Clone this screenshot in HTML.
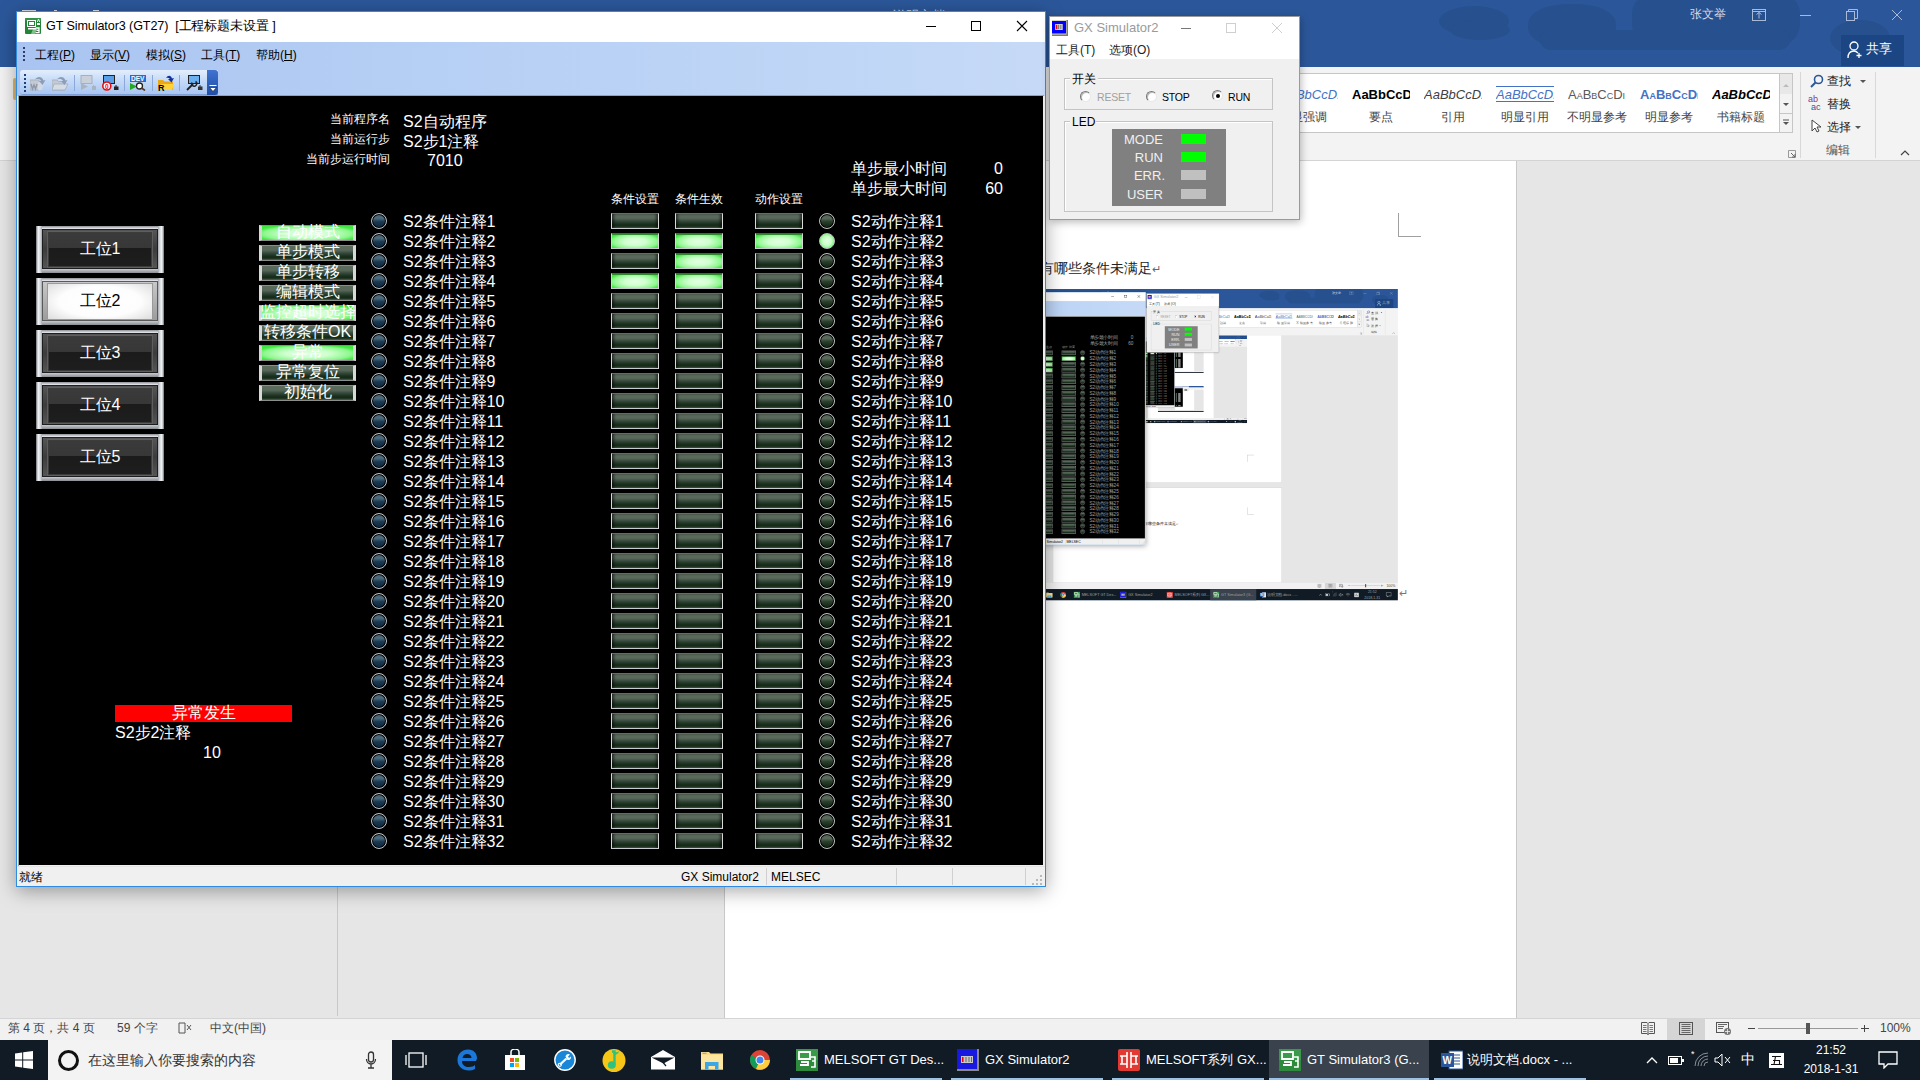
<!DOCTYPE html>
<html><head><meta charset="utf-8"><style>
html,body{margin:0;padding:0;}
body{width:1920px;height:1080px;overflow:hidden;position:relative;font-family:"Liberation Sans", sans-serif;background:#e6e6e6}
.scr{position:absolute;left:0;top:0;width:1920px;height:1080px;overflow:hidden}
</style></head><body><div class="scr"><div style="position:absolute;left:0px;top:0px;width:1920px;height:67px;background:#2b579a"></div><div style="position:absolute;left:1439px;top:6px;width:70px;height:30px;background:#27508e;border-radius:50%"></div><div style="position:absolute;left:1450px;top:20px;width:60px;height:20px;background:#27508e;border-radius:50%"></div><div style="position:absolute;left:1528px;top:4px;width:88px;height:44px;background:#27508e;border-radius:45%"></div><div style="position:absolute;left:1540px;top:25px;width:70px;height:22px;background:#27508e;border-radius:50%"></div><div style="position:absolute;left:1632px;top:-8px;width:168px;height:54px;background:#27508e;border-radius:22px"></div><div style="position:absolute;left:1690px;top:20px;width:100px;height:26px;background:#27508e;border-radius:50%"></div><div style="position:absolute;left:1830px;top:20px;width:60px;height:36px;background:#27508e;border-radius:50%"></div><div style="position:absolute;left:1540px;top:30px;width:250px;height:20px;background:#27508e;border-radius:10px"></div><div style="position:absolute;left:1690px;top:8px;font-size:12px;line-height:12px;color:#d2dbea;white-space:nowrap;">张文举</div><div style="position:absolute;left:893px;top:9px;font-size:13px;line-height:13px;color:#c8d4e6;white-space:nowrap;">说明文档.docx - Word</div><div style="position:absolute;left:22px;top:10px;width:14px;height:1px;background:#d8e0ec"></div><div style="position:absolute;left:54px;top:10px;width:3px;height:1px;background:#d8e0ec"></div><div style="position:absolute;left:93px;top:10px;width:6px;height:1px;background:#d8e0ec"></div><svg width="14" height="12" viewBox="0 0 14 12" style="position:absolute;left:1752px;top:9px"><rect x="0.5" y="0.5" width="13" height="11" fill="none" stroke="#a9bad6"/><path d="M0.5 2.5h13M4.5 5.5l2.5-2 2.5 2M7 3.5v6" fill="none" stroke="#a9bad6"/></svg><div style="position:absolute;left:1800px;top:15px;width:11px;height:1px;background:#a9bad6"></div><svg width="12" height="12" viewBox="0 0 12 12" style="position:absolute;left:1846px;top:9px"><rect x="0.5" y="2.5" width="8" height="9" fill="none" stroke="#a9bad6"/><path d="M2.5 2.5v-2h9v9h-3" fill="none" stroke="#a9bad6"/></svg><svg width="14" height="14" viewBox="0 0 14 14" style="position:absolute;left:1891px;top:9px"><path d="M1 1L11 11M11 1L1 11" stroke="#a9bad6" stroke-width="1"/></svg><div style="position:absolute;left:1841px;top:35px;width:63px;height:31px;background:#1b4683"></div><svg width="16" height="18" viewBox="0 0 16 18" style="position:absolute;left:1847px;top:41px"><circle cx="7" cy="5" r="4" fill="none" stroke="#fff" stroke-width="1.3"/><path d="M1 17c0-5 3-7 6-7 2 0 3 1 4 2" fill="none" stroke="#fff" stroke-width="1.3"/><path d="M12 12v5M9.5 14.5h5" stroke="#fff" stroke-width="1.3"/></svg><div style="position:absolute;left:1866px;top:42px;font-size:13px;line-height:13px;color:#fff;white-space:nowrap;">共享</div><div style="position:absolute;left:0px;top:67px;width:1920px;height:94px;background:#f3f3f3;border-bottom:1px solid #d4d4d4;box-sizing:border-box"></div><div style="position:absolute;left:13px;top:78px;width:4px;height:22px;background:#e1b86b;border-radius:2px"></div><div style="position:absolute;left:1280px;top:73px;width:500px;height:60px;background:#fff;border:1px solid #c6c6c6;box-sizing:border-box"></div><div style="position:absolute;left:1779px;top:73px;width:14px;height:60px;background:#f3f3f3;border:1px solid #c6c6c6;box-sizing:border-box"></div><div style="position:absolute;left:1780px;top:74px;width:12px;height:20px;background:#e8e8e8"></div><svg width="10" height="6" viewBox="0 0 10 6" style="position:absolute;left:1781px;top:82px"><path d="M2 5l3-3 3 3z" fill="#bbb"/></svg><svg width="10" height="6" viewBox="0 0 10 6" style="position:absolute;left:1781px;top:102px"><path d="M2 1l3 3 3-3z" fill="#555"/></svg><div style="position:absolute;left:1780px;top:113px;width:12px;height:1px;background:#c6c6c6"></div><svg width="10" height="8" viewBox="0 0 10 8" style="position:absolute;left:1781px;top:119px"><path d="M2 1h6" stroke="#555"/><path d="M2 3l3 3 3-3z" fill="#555"/></svg><div style="position:absolute;left:1280px;top:86px;width:58px;height:16px;overflow:hidden"><div style="position:absolute;left:0px;top:2px;font-size:13px;line-height:13px;color:#000;white-space:nowrap;"><span style="font-style:italic;color:#4472c4">AaBbCcD.</span></div></div><div style="position:absolute;left:1269px;top:111px;width:80px;font-size:12px;line-height:12px;color:#444;white-space:nowrap;text-align:center;">显强调</div><div style="position:absolute;left:1352px;top:86px;width:58px;height:16px;overflow:hidden"><div style="position:absolute;left:0px;top:2px;font-size:13px;line-height:13px;color:#000;white-space:nowrap;"><span style="font-weight:bold;color:#000">AaBbCcD.</span></div></div><div style="position:absolute;left:1341px;top:111px;width:80px;font-size:12px;line-height:12px;color:#444;white-space:nowrap;text-align:center;">要点</div><div style="position:absolute;left:1424px;top:86px;width:58px;height:16px;overflow:hidden"><div style="position:absolute;left:0px;top:2px;font-size:13px;line-height:13px;color:#000;white-space:nowrap;"><span style="font-style:italic;color:#404040">AaBbCcD.</span></div></div><div style="position:absolute;left:1413px;top:111px;width:80px;font-size:12px;line-height:12px;color:#444;white-space:nowrap;text-align:center;">引用</div><div style="position:absolute;left:1496px;top:86px;width:58px;height:16px;overflow:hidden"><div style="position:absolute;left:0px;top:2px;font-size:13px;line-height:13px;color:#000;white-space:nowrap;"><span style="font-style:italic;color:#4472c4">AaBbCcD.</span></div></div><div style="position:absolute;left:1485px;top:111px;width:80px;font-size:12px;line-height:12px;color:#444;white-space:nowrap;text-align:center;">明显引用</div><div style="position:absolute;left:1568px;top:86px;width:58px;height:16px;overflow:hidden"><div style="position:absolute;left:0px;top:2px;font-size:13px;line-height:13px;color:#000;white-space:nowrap;"><span style="font-variant:small-caps;color:#595959">AaBbCcDı</span></div></div><div style="position:absolute;left:1557px;top:111px;width:80px;font-size:12px;line-height:12px;color:#444;white-space:nowrap;text-align:center;">不明显参考</div><div style="position:absolute;left:1640px;top:86px;width:58px;height:16px;overflow:hidden"><div style="position:absolute;left:0px;top:2px;font-size:13px;line-height:13px;color:#000;white-space:nowrap;"><span style="font-variant:small-caps;color:#4472c4;font-weight:bold">AaBbCcDı</span></div></div><div style="position:absolute;left:1629px;top:111px;width:80px;font-size:12px;line-height:12px;color:#444;white-space:nowrap;text-align:center;">明显参考</div><div style="position:absolute;left:1712px;top:86px;width:58px;height:16px;overflow:hidden"><div style="position:absolute;left:0px;top:2px;font-size:13px;line-height:13px;color:#000;white-space:nowrap;"><span style="font-style:italic;font-weight:bold;color:#000">AaBbCcD</span></div></div><div style="position:absolute;left:1701px;top:111px;width:80px;font-size:12px;line-height:12px;color:#444;white-space:nowrap;text-align:center;">书籍标题</div><div style="position:absolute;left:1496px;top:86px;width:58px;height:1px;background:#4472c4"></div><div style="position:absolute;left:1496px;top:101px;width:58px;height:1px;background:#4472c4"></div><div style="position:absolute;left:1303px;top:74px;width:30px;height:58px;background:transparent"></div><svg width="8" height="8" viewBox="0 0 8 8" style="position:absolute;left:1788px;top:150px"><path d="M0.5 0.5h7v7h-7z" fill="none" stroke="#999"/><path d="M3 3l4 4M7 4v3h-3" stroke="#666" fill="none"/></svg><div style="position:absolute;left:1800px;top:72px;width:1px;height:86px;background:#d8d8d8"></div><div style="position:absolute;left:1875px;top:72px;width:1px;height:86px;background:#d8d8d8"></div><svg width="14" height="14" viewBox="0 0 14 14" style="position:absolute;left:1810px;top:74px"><circle cx="8.5" cy="5.5" r="4" fill="none" stroke="#2b579a" stroke-width="1.6"/><path d="M5.5 8.5L1 13" stroke="#2b579a" stroke-width="2"/></svg><div style="position:absolute;left:1827px;top:75px;font-size:12px;line-height:12px;color:#222;white-space:nowrap;">查找</div><svg width="6" height="4" viewBox="0 0 6 4" style="position:absolute;left:1860px;top:80px"><path d="M0 0h6l-3 3z" fill="#555"/></svg><div style="position:absolute;left:1808px;top:95px;font-size:9px;line-height:9px;color:#7a3b9f;white-space:nowrap;"><span style="font-size:9px;line-height:8px;color:#7a3b9f">ab</span></div><div style="position:absolute;left:1811px;top:103px;font-size:9px;line-height:9px;color:#2b579a;white-space:nowrap;"><span style="font-size:9px;color:#2b579a">ac</span></div><div style="position:absolute;left:1827px;top:98px;font-size:12px;line-height:12px;color:#222;white-space:nowrap;">替换</div><svg width="12" height="14" viewBox="0 0 12 14" style="position:absolute;left:1811px;top:119px"><path d="M1 1v11l3-3 2 4 2-1-2-4h4z" fill="#fff" stroke="#444"/></svg><div style="position:absolute;left:1827px;top:121px;font-size:12px;line-height:12px;color:#222;white-space:nowrap;">选择</div><svg width="6" height="4" viewBox="0 0 6 4" style="position:absolute;left:1855px;top:126px"><path d="M0 0h6l-3 3z" fill="#555"/></svg><div style="position:absolute;left:1810px;top:144px;width:56px;font-size:12px;line-height:12px;color:#555;white-space:nowrap;text-align:center;">编辑</div><svg width="10" height="6" viewBox="0 0 10 6" style="position:absolute;left:1900px;top:150px"><path d="M1 5l4-4 4 4" fill="none" stroke="#444" stroke-width="1.2"/></svg><div style="position:absolute;left:0px;top:161px;width:1920px;height:857px;background:#e6e6e6"></div><div style="position:absolute;left:337px;top:161px;width:1px;height:855px;background:#c8c8c8"></div><div style="position:absolute;left:724px;top:161px;width:793px;height:857px;background:#fff;border-left:1px solid #c8c8c8;border-right:1px solid #c8c8c8;box-sizing:border-box"></div><div style="position:absolute;left:1398px;top:213px;width:1px;height:24px;background:#a0a0a0"></div><div style="position:absolute;left:1398px;top:236px;width:23px;height:1px;background:#a0a0a0"></div><div style="position:absolute;left:1040px;top:261px;font-size:14px;line-height:14px;color:#222;white-space:nowrap;">有哪些条件未满足<span style="font-size:11px;color:#666">&#8629;</span></div><div style="position:absolute;left:1046px;top:289px;width:352px;height:312px;overflow:hidden"><div style="position:absolute;left:-202px;top:0px;width:1920px;height:1080px;transform:scale(0.2885);transform-origin:0 0;overflow:hidden"><div style="position:absolute;left:0px;top:0px;width:1920px;height:67px;background:#2b579a"></div><div style="position:absolute;left:1439px;top:6px;width:70px;height:30px;background:#27508e;border-radius:50%"></div><div style="position:absolute;left:1450px;top:20px;width:60px;height:20px;background:#27508e;border-radius:50%"></div><div style="position:absolute;left:1528px;top:4px;width:88px;height:44px;background:#27508e;border-radius:45%"></div><div style="position:absolute;left:1540px;top:25px;width:70px;height:22px;background:#27508e;border-radius:50%"></div><div style="position:absolute;left:1632px;top:-8px;width:168px;height:54px;background:#27508e;border-radius:22px"></div><div style="position:absolute;left:1690px;top:20px;width:100px;height:26px;background:#27508e;border-radius:50%"></div><div style="position:absolute;left:1830px;top:20px;width:60px;height:36px;background:#27508e;border-radius:50%"></div><div style="position:absolute;left:1540px;top:30px;width:250px;height:20px;background:#27508e;border-radius:10px"></div><div style="position:absolute;left:1690px;top:8px;font-size:12px;line-height:12px;color:#d2dbea;white-space:nowrap;">张文举</div><div style="position:absolute;left:893px;top:9px;font-size:13px;line-height:13px;color:#c8d4e6;white-space:nowrap;">说明文档.docx - Word</div><div style="position:absolute;left:22px;top:10px;width:14px;height:1px;background:#d8e0ec"></div><div style="position:absolute;left:54px;top:10px;width:3px;height:1px;background:#d8e0ec"></div><div style="position:absolute;left:93px;top:10px;width:6px;height:1px;background:#d8e0ec"></div><svg width="14" height="12" viewBox="0 0 14 12" style="position:absolute;left:1752px;top:9px"><rect x="0.5" y="0.5" width="13" height="11" fill="none" stroke="#a9bad6"/><path d="M0.5 2.5h13M4.5 5.5l2.5-2 2.5 2M7 3.5v6" fill="none" stroke="#a9bad6"/></svg><div style="position:absolute;left:1800px;top:15px;width:11px;height:1px;background:#a9bad6"></div><svg width="12" height="12" viewBox="0 0 12 12" style="position:absolute;left:1846px;top:9px"><rect x="0.5" y="2.5" width="8" height="9" fill="none" stroke="#a9bad6"/><path d="M2.5 2.5v-2h9v9h-3" fill="none" stroke="#a9bad6"/></svg><svg width="14" height="14" viewBox="0 0 14 14" style="position:absolute;left:1891px;top:9px"><path d="M1 1L11 11M11 1L1 11" stroke="#a9bad6" stroke-width="1"/></svg><div style="position:absolute;left:1841px;top:35px;width:63px;height:31px;background:#1b4683"></div><svg width="16" height="18" viewBox="0 0 16 18" style="position:absolute;left:1847px;top:41px"><circle cx="7" cy="5" r="4" fill="none" stroke="#fff" stroke-width="1.3"/><path d="M1 17c0-5 3-7 6-7 2 0 3 1 4 2" fill="none" stroke="#fff" stroke-width="1.3"/><path d="M12 12v5M9.5 14.5h5" stroke="#fff" stroke-width="1.3"/></svg><div style="position:absolute;left:1866px;top:42px;font-size:13px;line-height:13px;color:#a0a0a0;white-space:nowrap;">共享</div><div style="position:absolute;left:0px;top:67px;width:1920px;height:94px;background:#f3f3f3;border-bottom:1px solid #d4d4d4;box-sizing:border-box"></div><div style="position:absolute;left:13px;top:78px;width:4px;height:22px;background:#e1b86b;border-radius:2px"></div><div style="position:absolute;left:1280px;top:73px;width:500px;height:60px;background:#fff;border:1px solid #c6c6c6;box-sizing:border-box"></div><div style="position:absolute;left:1779px;top:73px;width:14px;height:60px;background:#f3f3f3;border:1px solid #c6c6c6;box-sizing:border-box"></div><div style="position:absolute;left:1780px;top:74px;width:12px;height:20px;background:#e8e8e8"></div><svg width="10" height="6" viewBox="0 0 10 6" style="position:absolute;left:1781px;top:82px"><path d="M2 5l3-3 3 3z" fill="#bbb"/></svg><svg width="10" height="6" viewBox="0 0 10 6" style="position:absolute;left:1781px;top:102px"><path d="M2 1l3 3 3-3z" fill="#555"/></svg><div style="position:absolute;left:1780px;top:113px;width:12px;height:1px;background:#c6c6c6"></div><svg width="10" height="8" viewBox="0 0 10 8" style="position:absolute;left:1781px;top:119px"><path d="M2 1h6" stroke="#555"/><path d="M2 3l3 3 3-3z" fill="#555"/></svg><div style="position:absolute;left:1280px;top:86px;width:58px;height:16px;overflow:hidden"><div style="position:absolute;left:0px;top:2px;font-size:13px;line-height:13px;color:#000;white-space:nowrap;"><span style="font-style:italic;color:#4472c4">AaBbCcD.</span></div></div><div style="position:absolute;left:1269px;top:111px;width:80px;font-size:12px;line-height:12px;color:#444;white-space:nowrap;text-align:center;">显强调</div><div style="position:absolute;left:1352px;top:86px;width:58px;height:16px;overflow:hidden"><div style="position:absolute;left:0px;top:2px;font-size:13px;line-height:13px;color:#000;white-space:nowrap;"><span style="font-weight:bold;color:#000">AaBbCcD.</span></div></div><div style="position:absolute;left:1341px;top:111px;width:80px;font-size:12px;line-height:12px;color:#444;white-space:nowrap;text-align:center;">要点</div><div style="position:absolute;left:1424px;top:86px;width:58px;height:16px;overflow:hidden"><div style="position:absolute;left:0px;top:2px;font-size:13px;line-height:13px;color:#000;white-space:nowrap;"><span style="font-style:italic;color:#404040">AaBbCcD.</span></div></div><div style="position:absolute;left:1413px;top:111px;width:80px;font-size:12px;line-height:12px;color:#444;white-space:nowrap;text-align:center;">引用</div><div style="position:absolute;left:1496px;top:86px;width:58px;height:16px;overflow:hidden"><div style="position:absolute;left:0px;top:2px;font-size:13px;line-height:13px;color:#000;white-space:nowrap;"><span style="font-style:italic;color:#4472c4">AaBbCcD.</span></div></div><div style="position:absolute;left:1485px;top:111px;width:80px;font-size:12px;line-height:12px;color:#444;white-space:nowrap;text-align:center;">明显引用</div><div style="position:absolute;left:1568px;top:86px;width:58px;height:16px;overflow:hidden"><div style="position:absolute;left:0px;top:2px;font-size:13px;line-height:13px;color:#000;white-space:nowrap;"><span style="font-variant:small-caps;color:#595959">AaBbCcDı</span></div></div><div style="position:absolute;left:1557px;top:111px;width:80px;font-size:12px;line-height:12px;color:#444;white-space:nowrap;text-align:center;">不明显参考</div><div style="position:absolute;left:1640px;top:86px;width:58px;height:16px;overflow:hidden"><div style="position:absolute;left:0px;top:2px;font-size:13px;line-height:13px;color:#000;white-space:nowrap;"><span style="font-variant:small-caps;color:#4472c4;font-weight:bold">AaBbCcDı</span></div></div><div style="position:absolute;left:1629px;top:111px;width:80px;font-size:12px;line-height:12px;color:#444;white-space:nowrap;text-align:center;">明显参考</div><div style="position:absolute;left:1712px;top:86px;width:58px;height:16px;overflow:hidden"><div style="position:absolute;left:0px;top:2px;font-size:13px;line-height:13px;color:#000;white-space:nowrap;"><span style="font-style:italic;font-weight:bold;color:#000">AaBbCcD</span></div></div><div style="position:absolute;left:1701px;top:111px;width:80px;font-size:12px;line-height:12px;color:#444;white-space:nowrap;text-align:center;">书籍标题</div><div style="position:absolute;left:1496px;top:86px;width:58px;height:1px;background:#4472c4"></div><div style="position:absolute;left:1496px;top:101px;width:58px;height:1px;background:#4472c4"></div><div style="position:absolute;left:1303px;top:74px;width:30px;height:58px;background:transparent"></div><svg width="8" height="8" viewBox="0 0 8 8" style="position:absolute;left:1788px;top:150px"><path d="M0.5 0.5h7v7h-7z" fill="none" stroke="#999"/><path d="M3 3l4 4M7 4v3h-3" stroke="#666" fill="none"/></svg><div style="position:absolute;left:1800px;top:72px;width:1px;height:86px;background:#d8d8d8"></div><div style="position:absolute;left:1875px;top:72px;width:1px;height:86px;background:#d8d8d8"></div><svg width="14" height="14" viewBox="0 0 14 14" style="position:absolute;left:1810px;top:74px"><circle cx="8.5" cy="5.5" r="4" fill="none" stroke="#2b579a" stroke-width="1.6"/><path d="M5.5 8.5L1 13" stroke="#2b579a" stroke-width="2"/></svg><div style="position:absolute;left:1827px;top:75px;font-size:12px;line-height:12px;color:#222;white-space:nowrap;">查找</div><svg width="6" height="4" viewBox="0 0 6 4" style="position:absolute;left:1860px;top:80px"><path d="M0 0h6l-3 3z" fill="#555"/></svg><div style="position:absolute;left:1808px;top:95px;font-size:9px;line-height:9px;color:#7a3b9f;white-space:nowrap;"><span style="font-size:9px;line-height:8px;color:#7a3b9f">ab</span></div><div style="position:absolute;left:1811px;top:103px;font-size:9px;line-height:9px;color:#2b579a;white-space:nowrap;"><span style="font-size:9px;color:#2b579a">ac</span></div><div style="position:absolute;left:1827px;top:98px;font-size:12px;line-height:12px;color:#222;white-space:nowrap;">替换</div><svg width="12" height="14" viewBox="0 0 12 14" style="position:absolute;left:1811px;top:119px"><path d="M1 1v11l3-3 2 4 2-1-2-4h4z" fill="#fff" stroke="#444"/></svg><div style="position:absolute;left:1827px;top:121px;font-size:12px;line-height:12px;color:#222;white-space:nowrap;">选择</div><svg width="6" height="4" viewBox="0 0 6 4" style="position:absolute;left:1855px;top:126px"><path d="M0 0h6l-3 3z" fill="#555"/></svg><div style="position:absolute;left:1810px;top:144px;width:56px;font-size:12px;line-height:12px;color:#555;white-space:nowrap;text-align:center;">编辑</div><svg width="10" height="6" viewBox="0 0 10 6" style="position:absolute;left:1900px;top:150px"><path d="M1 5l4-4 4 4" fill="none" stroke="#444" stroke-width="1.2"/></svg><div style="position:absolute;left:0px;top:161px;width:1920px;height:857px;background:#e6e6e6"></div><div style="position:absolute;left:337px;top:161px;width:1px;height:855px;background:#c8c8c8"></div><div style="position:absolute;left:724px;top:161px;width:793px;height:857px;background:#fff;border-left:1px solid #c8c8c8;border-right:1px solid #c8c8c8;box-sizing:border-box"></div><div style="position:absolute;left:844px;top:161px;width:554px;height:305px;overflow:hidden"><div style="position:absolute;left:0px;top:-7px;width:1920px;height:1080px;transform:scale(0.2885);transform-origin:0 0;overflow:hidden"><div style="position:absolute;left:0px;top:0px;width:1920px;height:67px;background:#2b579a"></div><div style="position:absolute;left:1439px;top:6px;width:70px;height:30px;background:#27508e;border-radius:50%"></div><div style="position:absolute;left:1450px;top:20px;width:60px;height:20px;background:#27508e;border-radius:50%"></div><div style="position:absolute;left:1528px;top:4px;width:88px;height:44px;background:#27508e;border-radius:45%"></div><div style="position:absolute;left:1540px;top:25px;width:70px;height:22px;background:#27508e;border-radius:50%"></div><div style="position:absolute;left:1632px;top:-8px;width:168px;height:54px;background:#27508e;border-radius:22px"></div><div style="position:absolute;left:1690px;top:20px;width:100px;height:26px;background:#27508e;border-radius:50%"></div><div style="position:absolute;left:1830px;top:20px;width:60px;height:36px;background:#27508e;border-radius:50%"></div><div style="position:absolute;left:1540px;top:30px;width:250px;height:20px;background:#27508e;border-radius:10px"></div><div style="position:absolute;left:1690px;top:8px;font-size:12px;line-height:12px;color:#d2dbea;white-space:nowrap;">张文举</div><div style="position:absolute;left:893px;top:9px;font-size:13px;line-height:13px;color:#c8d4e6;white-space:nowrap;">说明文档.docx - Word</div><div style="position:absolute;left:22px;top:10px;width:14px;height:1px;background:#d8e0ec"></div><div style="position:absolute;left:54px;top:10px;width:3px;height:1px;background:#d8e0ec"></div><div style="position:absolute;left:93px;top:10px;width:6px;height:1px;background:#d8e0ec"></div><svg width="14" height="12" viewBox="0 0 14 12" style="position:absolute;left:1752px;top:9px"><rect x="0.5" y="0.5" width="13" height="11" fill="none" stroke="#a9bad6"/><path d="M0.5 2.5h13M4.5 5.5l2.5-2 2.5 2M7 3.5v6" fill="none" stroke="#a9bad6"/></svg><div style="position:absolute;left:1800px;top:15px;width:11px;height:1px;background:#a9bad6"></div><svg width="12" height="12" viewBox="0 0 12 12" style="position:absolute;left:1846px;top:9px"><rect x="0.5" y="2.5" width="8" height="9" fill="none" stroke="#a9bad6"/><path d="M2.5 2.5v-2h9v9h-3" fill="none" stroke="#a9bad6"/></svg><svg width="14" height="14" viewBox="0 0 14 14" style="position:absolute;left:1891px;top:9px"><path d="M1 1L11 11M11 1L1 11" stroke="#a9bad6" stroke-width="1"/></svg><div style="position:absolute;left:1841px;top:35px;width:63px;height:31px;background:#1b4683"></div><svg width="16" height="18" viewBox="0 0 16 18" style="position:absolute;left:1847px;top:41px"><circle cx="7" cy="5" r="4" fill="none" stroke="#fff" stroke-width="1.3"/><path d="M1 17c0-5 3-7 6-7 2 0 3 1 4 2" fill="none" stroke="#fff" stroke-width="1.3"/><path d="M12 12v5M9.5 14.5h5" stroke="#fff" stroke-width="1.3"/></svg><div style="position:absolute;left:1866px;top:42px;font-size:13px;line-height:13px;color:#a0a0a0;white-space:nowrap;">共享</div><div style="position:absolute;left:0px;top:67px;width:1920px;height:94px;background:#f3f3f3;border-bottom:1px solid #d4d4d4;box-sizing:border-box"></div><div style="position:absolute;left:13px;top:78px;width:4px;height:22px;background:#e1b86b;border-radius:2px"></div><div style="position:absolute;left:1280px;top:73px;width:500px;height:60px;background:#fff;border:1px solid #c6c6c6;box-sizing:border-box"></div><div style="position:absolute;left:1779px;top:73px;width:14px;height:60px;background:#f3f3f3;border:1px solid #c6c6c6;box-sizing:border-box"></div><div style="position:absolute;left:1780px;top:74px;width:12px;height:20px;background:#e8e8e8"></div><svg width="10" height="6" viewBox="0 0 10 6" style="position:absolute;left:1781px;top:82px"><path d="M2 5l3-3 3 3z" fill="#bbb"/></svg><svg width="10" height="6" viewBox="0 0 10 6" style="position:absolute;left:1781px;top:102px"><path d="M2 1l3 3 3-3z" fill="#555"/></svg><div style="position:absolute;left:1780px;top:113px;width:12px;height:1px;background:#c6c6c6"></div><svg width="10" height="8" viewBox="0 0 10 8" style="position:absolute;left:1781px;top:119px"><path d="M2 1h6" stroke="#555"/><path d="M2 3l3 3 3-3z" fill="#555"/></svg><div style="position:absolute;left:1280px;top:86px;width:58px;height:16px;overflow:hidden"><div style="position:absolute;left:0px;top:2px;font-size:13px;line-height:13px;color:#000;white-space:nowrap;"><span style="font-style:italic;color:#4472c4">AaBbCcD.</span></div></div><div style="position:absolute;left:1269px;top:111px;width:80px;font-size:12px;line-height:12px;color:#444;white-space:nowrap;text-align:center;">显强调</div><div style="position:absolute;left:1352px;top:86px;width:58px;height:16px;overflow:hidden"><div style="position:absolute;left:0px;top:2px;font-size:13px;line-height:13px;color:#000;white-space:nowrap;"><span style="font-weight:bold;color:#000">AaBbCcD.</span></div></div><div style="position:absolute;left:1341px;top:111px;width:80px;font-size:12px;line-height:12px;color:#444;white-space:nowrap;text-align:center;">要点</div><div style="position:absolute;left:1424px;top:86px;width:58px;height:16px;overflow:hidden"><div style="position:absolute;left:0px;top:2px;font-size:13px;line-height:13px;color:#000;white-space:nowrap;"><span style="font-style:italic;color:#404040">AaBbCcD.</span></div></div><div style="position:absolute;left:1413px;top:111px;width:80px;font-size:12px;line-height:12px;color:#444;white-space:nowrap;text-align:center;">引用</div><div style="position:absolute;left:1496px;top:86px;width:58px;height:16px;overflow:hidden"><div style="position:absolute;left:0px;top:2px;font-size:13px;line-height:13px;color:#000;white-space:nowrap;"><span style="font-style:italic;color:#4472c4">AaBbCcD.</span></div></div><div style="position:absolute;left:1485px;top:111px;width:80px;font-size:12px;line-height:12px;color:#444;white-space:nowrap;text-align:center;">明显引用</div><div style="position:absolute;left:1568px;top:86px;width:58px;height:16px;overflow:hidden"><div style="position:absolute;left:0px;top:2px;font-size:13px;line-height:13px;color:#000;white-space:nowrap;"><span style="font-variant:small-caps;color:#595959">AaBbCcDı</span></div></div><div style="position:absolute;left:1557px;top:111px;width:80px;font-size:12px;line-height:12px;color:#444;white-space:nowrap;text-align:center;">不明显参考</div><div style="position:absolute;left:1640px;top:86px;width:58px;height:16px;overflow:hidden"><div style="position:absolute;left:0px;top:2px;font-size:13px;line-height:13px;color:#000;white-space:nowrap;"><span style="font-variant:small-caps;color:#4472c4;font-weight:bold">AaBbCcDı</span></div></div><div style="position:absolute;left:1629px;top:111px;width:80px;font-size:12px;line-height:12px;color:#444;white-space:nowrap;text-align:center;">明显参考</div><div style="position:absolute;left:1712px;top:86px;width:58px;height:16px;overflow:hidden"><div style="position:absolute;left:0px;top:2px;font-size:13px;line-height:13px;color:#000;white-space:nowrap;"><span style="font-style:italic;font-weight:bold;color:#000">AaBbCcD</span></div></div><div style="position:absolute;left:1701px;top:111px;width:80px;font-size:12px;line-height:12px;color:#444;white-space:nowrap;text-align:center;">书籍标题</div><div style="position:absolute;left:1496px;top:86px;width:58px;height:1px;background:#4472c4"></div><div style="position:absolute;left:1496px;top:101px;width:58px;height:1px;background:#4472c4"></div><div style="position:absolute;left:1303px;top:74px;width:30px;height:58px;background:transparent"></div><svg width="8" height="8" viewBox="0 0 8 8" style="position:absolute;left:1788px;top:150px"><path d="M0.5 0.5h7v7h-7z" fill="none" stroke="#999"/><path d="M3 3l4 4M7 4v3h-3" stroke="#666" fill="none"/></svg><div style="position:absolute;left:1800px;top:72px;width:1px;height:86px;background:#d8d8d8"></div><div style="position:absolute;left:1875px;top:72px;width:1px;height:86px;background:#d8d8d8"></div><svg width="14" height="14" viewBox="0 0 14 14" style="position:absolute;left:1810px;top:74px"><circle cx="8.5" cy="5.5" r="4" fill="none" stroke="#2b579a" stroke-width="1.6"/><path d="M5.5 8.5L1 13" stroke="#2b579a" stroke-width="2"/></svg><div style="position:absolute;left:1827px;top:75px;font-size:12px;line-height:12px;color:#222;white-space:nowrap;">查找</div><svg width="6" height="4" viewBox="0 0 6 4" style="position:absolute;left:1860px;top:80px"><path d="M0 0h6l-3 3z" fill="#555"/></svg><div style="position:absolute;left:1808px;top:95px;font-size:9px;line-height:9px;color:#7a3b9f;white-space:nowrap;"><span style="font-size:9px;line-height:8px;color:#7a3b9f">ab</span></div><div style="position:absolute;left:1811px;top:103px;font-size:9px;line-height:9px;color:#2b579a;white-space:nowrap;"><span style="font-size:9px;color:#2b579a">ac</span></div><div style="position:absolute;left:1827px;top:98px;font-size:12px;line-height:12px;color:#222;white-space:nowrap;">替换</div><svg width="12" height="14" viewBox="0 0 12 14" style="position:absolute;left:1811px;top:119px"><path d="M1 1v11l3-3 2 4 2-1-2-4h4z" fill="#fff" stroke="#444"/></svg><div style="position:absolute;left:1827px;top:121px;font-size:12px;line-height:12px;color:#222;white-space:nowrap;">选择</div><svg width="6" height="4" viewBox="0 0 6 4" style="position:absolute;left:1855px;top:126px"><path d="M0 0h6l-3 3z" fill="#555"/></svg><div style="position:absolute;left:1810px;top:144px;width:56px;font-size:12px;line-height:12px;color:#555;white-space:nowrap;text-align:center;">编辑</div><svg width="10" height="6" viewBox="0 0 10 6" style="position:absolute;left:1900px;top:150px"><path d="M1 5l4-4 4 4" fill="none" stroke="#444" stroke-width="1.2"/></svg><div style="position:absolute;left:0px;top:161px;width:1920px;height:857px;background:#e6e6e6"></div><div style="position:absolute;left:337px;top:161px;width:1px;height:855px;background:#c8c8c8"></div><div style="position:absolute;left:724px;top:161px;width:793px;height:857px;background:#fff;border-left:1px solid #c8c8c8;border-right:1px solid #c8c8c8;box-sizing:border-box"></div><div style="position:absolute;left:844px;top:165px;width:554px;height:312px;overflow:hidden"><div style="position:absolute;left:0px;top:0px;width:1920px;height:1080px;transform:scale(0.2885);transform-origin:0 0;overflow:hidden"><div style="position:absolute;left:0px;top:0px;width:1920px;height:67px;background:#2b579a"></div><div style="position:absolute;left:0px;top:67px;width:1920px;height:94px;background:#f3f3f3"></div><div style="position:absolute;left:0px;top:161px;width:1920px;height:857px;background:#e6e6e6"></div><div style="position:absolute;left:724px;top:161px;width:793px;height:857px;background:#fff"></div><div style="position:absolute;left:0px;top:1018px;width:1920px;height:22px;background:#f1f1f1"></div><div style="position:absolute;left:0px;top:1040px;width:1920px;height:40px;background:#111b25"></div><div style="position:absolute;left:16px;top:11px;width:1030px;height:876px;background:#f0f0f0;border:1px solid #2f8be0;box-sizing:border-box"></div><div style="position:absolute;left:17px;top:42px;width:1028px;height:54px;background:#b6cff4"></div><div style="position:absolute;left:18px;top:96px;width:1026px;height:769px;background:#000"></div><div style="position:absolute;left:611px;top:213px;width:48px;height:636px;background:repeating-linear-gradient(180deg,#4a5a4b 0 16px,#000 16px 20px)"></div><div style="position:absolute;left:675px;top:213px;width:48px;height:636px;background:repeating-linear-gradient(180deg,#4a5a4b 0 16px,#000 16px 20px)"></div><div style="position:absolute;left:755px;top:213px;width:48px;height:636px;background:repeating-linear-gradient(180deg,#4a5a4b 0 16px,#000 16px 20px)"></div><div style="position:absolute;left:403px;top:213px;width:100px;height:636px;background:repeating-linear-gradient(180deg,#888 0 16px,#000 16px 20px)"></div><div style="position:absolute;left:851px;top:213px;width:100px;height:636px;background:repeating-linear-gradient(180deg,#888 0 16px,#000 16px 20px)"></div><div style="position:absolute;left:1049px;top:16px;width:251px;height:204px;background:#f0f0f0;border:1px solid #9a9a9a;box-sizing:border-box"></div><div style="position:absolute;left:1112px;top:129px;width:114px;height:77px;background:#808080"></div></div></div><div style="position:absolute;left:844px;top:631px;width:554px;height:312px;overflow:hidden"><div style="position:absolute;left:0px;top:0px;width:1920px;height:1080px;transform:scale(0.2885);transform-origin:0 0;overflow:hidden"><div style="position:absolute;left:0px;top:0px;width:1920px;height:67px;background:#2b579a"></div><div style="position:absolute;left:0px;top:67px;width:1920px;height:94px;background:#f3f3f3"></div><div style="position:absolute;left:0px;top:161px;width:1920px;height:857px;background:#e6e6e6"></div><div style="position:absolute;left:724px;top:161px;width:793px;height:857px;background:#fff"></div><div style="position:absolute;left:0px;top:1018px;width:1920px;height:22px;background:#f1f1f1"></div><div style="position:absolute;left:0px;top:1040px;width:1920px;height:40px;background:#111b25"></div><div style="position:absolute;left:16px;top:11px;width:1030px;height:876px;background:#f0f0f0;border:1px solid #2f8be0;box-sizing:border-box"></div><div style="position:absolute;left:17px;top:42px;width:1028px;height:54px;background:#b6cff4"></div><div style="position:absolute;left:18px;top:96px;width:1026px;height:769px;background:#000"></div><div style="position:absolute;left:611px;top:213px;width:48px;height:636px;background:repeating-linear-gradient(180deg,#4a5a4b 0 16px,#000 16px 20px)"></div><div style="position:absolute;left:675px;top:213px;width:48px;height:636px;background:repeating-linear-gradient(180deg,#4a5a4b 0 16px,#000 16px 20px)"></div><div style="position:absolute;left:755px;top:213px;width:48px;height:636px;background:repeating-linear-gradient(180deg,#4a5a4b 0 16px,#000 16px 20px)"></div><div style="position:absolute;left:403px;top:213px;width:100px;height:636px;background:repeating-linear-gradient(180deg,#888 0 16px,#000 16px 20px)"></div><div style="position:absolute;left:851px;top:213px;width:100px;height:636px;background:repeating-linear-gradient(180deg,#888 0 16px,#000 16px 20px)"></div><div style="position:absolute;left:1049px;top:16px;width:251px;height:204px;background:#f0f0f0;border:1px solid #9a9a9a;box-sizing:border-box"></div><div style="position:absolute;left:1112px;top:129px;width:114px;height:77px;background:#808080"></div></div></div><div style="position:absolute;left:1399px;top:935px;font-size:11px;line-height:11px;color:#777;white-space:nowrap;"><span style="color:#777">&#8629;</span></div><div style="position:absolute;left:0px;top:1018px;width:1920px;height:22px;background:#f1f1f1;border-top:1px solid #d4d4d4;box-sizing:border-box"></div><div style="position:absolute;left:8px;top:1022px;font-size:12px;line-height:12px;color:#444;white-space:nowrap;">第 4 页，共 4 页</div><div style="position:absolute;left:117px;top:1022px;font-size:12px;line-height:12px;color:#444;white-space:nowrap;">59 个字</div><svg width="14" height="12" viewBox="0 0 14 12" style="position:absolute;left:178px;top:1022px"><path d="M1 1h6v10h-6z" fill="none" stroke="#555"/><path d="M9 3l4 5M13 3l-4 5" stroke="#555"/></svg><div style="position:absolute;left:210px;top:1022px;font-size:12px;line-height:12px;color:#444;white-space:nowrap;">中文(中国)</div><div style="position:absolute;left:1667px;top:1019px;width:38px;height:21px;background:#d5d5d5"></div><svg width="14" height="14" viewBox="0 0 14 14" style="position:absolute;left:1641px;top:1022px"><path d="M0.5 0.5h5.5l1 1 1-1h5.5v11h-5.5l-1 1-1-1h-5.5z" fill="none" stroke="#555"/><path d="M7 1.5v11.5" stroke="#555"/><path d="M2 3.5h3.5M2 5.5h3.5M2 7.5h3.5M2 9.5h3.5M8.5 3.5h3.5M8.5 5.5h3.5M8.5 7.5h3.5M8.5 9.5h3.5" stroke="#777"/></svg><svg width="14" height="13" viewBox="0 0 14 13" style="position:absolute;left:1679px;top:1022px"><rect x="0.5" y="0.5" width="13" height="12" fill="none" stroke="#555"/><path d="M2.5 2.5h9M2.5 4.5h9M2.5 6.5h9M2.5 8.5h9M2.5 10.5h9" stroke="#666"/></svg><svg width="16" height="14" viewBox="0 0 16 14" style="position:absolute;left:1716px;top:1022px"><rect x="0.5" y="0.5" width="12" height="10" fill="none" stroke="#555"/><path d="M2 2.5h9M2 4.5h6M2 6.5h5" stroke="#666"/><circle cx="11.5" cy="9.5" r="3.5" fill="#777"/><path d="M9 9.5h5M11.5 7v5" stroke="#f1f1f1" stroke-width="0.8"/></svg><div style="position:absolute;left:1748px;top:1028px;width:7px;height:1px;background:#444"></div><div style="position:absolute;left:1758px;top:1028px;width:100px;height:1px;background:#999"></div><div style="position:absolute;left:1806px;top:1023px;width:4px;height:11px;background:#555"></div><div style="position:absolute;left:1861px;top:1028px;width:8px;height:1px;background:#444"></div><div style="position:absolute;left:1864px;top:1025px;width:1px;height:7px;background:#444"></div><div style="position:absolute;left:1880px;top:1022px;font-size:12px;line-height:12px;color:#444;white-space:nowrap;">100%</div><div style="position:absolute;left:0px;top:1040px;width:1920px;height:40px;background:#111b25"></div><svg width="18" height="18" viewBox="0 0 18 18" style="position:absolute;left:15px;top:1051px"><path d="M0 2.5l7.2-1v7h-7.2zM8.2 1.3l9.8-1.3v8.5h-9.8zM0 9.5h7.2v7l-7.2-1zM8.2 9.5h9.8v8.5l-9.8-1.3z" fill="#fff"/></svg><div style="position:absolute;left:48px;top:1040px;width:344px;height:40px;background:#f3f3f3"></div><div style="position:absolute;left:58px;top:1050px;width:21px;height:21px;box-sizing:border-box;border:3px solid #111;border-radius:50%"></div><div style="position:absolute;left:88px;top:1053px;font-size:14px;line-height:14px;color:#333;white-space:nowrap;">在这里输入你要搜索的内容</div><svg width="12" height="18" viewBox="0 0 12 18" style="position:absolute;left:365px;top:1051px"><rect x="3.5" y="1" width="5" height="10" rx="2.5" fill="none" stroke="#333" stroke-width="1.3"/><path d="M1.5 8c0 3 2 5 4.5 5s4.5-2 4.5-5M6 13v4M3 17h6" fill="none" stroke="#333" stroke-width="1.3"/></svg><svg width="22" height="18" viewBox="0 0 22 18" style="position:absolute;left:405px;top:1051px"><rect x="4" y="2" width="14" height="14" fill="none" stroke="#fff" stroke-width="1.3"/><path d="M1 4v10M21 4v10" stroke="#fff" stroke-width="1.3"/></svg><svg width="22" height="22" viewBox="0 0 22 22" style="position:absolute;left:456px;top:1049px"><path d="M20 12H6c0 4 3 6 7 6 3 0 5-1 6-2v4c-2 1-4 1.5-6 1.5C6 21.5 1.5 17 1.5 11S6 .5 12 .5c6 0 9 4 9 9zM6.5 9h9c0-2.5-2-4-4.5-4S7 6.5 6.5 9z" fill="#1b78d8"/></svg><svg width="22" height="22" viewBox="0 0 22 22" style="position:absolute;left:504px;top:1049px"><path d="M1 6h20v15h-20z" fill="#fff"/><path d="M7 6V3a4 3 0 0 1 8 0v3" fill="none" stroke="#fff" stroke-width="1.5"/><rect x="6" y="9" width="4" height="4" fill="#f25022"/><rect x="11" y="9" width="4" height="4" fill="#7fba00"/><rect x="6" y="14" width="4" height="4" fill="#00a4ef"/><rect x="11" y="14" width="4" height="4" fill="#ffb900"/></svg><svg width="22" height="22" viewBox="0 0 22 22" style="position:absolute;left:554px;top:1049px"><circle cx="11" cy="11" r="10.2" fill="#1a86d8" stroke="#fff" stroke-width="1.4"/><path d="M6 15.5l6.5-6" stroke="#fff" stroke-width="2.2"/><path d="M11.5 7.5a3 3 0 0 1 4.5-2l-2 2 1 1.5 2-1.5a3 3 0 0 1-3.5 3.5z" fill="#fff"/><circle cx="5.8" cy="15.8" r="1.6" fill="none" stroke="#fff" stroke-width="1.1"/></svg><svg width="24" height="24" viewBox="0 0 24 24" style="position:absolute;left:602px;top:1048px"><circle cx="12" cy="12.5" r="11.5" fill="#f5c518"/><path d="M10 3.5h2.5v13" fill="none" stroke="#2ec27e" stroke-width="2.4"/><ellipse cx="9.8" cy="17" rx="4" ry="3.8" fill="#2ec27e"/><path d="M11.5 3.5c2 1 4 1 5.5-0.5-0.5 3-3 4-5.5 3.5z" fill="#2ec27e"/></svg><svg width="24" height="20" viewBox="0 0 24 20" style="position:absolute;left:651px;top:1050px"><path d="M0 7L12 0 24 7v12.5h-24z" fill="#fff"/><path d="M0.5 7.5l23 0-11 6z" fill="#111b25"/><path d="M10 10l5 6" stroke="#111b25" stroke-width="1.2"/></svg><svg width="22" height="19" viewBox="0 0 22 19" style="position:absolute;left:701px;top:1051px"><path d="M0 1h8l1.5 1.5h12.5v16h-22z" fill="#f9dc85"/><path d="M0 4h22v14.5h-22z" fill="#fde7a0"/><path d="M4 18.5v-7.5h13.5v7.5h-3.5v-3.5h-6.5v3.5z" fill="#3ba7e6"/><rect x="1.5" y="1.8" width="4" height="1" fill="#5ab0e0"/></svg><svg width="22" height="22" viewBox="0 0 22 22" style="position:absolute;left:749px;top:1049px"><circle cx="11" cy="11" r="10" fill="#db4437"/><path d="M11 11L2.3 6A10 10 0 0 0 7 20z" fill="#0f9d58"/><path d="M11 11L7 20A10 10 0 0 0 21 11z" fill="#ffcd40"/><circle cx="11" cy="11" r="4.5" fill="#fff"/><circle cx="11" cy="11" r="3.5" fill="#4285f4"/></svg><div style="position:absolute;left:790px;top:1078px;width:152px;height:2px;background:#9cc3e6"></div><svg width="22" height="22" viewBox="0 0 22 22" style="position:absolute;left:796px;top:1049px"><rect x="0" y="0" width="22" height="22" fill="#2e8b3e"/><rect x="0" y="0" width="22" height="11" fill="#3a9a4a"/><path d="M3 3h11v7h-11z" fill="none" stroke="#fff" stroke-width="1.8"/><path d="M5 13h7v3h-8" fill="none" stroke="#fff" stroke-width="1.8"/><path d="M15 8h4v4h-3M19 12v6h-4" fill="none" stroke="#fff" stroke-width="1.6"/></svg><div style="position:absolute;left:824px;top:1053px;font-size:13px;line-height:13px;color:#a0a0a0;white-space:nowrap;">MELSOFT GT Des...</div><div style="position:absolute;left:951px;top:1078px;width:152px;height:2px;background:#9cc3e6"></div><svg width="22" height="22" viewBox="0 0 22 22" style="position:absolute;left:957px;top:1049px"><rect x="0" y="0" width="22" height="22" fill="#8a8a8a"/><rect x="0" y="0" width="20" height="20" fill="#1818e0"/><rect x="4" y="7" width="12" height="7" fill="#c8c8c8"/><rect x="5" y="8" width="1.5" height="5" fill="#e00"/><path d="M9 8v5M12 8v5M14.5 8v5" stroke="#666"/></svg><div style="position:absolute;left:985px;top:1053px;font-size:13px;line-height:13px;color:#a0a0a0;white-space:nowrap;">GX Simulator2</div><div style="position:absolute;left:1112px;top:1078px;width:152px;height:2px;background:#9cc3e6"></div><svg width="22" height="22" viewBox="0 0 22 22" style="position:absolute;left:1118px;top:1049px"><rect x="0" y="0" width="22" height="22" rx="2" fill="#e23a32"/><path d="M2 7h7M9 3v16M13 3v16M13 7h7M4 7v8M18 7v8M2 15h7M13 15h7" stroke="#fff" stroke-width="1.6" fill="none"/></svg><div style="position:absolute;left:1146px;top:1053px;font-size:13px;line-height:13px;color:#a0a0a0;white-space:nowrap;">MELSOFT系列 GX...</div><div style="position:absolute;left:1269px;top:1040px;width:160px;height:40px;background:#39424d"></div><div style="position:absolute;left:1269px;top:1078px;width:160px;height:2px;background:#9cc3e6"></div><svg width="22" height="22" viewBox="0 0 22 22" style="position:absolute;left:1279px;top:1049px"><rect x="0" y="0" width="22" height="22" fill="#2e8b3e"/><rect x="0" y="0" width="22" height="11" fill="#3a9a4a"/><path d="M3 3h11v7h-11z" fill="none" stroke="#fff" stroke-width="1.8"/><path d="M5 13h7v3h-8" fill="none" stroke="#fff" stroke-width="1.8"/><path d="M15 8h4v4h-3M19 12v6h-4" fill="none" stroke="#fff" stroke-width="1.6"/></svg><div style="position:absolute;left:1307px;top:1053px;font-size:13px;line-height:13px;color:#a0a0a0;white-space:nowrap;">GT Simulator3 (G...</div><div style="position:absolute;left:1434px;top:1078px;width:152px;height:2px;background:#9cc3e6"></div><svg width="22" height="22" viewBox="0 0 22 22" style="position:absolute;left:1441px;top:1049px"><rect x="8" y="2" width="14" height="18" fill="#fff" stroke="#2b579a"/><path d="M11 6h8M11 9h8M11 12h8M11 15h8" stroke="#2b579a"/><rect x="0" y="4" width="13" height="14" fill="#2b579a"/><text x="1.5" y="15" font-size="10" font-weight="bold" font-family="Liberation Sans" fill="#fff">W</text></svg><div style="position:absolute;left:1467px;top:1053px;font-size:13px;line-height:13px;color:#a0a0a0;white-space:nowrap;">说明文档.docx - ...</div><svg width="12" height="8" viewBox="0 0 12 8" style="position:absolute;left:1646px;top:1056px"><path d="M1 7l5-5 5 5" fill="none" stroke="#fff" stroke-width="1.3"/></svg><svg width="16" height="10" viewBox="0 0 16 10" style="position:absolute;left:1668px;top:1055px"><rect x="0.5" y="1.5" width="13" height="8" fill="none" stroke="#fff"/><rect x="2" y="3" width="8" height="5" fill="#fff"/><rect x="14" y="4" width="2" height="3" fill="#fff"/></svg><svg width="18" height="18" viewBox="0 0 18 18" style="position:absolute;left:1691px;top:1049px"><text x="0" y="8" font-size="9" fill="#fff" font-family="Liberation Sans">*</text><path d="M4 17a13 13 0 0 1 13-13M7 17a10 10 0 0 1 10-10M10 17a7 7 0 0 1 7-7M13 17a4 4 0 0 1 4-4" fill="none" stroke="#8a8f96" stroke-width="1"/></svg><svg width="18" height="14" viewBox="0 0 18 14" style="position:absolute;left:1714px;top:1053px"><path d="M1 5h3l4-4v12l-4-4h-3z" fill="none" stroke="#fff"/><path d="M11 4l5 6M16 4l-5 6" stroke="#fff"/></svg><div style="position:absolute;left:1741px;top:1052px;font-size:14px;line-height:14px;color:#a0a0a0;white-space:nowrap;">中</div><div style="position:absolute;left:1769px;top:1053px;width:15px;height:15px;background:#fff"></div><svg width="15" height="15" viewBox="0 0 15 15" style="position:absolute;left:1769px;top:1053px"><path d="M3 3.5h9M2 11.5h11M6.5 3.5l-1.5 8M4 7.5h6.5v4" fill="none" stroke="#111" stroke-width="1.1"/></svg><div style="position:absolute;left:1796px;top:1044px;width:70px;font-size:12px;line-height:12px;color:#a0a0a0;white-space:nowrap;text-align:center;">21:52</div><div style="position:absolute;left:1796px;top:1063px;width:70px;font-size:12px;line-height:12px;color:#a0a0a0;white-space:nowrap;text-align:center;">2018-1-31</div><svg width="20" height="18" viewBox="0 0 20 18" style="position:absolute;left:1878px;top:1051px"><path d="M1 1h18v12h-9l-4 4v-4h-5z" fill="none" stroke="#fff" stroke-width="1.3"/></svg><div style="position:absolute;left:16px;top:11px;width:1030px;height:876px;background:#f0f0f0;border:1px solid #2f8be0;box-sizing:border-box;box-shadow:0 4px 18px rgba(0,0,0,0.35)"></div><div style="position:absolute;left:17px;top:12px;width:1028px;height:30px;background:#fff"></div><svg width="16" height="16" viewBox="0 0 16 16" style="position:absolute;left:25px;top:18px"><rect x="0" y="0" width="16" height="16" rx="1" fill="#238636"/><path d="M0 0h16v3h-16z" fill="#3d9a55" opacity="0.6"/><path d="M8 11h4l-2 5h-4z" fill="#7cc08a"/><path d="M2 2h9v7h-9z" fill="#fff"/><path d="M3 3h7v5h-7z" fill="#238636"/><path d="M4 4h5v3h-5z" fill="#fff"/><path d="M3 10h8v1.5h-8z" fill="#fff"/><path d="M10.5 10h3.5v4.7h-3.5M11.5 12.3h2.5" fill="none" stroke="#fff" stroke-width="1.3"/><path d="M12 5h3v2h-3z" fill="#fff"/><path d="M12.3 4l1.2-3 1.2 3" fill="none" stroke="#fff" stroke-width="0.9"/></svg><div style="position:absolute;left:46px;top:20px;font-size:12.6px;line-height:12.6px;color:#000;white-space:nowrap;letter-spacing:-0.1px">GT Simulator3 (GT27)&nbsp;&nbsp;[工程标题未设置 ]</div><div style="position:absolute;left:926px;top:26px;width:10px;height:1px;background:#000"></div><div style="position:absolute;left:971px;top:21px;width:10px;height:10px;border:1px solid #000;box-sizing:border-box"></div><svg width="12" height="12" viewBox="0 0 12 12" style="position:absolute;left:1016px;top:20px"><path d="M1 1L11 11M11 1L1 11" stroke="#000" stroke-width="1.1"/></svg><div style="position:absolute;left:17px;top:42px;width:1028px;height:54px;background:linear-gradient(90deg,#a9c4f1 0%,#b6cff4 40%,#bed5f6 75%,#c6daf7 100%)"></div><div style="position:absolute;left:23px;top:47px;width:2px;height:2px;background:#2a3f66"></div><div style="position:absolute;left:23px;top:51px;width:2px;height:2px;background:#2a3f66"></div><div style="position:absolute;left:23px;top:55px;width:2px;height:2px;background:#2a3f66"></div><div style="position:absolute;left:23px;top:59px;width:2px;height:2px;background:#2a3f66"></div><div style="position:absolute;left:35px;top:49px;font-size:12px;line-height:12px;color:#000;white-space:nowrap;">工程(<u>P</u>)</div><div style="position:absolute;left:90px;top:49px;font-size:12px;line-height:12px;color:#000;white-space:nowrap;">显示(<u>V</u>)</div><div style="position:absolute;left:146px;top:49px;font-size:12px;line-height:12px;color:#000;white-space:nowrap;">模拟(<u>S</u>)</div><div style="position:absolute;left:201px;top:49px;font-size:12px;line-height:12px;color:#000;white-space:nowrap;">工具(<u>T</u>)</div><div style="position:absolute;left:256px;top:49px;font-size:12px;line-height:12px;color:#000;white-space:nowrap;">帮助(<u>H</u>)</div><div style="position:absolute;left:20px;top:70px;width:198px;height:25px;background:linear-gradient(180deg,#e3eefc 0%,#c4daf8 45%,#a9c6f2 100%);border-radius:3px 0 0 3px;border-bottom:1px solid #7d9fd6;box-sizing:border-box"></div><div style="position:absolute;left:207px;top:70px;width:11px;height:25px;background:linear-gradient(180deg,#3f73cf,#1f4fa8);border-radius:0 3px 3px 0"></div><svg width="8" height="9" viewBox="0 0 8 9" style="position:absolute;left:209px;top:84px"><path d="M0.5 1.5h7" stroke="#fff" stroke-width="1"/><path d="M0.5 3.5h7l-3.5 4z" fill="#fff" stroke="#111" stroke-width="0.6"/></svg><div style="position:absolute;left:24px;top:74px;width:2px;height:2px;background:#1e3e78"></div><div style="position:absolute;left:24px;top:78px;width:2px;height:2px;background:#1e3e78"></div><div style="position:absolute;left:24px;top:82px;width:2px;height:2px;background:#1e3e78"></div><div style="position:absolute;left:24px;top:86px;width:2px;height:2px;background:#1e3e78"></div><div style="position:absolute;left:24px;top:90px;width:2px;height:2px;background:#1e3e78"></div><div style="position:absolute;left:74px;top:75px;width:1px;height:16px;background:#8aa8d8"></div><div style="position:absolute;left:124px;top:75px;width:1px;height:16px;background:#8aa8d8"></div><div style="position:absolute;left:152px;top:75px;width:1px;height:16px;background:#8aa8d8"></div><div style="position:absolute;left:179px;top:75px;width:1px;height:16px;background:#8aa8d8"></div><svg width="17" height="16" viewBox="0 0 17 16" style="position:absolute;left:30px;top:75px"><path d="M0 5h9v10h-9z" fill="#c3cad4" stroke="#a3acba" stroke-width="0.8"/><path d="M1 9l1.5 5 1.5-4 1.5 4 1.5-5" fill="none" stroke="#8e98a8" stroke-width="1.4"/><path d="M8 7l6 1-2 7h-4z" fill="#d3d9e2"/><path d="M5 4.5C7 1 12 1 13.5 5.5l2-0.5-3 5-3.5-4 2 0C10 4 8 3.5 5 4.5z" fill="#8e9db6"/></svg><svg width="17" height="16" viewBox="0 0 17 16" style="position:absolute;left:52px;top:75px"><path d="M0 5h5l1.5 1.5h6.5v8.5h-13z" fill="#c3cad4" stroke="#a3acba" stroke-width="0.8"/><path d="M2 9h14l-3 6h-13z" fill="#d6dce5" stroke="#a3acba" stroke-width="0.8"/><path d="M5 4.5C7 1 12 1 13.5 5.5l2-0.5-3 5-3.5-4 2 0C10 4 8 3.5 5 4.5z" fill="#8e9db6"/></svg><svg width="17" height="16" viewBox="0 0 17 16" style="position:absolute;left:80px;top:75px"><rect x="1" y="0.5" width="11" height="8" fill="#c9d0da" stroke="#a7b0bd"/><path d="M1 8l7 3.5-7 3.5z" fill="#aab3c0"/><path d="M12 11h4v4h-4z" fill="#aab3c0"/><path d="M13.5 10v2" stroke="#aab3c0"/></svg><svg width="17" height="16" viewBox="0 0 17 16" style="position:absolute;left:102px;top:75px"><rect x="1.5" y="0.5" width="11" height="8" fill="#5aa0e8" stroke="#222"/><circle cx="4.8" cy="11" r="4" fill="#fff" stroke="#e01010" stroke-width="1.6"/><text x="3" y="13.5" font-size="6.5" font-weight="bold" font-family="Liberation Sans" fill="#e01010">0</text><path d="M12 11.5h4.5v3.5h-4.5z" fill="#222"/><path d="M14 10v2" stroke="#222"/></svg><svg width="17" height="16" viewBox="0 0 17 16" style="position:absolute;left:130px;top:75px"><rect x="0" y="0" width="16" height="7" fill="#1f6fd8"/><text x="1" y="6.3" font-size="6.5" font-weight="bold" font-family="Liberation Sans" fill="#fff">DEV</text><path d="M0 8l7 3.5-7 3.5z" fill="#22aa22"/><circle cx="9.5" cy="11" r="3" fill="#fff" stroke="#222" stroke-width="1.3"/><path d="M11.5 13l3.5 2.5" stroke="#5a3a1a" stroke-width="1.6"/></svg><svg width="17" height="16" viewBox="0 0 17 16" style="position:absolute;left:158px;top:75px"><path d="M0 5h5l1.5 1.5h8.5v8.5h-15z" fill="#e8a81a"/><path d="M3 9h13l-2 6h-14z" fill="#ffd23a"/><text x="0" y="15.5" font-size="9" font-weight="bold" font-family="Liberation Sans" fill="#000">R</text><path d="M8 3C10 0 13 0 14 3.5l2-0.5-2.5 4.5-3.5-3.5 2 0C11 3 9.5 2.5 8 3z" fill="#12329a"/></svg><svg width="17" height="16" viewBox="0 0 17 16" style="position:absolute;left:186px;top:75px"><rect x="2.5" y="0.5" width="11" height="8" fill="#6ab0f0" stroke="#222"/><path d="M1 15l6-6" stroke="#222" stroke-width="1.8"/><path d="M6 7.5a2.5 2.5 0 1 0 3.5 -1" fill="none" stroke="#222" stroke-width="1.5"/><path d="M12 11.5h4.5v3.5h-4.5z" fill="#333"/><path d="M14 10v2" stroke="#333"/></svg><div style="position:absolute;left:18px;top:95px;width:1026px;height:771px;background:#f0f0f0;border-top:1px solid #a0a0a0;border-left:1px solid #a0a0a0;box-sizing:border-box"></div><div style="position:absolute;left:19px;top:96px;width:1024px;height:769px;background:#000"><div style="position:absolute;left:-19px;top:-96px;width:1920px;height:1080px"><div style="position:absolute;right:1530px;top:113px;font-size:12px;line-height:12px;color:#a0a0a0;white-space:nowrap;text-align:right;">当前程序名</div><div style="position:absolute;right:1530px;top:133px;font-size:12px;line-height:12px;color:#a0a0a0;white-space:nowrap;text-align:right;">当前运行步</div><div style="position:absolute;right:1530px;top:153px;font-size:12px;line-height:12px;color:#a0a0a0;white-space:nowrap;text-align:right;">当前步运行时间</div><div style="position:absolute;left:403px;top:114px;font-size:16px;line-height:16px;color:#a0a0a0;white-space:nowrap;">S2自动程序</div><div style="position:absolute;left:403px;top:134px;font-size:16px;line-height:16px;color:#a0a0a0;white-space:nowrap;">S2步1注释</div><div style="position:absolute;left:427px;top:153px;font-size:16px;line-height:16px;color:#a0a0a0;white-space:nowrap;">7010</div><div style="position:absolute;left:851px;top:161px;font-size:16px;line-height:16px;color:#a0a0a0;white-space:nowrap;">单步最小时间</div><div style="position:absolute;left:851px;top:181px;font-size:16px;line-height:16px;color:#a0a0a0;white-space:nowrap;">单步最大时间</div><div style="position:absolute;right:917px;top:161px;font-size:16px;line-height:16px;color:#a0a0a0;white-space:nowrap;text-align:right;">0</div><div style="position:absolute;right:917px;top:181px;font-size:16px;line-height:16px;color:#a0a0a0;white-space:nowrap;text-align:right;">60</div><div style="position:absolute;left:605px;top:193px;width:60px;font-size:12px;line-height:12px;color:#a0a0a0;white-space:nowrap;text-align:center;">条件设置</div><div style="position:absolute;left:669px;top:193px;width:60px;font-size:12px;line-height:12px;color:#a0a0a0;white-space:nowrap;text-align:center;">条件生效</div><div style="position:absolute;left:749px;top:193px;width:60px;font-size:12px;line-height:12px;color:#a0a0a0;white-space:nowrap;text-align:center;">动作设置</div><div style="position:absolute;left:371px;top:213px;width:16px;height:16px;box-sizing:border-box;border-radius:50%;border:1.5px solid #c4c4c4;background:linear-gradient(180deg,#3e5c6e 0%,#4f6d7e 30%,#1b3a52 55%,#0e2b44 85%,#1e3f58 100%);box-shadow:inset 0 0 0 1px #000"></div><div style="position:absolute;left:403px;top:214px;font-size:16px;line-height:16px;color:#a0a0a0;white-space:nowrap;">S2条件注释1</div><div style="position:absolute;left:611px;top:213px;width:48px;height:16px;box-sizing:border-box;border-top:1px solid #6a6a6a;border-left:1px solid #d8d8d8;border-right:1px solid #d8d8d8;border-bottom:1px solid #c8ccd0;background:linear-gradient(180deg,#5b6c5d 0%,#58695a 30%,#33473a 52%,#1a301c 72%,#142a16 86%,#4f614f 100%);box-shadow:inset 3px 0 3px -1px rgba(0,0,0,0.55),inset -3px 0 3px -1px rgba(0,0,0,0.55)"></div><div style="position:absolute;left:675px;top:213px;width:48px;height:16px;box-sizing:border-box;border-top:1px solid #6a6a6a;border-left:1px solid #d8d8d8;border-right:1px solid #d8d8d8;border-bottom:1px solid #c8ccd0;background:linear-gradient(180deg,#5b6c5d 0%,#58695a 30%,#33473a 52%,#1a301c 72%,#142a16 86%,#4f614f 100%);box-shadow:inset 3px 0 3px -1px rgba(0,0,0,0.55),inset -3px 0 3px -1px rgba(0,0,0,0.55)"></div><div style="position:absolute;left:755px;top:213px;width:48px;height:16px;box-sizing:border-box;border-top:1px solid #6a6a6a;border-left:1px solid #d8d8d8;border-right:1px solid #d8d8d8;border-bottom:1px solid #c8ccd0;background:linear-gradient(180deg,#5b6c5d 0%,#58695a 30%,#33473a 52%,#1a301c 72%,#142a16 86%,#4f614f 100%);box-shadow:inset 3px 0 3px -1px rgba(0,0,0,0.55),inset -3px 0 3px -1px rgba(0,0,0,0.55)"></div><div style="position:absolute;left:819px;top:213px;width:16px;height:16px;box-sizing:border-box;border-radius:50%;border:1.5px solid #c4c4c4;background:linear-gradient(180deg,#4a5b4c 0%,#5b6c5d 30%,#2a3e2c 55%,#142a16 85%,#2a3e2c 100%);box-shadow:inset 0 0 0 1px #000"></div><div style="position:absolute;left:851px;top:214px;font-size:16px;line-height:16px;color:#a0a0a0;white-space:nowrap;">S2动作注释1</div><div style="position:absolute;left:371px;top:233px;width:16px;height:16px;box-sizing:border-box;border-radius:50%;border:1.5px solid #c4c4c4;background:linear-gradient(180deg,#3e5c6e 0%,#4f6d7e 30%,#1b3a52 55%,#0e2b44 85%,#1e3f58 100%);box-shadow:inset 0 0 0 1px #000"></div><div style="position:absolute;left:403px;top:234px;font-size:16px;line-height:16px;color:#a0a0a0;white-space:nowrap;">S2条件注释2</div><div style="position:absolute;left:611px;top:233px;width:48px;height:16px;box-sizing:border-box;border-top:1px solid #5a5a5a;border-left:1px solid #d8d8d8;border-right:1px solid #d8d8d8;border-bottom:1px solid #c8ccd0;background:radial-gradient(ellipse 60% 65% at 50% 55%,#e2ffe2 0%,#d0ffd0 40%,#8ef78e 80%,#3ee83e 100%);box-shadow:inset 0 1px 0 #2f8a2f"></div><div style="position:absolute;left:675px;top:233px;width:48px;height:16px;box-sizing:border-box;border-top:1px solid #5a5a5a;border-left:1px solid #d8d8d8;border-right:1px solid #d8d8d8;border-bottom:1px solid #c8ccd0;background:radial-gradient(ellipse 60% 65% at 50% 55%,#e2ffe2 0%,#d0ffd0 40%,#8ef78e 80%,#3ee83e 100%);box-shadow:inset 0 1px 0 #2f8a2f"></div><div style="position:absolute;left:755px;top:233px;width:48px;height:16px;box-sizing:border-box;border-top:1px solid #5a5a5a;border-left:1px solid #d8d8d8;border-right:1px solid #d8d8d8;border-bottom:1px solid #c8ccd0;background:radial-gradient(ellipse 60% 65% at 50% 55%,#e2ffe2 0%,#d0ffd0 40%,#8ef78e 80%,#3ee83e 100%);box-shadow:inset 0 1px 0 #2f8a2f"></div><div style="position:absolute;left:819px;top:233px;width:16px;height:16px;box-sizing:border-box;border-radius:50%;border:1.5px solid #c4c4c4;background:radial-gradient(circle at 50% 50%,#e8ffe8 0%,#c8ffc8 45%,#60f060 85%,#30e030 100%);"></div><div style="position:absolute;left:851px;top:234px;font-size:16px;line-height:16px;color:#a0a0a0;white-space:nowrap;">S2动作注释2</div><div style="position:absolute;left:371px;top:253px;width:16px;height:16px;box-sizing:border-box;border-radius:50%;border:1.5px solid #c4c4c4;background:linear-gradient(180deg,#3e5c6e 0%,#4f6d7e 30%,#1b3a52 55%,#0e2b44 85%,#1e3f58 100%);box-shadow:inset 0 0 0 1px #000"></div><div style="position:absolute;left:403px;top:254px;font-size:16px;line-height:16px;color:#a0a0a0;white-space:nowrap;">S2条件注释3</div><div style="position:absolute;left:611px;top:253px;width:48px;height:16px;box-sizing:border-box;border-top:1px solid #6a6a6a;border-left:1px solid #d8d8d8;border-right:1px solid #d8d8d8;border-bottom:1px solid #c8ccd0;background:linear-gradient(180deg,#5b6c5d 0%,#58695a 30%,#33473a 52%,#1a301c 72%,#142a16 86%,#4f614f 100%);box-shadow:inset 3px 0 3px -1px rgba(0,0,0,0.55),inset -3px 0 3px -1px rgba(0,0,0,0.55)"></div><div style="position:absolute;left:675px;top:253px;width:48px;height:16px;box-sizing:border-box;border-top:1px solid #5a5a5a;border-left:1px solid #d8d8d8;border-right:1px solid #d8d8d8;border-bottom:1px solid #c8ccd0;background:radial-gradient(ellipse 60% 65% at 50% 55%,#e2ffe2 0%,#d0ffd0 40%,#8ef78e 80%,#3ee83e 100%);box-shadow:inset 0 1px 0 #2f8a2f"></div><div style="position:absolute;left:755px;top:253px;width:48px;height:16px;box-sizing:border-box;border-top:1px solid #6a6a6a;border-left:1px solid #d8d8d8;border-right:1px solid #d8d8d8;border-bottom:1px solid #c8ccd0;background:linear-gradient(180deg,#5b6c5d 0%,#58695a 30%,#33473a 52%,#1a301c 72%,#142a16 86%,#4f614f 100%);box-shadow:inset 3px 0 3px -1px rgba(0,0,0,0.55),inset -3px 0 3px -1px rgba(0,0,0,0.55)"></div><div style="position:absolute;left:819px;top:253px;width:16px;height:16px;box-sizing:border-box;border-radius:50%;border:1.5px solid #c4c4c4;background:linear-gradient(180deg,#4a5b4c 0%,#5b6c5d 30%,#2a3e2c 55%,#142a16 85%,#2a3e2c 100%);box-shadow:inset 0 0 0 1px #000"></div><div style="position:absolute;left:851px;top:254px;font-size:16px;line-height:16px;color:#a0a0a0;white-space:nowrap;">S2动作注释3</div><div style="position:absolute;left:371px;top:273px;width:16px;height:16px;box-sizing:border-box;border-radius:50%;border:1.5px solid #c4c4c4;background:linear-gradient(180deg,#3e5c6e 0%,#4f6d7e 30%,#1b3a52 55%,#0e2b44 85%,#1e3f58 100%);box-shadow:inset 0 0 0 1px #000"></div><div style="position:absolute;left:403px;top:274px;font-size:16px;line-height:16px;color:#a0a0a0;white-space:nowrap;">S2条件注释4</div><div style="position:absolute;left:611px;top:273px;width:48px;height:16px;box-sizing:border-box;border-top:1px solid #5a5a5a;border-left:1px solid #d8d8d8;border-right:1px solid #d8d8d8;border-bottom:1px solid #c8ccd0;background:radial-gradient(ellipse 60% 65% at 50% 55%,#e2ffe2 0%,#d0ffd0 40%,#8ef78e 80%,#3ee83e 100%);box-shadow:inset 0 1px 0 #2f8a2f"></div><div style="position:absolute;left:675px;top:273px;width:48px;height:16px;box-sizing:border-box;border-top:1px solid #5a5a5a;border-left:1px solid #d8d8d8;border-right:1px solid #d8d8d8;border-bottom:1px solid #c8ccd0;background:radial-gradient(ellipse 60% 65% at 50% 55%,#e2ffe2 0%,#d0ffd0 40%,#8ef78e 80%,#3ee83e 100%);box-shadow:inset 0 1px 0 #2f8a2f"></div><div style="position:absolute;left:755px;top:273px;width:48px;height:16px;box-sizing:border-box;border-top:1px solid #6a6a6a;border-left:1px solid #d8d8d8;border-right:1px solid #d8d8d8;border-bottom:1px solid #c8ccd0;background:linear-gradient(180deg,#5b6c5d 0%,#58695a 30%,#33473a 52%,#1a301c 72%,#142a16 86%,#4f614f 100%);box-shadow:inset 3px 0 3px -1px rgba(0,0,0,0.55),inset -3px 0 3px -1px rgba(0,0,0,0.55)"></div><div style="position:absolute;left:819px;top:273px;width:16px;height:16px;box-sizing:border-box;border-radius:50%;border:1.5px solid #c4c4c4;background:linear-gradient(180deg,#4a5b4c 0%,#5b6c5d 30%,#2a3e2c 55%,#142a16 85%,#2a3e2c 100%);box-shadow:inset 0 0 0 1px #000"></div><div style="position:absolute;left:851px;top:274px;font-size:16px;line-height:16px;color:#a0a0a0;white-space:nowrap;">S2动作注释4</div><div style="position:absolute;left:371px;top:293px;width:16px;height:16px;box-sizing:border-box;border-radius:50%;border:1.5px solid #c4c4c4;background:linear-gradient(180deg,#3e5c6e 0%,#4f6d7e 30%,#1b3a52 55%,#0e2b44 85%,#1e3f58 100%);box-shadow:inset 0 0 0 1px #000"></div><div style="position:absolute;left:403px;top:294px;font-size:16px;line-height:16px;color:#a0a0a0;white-space:nowrap;">S2条件注释5</div><div style="position:absolute;left:611px;top:293px;width:48px;height:16px;box-sizing:border-box;border-top:1px solid #6a6a6a;border-left:1px solid #d8d8d8;border-right:1px solid #d8d8d8;border-bottom:1px solid #c8ccd0;background:linear-gradient(180deg,#5b6c5d 0%,#58695a 30%,#33473a 52%,#1a301c 72%,#142a16 86%,#4f614f 100%);box-shadow:inset 3px 0 3px -1px rgba(0,0,0,0.55),inset -3px 0 3px -1px rgba(0,0,0,0.55)"></div><div style="position:absolute;left:675px;top:293px;width:48px;height:16px;box-sizing:border-box;border-top:1px solid #6a6a6a;border-left:1px solid #d8d8d8;border-right:1px solid #d8d8d8;border-bottom:1px solid #c8ccd0;background:linear-gradient(180deg,#5b6c5d 0%,#58695a 30%,#33473a 52%,#1a301c 72%,#142a16 86%,#4f614f 100%);box-shadow:inset 3px 0 3px -1px rgba(0,0,0,0.55),inset -3px 0 3px -1px rgba(0,0,0,0.55)"></div><div style="position:absolute;left:755px;top:293px;width:48px;height:16px;box-sizing:border-box;border-top:1px solid #6a6a6a;border-left:1px solid #d8d8d8;border-right:1px solid #d8d8d8;border-bottom:1px solid #c8ccd0;background:linear-gradient(180deg,#5b6c5d 0%,#58695a 30%,#33473a 52%,#1a301c 72%,#142a16 86%,#4f614f 100%);box-shadow:inset 3px 0 3px -1px rgba(0,0,0,0.55),inset -3px 0 3px -1px rgba(0,0,0,0.55)"></div><div style="position:absolute;left:819px;top:293px;width:16px;height:16px;box-sizing:border-box;border-radius:50%;border:1.5px solid #c4c4c4;background:linear-gradient(180deg,#4a5b4c 0%,#5b6c5d 30%,#2a3e2c 55%,#142a16 85%,#2a3e2c 100%);box-shadow:inset 0 0 0 1px #000"></div><div style="position:absolute;left:851px;top:294px;font-size:16px;line-height:16px;color:#a0a0a0;white-space:nowrap;">S2动作注释5</div><div style="position:absolute;left:371px;top:313px;width:16px;height:16px;box-sizing:border-box;border-radius:50%;border:1.5px solid #c4c4c4;background:linear-gradient(180deg,#3e5c6e 0%,#4f6d7e 30%,#1b3a52 55%,#0e2b44 85%,#1e3f58 100%);box-shadow:inset 0 0 0 1px #000"></div><div style="position:absolute;left:403px;top:314px;font-size:16px;line-height:16px;color:#a0a0a0;white-space:nowrap;">S2条件注释6</div><div style="position:absolute;left:611px;top:313px;width:48px;height:16px;box-sizing:border-box;border-top:1px solid #6a6a6a;border-left:1px solid #d8d8d8;border-right:1px solid #d8d8d8;border-bottom:1px solid #c8ccd0;background:linear-gradient(180deg,#5b6c5d 0%,#58695a 30%,#33473a 52%,#1a301c 72%,#142a16 86%,#4f614f 100%);box-shadow:inset 3px 0 3px -1px rgba(0,0,0,0.55),inset -3px 0 3px -1px rgba(0,0,0,0.55)"></div><div style="position:absolute;left:675px;top:313px;width:48px;height:16px;box-sizing:border-box;border-top:1px solid #6a6a6a;border-left:1px solid #d8d8d8;border-right:1px solid #d8d8d8;border-bottom:1px solid #c8ccd0;background:linear-gradient(180deg,#5b6c5d 0%,#58695a 30%,#33473a 52%,#1a301c 72%,#142a16 86%,#4f614f 100%);box-shadow:inset 3px 0 3px -1px rgba(0,0,0,0.55),inset -3px 0 3px -1px rgba(0,0,0,0.55)"></div><div style="position:absolute;left:755px;top:313px;width:48px;height:16px;box-sizing:border-box;border-top:1px solid #6a6a6a;border-left:1px solid #d8d8d8;border-right:1px solid #d8d8d8;border-bottom:1px solid #c8ccd0;background:linear-gradient(180deg,#5b6c5d 0%,#58695a 30%,#33473a 52%,#1a301c 72%,#142a16 86%,#4f614f 100%);box-shadow:inset 3px 0 3px -1px rgba(0,0,0,0.55),inset -3px 0 3px -1px rgba(0,0,0,0.55)"></div><div style="position:absolute;left:819px;top:313px;width:16px;height:16px;box-sizing:border-box;border-radius:50%;border:1.5px solid #c4c4c4;background:linear-gradient(180deg,#4a5b4c 0%,#5b6c5d 30%,#2a3e2c 55%,#142a16 85%,#2a3e2c 100%);box-shadow:inset 0 0 0 1px #000"></div><div style="position:absolute;left:851px;top:314px;font-size:16px;line-height:16px;color:#a0a0a0;white-space:nowrap;">S2动作注释6</div><div style="position:absolute;left:371px;top:333px;width:16px;height:16px;box-sizing:border-box;border-radius:50%;border:1.5px solid #c4c4c4;background:linear-gradient(180deg,#3e5c6e 0%,#4f6d7e 30%,#1b3a52 55%,#0e2b44 85%,#1e3f58 100%);box-shadow:inset 0 0 0 1px #000"></div><div style="position:absolute;left:403px;top:334px;font-size:16px;line-height:16px;color:#a0a0a0;white-space:nowrap;">S2条件注释7</div><div style="position:absolute;left:611px;top:333px;width:48px;height:16px;box-sizing:border-box;border-top:1px solid #6a6a6a;border-left:1px solid #d8d8d8;border-right:1px solid #d8d8d8;border-bottom:1px solid #c8ccd0;background:linear-gradient(180deg,#5b6c5d 0%,#58695a 30%,#33473a 52%,#1a301c 72%,#142a16 86%,#4f614f 100%);box-shadow:inset 3px 0 3px -1px rgba(0,0,0,0.55),inset -3px 0 3px -1px rgba(0,0,0,0.55)"></div><div style="position:absolute;left:675px;top:333px;width:48px;height:16px;box-sizing:border-box;border-top:1px solid #6a6a6a;border-left:1px solid #d8d8d8;border-right:1px solid #d8d8d8;border-bottom:1px solid #c8ccd0;background:linear-gradient(180deg,#5b6c5d 0%,#58695a 30%,#33473a 52%,#1a301c 72%,#142a16 86%,#4f614f 100%);box-shadow:inset 3px 0 3px -1px rgba(0,0,0,0.55),inset -3px 0 3px -1px rgba(0,0,0,0.55)"></div><div style="position:absolute;left:755px;top:333px;width:48px;height:16px;box-sizing:border-box;border-top:1px solid #6a6a6a;border-left:1px solid #d8d8d8;border-right:1px solid #d8d8d8;border-bottom:1px solid #c8ccd0;background:linear-gradient(180deg,#5b6c5d 0%,#58695a 30%,#33473a 52%,#1a301c 72%,#142a16 86%,#4f614f 100%);box-shadow:inset 3px 0 3px -1px rgba(0,0,0,0.55),inset -3px 0 3px -1px rgba(0,0,0,0.55)"></div><div style="position:absolute;left:819px;top:333px;width:16px;height:16px;box-sizing:border-box;border-radius:50%;border:1.5px solid #c4c4c4;background:linear-gradient(180deg,#4a5b4c 0%,#5b6c5d 30%,#2a3e2c 55%,#142a16 85%,#2a3e2c 100%);box-shadow:inset 0 0 0 1px #000"></div><div style="position:absolute;left:851px;top:334px;font-size:16px;line-height:16px;color:#a0a0a0;white-space:nowrap;">S2动作注释7</div><div style="position:absolute;left:371px;top:353px;width:16px;height:16px;box-sizing:border-box;border-radius:50%;border:1.5px solid #c4c4c4;background:linear-gradient(180deg,#3e5c6e 0%,#4f6d7e 30%,#1b3a52 55%,#0e2b44 85%,#1e3f58 100%);box-shadow:inset 0 0 0 1px #000"></div><div style="position:absolute;left:403px;top:354px;font-size:16px;line-height:16px;color:#a0a0a0;white-space:nowrap;">S2条件注释8</div><div style="position:absolute;left:611px;top:353px;width:48px;height:16px;box-sizing:border-box;border-top:1px solid #6a6a6a;border-left:1px solid #d8d8d8;border-right:1px solid #d8d8d8;border-bottom:1px solid #c8ccd0;background:linear-gradient(180deg,#5b6c5d 0%,#58695a 30%,#33473a 52%,#1a301c 72%,#142a16 86%,#4f614f 100%);box-shadow:inset 3px 0 3px -1px rgba(0,0,0,0.55),inset -3px 0 3px -1px rgba(0,0,0,0.55)"></div><div style="position:absolute;left:675px;top:353px;width:48px;height:16px;box-sizing:border-box;border-top:1px solid #6a6a6a;border-left:1px solid #d8d8d8;border-right:1px solid #d8d8d8;border-bottom:1px solid #c8ccd0;background:linear-gradient(180deg,#5b6c5d 0%,#58695a 30%,#33473a 52%,#1a301c 72%,#142a16 86%,#4f614f 100%);box-shadow:inset 3px 0 3px -1px rgba(0,0,0,0.55),inset -3px 0 3px -1px rgba(0,0,0,0.55)"></div><div style="position:absolute;left:755px;top:353px;width:48px;height:16px;box-sizing:border-box;border-top:1px solid #6a6a6a;border-left:1px solid #d8d8d8;border-right:1px solid #d8d8d8;border-bottom:1px solid #c8ccd0;background:linear-gradient(180deg,#5b6c5d 0%,#58695a 30%,#33473a 52%,#1a301c 72%,#142a16 86%,#4f614f 100%);box-shadow:inset 3px 0 3px -1px rgba(0,0,0,0.55),inset -3px 0 3px -1px rgba(0,0,0,0.55)"></div><div style="position:absolute;left:819px;top:353px;width:16px;height:16px;box-sizing:border-box;border-radius:50%;border:1.5px solid #c4c4c4;background:linear-gradient(180deg,#4a5b4c 0%,#5b6c5d 30%,#2a3e2c 55%,#142a16 85%,#2a3e2c 100%);box-shadow:inset 0 0 0 1px #000"></div><div style="position:absolute;left:851px;top:354px;font-size:16px;line-height:16px;color:#a0a0a0;white-space:nowrap;">S2动作注释8</div><div style="position:absolute;left:371px;top:373px;width:16px;height:16px;box-sizing:border-box;border-radius:50%;border:1.5px solid #c4c4c4;background:linear-gradient(180deg,#3e5c6e 0%,#4f6d7e 30%,#1b3a52 55%,#0e2b44 85%,#1e3f58 100%);box-shadow:inset 0 0 0 1px #000"></div><div style="position:absolute;left:403px;top:374px;font-size:16px;line-height:16px;color:#a0a0a0;white-space:nowrap;">S2条件注释9</div><div style="position:absolute;left:611px;top:373px;width:48px;height:16px;box-sizing:border-box;border-top:1px solid #6a6a6a;border-left:1px solid #d8d8d8;border-right:1px solid #d8d8d8;border-bottom:1px solid #c8ccd0;background:linear-gradient(180deg,#5b6c5d 0%,#58695a 30%,#33473a 52%,#1a301c 72%,#142a16 86%,#4f614f 100%);box-shadow:inset 3px 0 3px -1px rgba(0,0,0,0.55),inset -3px 0 3px -1px rgba(0,0,0,0.55)"></div><div style="position:absolute;left:675px;top:373px;width:48px;height:16px;box-sizing:border-box;border-top:1px solid #6a6a6a;border-left:1px solid #d8d8d8;border-right:1px solid #d8d8d8;border-bottom:1px solid #c8ccd0;background:linear-gradient(180deg,#5b6c5d 0%,#58695a 30%,#33473a 52%,#1a301c 72%,#142a16 86%,#4f614f 100%);box-shadow:inset 3px 0 3px -1px rgba(0,0,0,0.55),inset -3px 0 3px -1px rgba(0,0,0,0.55)"></div><div style="position:absolute;left:755px;top:373px;width:48px;height:16px;box-sizing:border-box;border-top:1px solid #6a6a6a;border-left:1px solid #d8d8d8;border-right:1px solid #d8d8d8;border-bottom:1px solid #c8ccd0;background:linear-gradient(180deg,#5b6c5d 0%,#58695a 30%,#33473a 52%,#1a301c 72%,#142a16 86%,#4f614f 100%);box-shadow:inset 3px 0 3px -1px rgba(0,0,0,0.55),inset -3px 0 3px -1px rgba(0,0,0,0.55)"></div><div style="position:absolute;left:819px;top:373px;width:16px;height:16px;box-sizing:border-box;border-radius:50%;border:1.5px solid #c4c4c4;background:linear-gradient(180deg,#4a5b4c 0%,#5b6c5d 30%,#2a3e2c 55%,#142a16 85%,#2a3e2c 100%);box-shadow:inset 0 0 0 1px #000"></div><div style="position:absolute;left:851px;top:374px;font-size:16px;line-height:16px;color:#a0a0a0;white-space:nowrap;">S2动作注释9</div><div style="position:absolute;left:371px;top:393px;width:16px;height:16px;box-sizing:border-box;border-radius:50%;border:1.5px solid #c4c4c4;background:linear-gradient(180deg,#3e5c6e 0%,#4f6d7e 30%,#1b3a52 55%,#0e2b44 85%,#1e3f58 100%);box-shadow:inset 0 0 0 1px #000"></div><div style="position:absolute;left:403px;top:394px;font-size:16px;line-height:16px;color:#a0a0a0;white-space:nowrap;">S2条件注释10</div><div style="position:absolute;left:611px;top:393px;width:48px;height:16px;box-sizing:border-box;border-top:1px solid #6a6a6a;border-left:1px solid #d8d8d8;border-right:1px solid #d8d8d8;border-bottom:1px solid #c8ccd0;background:linear-gradient(180deg,#5b6c5d 0%,#58695a 30%,#33473a 52%,#1a301c 72%,#142a16 86%,#4f614f 100%);box-shadow:inset 3px 0 3px -1px rgba(0,0,0,0.55),inset -3px 0 3px -1px rgba(0,0,0,0.55)"></div><div style="position:absolute;left:675px;top:393px;width:48px;height:16px;box-sizing:border-box;border-top:1px solid #6a6a6a;border-left:1px solid #d8d8d8;border-right:1px solid #d8d8d8;border-bottom:1px solid #c8ccd0;background:linear-gradient(180deg,#5b6c5d 0%,#58695a 30%,#33473a 52%,#1a301c 72%,#142a16 86%,#4f614f 100%);box-shadow:inset 3px 0 3px -1px rgba(0,0,0,0.55),inset -3px 0 3px -1px rgba(0,0,0,0.55)"></div><div style="position:absolute;left:755px;top:393px;width:48px;height:16px;box-sizing:border-box;border-top:1px solid #6a6a6a;border-left:1px solid #d8d8d8;border-right:1px solid #d8d8d8;border-bottom:1px solid #c8ccd0;background:linear-gradient(180deg,#5b6c5d 0%,#58695a 30%,#33473a 52%,#1a301c 72%,#142a16 86%,#4f614f 100%);box-shadow:inset 3px 0 3px -1px rgba(0,0,0,0.55),inset -3px 0 3px -1px rgba(0,0,0,0.55)"></div><div style="position:absolute;left:819px;top:393px;width:16px;height:16px;box-sizing:border-box;border-radius:50%;border:1.5px solid #c4c4c4;background:linear-gradient(180deg,#4a5b4c 0%,#5b6c5d 30%,#2a3e2c 55%,#142a16 85%,#2a3e2c 100%);box-shadow:inset 0 0 0 1px #000"></div><div style="position:absolute;left:851px;top:394px;font-size:16px;line-height:16px;color:#a0a0a0;white-space:nowrap;">S2动作注释10</div><div style="position:absolute;left:371px;top:413px;width:16px;height:16px;box-sizing:border-box;border-radius:50%;border:1.5px solid #c4c4c4;background:linear-gradient(180deg,#3e5c6e 0%,#4f6d7e 30%,#1b3a52 55%,#0e2b44 85%,#1e3f58 100%);box-shadow:inset 0 0 0 1px #000"></div><div style="position:absolute;left:403px;top:414px;font-size:16px;line-height:16px;color:#a0a0a0;white-space:nowrap;">S2条件注释11</div><div style="position:absolute;left:611px;top:413px;width:48px;height:16px;box-sizing:border-box;border-top:1px solid #6a6a6a;border-left:1px solid #d8d8d8;border-right:1px solid #d8d8d8;border-bottom:1px solid #c8ccd0;background:linear-gradient(180deg,#5b6c5d 0%,#58695a 30%,#33473a 52%,#1a301c 72%,#142a16 86%,#4f614f 100%);box-shadow:inset 3px 0 3px -1px rgba(0,0,0,0.55),inset -3px 0 3px -1px rgba(0,0,0,0.55)"></div><div style="position:absolute;left:675px;top:413px;width:48px;height:16px;box-sizing:border-box;border-top:1px solid #6a6a6a;border-left:1px solid #d8d8d8;border-right:1px solid #d8d8d8;border-bottom:1px solid #c8ccd0;background:linear-gradient(180deg,#5b6c5d 0%,#58695a 30%,#33473a 52%,#1a301c 72%,#142a16 86%,#4f614f 100%);box-shadow:inset 3px 0 3px -1px rgba(0,0,0,0.55),inset -3px 0 3px -1px rgba(0,0,0,0.55)"></div><div style="position:absolute;left:755px;top:413px;width:48px;height:16px;box-sizing:border-box;border-top:1px solid #6a6a6a;border-left:1px solid #d8d8d8;border-right:1px solid #d8d8d8;border-bottom:1px solid #c8ccd0;background:linear-gradient(180deg,#5b6c5d 0%,#58695a 30%,#33473a 52%,#1a301c 72%,#142a16 86%,#4f614f 100%);box-shadow:inset 3px 0 3px -1px rgba(0,0,0,0.55),inset -3px 0 3px -1px rgba(0,0,0,0.55)"></div><div style="position:absolute;left:819px;top:413px;width:16px;height:16px;box-sizing:border-box;border-radius:50%;border:1.5px solid #c4c4c4;background:linear-gradient(180deg,#4a5b4c 0%,#5b6c5d 30%,#2a3e2c 55%,#142a16 85%,#2a3e2c 100%);box-shadow:inset 0 0 0 1px #000"></div><div style="position:absolute;left:851px;top:414px;font-size:16px;line-height:16px;color:#a0a0a0;white-space:nowrap;">S2动作注释11</div><div style="position:absolute;left:371px;top:433px;width:16px;height:16px;box-sizing:border-box;border-radius:50%;border:1.5px solid #c4c4c4;background:linear-gradient(180deg,#3e5c6e 0%,#4f6d7e 30%,#1b3a52 55%,#0e2b44 85%,#1e3f58 100%);box-shadow:inset 0 0 0 1px #000"></div><div style="position:absolute;left:403px;top:434px;font-size:16px;line-height:16px;color:#a0a0a0;white-space:nowrap;">S2条件注释12</div><div style="position:absolute;left:611px;top:433px;width:48px;height:16px;box-sizing:border-box;border-top:1px solid #6a6a6a;border-left:1px solid #d8d8d8;border-right:1px solid #d8d8d8;border-bottom:1px solid #c8ccd0;background:linear-gradient(180deg,#5b6c5d 0%,#58695a 30%,#33473a 52%,#1a301c 72%,#142a16 86%,#4f614f 100%);box-shadow:inset 3px 0 3px -1px rgba(0,0,0,0.55),inset -3px 0 3px -1px rgba(0,0,0,0.55)"></div><div style="position:absolute;left:675px;top:433px;width:48px;height:16px;box-sizing:border-box;border-top:1px solid #6a6a6a;border-left:1px solid #d8d8d8;border-right:1px solid #d8d8d8;border-bottom:1px solid #c8ccd0;background:linear-gradient(180deg,#5b6c5d 0%,#58695a 30%,#33473a 52%,#1a301c 72%,#142a16 86%,#4f614f 100%);box-shadow:inset 3px 0 3px -1px rgba(0,0,0,0.55),inset -3px 0 3px -1px rgba(0,0,0,0.55)"></div><div style="position:absolute;left:755px;top:433px;width:48px;height:16px;box-sizing:border-box;border-top:1px solid #6a6a6a;border-left:1px solid #d8d8d8;border-right:1px solid #d8d8d8;border-bottom:1px solid #c8ccd0;background:linear-gradient(180deg,#5b6c5d 0%,#58695a 30%,#33473a 52%,#1a301c 72%,#142a16 86%,#4f614f 100%);box-shadow:inset 3px 0 3px -1px rgba(0,0,0,0.55),inset -3px 0 3px -1px rgba(0,0,0,0.55)"></div><div style="position:absolute;left:819px;top:433px;width:16px;height:16px;box-sizing:border-box;border-radius:50%;border:1.5px solid #c4c4c4;background:linear-gradient(180deg,#4a5b4c 0%,#5b6c5d 30%,#2a3e2c 55%,#142a16 85%,#2a3e2c 100%);box-shadow:inset 0 0 0 1px #000"></div><div style="position:absolute;left:851px;top:434px;font-size:16px;line-height:16px;color:#a0a0a0;white-space:nowrap;">S2动作注释12</div><div style="position:absolute;left:371px;top:453px;width:16px;height:16px;box-sizing:border-box;border-radius:50%;border:1.5px solid #c4c4c4;background:linear-gradient(180deg,#3e5c6e 0%,#4f6d7e 30%,#1b3a52 55%,#0e2b44 85%,#1e3f58 100%);box-shadow:inset 0 0 0 1px #000"></div><div style="position:absolute;left:403px;top:454px;font-size:16px;line-height:16px;color:#a0a0a0;white-space:nowrap;">S2条件注释13</div><div style="position:absolute;left:611px;top:453px;width:48px;height:16px;box-sizing:border-box;border-top:1px solid #6a6a6a;border-left:1px solid #d8d8d8;border-right:1px solid #d8d8d8;border-bottom:1px solid #c8ccd0;background:linear-gradient(180deg,#5b6c5d 0%,#58695a 30%,#33473a 52%,#1a301c 72%,#142a16 86%,#4f614f 100%);box-shadow:inset 3px 0 3px -1px rgba(0,0,0,0.55),inset -3px 0 3px -1px rgba(0,0,0,0.55)"></div><div style="position:absolute;left:675px;top:453px;width:48px;height:16px;box-sizing:border-box;border-top:1px solid #6a6a6a;border-left:1px solid #d8d8d8;border-right:1px solid #d8d8d8;border-bottom:1px solid #c8ccd0;background:linear-gradient(180deg,#5b6c5d 0%,#58695a 30%,#33473a 52%,#1a301c 72%,#142a16 86%,#4f614f 100%);box-shadow:inset 3px 0 3px -1px rgba(0,0,0,0.55),inset -3px 0 3px -1px rgba(0,0,0,0.55)"></div><div style="position:absolute;left:755px;top:453px;width:48px;height:16px;box-sizing:border-box;border-top:1px solid #6a6a6a;border-left:1px solid #d8d8d8;border-right:1px solid #d8d8d8;border-bottom:1px solid #c8ccd0;background:linear-gradient(180deg,#5b6c5d 0%,#58695a 30%,#33473a 52%,#1a301c 72%,#142a16 86%,#4f614f 100%);box-shadow:inset 3px 0 3px -1px rgba(0,0,0,0.55),inset -3px 0 3px -1px rgba(0,0,0,0.55)"></div><div style="position:absolute;left:819px;top:453px;width:16px;height:16px;box-sizing:border-box;border-radius:50%;border:1.5px solid #c4c4c4;background:linear-gradient(180deg,#4a5b4c 0%,#5b6c5d 30%,#2a3e2c 55%,#142a16 85%,#2a3e2c 100%);box-shadow:inset 0 0 0 1px #000"></div><div style="position:absolute;left:851px;top:454px;font-size:16px;line-height:16px;color:#a0a0a0;white-space:nowrap;">S2动作注释13</div><div style="position:absolute;left:371px;top:473px;width:16px;height:16px;box-sizing:border-box;border-radius:50%;border:1.5px solid #c4c4c4;background:linear-gradient(180deg,#3e5c6e 0%,#4f6d7e 30%,#1b3a52 55%,#0e2b44 85%,#1e3f58 100%);box-shadow:inset 0 0 0 1px #000"></div><div style="position:absolute;left:403px;top:474px;font-size:16px;line-height:16px;color:#a0a0a0;white-space:nowrap;">S2条件注释14</div><div style="position:absolute;left:611px;top:473px;width:48px;height:16px;box-sizing:border-box;border-top:1px solid #6a6a6a;border-left:1px solid #d8d8d8;border-right:1px solid #d8d8d8;border-bottom:1px solid #c8ccd0;background:linear-gradient(180deg,#5b6c5d 0%,#58695a 30%,#33473a 52%,#1a301c 72%,#142a16 86%,#4f614f 100%);box-shadow:inset 3px 0 3px -1px rgba(0,0,0,0.55),inset -3px 0 3px -1px rgba(0,0,0,0.55)"></div><div style="position:absolute;left:675px;top:473px;width:48px;height:16px;box-sizing:border-box;border-top:1px solid #6a6a6a;border-left:1px solid #d8d8d8;border-right:1px solid #d8d8d8;border-bottom:1px solid #c8ccd0;background:linear-gradient(180deg,#5b6c5d 0%,#58695a 30%,#33473a 52%,#1a301c 72%,#142a16 86%,#4f614f 100%);box-shadow:inset 3px 0 3px -1px rgba(0,0,0,0.55),inset -3px 0 3px -1px rgba(0,0,0,0.55)"></div><div style="position:absolute;left:755px;top:473px;width:48px;height:16px;box-sizing:border-box;border-top:1px solid #6a6a6a;border-left:1px solid #d8d8d8;border-right:1px solid #d8d8d8;border-bottom:1px solid #c8ccd0;background:linear-gradient(180deg,#5b6c5d 0%,#58695a 30%,#33473a 52%,#1a301c 72%,#142a16 86%,#4f614f 100%);box-shadow:inset 3px 0 3px -1px rgba(0,0,0,0.55),inset -3px 0 3px -1px rgba(0,0,0,0.55)"></div><div style="position:absolute;left:819px;top:473px;width:16px;height:16px;box-sizing:border-box;border-radius:50%;border:1.5px solid #c4c4c4;background:linear-gradient(180deg,#4a5b4c 0%,#5b6c5d 30%,#2a3e2c 55%,#142a16 85%,#2a3e2c 100%);box-shadow:inset 0 0 0 1px #000"></div><div style="position:absolute;left:851px;top:474px;font-size:16px;line-height:16px;color:#a0a0a0;white-space:nowrap;">S2动作注释14</div><div style="position:absolute;left:371px;top:493px;width:16px;height:16px;box-sizing:border-box;border-radius:50%;border:1.5px solid #c4c4c4;background:linear-gradient(180deg,#3e5c6e 0%,#4f6d7e 30%,#1b3a52 55%,#0e2b44 85%,#1e3f58 100%);box-shadow:inset 0 0 0 1px #000"></div><div style="position:absolute;left:403px;top:494px;font-size:16px;line-height:16px;color:#a0a0a0;white-space:nowrap;">S2条件注释15</div><div style="position:absolute;left:611px;top:493px;width:48px;height:16px;box-sizing:border-box;border-top:1px solid #6a6a6a;border-left:1px solid #d8d8d8;border-right:1px solid #d8d8d8;border-bottom:1px solid #c8ccd0;background:linear-gradient(180deg,#5b6c5d 0%,#58695a 30%,#33473a 52%,#1a301c 72%,#142a16 86%,#4f614f 100%);box-shadow:inset 3px 0 3px -1px rgba(0,0,0,0.55),inset -3px 0 3px -1px rgba(0,0,0,0.55)"></div><div style="position:absolute;left:675px;top:493px;width:48px;height:16px;box-sizing:border-box;border-top:1px solid #6a6a6a;border-left:1px solid #d8d8d8;border-right:1px solid #d8d8d8;border-bottom:1px solid #c8ccd0;background:linear-gradient(180deg,#5b6c5d 0%,#58695a 30%,#33473a 52%,#1a301c 72%,#142a16 86%,#4f614f 100%);box-shadow:inset 3px 0 3px -1px rgba(0,0,0,0.55),inset -3px 0 3px -1px rgba(0,0,0,0.55)"></div><div style="position:absolute;left:755px;top:493px;width:48px;height:16px;box-sizing:border-box;border-top:1px solid #6a6a6a;border-left:1px solid #d8d8d8;border-right:1px solid #d8d8d8;border-bottom:1px solid #c8ccd0;background:linear-gradient(180deg,#5b6c5d 0%,#58695a 30%,#33473a 52%,#1a301c 72%,#142a16 86%,#4f614f 100%);box-shadow:inset 3px 0 3px -1px rgba(0,0,0,0.55),inset -3px 0 3px -1px rgba(0,0,0,0.55)"></div><div style="position:absolute;left:819px;top:493px;width:16px;height:16px;box-sizing:border-box;border-radius:50%;border:1.5px solid #c4c4c4;background:linear-gradient(180deg,#4a5b4c 0%,#5b6c5d 30%,#2a3e2c 55%,#142a16 85%,#2a3e2c 100%);box-shadow:inset 0 0 0 1px #000"></div><div style="position:absolute;left:851px;top:494px;font-size:16px;line-height:16px;color:#a0a0a0;white-space:nowrap;">S2动作注释15</div><div style="position:absolute;left:371px;top:513px;width:16px;height:16px;box-sizing:border-box;border-radius:50%;border:1.5px solid #c4c4c4;background:linear-gradient(180deg,#3e5c6e 0%,#4f6d7e 30%,#1b3a52 55%,#0e2b44 85%,#1e3f58 100%);box-shadow:inset 0 0 0 1px #000"></div><div style="position:absolute;left:403px;top:514px;font-size:16px;line-height:16px;color:#a0a0a0;white-space:nowrap;">S2条件注释16</div><div style="position:absolute;left:611px;top:513px;width:48px;height:16px;box-sizing:border-box;border-top:1px solid #6a6a6a;border-left:1px solid #d8d8d8;border-right:1px solid #d8d8d8;border-bottom:1px solid #c8ccd0;background:linear-gradient(180deg,#5b6c5d 0%,#58695a 30%,#33473a 52%,#1a301c 72%,#142a16 86%,#4f614f 100%);box-shadow:inset 3px 0 3px -1px rgba(0,0,0,0.55),inset -3px 0 3px -1px rgba(0,0,0,0.55)"></div><div style="position:absolute;left:675px;top:513px;width:48px;height:16px;box-sizing:border-box;border-top:1px solid #6a6a6a;border-left:1px solid #d8d8d8;border-right:1px solid #d8d8d8;border-bottom:1px solid #c8ccd0;background:linear-gradient(180deg,#5b6c5d 0%,#58695a 30%,#33473a 52%,#1a301c 72%,#142a16 86%,#4f614f 100%);box-shadow:inset 3px 0 3px -1px rgba(0,0,0,0.55),inset -3px 0 3px -1px rgba(0,0,0,0.55)"></div><div style="position:absolute;left:755px;top:513px;width:48px;height:16px;box-sizing:border-box;border-top:1px solid #6a6a6a;border-left:1px solid #d8d8d8;border-right:1px solid #d8d8d8;border-bottom:1px solid #c8ccd0;background:linear-gradient(180deg,#5b6c5d 0%,#58695a 30%,#33473a 52%,#1a301c 72%,#142a16 86%,#4f614f 100%);box-shadow:inset 3px 0 3px -1px rgba(0,0,0,0.55),inset -3px 0 3px -1px rgba(0,0,0,0.55)"></div><div style="position:absolute;left:819px;top:513px;width:16px;height:16px;box-sizing:border-box;border-radius:50%;border:1.5px solid #c4c4c4;background:linear-gradient(180deg,#4a5b4c 0%,#5b6c5d 30%,#2a3e2c 55%,#142a16 85%,#2a3e2c 100%);box-shadow:inset 0 0 0 1px #000"></div><div style="position:absolute;left:851px;top:514px;font-size:16px;line-height:16px;color:#a0a0a0;white-space:nowrap;">S2动作注释16</div><div style="position:absolute;left:371px;top:533px;width:16px;height:16px;box-sizing:border-box;border-radius:50%;border:1.5px solid #c4c4c4;background:linear-gradient(180deg,#3e5c6e 0%,#4f6d7e 30%,#1b3a52 55%,#0e2b44 85%,#1e3f58 100%);box-shadow:inset 0 0 0 1px #000"></div><div style="position:absolute;left:403px;top:534px;font-size:16px;line-height:16px;color:#a0a0a0;white-space:nowrap;">S2条件注释17</div><div style="position:absolute;left:611px;top:533px;width:48px;height:16px;box-sizing:border-box;border-top:1px solid #6a6a6a;border-left:1px solid #d8d8d8;border-right:1px solid #d8d8d8;border-bottom:1px solid #c8ccd0;background:linear-gradient(180deg,#5b6c5d 0%,#58695a 30%,#33473a 52%,#1a301c 72%,#142a16 86%,#4f614f 100%);box-shadow:inset 3px 0 3px -1px rgba(0,0,0,0.55),inset -3px 0 3px -1px rgba(0,0,0,0.55)"></div><div style="position:absolute;left:675px;top:533px;width:48px;height:16px;box-sizing:border-box;border-top:1px solid #6a6a6a;border-left:1px solid #d8d8d8;border-right:1px solid #d8d8d8;border-bottom:1px solid #c8ccd0;background:linear-gradient(180deg,#5b6c5d 0%,#58695a 30%,#33473a 52%,#1a301c 72%,#142a16 86%,#4f614f 100%);box-shadow:inset 3px 0 3px -1px rgba(0,0,0,0.55),inset -3px 0 3px -1px rgba(0,0,0,0.55)"></div><div style="position:absolute;left:755px;top:533px;width:48px;height:16px;box-sizing:border-box;border-top:1px solid #6a6a6a;border-left:1px solid #d8d8d8;border-right:1px solid #d8d8d8;border-bottom:1px solid #c8ccd0;background:linear-gradient(180deg,#5b6c5d 0%,#58695a 30%,#33473a 52%,#1a301c 72%,#142a16 86%,#4f614f 100%);box-shadow:inset 3px 0 3px -1px rgba(0,0,0,0.55),inset -3px 0 3px -1px rgba(0,0,0,0.55)"></div><div style="position:absolute;left:819px;top:533px;width:16px;height:16px;box-sizing:border-box;border-radius:50%;border:1.5px solid #c4c4c4;background:linear-gradient(180deg,#4a5b4c 0%,#5b6c5d 30%,#2a3e2c 55%,#142a16 85%,#2a3e2c 100%);box-shadow:inset 0 0 0 1px #000"></div><div style="position:absolute;left:851px;top:534px;font-size:16px;line-height:16px;color:#a0a0a0;white-space:nowrap;">S2动作注释17</div><div style="position:absolute;left:371px;top:553px;width:16px;height:16px;box-sizing:border-box;border-radius:50%;border:1.5px solid #c4c4c4;background:linear-gradient(180deg,#3e5c6e 0%,#4f6d7e 30%,#1b3a52 55%,#0e2b44 85%,#1e3f58 100%);box-shadow:inset 0 0 0 1px #000"></div><div style="position:absolute;left:403px;top:554px;font-size:16px;line-height:16px;color:#a0a0a0;white-space:nowrap;">S2条件注释18</div><div style="position:absolute;left:611px;top:553px;width:48px;height:16px;box-sizing:border-box;border-top:1px solid #6a6a6a;border-left:1px solid #d8d8d8;border-right:1px solid #d8d8d8;border-bottom:1px solid #c8ccd0;background:linear-gradient(180deg,#5b6c5d 0%,#58695a 30%,#33473a 52%,#1a301c 72%,#142a16 86%,#4f614f 100%);box-shadow:inset 3px 0 3px -1px rgba(0,0,0,0.55),inset -3px 0 3px -1px rgba(0,0,0,0.55)"></div><div style="position:absolute;left:675px;top:553px;width:48px;height:16px;box-sizing:border-box;border-top:1px solid #6a6a6a;border-left:1px solid #d8d8d8;border-right:1px solid #d8d8d8;border-bottom:1px solid #c8ccd0;background:linear-gradient(180deg,#5b6c5d 0%,#58695a 30%,#33473a 52%,#1a301c 72%,#142a16 86%,#4f614f 100%);box-shadow:inset 3px 0 3px -1px rgba(0,0,0,0.55),inset -3px 0 3px -1px rgba(0,0,0,0.55)"></div><div style="position:absolute;left:755px;top:553px;width:48px;height:16px;box-sizing:border-box;border-top:1px solid #6a6a6a;border-left:1px solid #d8d8d8;border-right:1px solid #d8d8d8;border-bottom:1px solid #c8ccd0;background:linear-gradient(180deg,#5b6c5d 0%,#58695a 30%,#33473a 52%,#1a301c 72%,#142a16 86%,#4f614f 100%);box-shadow:inset 3px 0 3px -1px rgba(0,0,0,0.55),inset -3px 0 3px -1px rgba(0,0,0,0.55)"></div><div style="position:absolute;left:819px;top:553px;width:16px;height:16px;box-sizing:border-box;border-radius:50%;border:1.5px solid #c4c4c4;background:linear-gradient(180deg,#4a5b4c 0%,#5b6c5d 30%,#2a3e2c 55%,#142a16 85%,#2a3e2c 100%);box-shadow:inset 0 0 0 1px #000"></div><div style="position:absolute;left:851px;top:554px;font-size:16px;line-height:16px;color:#a0a0a0;white-space:nowrap;">S2动作注释18</div><div style="position:absolute;left:371px;top:573px;width:16px;height:16px;box-sizing:border-box;border-radius:50%;border:1.5px solid #c4c4c4;background:linear-gradient(180deg,#3e5c6e 0%,#4f6d7e 30%,#1b3a52 55%,#0e2b44 85%,#1e3f58 100%);box-shadow:inset 0 0 0 1px #000"></div><div style="position:absolute;left:403px;top:574px;font-size:16px;line-height:16px;color:#a0a0a0;white-space:nowrap;">S2条件注释19</div><div style="position:absolute;left:611px;top:573px;width:48px;height:16px;box-sizing:border-box;border-top:1px solid #6a6a6a;border-left:1px solid #d8d8d8;border-right:1px solid #d8d8d8;border-bottom:1px solid #c8ccd0;background:linear-gradient(180deg,#5b6c5d 0%,#58695a 30%,#33473a 52%,#1a301c 72%,#142a16 86%,#4f614f 100%);box-shadow:inset 3px 0 3px -1px rgba(0,0,0,0.55),inset -3px 0 3px -1px rgba(0,0,0,0.55)"></div><div style="position:absolute;left:675px;top:573px;width:48px;height:16px;box-sizing:border-box;border-top:1px solid #6a6a6a;border-left:1px solid #d8d8d8;border-right:1px solid #d8d8d8;border-bottom:1px solid #c8ccd0;background:linear-gradient(180deg,#5b6c5d 0%,#58695a 30%,#33473a 52%,#1a301c 72%,#142a16 86%,#4f614f 100%);box-shadow:inset 3px 0 3px -1px rgba(0,0,0,0.55),inset -3px 0 3px -1px rgba(0,0,0,0.55)"></div><div style="position:absolute;left:755px;top:573px;width:48px;height:16px;box-sizing:border-box;border-top:1px solid #6a6a6a;border-left:1px solid #d8d8d8;border-right:1px solid #d8d8d8;border-bottom:1px solid #c8ccd0;background:linear-gradient(180deg,#5b6c5d 0%,#58695a 30%,#33473a 52%,#1a301c 72%,#142a16 86%,#4f614f 100%);box-shadow:inset 3px 0 3px -1px rgba(0,0,0,0.55),inset -3px 0 3px -1px rgba(0,0,0,0.55)"></div><div style="position:absolute;left:819px;top:573px;width:16px;height:16px;box-sizing:border-box;border-radius:50%;border:1.5px solid #c4c4c4;background:linear-gradient(180deg,#4a5b4c 0%,#5b6c5d 30%,#2a3e2c 55%,#142a16 85%,#2a3e2c 100%);box-shadow:inset 0 0 0 1px #000"></div><div style="position:absolute;left:851px;top:574px;font-size:16px;line-height:16px;color:#a0a0a0;white-space:nowrap;">S2动作注释19</div><div style="position:absolute;left:371px;top:593px;width:16px;height:16px;box-sizing:border-box;border-radius:50%;border:1.5px solid #c4c4c4;background:linear-gradient(180deg,#3e5c6e 0%,#4f6d7e 30%,#1b3a52 55%,#0e2b44 85%,#1e3f58 100%);box-shadow:inset 0 0 0 1px #000"></div><div style="position:absolute;left:403px;top:594px;font-size:16px;line-height:16px;color:#a0a0a0;white-space:nowrap;">S2条件注释20</div><div style="position:absolute;left:611px;top:593px;width:48px;height:16px;box-sizing:border-box;border-top:1px solid #6a6a6a;border-left:1px solid #d8d8d8;border-right:1px solid #d8d8d8;border-bottom:1px solid #c8ccd0;background:linear-gradient(180deg,#5b6c5d 0%,#58695a 30%,#33473a 52%,#1a301c 72%,#142a16 86%,#4f614f 100%);box-shadow:inset 3px 0 3px -1px rgba(0,0,0,0.55),inset -3px 0 3px -1px rgba(0,0,0,0.55)"></div><div style="position:absolute;left:675px;top:593px;width:48px;height:16px;box-sizing:border-box;border-top:1px solid #6a6a6a;border-left:1px solid #d8d8d8;border-right:1px solid #d8d8d8;border-bottom:1px solid #c8ccd0;background:linear-gradient(180deg,#5b6c5d 0%,#58695a 30%,#33473a 52%,#1a301c 72%,#142a16 86%,#4f614f 100%);box-shadow:inset 3px 0 3px -1px rgba(0,0,0,0.55),inset -3px 0 3px -1px rgba(0,0,0,0.55)"></div><div style="position:absolute;left:755px;top:593px;width:48px;height:16px;box-sizing:border-box;border-top:1px solid #6a6a6a;border-left:1px solid #d8d8d8;border-right:1px solid #d8d8d8;border-bottom:1px solid #c8ccd0;background:linear-gradient(180deg,#5b6c5d 0%,#58695a 30%,#33473a 52%,#1a301c 72%,#142a16 86%,#4f614f 100%);box-shadow:inset 3px 0 3px -1px rgba(0,0,0,0.55),inset -3px 0 3px -1px rgba(0,0,0,0.55)"></div><div style="position:absolute;left:819px;top:593px;width:16px;height:16px;box-sizing:border-box;border-radius:50%;border:1.5px solid #c4c4c4;background:linear-gradient(180deg,#4a5b4c 0%,#5b6c5d 30%,#2a3e2c 55%,#142a16 85%,#2a3e2c 100%);box-shadow:inset 0 0 0 1px #000"></div><div style="position:absolute;left:851px;top:594px;font-size:16px;line-height:16px;color:#a0a0a0;white-space:nowrap;">S2动作注释20</div><div style="position:absolute;left:371px;top:613px;width:16px;height:16px;box-sizing:border-box;border-radius:50%;border:1.5px solid #c4c4c4;background:linear-gradient(180deg,#3e5c6e 0%,#4f6d7e 30%,#1b3a52 55%,#0e2b44 85%,#1e3f58 100%);box-shadow:inset 0 0 0 1px #000"></div><div style="position:absolute;left:403px;top:614px;font-size:16px;line-height:16px;color:#a0a0a0;white-space:nowrap;">S2条件注释21</div><div style="position:absolute;left:611px;top:613px;width:48px;height:16px;box-sizing:border-box;border-top:1px solid #6a6a6a;border-left:1px solid #d8d8d8;border-right:1px solid #d8d8d8;border-bottom:1px solid #c8ccd0;background:linear-gradient(180deg,#5b6c5d 0%,#58695a 30%,#33473a 52%,#1a301c 72%,#142a16 86%,#4f614f 100%);box-shadow:inset 3px 0 3px -1px rgba(0,0,0,0.55),inset -3px 0 3px -1px rgba(0,0,0,0.55)"></div><div style="position:absolute;left:675px;top:613px;width:48px;height:16px;box-sizing:border-box;border-top:1px solid #6a6a6a;border-left:1px solid #d8d8d8;border-right:1px solid #d8d8d8;border-bottom:1px solid #c8ccd0;background:linear-gradient(180deg,#5b6c5d 0%,#58695a 30%,#33473a 52%,#1a301c 72%,#142a16 86%,#4f614f 100%);box-shadow:inset 3px 0 3px -1px rgba(0,0,0,0.55),inset -3px 0 3px -1px rgba(0,0,0,0.55)"></div><div style="position:absolute;left:755px;top:613px;width:48px;height:16px;box-sizing:border-box;border-top:1px solid #6a6a6a;border-left:1px solid #d8d8d8;border-right:1px solid #d8d8d8;border-bottom:1px solid #c8ccd0;background:linear-gradient(180deg,#5b6c5d 0%,#58695a 30%,#33473a 52%,#1a301c 72%,#142a16 86%,#4f614f 100%);box-shadow:inset 3px 0 3px -1px rgba(0,0,0,0.55),inset -3px 0 3px -1px rgba(0,0,0,0.55)"></div><div style="position:absolute;left:819px;top:613px;width:16px;height:16px;box-sizing:border-box;border-radius:50%;border:1.5px solid #c4c4c4;background:linear-gradient(180deg,#4a5b4c 0%,#5b6c5d 30%,#2a3e2c 55%,#142a16 85%,#2a3e2c 100%);box-shadow:inset 0 0 0 1px #000"></div><div style="position:absolute;left:851px;top:614px;font-size:16px;line-height:16px;color:#a0a0a0;white-space:nowrap;">S2动作注释21</div><div style="position:absolute;left:371px;top:633px;width:16px;height:16px;box-sizing:border-box;border-radius:50%;border:1.5px solid #c4c4c4;background:linear-gradient(180deg,#3e5c6e 0%,#4f6d7e 30%,#1b3a52 55%,#0e2b44 85%,#1e3f58 100%);box-shadow:inset 0 0 0 1px #000"></div><div style="position:absolute;left:403px;top:634px;font-size:16px;line-height:16px;color:#a0a0a0;white-space:nowrap;">S2条件注释22</div><div style="position:absolute;left:611px;top:633px;width:48px;height:16px;box-sizing:border-box;border-top:1px solid #6a6a6a;border-left:1px solid #d8d8d8;border-right:1px solid #d8d8d8;border-bottom:1px solid #c8ccd0;background:linear-gradient(180deg,#5b6c5d 0%,#58695a 30%,#33473a 52%,#1a301c 72%,#142a16 86%,#4f614f 100%);box-shadow:inset 3px 0 3px -1px rgba(0,0,0,0.55),inset -3px 0 3px -1px rgba(0,0,0,0.55)"></div><div style="position:absolute;left:675px;top:633px;width:48px;height:16px;box-sizing:border-box;border-top:1px solid #6a6a6a;border-left:1px solid #d8d8d8;border-right:1px solid #d8d8d8;border-bottom:1px solid #c8ccd0;background:linear-gradient(180deg,#5b6c5d 0%,#58695a 30%,#33473a 52%,#1a301c 72%,#142a16 86%,#4f614f 100%);box-shadow:inset 3px 0 3px -1px rgba(0,0,0,0.55),inset -3px 0 3px -1px rgba(0,0,0,0.55)"></div><div style="position:absolute;left:755px;top:633px;width:48px;height:16px;box-sizing:border-box;border-top:1px solid #6a6a6a;border-left:1px solid #d8d8d8;border-right:1px solid #d8d8d8;border-bottom:1px solid #c8ccd0;background:linear-gradient(180deg,#5b6c5d 0%,#58695a 30%,#33473a 52%,#1a301c 72%,#142a16 86%,#4f614f 100%);box-shadow:inset 3px 0 3px -1px rgba(0,0,0,0.55),inset -3px 0 3px -1px rgba(0,0,0,0.55)"></div><div style="position:absolute;left:819px;top:633px;width:16px;height:16px;box-sizing:border-box;border-radius:50%;border:1.5px solid #c4c4c4;background:linear-gradient(180deg,#4a5b4c 0%,#5b6c5d 30%,#2a3e2c 55%,#142a16 85%,#2a3e2c 100%);box-shadow:inset 0 0 0 1px #000"></div><div style="position:absolute;left:851px;top:634px;font-size:16px;line-height:16px;color:#a0a0a0;white-space:nowrap;">S2动作注释22</div><div style="position:absolute;left:371px;top:653px;width:16px;height:16px;box-sizing:border-box;border-radius:50%;border:1.5px solid #c4c4c4;background:linear-gradient(180deg,#3e5c6e 0%,#4f6d7e 30%,#1b3a52 55%,#0e2b44 85%,#1e3f58 100%);box-shadow:inset 0 0 0 1px #000"></div><div style="position:absolute;left:403px;top:654px;font-size:16px;line-height:16px;color:#a0a0a0;white-space:nowrap;">S2条件注释23</div><div style="position:absolute;left:611px;top:653px;width:48px;height:16px;box-sizing:border-box;border-top:1px solid #6a6a6a;border-left:1px solid #d8d8d8;border-right:1px solid #d8d8d8;border-bottom:1px solid #c8ccd0;background:linear-gradient(180deg,#5b6c5d 0%,#58695a 30%,#33473a 52%,#1a301c 72%,#142a16 86%,#4f614f 100%);box-shadow:inset 3px 0 3px -1px rgba(0,0,0,0.55),inset -3px 0 3px -1px rgba(0,0,0,0.55)"></div><div style="position:absolute;left:675px;top:653px;width:48px;height:16px;box-sizing:border-box;border-top:1px solid #6a6a6a;border-left:1px solid #d8d8d8;border-right:1px solid #d8d8d8;border-bottom:1px solid #c8ccd0;background:linear-gradient(180deg,#5b6c5d 0%,#58695a 30%,#33473a 52%,#1a301c 72%,#142a16 86%,#4f614f 100%);box-shadow:inset 3px 0 3px -1px rgba(0,0,0,0.55),inset -3px 0 3px -1px rgba(0,0,0,0.55)"></div><div style="position:absolute;left:755px;top:653px;width:48px;height:16px;box-sizing:border-box;border-top:1px solid #6a6a6a;border-left:1px solid #d8d8d8;border-right:1px solid #d8d8d8;border-bottom:1px solid #c8ccd0;background:linear-gradient(180deg,#5b6c5d 0%,#58695a 30%,#33473a 52%,#1a301c 72%,#142a16 86%,#4f614f 100%);box-shadow:inset 3px 0 3px -1px rgba(0,0,0,0.55),inset -3px 0 3px -1px rgba(0,0,0,0.55)"></div><div style="position:absolute;left:819px;top:653px;width:16px;height:16px;box-sizing:border-box;border-radius:50%;border:1.5px solid #c4c4c4;background:linear-gradient(180deg,#4a5b4c 0%,#5b6c5d 30%,#2a3e2c 55%,#142a16 85%,#2a3e2c 100%);box-shadow:inset 0 0 0 1px #000"></div><div style="position:absolute;left:851px;top:654px;font-size:16px;line-height:16px;color:#a0a0a0;white-space:nowrap;">S2动作注释23</div><div style="position:absolute;left:371px;top:673px;width:16px;height:16px;box-sizing:border-box;border-radius:50%;border:1.5px solid #c4c4c4;background:linear-gradient(180deg,#3e5c6e 0%,#4f6d7e 30%,#1b3a52 55%,#0e2b44 85%,#1e3f58 100%);box-shadow:inset 0 0 0 1px #000"></div><div style="position:absolute;left:403px;top:674px;font-size:16px;line-height:16px;color:#a0a0a0;white-space:nowrap;">S2条件注释24</div><div style="position:absolute;left:611px;top:673px;width:48px;height:16px;box-sizing:border-box;border-top:1px solid #6a6a6a;border-left:1px solid #d8d8d8;border-right:1px solid #d8d8d8;border-bottom:1px solid #c8ccd0;background:linear-gradient(180deg,#5b6c5d 0%,#58695a 30%,#33473a 52%,#1a301c 72%,#142a16 86%,#4f614f 100%);box-shadow:inset 3px 0 3px -1px rgba(0,0,0,0.55),inset -3px 0 3px -1px rgba(0,0,0,0.55)"></div><div style="position:absolute;left:675px;top:673px;width:48px;height:16px;box-sizing:border-box;border-top:1px solid #6a6a6a;border-left:1px solid #d8d8d8;border-right:1px solid #d8d8d8;border-bottom:1px solid #c8ccd0;background:linear-gradient(180deg,#5b6c5d 0%,#58695a 30%,#33473a 52%,#1a301c 72%,#142a16 86%,#4f614f 100%);box-shadow:inset 3px 0 3px -1px rgba(0,0,0,0.55),inset -3px 0 3px -1px rgba(0,0,0,0.55)"></div><div style="position:absolute;left:755px;top:673px;width:48px;height:16px;box-sizing:border-box;border-top:1px solid #6a6a6a;border-left:1px solid #d8d8d8;border-right:1px solid #d8d8d8;border-bottom:1px solid #c8ccd0;background:linear-gradient(180deg,#5b6c5d 0%,#58695a 30%,#33473a 52%,#1a301c 72%,#142a16 86%,#4f614f 100%);box-shadow:inset 3px 0 3px -1px rgba(0,0,0,0.55),inset -3px 0 3px -1px rgba(0,0,0,0.55)"></div><div style="position:absolute;left:819px;top:673px;width:16px;height:16px;box-sizing:border-box;border-radius:50%;border:1.5px solid #c4c4c4;background:linear-gradient(180deg,#4a5b4c 0%,#5b6c5d 30%,#2a3e2c 55%,#142a16 85%,#2a3e2c 100%);box-shadow:inset 0 0 0 1px #000"></div><div style="position:absolute;left:851px;top:674px;font-size:16px;line-height:16px;color:#a0a0a0;white-space:nowrap;">S2动作注释24</div><div style="position:absolute;left:371px;top:693px;width:16px;height:16px;box-sizing:border-box;border-radius:50%;border:1.5px solid #c4c4c4;background:linear-gradient(180deg,#3e5c6e 0%,#4f6d7e 30%,#1b3a52 55%,#0e2b44 85%,#1e3f58 100%);box-shadow:inset 0 0 0 1px #000"></div><div style="position:absolute;left:403px;top:694px;font-size:16px;line-height:16px;color:#a0a0a0;white-space:nowrap;">S2条件注释25</div><div style="position:absolute;left:611px;top:693px;width:48px;height:16px;box-sizing:border-box;border-top:1px solid #6a6a6a;border-left:1px solid #d8d8d8;border-right:1px solid #d8d8d8;border-bottom:1px solid #c8ccd0;background:linear-gradient(180deg,#5b6c5d 0%,#58695a 30%,#33473a 52%,#1a301c 72%,#142a16 86%,#4f614f 100%);box-shadow:inset 3px 0 3px -1px rgba(0,0,0,0.55),inset -3px 0 3px -1px rgba(0,0,0,0.55)"></div><div style="position:absolute;left:675px;top:693px;width:48px;height:16px;box-sizing:border-box;border-top:1px solid #6a6a6a;border-left:1px solid #d8d8d8;border-right:1px solid #d8d8d8;border-bottom:1px solid #c8ccd0;background:linear-gradient(180deg,#5b6c5d 0%,#58695a 30%,#33473a 52%,#1a301c 72%,#142a16 86%,#4f614f 100%);box-shadow:inset 3px 0 3px -1px rgba(0,0,0,0.55),inset -3px 0 3px -1px rgba(0,0,0,0.55)"></div><div style="position:absolute;left:755px;top:693px;width:48px;height:16px;box-sizing:border-box;border-top:1px solid #6a6a6a;border-left:1px solid #d8d8d8;border-right:1px solid #d8d8d8;border-bottom:1px solid #c8ccd0;background:linear-gradient(180deg,#5b6c5d 0%,#58695a 30%,#33473a 52%,#1a301c 72%,#142a16 86%,#4f614f 100%);box-shadow:inset 3px 0 3px -1px rgba(0,0,0,0.55),inset -3px 0 3px -1px rgba(0,0,0,0.55)"></div><div style="position:absolute;left:819px;top:693px;width:16px;height:16px;box-sizing:border-box;border-radius:50%;border:1.5px solid #c4c4c4;background:linear-gradient(180deg,#4a5b4c 0%,#5b6c5d 30%,#2a3e2c 55%,#142a16 85%,#2a3e2c 100%);box-shadow:inset 0 0 0 1px #000"></div><div style="position:absolute;left:851px;top:694px;font-size:16px;line-height:16px;color:#a0a0a0;white-space:nowrap;">S2动作注释25</div><div style="position:absolute;left:371px;top:713px;width:16px;height:16px;box-sizing:border-box;border-radius:50%;border:1.5px solid #c4c4c4;background:linear-gradient(180deg,#3e5c6e 0%,#4f6d7e 30%,#1b3a52 55%,#0e2b44 85%,#1e3f58 100%);box-shadow:inset 0 0 0 1px #000"></div><div style="position:absolute;left:403px;top:714px;font-size:16px;line-height:16px;color:#a0a0a0;white-space:nowrap;">S2条件注释26</div><div style="position:absolute;left:611px;top:713px;width:48px;height:16px;box-sizing:border-box;border-top:1px solid #6a6a6a;border-left:1px solid #d8d8d8;border-right:1px solid #d8d8d8;border-bottom:1px solid #c8ccd0;background:linear-gradient(180deg,#5b6c5d 0%,#58695a 30%,#33473a 52%,#1a301c 72%,#142a16 86%,#4f614f 100%);box-shadow:inset 3px 0 3px -1px rgba(0,0,0,0.55),inset -3px 0 3px -1px rgba(0,0,0,0.55)"></div><div style="position:absolute;left:675px;top:713px;width:48px;height:16px;box-sizing:border-box;border-top:1px solid #6a6a6a;border-left:1px solid #d8d8d8;border-right:1px solid #d8d8d8;border-bottom:1px solid #c8ccd0;background:linear-gradient(180deg,#5b6c5d 0%,#58695a 30%,#33473a 52%,#1a301c 72%,#142a16 86%,#4f614f 100%);box-shadow:inset 3px 0 3px -1px rgba(0,0,0,0.55),inset -3px 0 3px -1px rgba(0,0,0,0.55)"></div><div style="position:absolute;left:755px;top:713px;width:48px;height:16px;box-sizing:border-box;border-top:1px solid #6a6a6a;border-left:1px solid #d8d8d8;border-right:1px solid #d8d8d8;border-bottom:1px solid #c8ccd0;background:linear-gradient(180deg,#5b6c5d 0%,#58695a 30%,#33473a 52%,#1a301c 72%,#142a16 86%,#4f614f 100%);box-shadow:inset 3px 0 3px -1px rgba(0,0,0,0.55),inset -3px 0 3px -1px rgba(0,0,0,0.55)"></div><div style="position:absolute;left:819px;top:713px;width:16px;height:16px;box-sizing:border-box;border-radius:50%;border:1.5px solid #c4c4c4;background:linear-gradient(180deg,#4a5b4c 0%,#5b6c5d 30%,#2a3e2c 55%,#142a16 85%,#2a3e2c 100%);box-shadow:inset 0 0 0 1px #000"></div><div style="position:absolute;left:851px;top:714px;font-size:16px;line-height:16px;color:#a0a0a0;white-space:nowrap;">S2动作注释26</div><div style="position:absolute;left:371px;top:733px;width:16px;height:16px;box-sizing:border-box;border-radius:50%;border:1.5px solid #c4c4c4;background:linear-gradient(180deg,#3e5c6e 0%,#4f6d7e 30%,#1b3a52 55%,#0e2b44 85%,#1e3f58 100%);box-shadow:inset 0 0 0 1px #000"></div><div style="position:absolute;left:403px;top:734px;font-size:16px;line-height:16px;color:#a0a0a0;white-space:nowrap;">S2条件注释27</div><div style="position:absolute;left:611px;top:733px;width:48px;height:16px;box-sizing:border-box;border-top:1px solid #6a6a6a;border-left:1px solid #d8d8d8;border-right:1px solid #d8d8d8;border-bottom:1px solid #c8ccd0;background:linear-gradient(180deg,#5b6c5d 0%,#58695a 30%,#33473a 52%,#1a301c 72%,#142a16 86%,#4f614f 100%);box-shadow:inset 3px 0 3px -1px rgba(0,0,0,0.55),inset -3px 0 3px -1px rgba(0,0,0,0.55)"></div><div style="position:absolute;left:675px;top:733px;width:48px;height:16px;box-sizing:border-box;border-top:1px solid #6a6a6a;border-left:1px solid #d8d8d8;border-right:1px solid #d8d8d8;border-bottom:1px solid #c8ccd0;background:linear-gradient(180deg,#5b6c5d 0%,#58695a 30%,#33473a 52%,#1a301c 72%,#142a16 86%,#4f614f 100%);box-shadow:inset 3px 0 3px -1px rgba(0,0,0,0.55),inset -3px 0 3px -1px rgba(0,0,0,0.55)"></div><div style="position:absolute;left:755px;top:733px;width:48px;height:16px;box-sizing:border-box;border-top:1px solid #6a6a6a;border-left:1px solid #d8d8d8;border-right:1px solid #d8d8d8;border-bottom:1px solid #c8ccd0;background:linear-gradient(180deg,#5b6c5d 0%,#58695a 30%,#33473a 52%,#1a301c 72%,#142a16 86%,#4f614f 100%);box-shadow:inset 3px 0 3px -1px rgba(0,0,0,0.55),inset -3px 0 3px -1px rgba(0,0,0,0.55)"></div><div style="position:absolute;left:819px;top:733px;width:16px;height:16px;box-sizing:border-box;border-radius:50%;border:1.5px solid #c4c4c4;background:linear-gradient(180deg,#4a5b4c 0%,#5b6c5d 30%,#2a3e2c 55%,#142a16 85%,#2a3e2c 100%);box-shadow:inset 0 0 0 1px #000"></div><div style="position:absolute;left:851px;top:734px;font-size:16px;line-height:16px;color:#a0a0a0;white-space:nowrap;">S2动作注释27</div><div style="position:absolute;left:371px;top:753px;width:16px;height:16px;box-sizing:border-box;border-radius:50%;border:1.5px solid #c4c4c4;background:linear-gradient(180deg,#3e5c6e 0%,#4f6d7e 30%,#1b3a52 55%,#0e2b44 85%,#1e3f58 100%);box-shadow:inset 0 0 0 1px #000"></div><div style="position:absolute;left:403px;top:754px;font-size:16px;line-height:16px;color:#a0a0a0;white-space:nowrap;">S2条件注释28</div><div style="position:absolute;left:611px;top:753px;width:48px;height:16px;box-sizing:border-box;border-top:1px solid #6a6a6a;border-left:1px solid #d8d8d8;border-right:1px solid #d8d8d8;border-bottom:1px solid #c8ccd0;background:linear-gradient(180deg,#5b6c5d 0%,#58695a 30%,#33473a 52%,#1a301c 72%,#142a16 86%,#4f614f 100%);box-shadow:inset 3px 0 3px -1px rgba(0,0,0,0.55),inset -3px 0 3px -1px rgba(0,0,0,0.55)"></div><div style="position:absolute;left:675px;top:753px;width:48px;height:16px;box-sizing:border-box;border-top:1px solid #6a6a6a;border-left:1px solid #d8d8d8;border-right:1px solid #d8d8d8;border-bottom:1px solid #c8ccd0;background:linear-gradient(180deg,#5b6c5d 0%,#58695a 30%,#33473a 52%,#1a301c 72%,#142a16 86%,#4f614f 100%);box-shadow:inset 3px 0 3px -1px rgba(0,0,0,0.55),inset -3px 0 3px -1px rgba(0,0,0,0.55)"></div><div style="position:absolute;left:755px;top:753px;width:48px;height:16px;box-sizing:border-box;border-top:1px solid #6a6a6a;border-left:1px solid #d8d8d8;border-right:1px solid #d8d8d8;border-bottom:1px solid #c8ccd0;background:linear-gradient(180deg,#5b6c5d 0%,#58695a 30%,#33473a 52%,#1a301c 72%,#142a16 86%,#4f614f 100%);box-shadow:inset 3px 0 3px -1px rgba(0,0,0,0.55),inset -3px 0 3px -1px rgba(0,0,0,0.55)"></div><div style="position:absolute;left:819px;top:753px;width:16px;height:16px;box-sizing:border-box;border-radius:50%;border:1.5px solid #c4c4c4;background:linear-gradient(180deg,#4a5b4c 0%,#5b6c5d 30%,#2a3e2c 55%,#142a16 85%,#2a3e2c 100%);box-shadow:inset 0 0 0 1px #000"></div><div style="position:absolute;left:851px;top:754px;font-size:16px;line-height:16px;color:#a0a0a0;white-space:nowrap;">S2动作注释28</div><div style="position:absolute;left:371px;top:773px;width:16px;height:16px;box-sizing:border-box;border-radius:50%;border:1.5px solid #c4c4c4;background:linear-gradient(180deg,#3e5c6e 0%,#4f6d7e 30%,#1b3a52 55%,#0e2b44 85%,#1e3f58 100%);box-shadow:inset 0 0 0 1px #000"></div><div style="position:absolute;left:403px;top:774px;font-size:16px;line-height:16px;color:#a0a0a0;white-space:nowrap;">S2条件注释29</div><div style="position:absolute;left:611px;top:773px;width:48px;height:16px;box-sizing:border-box;border-top:1px solid #6a6a6a;border-left:1px solid #d8d8d8;border-right:1px solid #d8d8d8;border-bottom:1px solid #c8ccd0;background:linear-gradient(180deg,#5b6c5d 0%,#58695a 30%,#33473a 52%,#1a301c 72%,#142a16 86%,#4f614f 100%);box-shadow:inset 3px 0 3px -1px rgba(0,0,0,0.55),inset -3px 0 3px -1px rgba(0,0,0,0.55)"></div><div style="position:absolute;left:675px;top:773px;width:48px;height:16px;box-sizing:border-box;border-top:1px solid #6a6a6a;border-left:1px solid #d8d8d8;border-right:1px solid #d8d8d8;border-bottom:1px solid #c8ccd0;background:linear-gradient(180deg,#5b6c5d 0%,#58695a 30%,#33473a 52%,#1a301c 72%,#142a16 86%,#4f614f 100%);box-shadow:inset 3px 0 3px -1px rgba(0,0,0,0.55),inset -3px 0 3px -1px rgba(0,0,0,0.55)"></div><div style="position:absolute;left:755px;top:773px;width:48px;height:16px;box-sizing:border-box;border-top:1px solid #6a6a6a;border-left:1px solid #d8d8d8;border-right:1px solid #d8d8d8;border-bottom:1px solid #c8ccd0;background:linear-gradient(180deg,#5b6c5d 0%,#58695a 30%,#33473a 52%,#1a301c 72%,#142a16 86%,#4f614f 100%);box-shadow:inset 3px 0 3px -1px rgba(0,0,0,0.55),inset -3px 0 3px -1px rgba(0,0,0,0.55)"></div><div style="position:absolute;left:819px;top:773px;width:16px;height:16px;box-sizing:border-box;border-radius:50%;border:1.5px solid #c4c4c4;background:linear-gradient(180deg,#4a5b4c 0%,#5b6c5d 30%,#2a3e2c 55%,#142a16 85%,#2a3e2c 100%);box-shadow:inset 0 0 0 1px #000"></div><div style="position:absolute;left:851px;top:774px;font-size:16px;line-height:16px;color:#a0a0a0;white-space:nowrap;">S2动作注释29</div><div style="position:absolute;left:371px;top:793px;width:16px;height:16px;box-sizing:border-box;border-radius:50%;border:1.5px solid #c4c4c4;background:linear-gradient(180deg,#3e5c6e 0%,#4f6d7e 30%,#1b3a52 55%,#0e2b44 85%,#1e3f58 100%);box-shadow:inset 0 0 0 1px #000"></div><div style="position:absolute;left:403px;top:794px;font-size:16px;line-height:16px;color:#a0a0a0;white-space:nowrap;">S2条件注释30</div><div style="position:absolute;left:611px;top:793px;width:48px;height:16px;box-sizing:border-box;border-top:1px solid #6a6a6a;border-left:1px solid #d8d8d8;border-right:1px solid #d8d8d8;border-bottom:1px solid #c8ccd0;background:linear-gradient(180deg,#5b6c5d 0%,#58695a 30%,#33473a 52%,#1a301c 72%,#142a16 86%,#4f614f 100%);box-shadow:inset 3px 0 3px -1px rgba(0,0,0,0.55),inset -3px 0 3px -1px rgba(0,0,0,0.55)"></div><div style="position:absolute;left:675px;top:793px;width:48px;height:16px;box-sizing:border-box;border-top:1px solid #6a6a6a;border-left:1px solid #d8d8d8;border-right:1px solid #d8d8d8;border-bottom:1px solid #c8ccd0;background:linear-gradient(180deg,#5b6c5d 0%,#58695a 30%,#33473a 52%,#1a301c 72%,#142a16 86%,#4f614f 100%);box-shadow:inset 3px 0 3px -1px rgba(0,0,0,0.55),inset -3px 0 3px -1px rgba(0,0,0,0.55)"></div><div style="position:absolute;left:755px;top:793px;width:48px;height:16px;box-sizing:border-box;border-top:1px solid #6a6a6a;border-left:1px solid #d8d8d8;border-right:1px solid #d8d8d8;border-bottom:1px solid #c8ccd0;background:linear-gradient(180deg,#5b6c5d 0%,#58695a 30%,#33473a 52%,#1a301c 72%,#142a16 86%,#4f614f 100%);box-shadow:inset 3px 0 3px -1px rgba(0,0,0,0.55),inset -3px 0 3px -1px rgba(0,0,0,0.55)"></div><div style="position:absolute;left:819px;top:793px;width:16px;height:16px;box-sizing:border-box;border-radius:50%;border:1.5px solid #c4c4c4;background:linear-gradient(180deg,#4a5b4c 0%,#5b6c5d 30%,#2a3e2c 55%,#142a16 85%,#2a3e2c 100%);box-shadow:inset 0 0 0 1px #000"></div><div style="position:absolute;left:851px;top:794px;font-size:16px;line-height:16px;color:#a0a0a0;white-space:nowrap;">S2动作注释30</div><div style="position:absolute;left:371px;top:813px;width:16px;height:16px;box-sizing:border-box;border-radius:50%;border:1.5px solid #c4c4c4;background:linear-gradient(180deg,#3e5c6e 0%,#4f6d7e 30%,#1b3a52 55%,#0e2b44 85%,#1e3f58 100%);box-shadow:inset 0 0 0 1px #000"></div><div style="position:absolute;left:403px;top:814px;font-size:16px;line-height:16px;color:#a0a0a0;white-space:nowrap;">S2条件注释31</div><div style="position:absolute;left:611px;top:813px;width:48px;height:16px;box-sizing:border-box;border-top:1px solid #6a6a6a;border-left:1px solid #d8d8d8;border-right:1px solid #d8d8d8;border-bottom:1px solid #c8ccd0;background:linear-gradient(180deg,#5b6c5d 0%,#58695a 30%,#33473a 52%,#1a301c 72%,#142a16 86%,#4f614f 100%);box-shadow:inset 3px 0 3px -1px rgba(0,0,0,0.55),inset -3px 0 3px -1px rgba(0,0,0,0.55)"></div><div style="position:absolute;left:675px;top:813px;width:48px;height:16px;box-sizing:border-box;border-top:1px solid #6a6a6a;border-left:1px solid #d8d8d8;border-right:1px solid #d8d8d8;border-bottom:1px solid #c8ccd0;background:linear-gradient(180deg,#5b6c5d 0%,#58695a 30%,#33473a 52%,#1a301c 72%,#142a16 86%,#4f614f 100%);box-shadow:inset 3px 0 3px -1px rgba(0,0,0,0.55),inset -3px 0 3px -1px rgba(0,0,0,0.55)"></div><div style="position:absolute;left:755px;top:813px;width:48px;height:16px;box-sizing:border-box;border-top:1px solid #6a6a6a;border-left:1px solid #d8d8d8;border-right:1px solid #d8d8d8;border-bottom:1px solid #c8ccd0;background:linear-gradient(180deg,#5b6c5d 0%,#58695a 30%,#33473a 52%,#1a301c 72%,#142a16 86%,#4f614f 100%);box-shadow:inset 3px 0 3px -1px rgba(0,0,0,0.55),inset -3px 0 3px -1px rgba(0,0,0,0.55)"></div><div style="position:absolute;left:819px;top:813px;width:16px;height:16px;box-sizing:border-box;border-radius:50%;border:1.5px solid #c4c4c4;background:linear-gradient(180deg,#4a5b4c 0%,#5b6c5d 30%,#2a3e2c 55%,#142a16 85%,#2a3e2c 100%);box-shadow:inset 0 0 0 1px #000"></div><div style="position:absolute;left:851px;top:814px;font-size:16px;line-height:16px;color:#a0a0a0;white-space:nowrap;">S2动作注释31</div><div style="position:absolute;left:371px;top:833px;width:16px;height:16px;box-sizing:border-box;border-radius:50%;border:1.5px solid #c4c4c4;background:linear-gradient(180deg,#3e5c6e 0%,#4f6d7e 30%,#1b3a52 55%,#0e2b44 85%,#1e3f58 100%);box-shadow:inset 0 0 0 1px #000"></div><div style="position:absolute;left:403px;top:834px;font-size:16px;line-height:16px;color:#a0a0a0;white-space:nowrap;">S2条件注释32</div><div style="position:absolute;left:611px;top:833px;width:48px;height:16px;box-sizing:border-box;border-top:1px solid #6a6a6a;border-left:1px solid #d8d8d8;border-right:1px solid #d8d8d8;border-bottom:1px solid #c8ccd0;background:linear-gradient(180deg,#5b6c5d 0%,#58695a 30%,#33473a 52%,#1a301c 72%,#142a16 86%,#4f614f 100%);box-shadow:inset 3px 0 3px -1px rgba(0,0,0,0.55),inset -3px 0 3px -1px rgba(0,0,0,0.55)"></div><div style="position:absolute;left:675px;top:833px;width:48px;height:16px;box-sizing:border-box;border-top:1px solid #6a6a6a;border-left:1px solid #d8d8d8;border-right:1px solid #d8d8d8;border-bottom:1px solid #c8ccd0;background:linear-gradient(180deg,#5b6c5d 0%,#58695a 30%,#33473a 52%,#1a301c 72%,#142a16 86%,#4f614f 100%);box-shadow:inset 3px 0 3px -1px rgba(0,0,0,0.55),inset -3px 0 3px -1px rgba(0,0,0,0.55)"></div><div style="position:absolute;left:755px;top:833px;width:48px;height:16px;box-sizing:border-box;border-top:1px solid #6a6a6a;border-left:1px solid #d8d8d8;border-right:1px solid #d8d8d8;border-bottom:1px solid #c8ccd0;background:linear-gradient(180deg,#5b6c5d 0%,#58695a 30%,#33473a 52%,#1a301c 72%,#142a16 86%,#4f614f 100%);box-shadow:inset 3px 0 3px -1px rgba(0,0,0,0.55),inset -3px 0 3px -1px rgba(0,0,0,0.55)"></div><div style="position:absolute;left:819px;top:833px;width:16px;height:16px;box-sizing:border-box;border-radius:50%;border:1.5px solid #c4c4c4;background:linear-gradient(180deg,#4a5b4c 0%,#5b6c5d 30%,#2a3e2c 55%,#142a16 85%,#2a3e2c 100%);box-shadow:inset 0 0 0 1px #000"></div><div style="position:absolute;left:851px;top:834px;font-size:16px;line-height:16px;color:#a0a0a0;white-space:nowrap;">S2动作注释32</div><div style="position:absolute;left:36px;top:226px;width:128px;height:47px;"><div style="position:absolute;left:0px;top:0px;width:128px;height:47px;background:linear-gradient(180deg,#8d9096 0%,#e8eaee 6%,#f7f8fa 50%,#c4c7cc 92%,#8a8d92 100%)"></div><div style="position:absolute;left:0px;top:0px;width:6px;height:47px;background:linear-gradient(90deg,#6c6f74 0%,#f2f4f6 35%,#d6d9dd 70%,#a3a6ab 100%)"></div><div style="position:absolute;left:122px;top:0px;width:6px;height:47px;background:linear-gradient(90deg,#a3a6ab 0%,#d6d9dd 30%,#f2f4f6 65%,#6c6f74 100%)"></div><div style="position:absolute;left:6px;top:3px;width:116px;height:40px;background:#1e1e1e"></div><div style="position:absolute;left:7px;top:4px;width:114px;height:38px;background:linear-gradient(180deg,#555 0%,#3c3c3c 50%,#555 100%)"></div><div style="position:absolute;left:11px;top:5px;width:106px;height:37px;background:linear-gradient(180deg,#3b3b3b 0%,#373737 46%,#1b1b1b 46%,#1e1e1e 100%);box-shadow:inset 0 0 0 1px #5e5e5e,inset 0 0 0 2px #3c3c3c"></div><div style="position:absolute;left:0px;top:15px;width:128px;font-size:16px;line-height:16px;color:#a0a0a0;white-space:nowrap;text-align:center;">工位1</div></div><div style="position:absolute;left:36px;top:278px;width:128px;height:47px;"><div style="position:absolute;left:0px;top:0px;width:128px;height:47px;background:linear-gradient(180deg,#8d9096 0%,#e8eaee 6%,#f7f8fa 50%,#c4c7cc 92%,#8a8d92 100%)"></div><div style="position:absolute;left:0px;top:0px;width:6px;height:47px;background:linear-gradient(90deg,#6c6f74 0%,#f2f4f6 35%,#d6d9dd 70%,#a3a6ab 100%)"></div><div style="position:absolute;left:122px;top:0px;width:6px;height:47px;background:linear-gradient(90deg,#a3a6ab 0%,#d6d9dd 30%,#f2f4f6 65%,#6c6f74 100%)"></div><div style="position:absolute;left:6px;top:3px;width:116px;height:40px;background:#5a5a5a"></div><div style="position:absolute;left:7px;top:4px;width:114px;height:38px;background:linear-gradient(180deg,#c8c8c8 0%,#9c9c9c 100%)"></div><div style="position:absolute;left:11px;top:5px;width:106px;height:37px;background:radial-gradient(ellipse 70% 75% at 50% 50%,#ffffff 0%,#fdfdfd 55%,#d8d8d8 100%);box-shadow:inset 0 0 0 1px #9a9a9a"></div><div style="position:absolute;left:0px;top:15px;width:128px;font-size:16px;line-height:16px;color:#000;white-space:nowrap;text-align:center;">工位2</div></div><div style="position:absolute;left:36px;top:330px;width:128px;height:47px;"><div style="position:absolute;left:0px;top:0px;width:128px;height:47px;background:linear-gradient(180deg,#8d9096 0%,#e8eaee 6%,#f7f8fa 50%,#c4c7cc 92%,#8a8d92 100%)"></div><div style="position:absolute;left:0px;top:0px;width:6px;height:47px;background:linear-gradient(90deg,#6c6f74 0%,#f2f4f6 35%,#d6d9dd 70%,#a3a6ab 100%)"></div><div style="position:absolute;left:122px;top:0px;width:6px;height:47px;background:linear-gradient(90deg,#a3a6ab 0%,#d6d9dd 30%,#f2f4f6 65%,#6c6f74 100%)"></div><div style="position:absolute;left:6px;top:3px;width:116px;height:40px;background:#1e1e1e"></div><div style="position:absolute;left:7px;top:4px;width:114px;height:38px;background:linear-gradient(180deg,#555 0%,#3c3c3c 50%,#555 100%)"></div><div style="position:absolute;left:11px;top:5px;width:106px;height:37px;background:linear-gradient(180deg,#3b3b3b 0%,#373737 46%,#1b1b1b 46%,#1e1e1e 100%);box-shadow:inset 0 0 0 1px #5e5e5e,inset 0 0 0 2px #3c3c3c"></div><div style="position:absolute;left:0px;top:15px;width:128px;font-size:16px;line-height:16px;color:#a0a0a0;white-space:nowrap;text-align:center;">工位3</div></div><div style="position:absolute;left:36px;top:382px;width:128px;height:47px;"><div style="position:absolute;left:0px;top:0px;width:128px;height:47px;background:linear-gradient(180deg,#8d9096 0%,#e8eaee 6%,#f7f8fa 50%,#c4c7cc 92%,#8a8d92 100%)"></div><div style="position:absolute;left:0px;top:0px;width:6px;height:47px;background:linear-gradient(90deg,#6c6f74 0%,#f2f4f6 35%,#d6d9dd 70%,#a3a6ab 100%)"></div><div style="position:absolute;left:122px;top:0px;width:6px;height:47px;background:linear-gradient(90deg,#a3a6ab 0%,#d6d9dd 30%,#f2f4f6 65%,#6c6f74 100%)"></div><div style="position:absolute;left:6px;top:3px;width:116px;height:40px;background:#1e1e1e"></div><div style="position:absolute;left:7px;top:4px;width:114px;height:38px;background:linear-gradient(180deg,#555 0%,#3c3c3c 50%,#555 100%)"></div><div style="position:absolute;left:11px;top:5px;width:106px;height:37px;background:linear-gradient(180deg,#3b3b3b 0%,#373737 46%,#1b1b1b 46%,#1e1e1e 100%);box-shadow:inset 0 0 0 1px #5e5e5e,inset 0 0 0 2px #3c3c3c"></div><div style="position:absolute;left:0px;top:15px;width:128px;font-size:16px;line-height:16px;color:#a0a0a0;white-space:nowrap;text-align:center;">工位4</div></div><div style="position:absolute;left:36px;top:434px;width:128px;height:47px;"><div style="position:absolute;left:0px;top:0px;width:128px;height:47px;background:linear-gradient(180deg,#8d9096 0%,#e8eaee 6%,#f7f8fa 50%,#c4c7cc 92%,#8a8d92 100%)"></div><div style="position:absolute;left:0px;top:0px;width:6px;height:47px;background:linear-gradient(90deg,#6c6f74 0%,#f2f4f6 35%,#d6d9dd 70%,#a3a6ab 100%)"></div><div style="position:absolute;left:122px;top:0px;width:6px;height:47px;background:linear-gradient(90deg,#a3a6ab 0%,#d6d9dd 30%,#f2f4f6 65%,#6c6f74 100%)"></div><div style="position:absolute;left:6px;top:3px;width:116px;height:40px;background:#1e1e1e"></div><div style="position:absolute;left:7px;top:4px;width:114px;height:38px;background:linear-gradient(180deg,#555 0%,#3c3c3c 50%,#555 100%)"></div><div style="position:absolute;left:11px;top:5px;width:106px;height:37px;background:linear-gradient(180deg,#3b3b3b 0%,#373737 46%,#1b1b1b 46%,#1e1e1e 100%);box-shadow:inset 0 0 0 1px #5e5e5e,inset 0 0 0 2px #3c3c3c"></div><div style="position:absolute;left:0px;top:15px;width:128px;font-size:16px;line-height:16px;color:#a0a0a0;white-space:nowrap;text-align:center;">工位5</div></div><div style="position:absolute;left:259px;top:225px;width:97px;height:16px;"><div style="position:absolute;left:0px;top:0px;width:97px;height:16px;box-sizing:border-box;border-top:1px solid #8d8d8d;border-bottom:1px solid #8d8d8d;border-left:3px solid #d8d8d8;border-right:3px solid #d8d8d8;background:radial-gradient(ellipse 60% 65% at 50% 55%,#e2ffe2 0%,#d0ffd0 40%,#8ef78e 80%,#3ee83e 100%)"></div><div style="position:absolute;left:0px;top:-1px;width:97px;font-size:16px;line-height:16px;color:#a0a0a0;white-space:nowrap;text-align:center;">自动模式</div></div><div style="position:absolute;left:259px;top:245px;width:97px;height:16px;"><div style="position:absolute;left:0px;top:0px;width:97px;height:16px;box-sizing:border-box;border-top:1px solid #8d8d8d;border-bottom:1px solid #8d8d8d;border-left:3px solid #d8d8d8;border-right:3px solid #d8d8d8;background:linear-gradient(180deg,#5b6c5d 0%,#58695a 30%,#33473a 52%,#1a301c 72%,#142a16 86%,#4f614f 100%)"></div><div style="position:absolute;left:0px;top:-1px;width:97px;font-size:16px;line-height:16px;color:#a0a0a0;white-space:nowrap;text-align:center;">单步模式</div></div><div style="position:absolute;left:259px;top:265px;width:97px;height:16px;"><div style="position:absolute;left:0px;top:0px;width:97px;height:16px;box-sizing:border-box;border-top:1px solid #8d8d8d;border-bottom:1px solid #8d8d8d;border-left:3px solid #d8d8d8;border-right:3px solid #d8d8d8;background:linear-gradient(180deg,#5b6c5d 0%,#58695a 30%,#33473a 52%,#1a301c 72%,#142a16 86%,#4f614f 100%)"></div><div style="position:absolute;left:0px;top:-1px;width:97px;font-size:16px;line-height:16px;color:#a0a0a0;white-space:nowrap;text-align:center;">单步转移</div></div><div style="position:absolute;left:259px;top:285px;width:97px;height:16px;"><div style="position:absolute;left:0px;top:0px;width:97px;height:16px;box-sizing:border-box;border-top:1px solid #8d8d8d;border-bottom:1px solid #8d8d8d;border-left:3px solid #d8d8d8;border-right:3px solid #d8d8d8;background:linear-gradient(180deg,#5b6c5d 0%,#58695a 30%,#33473a 52%,#1a301c 72%,#142a16 86%,#4f614f 100%)"></div><div style="position:absolute;left:0px;top:-1px;width:97px;font-size:16px;line-height:16px;color:#a0a0a0;white-space:nowrap;text-align:center;">编辑模式</div></div><div style="position:absolute;left:259px;top:305px;width:97px;height:16px;"><div style="position:absolute;left:0px;top:0px;width:97px;height:16px;box-sizing:border-box;border-top:1px solid #8d8d8d;border-bottom:1px solid #8d8d8d;border-left:3px solid #d8d8d8;border-right:3px solid #d8d8d8;background:radial-gradient(ellipse 60% 65% at 50% 55%,#e2ffe2 0%,#d0ffd0 40%,#8ef78e 80%,#3ee83e 100%)"></div><div style="position:absolute;left:0px;top:-1px;width:97px;font-size:16px;line-height:16px;color:#a0a0a0;white-space:nowrap;text-align:center;">监控超时选择</div></div><div style="position:absolute;left:259px;top:325px;width:97px;height:16px;"><div style="position:absolute;left:0px;top:0px;width:97px;height:16px;box-sizing:border-box;border-top:1px solid #8d8d8d;border-bottom:1px solid #8d8d8d;border-left:3px solid #d8d8d8;border-right:3px solid #d8d8d8;background:linear-gradient(180deg,#5b6c5d 0%,#58695a 30%,#33473a 52%,#1a301c 72%,#142a16 86%,#4f614f 100%)"></div><div style="position:absolute;left:0px;top:-1px;width:97px;font-size:16px;line-height:16px;color:#a0a0a0;white-space:nowrap;text-align:center;">转移条件OK</div></div><div style="position:absolute;left:259px;top:345px;width:97px;height:16px;"><div style="position:absolute;left:0px;top:0px;width:97px;height:16px;box-sizing:border-box;border-top:1px solid #8d8d8d;border-bottom:1px solid #8d8d8d;border-left:3px solid #d8d8d8;border-right:3px solid #d8d8d8;background:radial-gradient(ellipse 60% 65% at 50% 55%,#e2ffe2 0%,#d0ffd0 40%,#8ef78e 80%,#3ee83e 100%)"></div><div style="position:absolute;left:0px;top:-1px;width:97px;font-size:16px;line-height:16px;color:#a0a0a0;white-space:nowrap;text-align:center;">异常</div></div><div style="position:absolute;left:259px;top:365px;width:97px;height:16px;"><div style="position:absolute;left:0px;top:0px;width:97px;height:16px;box-sizing:border-box;border-top:1px solid #8d8d8d;border-bottom:1px solid #8d8d8d;border-left:3px solid #d8d8d8;border-right:3px solid #d8d8d8;background:linear-gradient(180deg,#5b6c5d 0%,#58695a 30%,#33473a 52%,#1a301c 72%,#142a16 86%,#4f614f 100%)"></div><div style="position:absolute;left:0px;top:-1px;width:97px;font-size:16px;line-height:16px;color:#a0a0a0;white-space:nowrap;text-align:center;">异常复位</div></div><div style="position:absolute;left:259px;top:385px;width:97px;height:16px;"><div style="position:absolute;left:0px;top:0px;width:97px;height:16px;box-sizing:border-box;border-top:1px solid #8d8d8d;border-bottom:1px solid #8d8d8d;border-left:3px solid #d8d8d8;border-right:3px solid #d8d8d8;background:linear-gradient(180deg,#5b6c5d 0%,#58695a 30%,#33473a 52%,#1a301c 72%,#142a16 86%,#4f614f 100%)"></div><div style="position:absolute;left:0px;top:-1px;width:97px;font-size:16px;line-height:16px;color:#a0a0a0;white-space:nowrap;text-align:center;">初始化</div></div><div style="position:absolute;left:115px;top:705px;width:177px;height:17px;background:#ff0000"><div style="position:absolute;left:0px;top:0px;width:177px;font-size:16px;line-height:16px;color:#a0a0a0;white-space:nowrap;text-align:center;">异常发生</div></div><div style="position:absolute;left:115px;top:725px;font-size:16px;line-height:16px;color:#a0a0a0;white-space:nowrap;">S2步2注释</div><div style="position:absolute;left:203px;top:745px;font-size:16px;line-height:16px;color:#a0a0a0;white-space:nowrap;">10</div></div></div><div style="position:absolute;left:17px;top:866px;width:1028px;height:20px;background:#f0f0f0;border-top:1px solid #e4e4e4;box-sizing:border-box"></div><div style="position:absolute;left:19px;top:871px;font-size:12px;line-height:12px;color:#000;white-space:nowrap;">就绪</div><div style="position:absolute;right:1161px;top:871px;font-size:12px;line-height:12px;color:#000;white-space:nowrap;text-align:right;">GX Simulator2</div><div style="position:absolute;left:766px;top:868px;width:1px;height:17px;background:#d0d0d0"></div><div style="position:absolute;left:896px;top:868px;width:1px;height:17px;background:#d0d0d0"></div><div style="position:absolute;left:952px;top:868px;width:1px;height:17px;background:#d0d0d0"></div><div style="position:absolute;left:1025px;top:868px;width:1px;height:17px;background:#d0d0d0"></div><div style="position:absolute;left:771px;top:871px;font-size:12px;line-height:12px;color:#000;white-space:nowrap;">MELSEC</div><div style="position:absolute;left:1040px;top:875px;width:2px;height:2px;background:#b8b8b8"></div><div style="position:absolute;left:1040px;top:879px;width:2px;height:2px;background:#b8b8b8"></div><div style="position:absolute;left:1036px;top:879px;width:2px;height:2px;background:#b8b8b8"></div><div style="position:absolute;left:1040px;top:883px;width:2px;height:2px;background:#b8b8b8"></div><div style="position:absolute;left:1036px;top:883px;width:2px;height:2px;background:#b8b8b8"></div><div style="position:absolute;left:1032px;top:883px;width:2px;height:2px;background:#b8b8b8"></div><div style="position:absolute;left:1049px;top:16px;width:251px;height:204px;background:#f0f0f0;border:1px solid #9a9a9a;box-sizing:border-box;box-shadow:1px 2px 8px rgba(0,0,0,0.28)"></div><div style="position:absolute;left:1050px;top:17px;width:249px;height:42px;background:#fff"></div><svg width="16" height="16" viewBox="0 0 16 16" style="position:absolute;left:1052px;top:20px"><rect x="0" y="0" width="16" height="16" fill="#7a7a7a"/><rect x="0" y="0" width="14.5" height="14.5" fill="#d6d6c2"/><rect x="0" y="1" width="14" height="12.5" fill="#0000ff"/><rect x="3.2" y="4" width="7.5" height="6" fill="#d8d8c8"/><rect x="4" y="4.8" width="1.3" height="4.4" fill="#ff0000"/><rect x="6" y="4.8" width="1.2" height="4.4" fill="#808080"/><rect x="8.2" y="4.8" width="1.2" height="4.4" fill="#808080"/></svg><div style="position:absolute;left:1074px;top:21px;font-size:13px;line-height:13px;color:#9a9a9a;white-space:nowrap;">GX Simulator2</div><div style="position:absolute;left:1181px;top:28px;width:10px;height:1px;background:#777"></div><div style="position:absolute;left:1226px;top:23px;width:10px;height:10px;border:1px solid #cfcfcf;box-sizing:border-box"></div><svg width="12" height="12" viewBox="0 0 12 12" style="position:absolute;left:1271px;top:22px"><path d="M1 1L11 11M11 1L1 11" stroke="#cfcfcf" stroke-width="1"/></svg><div style="position:absolute;left:1056px;top:44px;font-size:12px;line-height:12px;color:#222;white-space:nowrap;">工具(T)</div><div style="position:absolute;left:1109px;top:44px;font-size:12px;line-height:12px;color:#222;white-space:nowrap;">选项(O)</div><div style="position:absolute;left:1064px;top:78px;width:209px;height:32px;box-sizing:border-box;border:1px solid #c4c4c4;box-shadow:inset 1px 1px 0 #fff"></div><div style="position:absolute;left:1070px;top:72px;width:28px;height:14px;background:#f0f0f0"><div style="position:absolute;left:2px;top:1px;font-size:12px;line-height:12px;color:#000;white-space:nowrap;">开关</div></div><div style="position:absolute;left:1080px;top:91px;width:11px;height:11px;box-sizing:border-box;border-radius:50%;border:1px solid #777;border-right-color:#e8e8e8;border-bottom-color:#e8e8e8;background:#fff;box-shadow:inset 1px 1px 0 #bbb"></div><div style="position:absolute;left:1097px;top:92px;font-size:10.5px;line-height:10.5px;color:#a0a0a0;white-space:nowrap;letter-spacing:-0.2px">RESET</div><div style="position:absolute;left:1146px;top:91px;width:11px;height:11px;box-sizing:border-box;border-radius:50%;border:1px solid #777;border-right-color:#e8e8e8;border-bottom-color:#e8e8e8;background:#fff;box-shadow:inset 1px 1px 0 #bbb"></div><div style="position:absolute;left:1162px;top:92px;font-size:10.5px;line-height:10.5px;color:#000;white-space:nowrap;letter-spacing:-0.2px">STOP</div><div style="position:absolute;left:1212px;top:90px;width:11px;height:11px;box-sizing:border-box;border-radius:50%;border:1px solid #777;border-right-color:#e8e8e8;border-bottom-color:#e8e8e8;background:#fff;box-shadow:inset 1px 1px 0 #bbb"><div style="position:absolute;left:3px;top:3px;width:4px;height:4px;background:#000;border-radius:50%"></div></div><div style="position:absolute;left:1228px;top:92px;font-size:10.5px;line-height:10.5px;color:#000;white-space:nowrap;letter-spacing:-0.2px">RUN</div><div style="position:absolute;left:1064px;top:121px;width:209px;height:91px;box-sizing:border-box;border:1px solid #c4c4c4;box-shadow:inset 1px 1px 0 #fff"></div><div style="position:absolute;left:1070px;top:115px;width:26px;height:14px;background:#f0f0f0"><div style="position:absolute;left:2px;top:1px;font-size:12px;line-height:12px;color:#000;white-space:nowrap;">LED</div></div><div style="position:absolute;left:1112px;top:129px;width:114px;height:77px;background:#808080"></div><div style="position:absolute;right:757px;top:133px;font-size:13px;line-height:13px;color:#f0f0f0;white-space:nowrap;text-align:right;">MODE</div><div style="position:absolute;left:1181px;top:134px;width:25px;height:10px;background:#00ff00"></div><div style="position:absolute;right:757px;top:151px;font-size:13px;line-height:13px;color:#f0f0f0;white-space:nowrap;text-align:right;">RUN</div><div style="position:absolute;left:1181px;top:152px;width:25px;height:10px;background:#00ff00"></div><div style="position:absolute;right:755px;top:169px;font-size:13px;line-height:13px;color:#f0f0f0;white-space:nowrap;text-align:right;">ERR.</div><div style="position:absolute;left:1181px;top:170px;width:25px;height:10px;background:#c0c0c0"></div><div style="position:absolute;right:757px;top:188px;font-size:13px;line-height:13px;color:#f0f0f0;white-space:nowrap;text-align:right;">USER</div><div style="position:absolute;left:1181px;top:189px;width:25px;height:10px;background:#c0c0c0"></div></div></div><div style="position:absolute;left:1398px;top:575px;width:1px;height:24px;background:#a0a0a0"></div><div style="position:absolute;left:1398px;top:575px;width:23px;height:1px;background:#a0a0a0"></div><div style="position:absolute;left:724px;top:671px;width:793px;height:18px;background:#e6e6e6"></div><div style="position:absolute;left:724px;top:671px;width:793px;height:1px;background:#c8c8c8"></div><div style="position:absolute;left:724px;top:688px;width:793px;height:1px;background:#c8c8c8"></div><div style="position:absolute;left:1398px;top:757px;width:1px;height:24px;background:#a0a0a0"></div><div style="position:absolute;left:1398px;top:780px;width:23px;height:1px;background:#a0a0a0"></div><div style="position:absolute;left:1040px;top:806px;font-size:14px;line-height:14px;color:#222;white-space:nowrap;">有哪些条件未满足<span style="font-size:11px;color:#666">&#8629;</span></div><div style="position:absolute;left:0px;top:1018px;width:1920px;height:22px;background:#f1f1f1;border-top:1px solid #d4d4d4;box-sizing:border-box"></div><div style="position:absolute;left:8px;top:1022px;font-size:12px;line-height:12px;color:#444;white-space:nowrap;">第 4 页，共 4 页</div><div style="position:absolute;left:117px;top:1022px;font-size:12px;line-height:12px;color:#444;white-space:nowrap;">59 个字</div><svg width="14" height="12" viewBox="0 0 14 12" style="position:absolute;left:178px;top:1022px"><path d="M1 1h6v10h-6z" fill="none" stroke="#555"/><path d="M9 3l4 5M13 3l-4 5" stroke="#555"/></svg><div style="position:absolute;left:210px;top:1022px;font-size:12px;line-height:12px;color:#444;white-space:nowrap;">中文(中国)</div><div style="position:absolute;left:1667px;top:1019px;width:38px;height:21px;background:#d5d5d5"></div><svg width="14" height="14" viewBox="0 0 14 14" style="position:absolute;left:1641px;top:1022px"><path d="M0.5 0.5h5.5l1 1 1-1h5.5v11h-5.5l-1 1-1-1h-5.5z" fill="none" stroke="#555"/><path d="M7 1.5v11.5" stroke="#555"/><path d="M2 3.5h3.5M2 5.5h3.5M2 7.5h3.5M2 9.5h3.5M8.5 3.5h3.5M8.5 5.5h3.5M8.5 7.5h3.5M8.5 9.5h3.5" stroke="#777"/></svg><svg width="14" height="13" viewBox="0 0 14 13" style="position:absolute;left:1679px;top:1022px"><rect x="0.5" y="0.5" width="13" height="12" fill="none" stroke="#555"/><path d="M2.5 2.5h9M2.5 4.5h9M2.5 6.5h9M2.5 8.5h9M2.5 10.5h9" stroke="#666"/></svg><svg width="16" height="14" viewBox="0 0 16 14" style="position:absolute;left:1716px;top:1022px"><rect x="0.5" y="0.5" width="12" height="10" fill="none" stroke="#555"/><path d="M2 2.5h9M2 4.5h6M2 6.5h5" stroke="#666"/><circle cx="11.5" cy="9.5" r="3.5" fill="#777"/><path d="M9 9.5h5M11.5 7v5" stroke="#f1f1f1" stroke-width="0.8"/></svg><div style="position:absolute;left:1748px;top:1028px;width:7px;height:1px;background:#444"></div><div style="position:absolute;left:1758px;top:1028px;width:100px;height:1px;background:#999"></div><div style="position:absolute;left:1806px;top:1023px;width:4px;height:11px;background:#555"></div><div style="position:absolute;left:1861px;top:1028px;width:8px;height:1px;background:#444"></div><div style="position:absolute;left:1864px;top:1025px;width:1px;height:7px;background:#444"></div><div style="position:absolute;left:1880px;top:1022px;font-size:12px;line-height:12px;color:#444;white-space:nowrap;">100%</div><div style="position:absolute;left:0px;top:1040px;width:1920px;height:40px;background:#111b25"></div><svg width="18" height="18" viewBox="0 0 18 18" style="position:absolute;left:15px;top:1051px"><path d="M0 2.5l7.2-1v7h-7.2zM8.2 1.3l9.8-1.3v8.5h-9.8zM0 9.5h7.2v7l-7.2-1zM8.2 9.5h9.8v8.5l-9.8-1.3z" fill="#fff"/></svg><div style="position:absolute;left:48px;top:1040px;width:344px;height:40px;background:#f3f3f3"></div><div style="position:absolute;left:58px;top:1050px;width:21px;height:21px;box-sizing:border-box;border:3px solid #111;border-radius:50%"></div><div style="position:absolute;left:88px;top:1053px;font-size:14px;line-height:14px;color:#333;white-space:nowrap;">在这里输入你要搜索的内容</div><svg width="12" height="18" viewBox="0 0 12 18" style="position:absolute;left:365px;top:1051px"><rect x="3.5" y="1" width="5" height="10" rx="2.5" fill="none" stroke="#333" stroke-width="1.3"/><path d="M1.5 8c0 3 2 5 4.5 5s4.5-2 4.5-5M6 13v4M3 17h6" fill="none" stroke="#333" stroke-width="1.3"/></svg><svg width="22" height="18" viewBox="0 0 22 18" style="position:absolute;left:405px;top:1051px"><rect x="4" y="2" width="14" height="14" fill="none" stroke="#fff" stroke-width="1.3"/><path d="M1 4v10M21 4v10" stroke="#fff" stroke-width="1.3"/></svg><svg width="22" height="22" viewBox="0 0 22 22" style="position:absolute;left:456px;top:1049px"><path d="M20 12H6c0 4 3 6 7 6 3 0 5-1 6-2v4c-2 1-4 1.5-6 1.5C6 21.5 1.5 17 1.5 11S6 .5 12 .5c6 0 9 4 9 9zM6.5 9h9c0-2.5-2-4-4.5-4S7 6.5 6.5 9z" fill="#1b78d8"/></svg><svg width="22" height="22" viewBox="0 0 22 22" style="position:absolute;left:504px;top:1049px"><path d="M1 6h20v15h-20z" fill="#fff"/><path d="M7 6V3a4 3 0 0 1 8 0v3" fill="none" stroke="#fff" stroke-width="1.5"/><rect x="6" y="9" width="4" height="4" fill="#f25022"/><rect x="11" y="9" width="4" height="4" fill="#7fba00"/><rect x="6" y="14" width="4" height="4" fill="#00a4ef"/><rect x="11" y="14" width="4" height="4" fill="#ffb900"/></svg><svg width="22" height="22" viewBox="0 0 22 22" style="position:absolute;left:554px;top:1049px"><circle cx="11" cy="11" r="10.2" fill="#1a86d8" stroke="#fff" stroke-width="1.4"/><path d="M6 15.5l6.5-6" stroke="#fff" stroke-width="2.2"/><path d="M11.5 7.5a3 3 0 0 1 4.5-2l-2 2 1 1.5 2-1.5a3 3 0 0 1-3.5 3.5z" fill="#fff"/><circle cx="5.8" cy="15.8" r="1.6" fill="none" stroke="#fff" stroke-width="1.1"/></svg><svg width="24" height="24" viewBox="0 0 24 24" style="position:absolute;left:602px;top:1048px"><circle cx="12" cy="12.5" r="11.5" fill="#f5c518"/><path d="M10 3.5h2.5v13" fill="none" stroke="#2ec27e" stroke-width="2.4"/><ellipse cx="9.8" cy="17" rx="4" ry="3.8" fill="#2ec27e"/><path d="M11.5 3.5c2 1 4 1 5.5-0.5-0.5 3-3 4-5.5 3.5z" fill="#2ec27e"/></svg><svg width="24" height="20" viewBox="0 0 24 20" style="position:absolute;left:651px;top:1050px"><path d="M0 7L12 0 24 7v12.5h-24z" fill="#fff"/><path d="M0.5 7.5l23 0-11 6z" fill="#111b25"/><path d="M10 10l5 6" stroke="#111b25" stroke-width="1.2"/></svg><svg width="22" height="19" viewBox="0 0 22 19" style="position:absolute;left:701px;top:1051px"><path d="M0 1h8l1.5 1.5h12.5v16h-22z" fill="#f9dc85"/><path d="M0 4h22v14.5h-22z" fill="#fde7a0"/><path d="M4 18.5v-7.5h13.5v7.5h-3.5v-3.5h-6.5v3.5z" fill="#3ba7e6"/><rect x="1.5" y="1.8" width="4" height="1" fill="#5ab0e0"/></svg><svg width="22" height="22" viewBox="0 0 22 22" style="position:absolute;left:749px;top:1049px"><circle cx="11" cy="11" r="10" fill="#db4437"/><path d="M11 11L2.3 6A10 10 0 0 0 7 20z" fill="#0f9d58"/><path d="M11 11L7 20A10 10 0 0 0 21 11z" fill="#ffcd40"/><circle cx="11" cy="11" r="4.5" fill="#fff"/><circle cx="11" cy="11" r="3.5" fill="#4285f4"/></svg><div style="position:absolute;left:790px;top:1078px;width:152px;height:2px;background:#9cc3e6"></div><svg width="22" height="22" viewBox="0 0 22 22" style="position:absolute;left:796px;top:1049px"><rect x="0" y="0" width="22" height="22" fill="#2e8b3e"/><rect x="0" y="0" width="22" height="11" fill="#3a9a4a"/><path d="M3 3h11v7h-11z" fill="none" stroke="#fff" stroke-width="1.8"/><path d="M5 13h7v3h-8" fill="none" stroke="#fff" stroke-width="1.8"/><path d="M15 8h4v4h-3M19 12v6h-4" fill="none" stroke="#fff" stroke-width="1.6"/></svg><div style="position:absolute;left:824px;top:1053px;font-size:13px;line-height:13px;color:#a0a0a0;white-space:nowrap;">MELSOFT GT Des...</div><div style="position:absolute;left:951px;top:1078px;width:152px;height:2px;background:#9cc3e6"></div><svg width="22" height="22" viewBox="0 0 22 22" style="position:absolute;left:957px;top:1049px"><rect x="0" y="0" width="22" height="22" fill="#8a8a8a"/><rect x="0" y="0" width="20" height="20" fill="#1818e0"/><rect x="4" y="7" width="12" height="7" fill="#c8c8c8"/><rect x="5" y="8" width="1.5" height="5" fill="#e00"/><path d="M9 8v5M12 8v5M14.5 8v5" stroke="#666"/></svg><div style="position:absolute;left:985px;top:1053px;font-size:13px;line-height:13px;color:#a0a0a0;white-space:nowrap;">GX Simulator2</div><div style="position:absolute;left:1112px;top:1078px;width:152px;height:2px;background:#9cc3e6"></div><svg width="22" height="22" viewBox="0 0 22 22" style="position:absolute;left:1118px;top:1049px"><rect x="0" y="0" width="22" height="22" rx="2" fill="#e23a32"/><path d="M2 7h7M9 3v16M13 3v16M13 7h7M4 7v8M18 7v8M2 15h7M13 15h7" stroke="#fff" stroke-width="1.6" fill="none"/></svg><div style="position:absolute;left:1146px;top:1053px;font-size:13px;line-height:13px;color:#a0a0a0;white-space:nowrap;">MELSOFT系列 GX...</div><div style="position:absolute;left:1269px;top:1040px;width:160px;height:40px;background:#39424d"></div><div style="position:absolute;left:1269px;top:1078px;width:160px;height:2px;background:#9cc3e6"></div><svg width="22" height="22" viewBox="0 0 22 22" style="position:absolute;left:1279px;top:1049px"><rect x="0" y="0" width="22" height="22" fill="#2e8b3e"/><rect x="0" y="0" width="22" height="11" fill="#3a9a4a"/><path d="M3 3h11v7h-11z" fill="none" stroke="#fff" stroke-width="1.8"/><path d="M5 13h7v3h-8" fill="none" stroke="#fff" stroke-width="1.8"/><path d="M15 8h4v4h-3M19 12v6h-4" fill="none" stroke="#fff" stroke-width="1.6"/></svg><div style="position:absolute;left:1307px;top:1053px;font-size:13px;line-height:13px;color:#a0a0a0;white-space:nowrap;">GT Simulator3 (G...</div><div style="position:absolute;left:1434px;top:1078px;width:152px;height:2px;background:#9cc3e6"></div><svg width="22" height="22" viewBox="0 0 22 22" style="position:absolute;left:1441px;top:1049px"><rect x="8" y="2" width="14" height="18" fill="#fff" stroke="#2b579a"/><path d="M11 6h8M11 9h8M11 12h8M11 15h8" stroke="#2b579a"/><rect x="0" y="4" width="13" height="14" fill="#2b579a"/><text x="1.5" y="15" font-size="10" font-weight="bold" font-family="Liberation Sans" fill="#fff">W</text></svg><div style="position:absolute;left:1467px;top:1053px;font-size:13px;line-height:13px;color:#a0a0a0;white-space:nowrap;">说明文档.docx - ...</div><svg width="12" height="8" viewBox="0 0 12 8" style="position:absolute;left:1646px;top:1056px"><path d="M1 7l5-5 5 5" fill="none" stroke="#fff" stroke-width="1.3"/></svg><svg width="16" height="10" viewBox="0 0 16 10" style="position:absolute;left:1668px;top:1055px"><rect x="0.5" y="1.5" width="13" height="8" fill="none" stroke="#fff"/><rect x="2" y="3" width="8" height="5" fill="#fff"/><rect x="14" y="4" width="2" height="3" fill="#fff"/></svg><svg width="18" height="18" viewBox="0 0 18 18" style="position:absolute;left:1691px;top:1049px"><text x="0" y="8" font-size="9" fill="#fff" font-family="Liberation Sans">*</text><path d="M4 17a13 13 0 0 1 13-13M7 17a10 10 0 0 1 10-10M10 17a7 7 0 0 1 7-7M13 17a4 4 0 0 1 4-4" fill="none" stroke="#8a8f96" stroke-width="1"/></svg><svg width="18" height="14" viewBox="0 0 18 14" style="position:absolute;left:1714px;top:1053px"><path d="M1 5h3l4-4v12l-4-4h-3z" fill="none" stroke="#fff"/><path d="M11 4l5 6M16 4l-5 6" stroke="#fff"/></svg><div style="position:absolute;left:1741px;top:1052px;font-size:14px;line-height:14px;color:#a0a0a0;white-space:nowrap;">中</div><div style="position:absolute;left:1769px;top:1053px;width:15px;height:15px;background:#fff"></div><svg width="15" height="15" viewBox="0 0 15 15" style="position:absolute;left:1769px;top:1053px"><path d="M3 3.5h9M2 11.5h11M6.5 3.5l-1.5 8M4 7.5h6.5v4" fill="none" stroke="#111" stroke-width="1.1"/></svg><div style="position:absolute;left:1796px;top:1044px;width:70px;font-size:12px;line-height:12px;color:#a0a0a0;white-space:nowrap;text-align:center;">21:52</div><div style="position:absolute;left:1796px;top:1063px;width:70px;font-size:12px;line-height:12px;color:#a0a0a0;white-space:nowrap;text-align:center;">2018-1-31</div><svg width="20" height="18" viewBox="0 0 20 18" style="position:absolute;left:1878px;top:1051px"><path d="M1 1h18v12h-9l-4 4v-4h-5z" fill="none" stroke="#fff" stroke-width="1.3"/></svg><div style="position:absolute;left:16px;top:11px;width:1030px;height:876px;background:#f0f0f0;border:1px solid #2f8be0;box-sizing:border-box;box-shadow:0 4px 18px rgba(0,0,0,0.35)"></div><div style="position:absolute;left:17px;top:12px;width:1028px;height:30px;background:#fff"></div><svg width="16" height="16" viewBox="0 0 16 16" style="position:absolute;left:25px;top:18px"><rect x="0" y="0" width="16" height="16" rx="1" fill="#238636"/><path d="M0 0h16v3h-16z" fill="#3d9a55" opacity="0.6"/><path d="M8 11h4l-2 5h-4z" fill="#7cc08a"/><path d="M2 2h9v7h-9z" fill="#fff"/><path d="M3 3h7v5h-7z" fill="#238636"/><path d="M4 4h5v3h-5z" fill="#fff"/><path d="M3 10h8v1.5h-8z" fill="#fff"/><path d="M10.5 10h3.5v4.7h-3.5M11.5 12.3h2.5" fill="none" stroke="#fff" stroke-width="1.3"/><path d="M12 5h3v2h-3z" fill="#fff"/><path d="M12.3 4l1.2-3 1.2 3" fill="none" stroke="#fff" stroke-width="0.9"/></svg><div style="position:absolute;left:46px;top:20px;font-size:12.6px;line-height:12.6px;color:#000;white-space:nowrap;letter-spacing:-0.1px">GT Simulator3 (GT27)&nbsp;&nbsp;[工程标题未设置 ]</div><div style="position:absolute;left:926px;top:26px;width:10px;height:1px;background:#000"></div><div style="position:absolute;left:971px;top:21px;width:10px;height:10px;border:1px solid #000;box-sizing:border-box"></div><svg width="12" height="12" viewBox="0 0 12 12" style="position:absolute;left:1016px;top:20px"><path d="M1 1L11 11M11 1L1 11" stroke="#000" stroke-width="1.1"/></svg><div style="position:absolute;left:17px;top:42px;width:1028px;height:54px;background:linear-gradient(90deg,#a9c4f1 0%,#b6cff4 40%,#bed5f6 75%,#c6daf7 100%)"></div><div style="position:absolute;left:23px;top:47px;width:2px;height:2px;background:#2a3f66"></div><div style="position:absolute;left:23px;top:51px;width:2px;height:2px;background:#2a3f66"></div><div style="position:absolute;left:23px;top:55px;width:2px;height:2px;background:#2a3f66"></div><div style="position:absolute;left:23px;top:59px;width:2px;height:2px;background:#2a3f66"></div><div style="position:absolute;left:35px;top:49px;font-size:12px;line-height:12px;color:#000;white-space:nowrap;">工程(<u>P</u>)</div><div style="position:absolute;left:90px;top:49px;font-size:12px;line-height:12px;color:#000;white-space:nowrap;">显示(<u>V</u>)</div><div style="position:absolute;left:146px;top:49px;font-size:12px;line-height:12px;color:#000;white-space:nowrap;">模拟(<u>S</u>)</div><div style="position:absolute;left:201px;top:49px;font-size:12px;line-height:12px;color:#000;white-space:nowrap;">工具(<u>T</u>)</div><div style="position:absolute;left:256px;top:49px;font-size:12px;line-height:12px;color:#000;white-space:nowrap;">帮助(<u>H</u>)</div><div style="position:absolute;left:20px;top:70px;width:198px;height:25px;background:linear-gradient(180deg,#e3eefc 0%,#c4daf8 45%,#a9c6f2 100%);border-radius:3px 0 0 3px;border-bottom:1px solid #7d9fd6;box-sizing:border-box"></div><div style="position:absolute;left:207px;top:70px;width:11px;height:25px;background:linear-gradient(180deg,#3f73cf,#1f4fa8);border-radius:0 3px 3px 0"></div><svg width="8" height="9" viewBox="0 0 8 9" style="position:absolute;left:209px;top:84px"><path d="M0.5 1.5h7" stroke="#fff" stroke-width="1"/><path d="M0.5 3.5h7l-3.5 4z" fill="#fff" stroke="#111" stroke-width="0.6"/></svg><div style="position:absolute;left:24px;top:74px;width:2px;height:2px;background:#1e3e78"></div><div style="position:absolute;left:24px;top:78px;width:2px;height:2px;background:#1e3e78"></div><div style="position:absolute;left:24px;top:82px;width:2px;height:2px;background:#1e3e78"></div><div style="position:absolute;left:24px;top:86px;width:2px;height:2px;background:#1e3e78"></div><div style="position:absolute;left:24px;top:90px;width:2px;height:2px;background:#1e3e78"></div><div style="position:absolute;left:74px;top:75px;width:1px;height:16px;background:#8aa8d8"></div><div style="position:absolute;left:124px;top:75px;width:1px;height:16px;background:#8aa8d8"></div><div style="position:absolute;left:152px;top:75px;width:1px;height:16px;background:#8aa8d8"></div><div style="position:absolute;left:179px;top:75px;width:1px;height:16px;background:#8aa8d8"></div><svg width="17" height="16" viewBox="0 0 17 16" style="position:absolute;left:30px;top:75px"><path d="M0 5h9v10h-9z" fill="#c3cad4" stroke="#a3acba" stroke-width="0.8"/><path d="M1 9l1.5 5 1.5-4 1.5 4 1.5-5" fill="none" stroke="#8e98a8" stroke-width="1.4"/><path d="M8 7l6 1-2 7h-4z" fill="#d3d9e2"/><path d="M5 4.5C7 1 12 1 13.5 5.5l2-0.5-3 5-3.5-4 2 0C10 4 8 3.5 5 4.5z" fill="#8e9db6"/></svg><svg width="17" height="16" viewBox="0 0 17 16" style="position:absolute;left:52px;top:75px"><path d="M0 5h5l1.5 1.5h6.5v8.5h-13z" fill="#c3cad4" stroke="#a3acba" stroke-width="0.8"/><path d="M2 9h14l-3 6h-13z" fill="#d6dce5" stroke="#a3acba" stroke-width="0.8"/><path d="M5 4.5C7 1 12 1 13.5 5.5l2-0.5-3 5-3.5-4 2 0C10 4 8 3.5 5 4.5z" fill="#8e9db6"/></svg><svg width="17" height="16" viewBox="0 0 17 16" style="position:absolute;left:80px;top:75px"><rect x="1" y="0.5" width="11" height="8" fill="#c9d0da" stroke="#a7b0bd"/><path d="M1 8l7 3.5-7 3.5z" fill="#aab3c0"/><path d="M12 11h4v4h-4z" fill="#aab3c0"/><path d="M13.5 10v2" stroke="#aab3c0"/></svg><svg width="17" height="16" viewBox="0 0 17 16" style="position:absolute;left:102px;top:75px"><rect x="1.5" y="0.5" width="11" height="8" fill="#5aa0e8" stroke="#222"/><circle cx="4.8" cy="11" r="4" fill="#fff" stroke="#e01010" stroke-width="1.6"/><text x="3" y="13.5" font-size="6.5" font-weight="bold" font-family="Liberation Sans" fill="#e01010">0</text><path d="M12 11.5h4.5v3.5h-4.5z" fill="#222"/><path d="M14 10v2" stroke="#222"/></svg><svg width="17" height="16" viewBox="0 0 17 16" style="position:absolute;left:130px;top:75px"><rect x="0" y="0" width="16" height="7" fill="#1f6fd8"/><text x="1" y="6.3" font-size="6.5" font-weight="bold" font-family="Liberation Sans" fill="#fff">DEV</text><path d="M0 8l7 3.5-7 3.5z" fill="#22aa22"/><circle cx="9.5" cy="11" r="3" fill="#fff" stroke="#222" stroke-width="1.3"/><path d="M11.5 13l3.5 2.5" stroke="#5a3a1a" stroke-width="1.6"/></svg><svg width="17" height="16" viewBox="0 0 17 16" style="position:absolute;left:158px;top:75px"><path d="M0 5h5l1.5 1.5h8.5v8.5h-15z" fill="#e8a81a"/><path d="M3 9h13l-2 6h-14z" fill="#ffd23a"/><text x="0" y="15.5" font-size="9" font-weight="bold" font-family="Liberation Sans" fill="#000">R</text><path d="M8 3C10 0 13 0 14 3.5l2-0.5-2.5 4.5-3.5-3.5 2 0C11 3 9.5 2.5 8 3z" fill="#12329a"/></svg><svg width="17" height="16" viewBox="0 0 17 16" style="position:absolute;left:186px;top:75px"><rect x="2.5" y="0.5" width="11" height="8" fill="#6ab0f0" stroke="#222"/><path d="M1 15l6-6" stroke="#222" stroke-width="1.8"/><path d="M6 7.5a2.5 2.5 0 1 0 3.5 -1" fill="none" stroke="#222" stroke-width="1.5"/><path d="M12 11.5h4.5v3.5h-4.5z" fill="#333"/><path d="M14 10v2" stroke="#333"/></svg><div style="position:absolute;left:18px;top:95px;width:1026px;height:771px;background:#f0f0f0;border-top:1px solid #a0a0a0;border-left:1px solid #a0a0a0;box-sizing:border-box"></div><div style="position:absolute;left:19px;top:96px;width:1024px;height:769px;background:#000"><div style="position:absolute;left:-19px;top:-96px;width:1920px;height:1080px"><div style="position:absolute;right:1530px;top:113px;font-size:12px;line-height:12px;color:#a0a0a0;white-space:nowrap;text-align:right;">当前程序名</div><div style="position:absolute;right:1530px;top:133px;font-size:12px;line-height:12px;color:#a0a0a0;white-space:nowrap;text-align:right;">当前运行步</div><div style="position:absolute;right:1530px;top:153px;font-size:12px;line-height:12px;color:#a0a0a0;white-space:nowrap;text-align:right;">当前步运行时间</div><div style="position:absolute;left:403px;top:114px;font-size:16px;line-height:16px;color:#a0a0a0;white-space:nowrap;">S2自动程序</div><div style="position:absolute;left:403px;top:134px;font-size:16px;line-height:16px;color:#a0a0a0;white-space:nowrap;">S2步1注释</div><div style="position:absolute;left:427px;top:153px;font-size:16px;line-height:16px;color:#a0a0a0;white-space:nowrap;">7010</div><div style="position:absolute;left:851px;top:161px;font-size:16px;line-height:16px;color:#a0a0a0;white-space:nowrap;">单步最小时间</div><div style="position:absolute;left:851px;top:181px;font-size:16px;line-height:16px;color:#a0a0a0;white-space:nowrap;">单步最大时间</div><div style="position:absolute;right:917px;top:161px;font-size:16px;line-height:16px;color:#a0a0a0;white-space:nowrap;text-align:right;">0</div><div style="position:absolute;right:917px;top:181px;font-size:16px;line-height:16px;color:#a0a0a0;white-space:nowrap;text-align:right;">60</div><div style="position:absolute;left:605px;top:193px;width:60px;font-size:12px;line-height:12px;color:#a0a0a0;white-space:nowrap;text-align:center;">条件设置</div><div style="position:absolute;left:669px;top:193px;width:60px;font-size:12px;line-height:12px;color:#a0a0a0;white-space:nowrap;text-align:center;">条件生效</div><div style="position:absolute;left:749px;top:193px;width:60px;font-size:12px;line-height:12px;color:#a0a0a0;white-space:nowrap;text-align:center;">动作设置</div><div style="position:absolute;left:371px;top:213px;width:16px;height:16px;box-sizing:border-box;border-radius:50%;border:1.5px solid #c4c4c4;background:linear-gradient(180deg,#3e5c6e 0%,#4f6d7e 30%,#1b3a52 55%,#0e2b44 85%,#1e3f58 100%);box-shadow:inset 0 0 0 1px #000"></div><div style="position:absolute;left:403px;top:214px;font-size:16px;line-height:16px;color:#a0a0a0;white-space:nowrap;">S2条件注释1</div><div style="position:absolute;left:611px;top:213px;width:48px;height:16px;box-sizing:border-box;border-top:1px solid #6a6a6a;border-left:1px solid #d8d8d8;border-right:1px solid #d8d8d8;border-bottom:1px solid #c8ccd0;background:linear-gradient(180deg,#5b6c5d 0%,#58695a 30%,#33473a 52%,#1a301c 72%,#142a16 86%,#4f614f 100%);box-shadow:inset 3px 0 3px -1px rgba(0,0,0,0.55),inset -3px 0 3px -1px rgba(0,0,0,0.55)"></div><div style="position:absolute;left:675px;top:213px;width:48px;height:16px;box-sizing:border-box;border-top:1px solid #6a6a6a;border-left:1px solid #d8d8d8;border-right:1px solid #d8d8d8;border-bottom:1px solid #c8ccd0;background:linear-gradient(180deg,#5b6c5d 0%,#58695a 30%,#33473a 52%,#1a301c 72%,#142a16 86%,#4f614f 100%);box-shadow:inset 3px 0 3px -1px rgba(0,0,0,0.55),inset -3px 0 3px -1px rgba(0,0,0,0.55)"></div><div style="position:absolute;left:755px;top:213px;width:48px;height:16px;box-sizing:border-box;border-top:1px solid #6a6a6a;border-left:1px solid #d8d8d8;border-right:1px solid #d8d8d8;border-bottom:1px solid #c8ccd0;background:linear-gradient(180deg,#5b6c5d 0%,#58695a 30%,#33473a 52%,#1a301c 72%,#142a16 86%,#4f614f 100%);box-shadow:inset 3px 0 3px -1px rgba(0,0,0,0.55),inset -3px 0 3px -1px rgba(0,0,0,0.55)"></div><div style="position:absolute;left:819px;top:213px;width:16px;height:16px;box-sizing:border-box;border-radius:50%;border:1.5px solid #c4c4c4;background:linear-gradient(180deg,#4a5b4c 0%,#5b6c5d 30%,#2a3e2c 55%,#142a16 85%,#2a3e2c 100%);box-shadow:inset 0 0 0 1px #000"></div><div style="position:absolute;left:851px;top:214px;font-size:16px;line-height:16px;color:#a0a0a0;white-space:nowrap;">S2动作注释1</div><div style="position:absolute;left:371px;top:233px;width:16px;height:16px;box-sizing:border-box;border-radius:50%;border:1.5px solid #c4c4c4;background:linear-gradient(180deg,#3e5c6e 0%,#4f6d7e 30%,#1b3a52 55%,#0e2b44 85%,#1e3f58 100%);box-shadow:inset 0 0 0 1px #000"></div><div style="position:absolute;left:403px;top:234px;font-size:16px;line-height:16px;color:#a0a0a0;white-space:nowrap;">S2条件注释2</div><div style="position:absolute;left:611px;top:233px;width:48px;height:16px;box-sizing:border-box;border-top:1px solid #5a5a5a;border-left:1px solid #d8d8d8;border-right:1px solid #d8d8d8;border-bottom:1px solid #c8ccd0;background:radial-gradient(ellipse 60% 65% at 50% 55%,#e2ffe2 0%,#d0ffd0 40%,#8ef78e 80%,#3ee83e 100%);box-shadow:inset 0 1px 0 #2f8a2f"></div><div style="position:absolute;left:675px;top:233px;width:48px;height:16px;box-sizing:border-box;border-top:1px solid #5a5a5a;border-left:1px solid #d8d8d8;border-right:1px solid #d8d8d8;border-bottom:1px solid #c8ccd0;background:radial-gradient(ellipse 60% 65% at 50% 55%,#e2ffe2 0%,#d0ffd0 40%,#8ef78e 80%,#3ee83e 100%);box-shadow:inset 0 1px 0 #2f8a2f"></div><div style="position:absolute;left:755px;top:233px;width:48px;height:16px;box-sizing:border-box;border-top:1px solid #5a5a5a;border-left:1px solid #d8d8d8;border-right:1px solid #d8d8d8;border-bottom:1px solid #c8ccd0;background:radial-gradient(ellipse 60% 65% at 50% 55%,#e2ffe2 0%,#d0ffd0 40%,#8ef78e 80%,#3ee83e 100%);box-shadow:inset 0 1px 0 #2f8a2f"></div><div style="position:absolute;left:819px;top:233px;width:16px;height:16px;box-sizing:border-box;border-radius:50%;border:1.5px solid #c4c4c4;background:radial-gradient(circle at 50% 50%,#e8ffe8 0%,#c8ffc8 45%,#60f060 85%,#30e030 100%);"></div><div style="position:absolute;left:851px;top:234px;font-size:16px;line-height:16px;color:#a0a0a0;white-space:nowrap;">S2动作注释2</div><div style="position:absolute;left:371px;top:253px;width:16px;height:16px;box-sizing:border-box;border-radius:50%;border:1.5px solid #c4c4c4;background:linear-gradient(180deg,#3e5c6e 0%,#4f6d7e 30%,#1b3a52 55%,#0e2b44 85%,#1e3f58 100%);box-shadow:inset 0 0 0 1px #000"></div><div style="position:absolute;left:403px;top:254px;font-size:16px;line-height:16px;color:#a0a0a0;white-space:nowrap;">S2条件注释3</div><div style="position:absolute;left:611px;top:253px;width:48px;height:16px;box-sizing:border-box;border-top:1px solid #6a6a6a;border-left:1px solid #d8d8d8;border-right:1px solid #d8d8d8;border-bottom:1px solid #c8ccd0;background:linear-gradient(180deg,#5b6c5d 0%,#58695a 30%,#33473a 52%,#1a301c 72%,#142a16 86%,#4f614f 100%);box-shadow:inset 3px 0 3px -1px rgba(0,0,0,0.55),inset -3px 0 3px -1px rgba(0,0,0,0.55)"></div><div style="position:absolute;left:675px;top:253px;width:48px;height:16px;box-sizing:border-box;border-top:1px solid #5a5a5a;border-left:1px solid #d8d8d8;border-right:1px solid #d8d8d8;border-bottom:1px solid #c8ccd0;background:radial-gradient(ellipse 60% 65% at 50% 55%,#e2ffe2 0%,#d0ffd0 40%,#8ef78e 80%,#3ee83e 100%);box-shadow:inset 0 1px 0 #2f8a2f"></div><div style="position:absolute;left:755px;top:253px;width:48px;height:16px;box-sizing:border-box;border-top:1px solid #6a6a6a;border-left:1px solid #d8d8d8;border-right:1px solid #d8d8d8;border-bottom:1px solid #c8ccd0;background:linear-gradient(180deg,#5b6c5d 0%,#58695a 30%,#33473a 52%,#1a301c 72%,#142a16 86%,#4f614f 100%);box-shadow:inset 3px 0 3px -1px rgba(0,0,0,0.55),inset -3px 0 3px -1px rgba(0,0,0,0.55)"></div><div style="position:absolute;left:819px;top:253px;width:16px;height:16px;box-sizing:border-box;border-radius:50%;border:1.5px solid #c4c4c4;background:linear-gradient(180deg,#4a5b4c 0%,#5b6c5d 30%,#2a3e2c 55%,#142a16 85%,#2a3e2c 100%);box-shadow:inset 0 0 0 1px #000"></div><div style="position:absolute;left:851px;top:254px;font-size:16px;line-height:16px;color:#a0a0a0;white-space:nowrap;">S2动作注释3</div><div style="position:absolute;left:371px;top:273px;width:16px;height:16px;box-sizing:border-box;border-radius:50%;border:1.5px solid #c4c4c4;background:linear-gradient(180deg,#3e5c6e 0%,#4f6d7e 30%,#1b3a52 55%,#0e2b44 85%,#1e3f58 100%);box-shadow:inset 0 0 0 1px #000"></div><div style="position:absolute;left:403px;top:274px;font-size:16px;line-height:16px;color:#a0a0a0;white-space:nowrap;">S2条件注释4</div><div style="position:absolute;left:611px;top:273px;width:48px;height:16px;box-sizing:border-box;border-top:1px solid #5a5a5a;border-left:1px solid #d8d8d8;border-right:1px solid #d8d8d8;border-bottom:1px solid #c8ccd0;background:radial-gradient(ellipse 60% 65% at 50% 55%,#e2ffe2 0%,#d0ffd0 40%,#8ef78e 80%,#3ee83e 100%);box-shadow:inset 0 1px 0 #2f8a2f"></div><div style="position:absolute;left:675px;top:273px;width:48px;height:16px;box-sizing:border-box;border-top:1px solid #5a5a5a;border-left:1px solid #d8d8d8;border-right:1px solid #d8d8d8;border-bottom:1px solid #c8ccd0;background:radial-gradient(ellipse 60% 65% at 50% 55%,#e2ffe2 0%,#d0ffd0 40%,#8ef78e 80%,#3ee83e 100%);box-shadow:inset 0 1px 0 #2f8a2f"></div><div style="position:absolute;left:755px;top:273px;width:48px;height:16px;box-sizing:border-box;border-top:1px solid #6a6a6a;border-left:1px solid #d8d8d8;border-right:1px solid #d8d8d8;border-bottom:1px solid #c8ccd0;background:linear-gradient(180deg,#5b6c5d 0%,#58695a 30%,#33473a 52%,#1a301c 72%,#142a16 86%,#4f614f 100%);box-shadow:inset 3px 0 3px -1px rgba(0,0,0,0.55),inset -3px 0 3px -1px rgba(0,0,0,0.55)"></div><div style="position:absolute;left:819px;top:273px;width:16px;height:16px;box-sizing:border-box;border-radius:50%;border:1.5px solid #c4c4c4;background:linear-gradient(180deg,#4a5b4c 0%,#5b6c5d 30%,#2a3e2c 55%,#142a16 85%,#2a3e2c 100%);box-shadow:inset 0 0 0 1px #000"></div><div style="position:absolute;left:851px;top:274px;font-size:16px;line-height:16px;color:#a0a0a0;white-space:nowrap;">S2动作注释4</div><div style="position:absolute;left:371px;top:293px;width:16px;height:16px;box-sizing:border-box;border-radius:50%;border:1.5px solid #c4c4c4;background:linear-gradient(180deg,#3e5c6e 0%,#4f6d7e 30%,#1b3a52 55%,#0e2b44 85%,#1e3f58 100%);box-shadow:inset 0 0 0 1px #000"></div><div style="position:absolute;left:403px;top:294px;font-size:16px;line-height:16px;color:#a0a0a0;white-space:nowrap;">S2条件注释5</div><div style="position:absolute;left:611px;top:293px;width:48px;height:16px;box-sizing:border-box;border-top:1px solid #6a6a6a;border-left:1px solid #d8d8d8;border-right:1px solid #d8d8d8;border-bottom:1px solid #c8ccd0;background:linear-gradient(180deg,#5b6c5d 0%,#58695a 30%,#33473a 52%,#1a301c 72%,#142a16 86%,#4f614f 100%);box-shadow:inset 3px 0 3px -1px rgba(0,0,0,0.55),inset -3px 0 3px -1px rgba(0,0,0,0.55)"></div><div style="position:absolute;left:675px;top:293px;width:48px;height:16px;box-sizing:border-box;border-top:1px solid #6a6a6a;border-left:1px solid #d8d8d8;border-right:1px solid #d8d8d8;border-bottom:1px solid #c8ccd0;background:linear-gradient(180deg,#5b6c5d 0%,#58695a 30%,#33473a 52%,#1a301c 72%,#142a16 86%,#4f614f 100%);box-shadow:inset 3px 0 3px -1px rgba(0,0,0,0.55),inset -3px 0 3px -1px rgba(0,0,0,0.55)"></div><div style="position:absolute;left:755px;top:293px;width:48px;height:16px;box-sizing:border-box;border-top:1px solid #6a6a6a;border-left:1px solid #d8d8d8;border-right:1px solid #d8d8d8;border-bottom:1px solid #c8ccd0;background:linear-gradient(180deg,#5b6c5d 0%,#58695a 30%,#33473a 52%,#1a301c 72%,#142a16 86%,#4f614f 100%);box-shadow:inset 3px 0 3px -1px rgba(0,0,0,0.55),inset -3px 0 3px -1px rgba(0,0,0,0.55)"></div><div style="position:absolute;left:819px;top:293px;width:16px;height:16px;box-sizing:border-box;border-radius:50%;border:1.5px solid #c4c4c4;background:linear-gradient(180deg,#4a5b4c 0%,#5b6c5d 30%,#2a3e2c 55%,#142a16 85%,#2a3e2c 100%);box-shadow:inset 0 0 0 1px #000"></div><div style="position:absolute;left:851px;top:294px;font-size:16px;line-height:16px;color:#a0a0a0;white-space:nowrap;">S2动作注释5</div><div style="position:absolute;left:371px;top:313px;width:16px;height:16px;box-sizing:border-box;border-radius:50%;border:1.5px solid #c4c4c4;background:linear-gradient(180deg,#3e5c6e 0%,#4f6d7e 30%,#1b3a52 55%,#0e2b44 85%,#1e3f58 100%);box-shadow:inset 0 0 0 1px #000"></div><div style="position:absolute;left:403px;top:314px;font-size:16px;line-height:16px;color:#a0a0a0;white-space:nowrap;">S2条件注释6</div><div style="position:absolute;left:611px;top:313px;width:48px;height:16px;box-sizing:border-box;border-top:1px solid #6a6a6a;border-left:1px solid #d8d8d8;border-right:1px solid #d8d8d8;border-bottom:1px solid #c8ccd0;background:linear-gradient(180deg,#5b6c5d 0%,#58695a 30%,#33473a 52%,#1a301c 72%,#142a16 86%,#4f614f 100%);box-shadow:inset 3px 0 3px -1px rgba(0,0,0,0.55),inset -3px 0 3px -1px rgba(0,0,0,0.55)"></div><div style="position:absolute;left:675px;top:313px;width:48px;height:16px;box-sizing:border-box;border-top:1px solid #6a6a6a;border-left:1px solid #d8d8d8;border-right:1px solid #d8d8d8;border-bottom:1px solid #c8ccd0;background:linear-gradient(180deg,#5b6c5d 0%,#58695a 30%,#33473a 52%,#1a301c 72%,#142a16 86%,#4f614f 100%);box-shadow:inset 3px 0 3px -1px rgba(0,0,0,0.55),inset -3px 0 3px -1px rgba(0,0,0,0.55)"></div><div style="position:absolute;left:755px;top:313px;width:48px;height:16px;box-sizing:border-box;border-top:1px solid #6a6a6a;border-left:1px solid #d8d8d8;border-right:1px solid #d8d8d8;border-bottom:1px solid #c8ccd0;background:linear-gradient(180deg,#5b6c5d 0%,#58695a 30%,#33473a 52%,#1a301c 72%,#142a16 86%,#4f614f 100%);box-shadow:inset 3px 0 3px -1px rgba(0,0,0,0.55),inset -3px 0 3px -1px rgba(0,0,0,0.55)"></div><div style="position:absolute;left:819px;top:313px;width:16px;height:16px;box-sizing:border-box;border-radius:50%;border:1.5px solid #c4c4c4;background:linear-gradient(180deg,#4a5b4c 0%,#5b6c5d 30%,#2a3e2c 55%,#142a16 85%,#2a3e2c 100%);box-shadow:inset 0 0 0 1px #000"></div><div style="position:absolute;left:851px;top:314px;font-size:16px;line-height:16px;color:#a0a0a0;white-space:nowrap;">S2动作注释6</div><div style="position:absolute;left:371px;top:333px;width:16px;height:16px;box-sizing:border-box;border-radius:50%;border:1.5px solid #c4c4c4;background:linear-gradient(180deg,#3e5c6e 0%,#4f6d7e 30%,#1b3a52 55%,#0e2b44 85%,#1e3f58 100%);box-shadow:inset 0 0 0 1px #000"></div><div style="position:absolute;left:403px;top:334px;font-size:16px;line-height:16px;color:#a0a0a0;white-space:nowrap;">S2条件注释7</div><div style="position:absolute;left:611px;top:333px;width:48px;height:16px;box-sizing:border-box;border-top:1px solid #6a6a6a;border-left:1px solid #d8d8d8;border-right:1px solid #d8d8d8;border-bottom:1px solid #c8ccd0;background:linear-gradient(180deg,#5b6c5d 0%,#58695a 30%,#33473a 52%,#1a301c 72%,#142a16 86%,#4f614f 100%);box-shadow:inset 3px 0 3px -1px rgba(0,0,0,0.55),inset -3px 0 3px -1px rgba(0,0,0,0.55)"></div><div style="position:absolute;left:675px;top:333px;width:48px;height:16px;box-sizing:border-box;border-top:1px solid #6a6a6a;border-left:1px solid #d8d8d8;border-right:1px solid #d8d8d8;border-bottom:1px solid #c8ccd0;background:linear-gradient(180deg,#5b6c5d 0%,#58695a 30%,#33473a 52%,#1a301c 72%,#142a16 86%,#4f614f 100%);box-shadow:inset 3px 0 3px -1px rgba(0,0,0,0.55),inset -3px 0 3px -1px rgba(0,0,0,0.55)"></div><div style="position:absolute;left:755px;top:333px;width:48px;height:16px;box-sizing:border-box;border-top:1px solid #6a6a6a;border-left:1px solid #d8d8d8;border-right:1px solid #d8d8d8;border-bottom:1px solid #c8ccd0;background:linear-gradient(180deg,#5b6c5d 0%,#58695a 30%,#33473a 52%,#1a301c 72%,#142a16 86%,#4f614f 100%);box-shadow:inset 3px 0 3px -1px rgba(0,0,0,0.55),inset -3px 0 3px -1px rgba(0,0,0,0.55)"></div><div style="position:absolute;left:819px;top:333px;width:16px;height:16px;box-sizing:border-box;border-radius:50%;border:1.5px solid #c4c4c4;background:linear-gradient(180deg,#4a5b4c 0%,#5b6c5d 30%,#2a3e2c 55%,#142a16 85%,#2a3e2c 100%);box-shadow:inset 0 0 0 1px #000"></div><div style="position:absolute;left:851px;top:334px;font-size:16px;line-height:16px;color:#a0a0a0;white-space:nowrap;">S2动作注释7</div><div style="position:absolute;left:371px;top:353px;width:16px;height:16px;box-sizing:border-box;border-radius:50%;border:1.5px solid #c4c4c4;background:linear-gradient(180deg,#3e5c6e 0%,#4f6d7e 30%,#1b3a52 55%,#0e2b44 85%,#1e3f58 100%);box-shadow:inset 0 0 0 1px #000"></div><div style="position:absolute;left:403px;top:354px;font-size:16px;line-height:16px;color:#a0a0a0;white-space:nowrap;">S2条件注释8</div><div style="position:absolute;left:611px;top:353px;width:48px;height:16px;box-sizing:border-box;border-top:1px solid #6a6a6a;border-left:1px solid #d8d8d8;border-right:1px solid #d8d8d8;border-bottom:1px solid #c8ccd0;background:linear-gradient(180deg,#5b6c5d 0%,#58695a 30%,#33473a 52%,#1a301c 72%,#142a16 86%,#4f614f 100%);box-shadow:inset 3px 0 3px -1px rgba(0,0,0,0.55),inset -3px 0 3px -1px rgba(0,0,0,0.55)"></div><div style="position:absolute;left:675px;top:353px;width:48px;height:16px;box-sizing:border-box;border-top:1px solid #6a6a6a;border-left:1px solid #d8d8d8;border-right:1px solid #d8d8d8;border-bottom:1px solid #c8ccd0;background:linear-gradient(180deg,#5b6c5d 0%,#58695a 30%,#33473a 52%,#1a301c 72%,#142a16 86%,#4f614f 100%);box-shadow:inset 3px 0 3px -1px rgba(0,0,0,0.55),inset -3px 0 3px -1px rgba(0,0,0,0.55)"></div><div style="position:absolute;left:755px;top:353px;width:48px;height:16px;box-sizing:border-box;border-top:1px solid #6a6a6a;border-left:1px solid #d8d8d8;border-right:1px solid #d8d8d8;border-bottom:1px solid #c8ccd0;background:linear-gradient(180deg,#5b6c5d 0%,#58695a 30%,#33473a 52%,#1a301c 72%,#142a16 86%,#4f614f 100%);box-shadow:inset 3px 0 3px -1px rgba(0,0,0,0.55),inset -3px 0 3px -1px rgba(0,0,0,0.55)"></div><div style="position:absolute;left:819px;top:353px;width:16px;height:16px;box-sizing:border-box;border-radius:50%;border:1.5px solid #c4c4c4;background:linear-gradient(180deg,#4a5b4c 0%,#5b6c5d 30%,#2a3e2c 55%,#142a16 85%,#2a3e2c 100%);box-shadow:inset 0 0 0 1px #000"></div><div style="position:absolute;left:851px;top:354px;font-size:16px;line-height:16px;color:#a0a0a0;white-space:nowrap;">S2动作注释8</div><div style="position:absolute;left:371px;top:373px;width:16px;height:16px;box-sizing:border-box;border-radius:50%;border:1.5px solid #c4c4c4;background:linear-gradient(180deg,#3e5c6e 0%,#4f6d7e 30%,#1b3a52 55%,#0e2b44 85%,#1e3f58 100%);box-shadow:inset 0 0 0 1px #000"></div><div style="position:absolute;left:403px;top:374px;font-size:16px;line-height:16px;color:#a0a0a0;white-space:nowrap;">S2条件注释9</div><div style="position:absolute;left:611px;top:373px;width:48px;height:16px;box-sizing:border-box;border-top:1px solid #6a6a6a;border-left:1px solid #d8d8d8;border-right:1px solid #d8d8d8;border-bottom:1px solid #c8ccd0;background:linear-gradient(180deg,#5b6c5d 0%,#58695a 30%,#33473a 52%,#1a301c 72%,#142a16 86%,#4f614f 100%);box-shadow:inset 3px 0 3px -1px rgba(0,0,0,0.55),inset -3px 0 3px -1px rgba(0,0,0,0.55)"></div><div style="position:absolute;left:675px;top:373px;width:48px;height:16px;box-sizing:border-box;border-top:1px solid #6a6a6a;border-left:1px solid #d8d8d8;border-right:1px solid #d8d8d8;border-bottom:1px solid #c8ccd0;background:linear-gradient(180deg,#5b6c5d 0%,#58695a 30%,#33473a 52%,#1a301c 72%,#142a16 86%,#4f614f 100%);box-shadow:inset 3px 0 3px -1px rgba(0,0,0,0.55),inset -3px 0 3px -1px rgba(0,0,0,0.55)"></div><div style="position:absolute;left:755px;top:373px;width:48px;height:16px;box-sizing:border-box;border-top:1px solid #6a6a6a;border-left:1px solid #d8d8d8;border-right:1px solid #d8d8d8;border-bottom:1px solid #c8ccd0;background:linear-gradient(180deg,#5b6c5d 0%,#58695a 30%,#33473a 52%,#1a301c 72%,#142a16 86%,#4f614f 100%);box-shadow:inset 3px 0 3px -1px rgba(0,0,0,0.55),inset -3px 0 3px -1px rgba(0,0,0,0.55)"></div><div style="position:absolute;left:819px;top:373px;width:16px;height:16px;box-sizing:border-box;border-radius:50%;border:1.5px solid #c4c4c4;background:linear-gradient(180deg,#4a5b4c 0%,#5b6c5d 30%,#2a3e2c 55%,#142a16 85%,#2a3e2c 100%);box-shadow:inset 0 0 0 1px #000"></div><div style="position:absolute;left:851px;top:374px;font-size:16px;line-height:16px;color:#a0a0a0;white-space:nowrap;">S2动作注释9</div><div style="position:absolute;left:371px;top:393px;width:16px;height:16px;box-sizing:border-box;border-radius:50%;border:1.5px solid #c4c4c4;background:linear-gradient(180deg,#3e5c6e 0%,#4f6d7e 30%,#1b3a52 55%,#0e2b44 85%,#1e3f58 100%);box-shadow:inset 0 0 0 1px #000"></div><div style="position:absolute;left:403px;top:394px;font-size:16px;line-height:16px;color:#a0a0a0;white-space:nowrap;">S2条件注释10</div><div style="position:absolute;left:611px;top:393px;width:48px;height:16px;box-sizing:border-box;border-top:1px solid #6a6a6a;border-left:1px solid #d8d8d8;border-right:1px solid #d8d8d8;border-bottom:1px solid #c8ccd0;background:linear-gradient(180deg,#5b6c5d 0%,#58695a 30%,#33473a 52%,#1a301c 72%,#142a16 86%,#4f614f 100%);box-shadow:inset 3px 0 3px -1px rgba(0,0,0,0.55),inset -3px 0 3px -1px rgba(0,0,0,0.55)"></div><div style="position:absolute;left:675px;top:393px;width:48px;height:16px;box-sizing:border-box;border-top:1px solid #6a6a6a;border-left:1px solid #d8d8d8;border-right:1px solid #d8d8d8;border-bottom:1px solid #c8ccd0;background:linear-gradient(180deg,#5b6c5d 0%,#58695a 30%,#33473a 52%,#1a301c 72%,#142a16 86%,#4f614f 100%);box-shadow:inset 3px 0 3px -1px rgba(0,0,0,0.55),inset -3px 0 3px -1px rgba(0,0,0,0.55)"></div><div style="position:absolute;left:755px;top:393px;width:48px;height:16px;box-sizing:border-box;border-top:1px solid #6a6a6a;border-left:1px solid #d8d8d8;border-right:1px solid #d8d8d8;border-bottom:1px solid #c8ccd0;background:linear-gradient(180deg,#5b6c5d 0%,#58695a 30%,#33473a 52%,#1a301c 72%,#142a16 86%,#4f614f 100%);box-shadow:inset 3px 0 3px -1px rgba(0,0,0,0.55),inset -3px 0 3px -1px rgba(0,0,0,0.55)"></div><div style="position:absolute;left:819px;top:393px;width:16px;height:16px;box-sizing:border-box;border-radius:50%;border:1.5px solid #c4c4c4;background:linear-gradient(180deg,#4a5b4c 0%,#5b6c5d 30%,#2a3e2c 55%,#142a16 85%,#2a3e2c 100%);box-shadow:inset 0 0 0 1px #000"></div><div style="position:absolute;left:851px;top:394px;font-size:16px;line-height:16px;color:#a0a0a0;white-space:nowrap;">S2动作注释10</div><div style="position:absolute;left:371px;top:413px;width:16px;height:16px;box-sizing:border-box;border-radius:50%;border:1.5px solid #c4c4c4;background:linear-gradient(180deg,#3e5c6e 0%,#4f6d7e 30%,#1b3a52 55%,#0e2b44 85%,#1e3f58 100%);box-shadow:inset 0 0 0 1px #000"></div><div style="position:absolute;left:403px;top:414px;font-size:16px;line-height:16px;color:#a0a0a0;white-space:nowrap;">S2条件注释11</div><div style="position:absolute;left:611px;top:413px;width:48px;height:16px;box-sizing:border-box;border-top:1px solid #6a6a6a;border-left:1px solid #d8d8d8;border-right:1px solid #d8d8d8;border-bottom:1px solid #c8ccd0;background:linear-gradient(180deg,#5b6c5d 0%,#58695a 30%,#33473a 52%,#1a301c 72%,#142a16 86%,#4f614f 100%);box-shadow:inset 3px 0 3px -1px rgba(0,0,0,0.55),inset -3px 0 3px -1px rgba(0,0,0,0.55)"></div><div style="position:absolute;left:675px;top:413px;width:48px;height:16px;box-sizing:border-box;border-top:1px solid #6a6a6a;border-left:1px solid #d8d8d8;border-right:1px solid #d8d8d8;border-bottom:1px solid #c8ccd0;background:linear-gradient(180deg,#5b6c5d 0%,#58695a 30%,#33473a 52%,#1a301c 72%,#142a16 86%,#4f614f 100%);box-shadow:inset 3px 0 3px -1px rgba(0,0,0,0.55),inset -3px 0 3px -1px rgba(0,0,0,0.55)"></div><div style="position:absolute;left:755px;top:413px;width:48px;height:16px;box-sizing:border-box;border-top:1px solid #6a6a6a;border-left:1px solid #d8d8d8;border-right:1px solid #d8d8d8;border-bottom:1px solid #c8ccd0;background:linear-gradient(180deg,#5b6c5d 0%,#58695a 30%,#33473a 52%,#1a301c 72%,#142a16 86%,#4f614f 100%);box-shadow:inset 3px 0 3px -1px rgba(0,0,0,0.55),inset -3px 0 3px -1px rgba(0,0,0,0.55)"></div><div style="position:absolute;left:819px;top:413px;width:16px;height:16px;box-sizing:border-box;border-radius:50%;border:1.5px solid #c4c4c4;background:linear-gradient(180deg,#4a5b4c 0%,#5b6c5d 30%,#2a3e2c 55%,#142a16 85%,#2a3e2c 100%);box-shadow:inset 0 0 0 1px #000"></div><div style="position:absolute;left:851px;top:414px;font-size:16px;line-height:16px;color:#a0a0a0;white-space:nowrap;">S2动作注释11</div><div style="position:absolute;left:371px;top:433px;width:16px;height:16px;box-sizing:border-box;border-radius:50%;border:1.5px solid #c4c4c4;background:linear-gradient(180deg,#3e5c6e 0%,#4f6d7e 30%,#1b3a52 55%,#0e2b44 85%,#1e3f58 100%);box-shadow:inset 0 0 0 1px #000"></div><div style="position:absolute;left:403px;top:434px;font-size:16px;line-height:16px;color:#a0a0a0;white-space:nowrap;">S2条件注释12</div><div style="position:absolute;left:611px;top:433px;width:48px;height:16px;box-sizing:border-box;border-top:1px solid #6a6a6a;border-left:1px solid #d8d8d8;border-right:1px solid #d8d8d8;border-bottom:1px solid #c8ccd0;background:linear-gradient(180deg,#5b6c5d 0%,#58695a 30%,#33473a 52%,#1a301c 72%,#142a16 86%,#4f614f 100%);box-shadow:inset 3px 0 3px -1px rgba(0,0,0,0.55),inset -3px 0 3px -1px rgba(0,0,0,0.55)"></div><div style="position:absolute;left:675px;top:433px;width:48px;height:16px;box-sizing:border-box;border-top:1px solid #6a6a6a;border-left:1px solid #d8d8d8;border-right:1px solid #d8d8d8;border-bottom:1px solid #c8ccd0;background:linear-gradient(180deg,#5b6c5d 0%,#58695a 30%,#33473a 52%,#1a301c 72%,#142a16 86%,#4f614f 100%);box-shadow:inset 3px 0 3px -1px rgba(0,0,0,0.55),inset -3px 0 3px -1px rgba(0,0,0,0.55)"></div><div style="position:absolute;left:755px;top:433px;width:48px;height:16px;box-sizing:border-box;border-top:1px solid #6a6a6a;border-left:1px solid #d8d8d8;border-right:1px solid #d8d8d8;border-bottom:1px solid #c8ccd0;background:linear-gradient(180deg,#5b6c5d 0%,#58695a 30%,#33473a 52%,#1a301c 72%,#142a16 86%,#4f614f 100%);box-shadow:inset 3px 0 3px -1px rgba(0,0,0,0.55),inset -3px 0 3px -1px rgba(0,0,0,0.55)"></div><div style="position:absolute;left:819px;top:433px;width:16px;height:16px;box-sizing:border-box;border-radius:50%;border:1.5px solid #c4c4c4;background:linear-gradient(180deg,#4a5b4c 0%,#5b6c5d 30%,#2a3e2c 55%,#142a16 85%,#2a3e2c 100%);box-shadow:inset 0 0 0 1px #000"></div><div style="position:absolute;left:851px;top:434px;font-size:16px;line-height:16px;color:#a0a0a0;white-space:nowrap;">S2动作注释12</div><div style="position:absolute;left:371px;top:453px;width:16px;height:16px;box-sizing:border-box;border-radius:50%;border:1.5px solid #c4c4c4;background:linear-gradient(180deg,#3e5c6e 0%,#4f6d7e 30%,#1b3a52 55%,#0e2b44 85%,#1e3f58 100%);box-shadow:inset 0 0 0 1px #000"></div><div style="position:absolute;left:403px;top:454px;font-size:16px;line-height:16px;color:#a0a0a0;white-space:nowrap;">S2条件注释13</div><div style="position:absolute;left:611px;top:453px;width:48px;height:16px;box-sizing:border-box;border-top:1px solid #6a6a6a;border-left:1px solid #d8d8d8;border-right:1px solid #d8d8d8;border-bottom:1px solid #c8ccd0;background:linear-gradient(180deg,#5b6c5d 0%,#58695a 30%,#33473a 52%,#1a301c 72%,#142a16 86%,#4f614f 100%);box-shadow:inset 3px 0 3px -1px rgba(0,0,0,0.55),inset -3px 0 3px -1px rgba(0,0,0,0.55)"></div><div style="position:absolute;left:675px;top:453px;width:48px;height:16px;box-sizing:border-box;border-top:1px solid #6a6a6a;border-left:1px solid #d8d8d8;border-right:1px solid #d8d8d8;border-bottom:1px solid #c8ccd0;background:linear-gradient(180deg,#5b6c5d 0%,#58695a 30%,#33473a 52%,#1a301c 72%,#142a16 86%,#4f614f 100%);box-shadow:inset 3px 0 3px -1px rgba(0,0,0,0.55),inset -3px 0 3px -1px rgba(0,0,0,0.55)"></div><div style="position:absolute;left:755px;top:453px;width:48px;height:16px;box-sizing:border-box;border-top:1px solid #6a6a6a;border-left:1px solid #d8d8d8;border-right:1px solid #d8d8d8;border-bottom:1px solid #c8ccd0;background:linear-gradient(180deg,#5b6c5d 0%,#58695a 30%,#33473a 52%,#1a301c 72%,#142a16 86%,#4f614f 100%);box-shadow:inset 3px 0 3px -1px rgba(0,0,0,0.55),inset -3px 0 3px -1px rgba(0,0,0,0.55)"></div><div style="position:absolute;left:819px;top:453px;width:16px;height:16px;box-sizing:border-box;border-radius:50%;border:1.5px solid #c4c4c4;background:linear-gradient(180deg,#4a5b4c 0%,#5b6c5d 30%,#2a3e2c 55%,#142a16 85%,#2a3e2c 100%);box-shadow:inset 0 0 0 1px #000"></div><div style="position:absolute;left:851px;top:454px;font-size:16px;line-height:16px;color:#a0a0a0;white-space:nowrap;">S2动作注释13</div><div style="position:absolute;left:371px;top:473px;width:16px;height:16px;box-sizing:border-box;border-radius:50%;border:1.5px solid #c4c4c4;background:linear-gradient(180deg,#3e5c6e 0%,#4f6d7e 30%,#1b3a52 55%,#0e2b44 85%,#1e3f58 100%);box-shadow:inset 0 0 0 1px #000"></div><div style="position:absolute;left:403px;top:474px;font-size:16px;line-height:16px;color:#a0a0a0;white-space:nowrap;">S2条件注释14</div><div style="position:absolute;left:611px;top:473px;width:48px;height:16px;box-sizing:border-box;border-top:1px solid #6a6a6a;border-left:1px solid #d8d8d8;border-right:1px solid #d8d8d8;border-bottom:1px solid #c8ccd0;background:linear-gradient(180deg,#5b6c5d 0%,#58695a 30%,#33473a 52%,#1a301c 72%,#142a16 86%,#4f614f 100%);box-shadow:inset 3px 0 3px -1px rgba(0,0,0,0.55),inset -3px 0 3px -1px rgba(0,0,0,0.55)"></div><div style="position:absolute;left:675px;top:473px;width:48px;height:16px;box-sizing:border-box;border-top:1px solid #6a6a6a;border-left:1px solid #d8d8d8;border-right:1px solid #d8d8d8;border-bottom:1px solid #c8ccd0;background:linear-gradient(180deg,#5b6c5d 0%,#58695a 30%,#33473a 52%,#1a301c 72%,#142a16 86%,#4f614f 100%);box-shadow:inset 3px 0 3px -1px rgba(0,0,0,0.55),inset -3px 0 3px -1px rgba(0,0,0,0.55)"></div><div style="position:absolute;left:755px;top:473px;width:48px;height:16px;box-sizing:border-box;border-top:1px solid #6a6a6a;border-left:1px solid #d8d8d8;border-right:1px solid #d8d8d8;border-bottom:1px solid #c8ccd0;background:linear-gradient(180deg,#5b6c5d 0%,#58695a 30%,#33473a 52%,#1a301c 72%,#142a16 86%,#4f614f 100%);box-shadow:inset 3px 0 3px -1px rgba(0,0,0,0.55),inset -3px 0 3px -1px rgba(0,0,0,0.55)"></div><div style="position:absolute;left:819px;top:473px;width:16px;height:16px;box-sizing:border-box;border-radius:50%;border:1.5px solid #c4c4c4;background:linear-gradient(180deg,#4a5b4c 0%,#5b6c5d 30%,#2a3e2c 55%,#142a16 85%,#2a3e2c 100%);box-shadow:inset 0 0 0 1px #000"></div><div style="position:absolute;left:851px;top:474px;font-size:16px;line-height:16px;color:#a0a0a0;white-space:nowrap;">S2动作注释14</div><div style="position:absolute;left:371px;top:493px;width:16px;height:16px;box-sizing:border-box;border-radius:50%;border:1.5px solid #c4c4c4;background:linear-gradient(180deg,#3e5c6e 0%,#4f6d7e 30%,#1b3a52 55%,#0e2b44 85%,#1e3f58 100%);box-shadow:inset 0 0 0 1px #000"></div><div style="position:absolute;left:403px;top:494px;font-size:16px;line-height:16px;color:#a0a0a0;white-space:nowrap;">S2条件注释15</div><div style="position:absolute;left:611px;top:493px;width:48px;height:16px;box-sizing:border-box;border-top:1px solid #6a6a6a;border-left:1px solid #d8d8d8;border-right:1px solid #d8d8d8;border-bottom:1px solid #c8ccd0;background:linear-gradient(180deg,#5b6c5d 0%,#58695a 30%,#33473a 52%,#1a301c 72%,#142a16 86%,#4f614f 100%);box-shadow:inset 3px 0 3px -1px rgba(0,0,0,0.55),inset -3px 0 3px -1px rgba(0,0,0,0.55)"></div><div style="position:absolute;left:675px;top:493px;width:48px;height:16px;box-sizing:border-box;border-top:1px solid #6a6a6a;border-left:1px solid #d8d8d8;border-right:1px solid #d8d8d8;border-bottom:1px solid #c8ccd0;background:linear-gradient(180deg,#5b6c5d 0%,#58695a 30%,#33473a 52%,#1a301c 72%,#142a16 86%,#4f614f 100%);box-shadow:inset 3px 0 3px -1px rgba(0,0,0,0.55),inset -3px 0 3px -1px rgba(0,0,0,0.55)"></div><div style="position:absolute;left:755px;top:493px;width:48px;height:16px;box-sizing:border-box;border-top:1px solid #6a6a6a;border-left:1px solid #d8d8d8;border-right:1px solid #d8d8d8;border-bottom:1px solid #c8ccd0;background:linear-gradient(180deg,#5b6c5d 0%,#58695a 30%,#33473a 52%,#1a301c 72%,#142a16 86%,#4f614f 100%);box-shadow:inset 3px 0 3px -1px rgba(0,0,0,0.55),inset -3px 0 3px -1px rgba(0,0,0,0.55)"></div><div style="position:absolute;left:819px;top:493px;width:16px;height:16px;box-sizing:border-box;border-radius:50%;border:1.5px solid #c4c4c4;background:linear-gradient(180deg,#4a5b4c 0%,#5b6c5d 30%,#2a3e2c 55%,#142a16 85%,#2a3e2c 100%);box-shadow:inset 0 0 0 1px #000"></div><div style="position:absolute;left:851px;top:494px;font-size:16px;line-height:16px;color:#a0a0a0;white-space:nowrap;">S2动作注释15</div><div style="position:absolute;left:371px;top:513px;width:16px;height:16px;box-sizing:border-box;border-radius:50%;border:1.5px solid #c4c4c4;background:linear-gradient(180deg,#3e5c6e 0%,#4f6d7e 30%,#1b3a52 55%,#0e2b44 85%,#1e3f58 100%);box-shadow:inset 0 0 0 1px #000"></div><div style="position:absolute;left:403px;top:514px;font-size:16px;line-height:16px;color:#a0a0a0;white-space:nowrap;">S2条件注释16</div><div style="position:absolute;left:611px;top:513px;width:48px;height:16px;box-sizing:border-box;border-top:1px solid #6a6a6a;border-left:1px solid #d8d8d8;border-right:1px solid #d8d8d8;border-bottom:1px solid #c8ccd0;background:linear-gradient(180deg,#5b6c5d 0%,#58695a 30%,#33473a 52%,#1a301c 72%,#142a16 86%,#4f614f 100%);box-shadow:inset 3px 0 3px -1px rgba(0,0,0,0.55),inset -3px 0 3px -1px rgba(0,0,0,0.55)"></div><div style="position:absolute;left:675px;top:513px;width:48px;height:16px;box-sizing:border-box;border-top:1px solid #6a6a6a;border-left:1px solid #d8d8d8;border-right:1px solid #d8d8d8;border-bottom:1px solid #c8ccd0;background:linear-gradient(180deg,#5b6c5d 0%,#58695a 30%,#33473a 52%,#1a301c 72%,#142a16 86%,#4f614f 100%);box-shadow:inset 3px 0 3px -1px rgba(0,0,0,0.55),inset -3px 0 3px -1px rgba(0,0,0,0.55)"></div><div style="position:absolute;left:755px;top:513px;width:48px;height:16px;box-sizing:border-box;border-top:1px solid #6a6a6a;border-left:1px solid #d8d8d8;border-right:1px solid #d8d8d8;border-bottom:1px solid #c8ccd0;background:linear-gradient(180deg,#5b6c5d 0%,#58695a 30%,#33473a 52%,#1a301c 72%,#142a16 86%,#4f614f 100%);box-shadow:inset 3px 0 3px -1px rgba(0,0,0,0.55),inset -3px 0 3px -1px rgba(0,0,0,0.55)"></div><div style="position:absolute;left:819px;top:513px;width:16px;height:16px;box-sizing:border-box;border-radius:50%;border:1.5px solid #c4c4c4;background:linear-gradient(180deg,#4a5b4c 0%,#5b6c5d 30%,#2a3e2c 55%,#142a16 85%,#2a3e2c 100%);box-shadow:inset 0 0 0 1px #000"></div><div style="position:absolute;left:851px;top:514px;font-size:16px;line-height:16px;color:#a0a0a0;white-space:nowrap;">S2动作注释16</div><div style="position:absolute;left:371px;top:533px;width:16px;height:16px;box-sizing:border-box;border-radius:50%;border:1.5px solid #c4c4c4;background:linear-gradient(180deg,#3e5c6e 0%,#4f6d7e 30%,#1b3a52 55%,#0e2b44 85%,#1e3f58 100%);box-shadow:inset 0 0 0 1px #000"></div><div style="position:absolute;left:403px;top:534px;font-size:16px;line-height:16px;color:#a0a0a0;white-space:nowrap;">S2条件注释17</div><div style="position:absolute;left:611px;top:533px;width:48px;height:16px;box-sizing:border-box;border-top:1px solid #6a6a6a;border-left:1px solid #d8d8d8;border-right:1px solid #d8d8d8;border-bottom:1px solid #c8ccd0;background:linear-gradient(180deg,#5b6c5d 0%,#58695a 30%,#33473a 52%,#1a301c 72%,#142a16 86%,#4f614f 100%);box-shadow:inset 3px 0 3px -1px rgba(0,0,0,0.55),inset -3px 0 3px -1px rgba(0,0,0,0.55)"></div><div style="position:absolute;left:675px;top:533px;width:48px;height:16px;box-sizing:border-box;border-top:1px solid #6a6a6a;border-left:1px solid #d8d8d8;border-right:1px solid #d8d8d8;border-bottom:1px solid #c8ccd0;background:linear-gradient(180deg,#5b6c5d 0%,#58695a 30%,#33473a 52%,#1a301c 72%,#142a16 86%,#4f614f 100%);box-shadow:inset 3px 0 3px -1px rgba(0,0,0,0.55),inset -3px 0 3px -1px rgba(0,0,0,0.55)"></div><div style="position:absolute;left:755px;top:533px;width:48px;height:16px;box-sizing:border-box;border-top:1px solid #6a6a6a;border-left:1px solid #d8d8d8;border-right:1px solid #d8d8d8;border-bottom:1px solid #c8ccd0;background:linear-gradient(180deg,#5b6c5d 0%,#58695a 30%,#33473a 52%,#1a301c 72%,#142a16 86%,#4f614f 100%);box-shadow:inset 3px 0 3px -1px rgba(0,0,0,0.55),inset -3px 0 3px -1px rgba(0,0,0,0.55)"></div><div style="position:absolute;left:819px;top:533px;width:16px;height:16px;box-sizing:border-box;border-radius:50%;border:1.5px solid #c4c4c4;background:linear-gradient(180deg,#4a5b4c 0%,#5b6c5d 30%,#2a3e2c 55%,#142a16 85%,#2a3e2c 100%);box-shadow:inset 0 0 0 1px #000"></div><div style="position:absolute;left:851px;top:534px;font-size:16px;line-height:16px;color:#a0a0a0;white-space:nowrap;">S2动作注释17</div><div style="position:absolute;left:371px;top:553px;width:16px;height:16px;box-sizing:border-box;border-radius:50%;border:1.5px solid #c4c4c4;background:linear-gradient(180deg,#3e5c6e 0%,#4f6d7e 30%,#1b3a52 55%,#0e2b44 85%,#1e3f58 100%);box-shadow:inset 0 0 0 1px #000"></div><div style="position:absolute;left:403px;top:554px;font-size:16px;line-height:16px;color:#a0a0a0;white-space:nowrap;">S2条件注释18</div><div style="position:absolute;left:611px;top:553px;width:48px;height:16px;box-sizing:border-box;border-top:1px solid #6a6a6a;border-left:1px solid #d8d8d8;border-right:1px solid #d8d8d8;border-bottom:1px solid #c8ccd0;background:linear-gradient(180deg,#5b6c5d 0%,#58695a 30%,#33473a 52%,#1a301c 72%,#142a16 86%,#4f614f 100%);box-shadow:inset 3px 0 3px -1px rgba(0,0,0,0.55),inset -3px 0 3px -1px rgba(0,0,0,0.55)"></div><div style="position:absolute;left:675px;top:553px;width:48px;height:16px;box-sizing:border-box;border-top:1px solid #6a6a6a;border-left:1px solid #d8d8d8;border-right:1px solid #d8d8d8;border-bottom:1px solid #c8ccd0;background:linear-gradient(180deg,#5b6c5d 0%,#58695a 30%,#33473a 52%,#1a301c 72%,#142a16 86%,#4f614f 100%);box-shadow:inset 3px 0 3px -1px rgba(0,0,0,0.55),inset -3px 0 3px -1px rgba(0,0,0,0.55)"></div><div style="position:absolute;left:755px;top:553px;width:48px;height:16px;box-sizing:border-box;border-top:1px solid #6a6a6a;border-left:1px solid #d8d8d8;border-right:1px solid #d8d8d8;border-bottom:1px solid #c8ccd0;background:linear-gradient(180deg,#5b6c5d 0%,#58695a 30%,#33473a 52%,#1a301c 72%,#142a16 86%,#4f614f 100%);box-shadow:inset 3px 0 3px -1px rgba(0,0,0,0.55),inset -3px 0 3px -1px rgba(0,0,0,0.55)"></div><div style="position:absolute;left:819px;top:553px;width:16px;height:16px;box-sizing:border-box;border-radius:50%;border:1.5px solid #c4c4c4;background:linear-gradient(180deg,#4a5b4c 0%,#5b6c5d 30%,#2a3e2c 55%,#142a16 85%,#2a3e2c 100%);box-shadow:inset 0 0 0 1px #000"></div><div style="position:absolute;left:851px;top:554px;font-size:16px;line-height:16px;color:#a0a0a0;white-space:nowrap;">S2动作注释18</div><div style="position:absolute;left:371px;top:573px;width:16px;height:16px;box-sizing:border-box;border-radius:50%;border:1.5px solid #c4c4c4;background:linear-gradient(180deg,#3e5c6e 0%,#4f6d7e 30%,#1b3a52 55%,#0e2b44 85%,#1e3f58 100%);box-shadow:inset 0 0 0 1px #000"></div><div style="position:absolute;left:403px;top:574px;font-size:16px;line-height:16px;color:#a0a0a0;white-space:nowrap;">S2条件注释19</div><div style="position:absolute;left:611px;top:573px;width:48px;height:16px;box-sizing:border-box;border-top:1px solid #6a6a6a;border-left:1px solid #d8d8d8;border-right:1px solid #d8d8d8;border-bottom:1px solid #c8ccd0;background:linear-gradient(180deg,#5b6c5d 0%,#58695a 30%,#33473a 52%,#1a301c 72%,#142a16 86%,#4f614f 100%);box-shadow:inset 3px 0 3px -1px rgba(0,0,0,0.55),inset -3px 0 3px -1px rgba(0,0,0,0.55)"></div><div style="position:absolute;left:675px;top:573px;width:48px;height:16px;box-sizing:border-box;border-top:1px solid #6a6a6a;border-left:1px solid #d8d8d8;border-right:1px solid #d8d8d8;border-bottom:1px solid #c8ccd0;background:linear-gradient(180deg,#5b6c5d 0%,#58695a 30%,#33473a 52%,#1a301c 72%,#142a16 86%,#4f614f 100%);box-shadow:inset 3px 0 3px -1px rgba(0,0,0,0.55),inset -3px 0 3px -1px rgba(0,0,0,0.55)"></div><div style="position:absolute;left:755px;top:573px;width:48px;height:16px;box-sizing:border-box;border-top:1px solid #6a6a6a;border-left:1px solid #d8d8d8;border-right:1px solid #d8d8d8;border-bottom:1px solid #c8ccd0;background:linear-gradient(180deg,#5b6c5d 0%,#58695a 30%,#33473a 52%,#1a301c 72%,#142a16 86%,#4f614f 100%);box-shadow:inset 3px 0 3px -1px rgba(0,0,0,0.55),inset -3px 0 3px -1px rgba(0,0,0,0.55)"></div><div style="position:absolute;left:819px;top:573px;width:16px;height:16px;box-sizing:border-box;border-radius:50%;border:1.5px solid #c4c4c4;background:linear-gradient(180deg,#4a5b4c 0%,#5b6c5d 30%,#2a3e2c 55%,#142a16 85%,#2a3e2c 100%);box-shadow:inset 0 0 0 1px #000"></div><div style="position:absolute;left:851px;top:574px;font-size:16px;line-height:16px;color:#a0a0a0;white-space:nowrap;">S2动作注释19</div><div style="position:absolute;left:371px;top:593px;width:16px;height:16px;box-sizing:border-box;border-radius:50%;border:1.5px solid #c4c4c4;background:linear-gradient(180deg,#3e5c6e 0%,#4f6d7e 30%,#1b3a52 55%,#0e2b44 85%,#1e3f58 100%);box-shadow:inset 0 0 0 1px #000"></div><div style="position:absolute;left:403px;top:594px;font-size:16px;line-height:16px;color:#a0a0a0;white-space:nowrap;">S2条件注释20</div><div style="position:absolute;left:611px;top:593px;width:48px;height:16px;box-sizing:border-box;border-top:1px solid #6a6a6a;border-left:1px solid #d8d8d8;border-right:1px solid #d8d8d8;border-bottom:1px solid #c8ccd0;background:linear-gradient(180deg,#5b6c5d 0%,#58695a 30%,#33473a 52%,#1a301c 72%,#142a16 86%,#4f614f 100%);box-shadow:inset 3px 0 3px -1px rgba(0,0,0,0.55),inset -3px 0 3px -1px rgba(0,0,0,0.55)"></div><div style="position:absolute;left:675px;top:593px;width:48px;height:16px;box-sizing:border-box;border-top:1px solid #6a6a6a;border-left:1px solid #d8d8d8;border-right:1px solid #d8d8d8;border-bottom:1px solid #c8ccd0;background:linear-gradient(180deg,#5b6c5d 0%,#58695a 30%,#33473a 52%,#1a301c 72%,#142a16 86%,#4f614f 100%);box-shadow:inset 3px 0 3px -1px rgba(0,0,0,0.55),inset -3px 0 3px -1px rgba(0,0,0,0.55)"></div><div style="position:absolute;left:755px;top:593px;width:48px;height:16px;box-sizing:border-box;border-top:1px solid #6a6a6a;border-left:1px solid #d8d8d8;border-right:1px solid #d8d8d8;border-bottom:1px solid #c8ccd0;background:linear-gradient(180deg,#5b6c5d 0%,#58695a 30%,#33473a 52%,#1a301c 72%,#142a16 86%,#4f614f 100%);box-shadow:inset 3px 0 3px -1px rgba(0,0,0,0.55),inset -3px 0 3px -1px rgba(0,0,0,0.55)"></div><div style="position:absolute;left:819px;top:593px;width:16px;height:16px;box-sizing:border-box;border-radius:50%;border:1.5px solid #c4c4c4;background:linear-gradient(180deg,#4a5b4c 0%,#5b6c5d 30%,#2a3e2c 55%,#142a16 85%,#2a3e2c 100%);box-shadow:inset 0 0 0 1px #000"></div><div style="position:absolute;left:851px;top:594px;font-size:16px;line-height:16px;color:#a0a0a0;white-space:nowrap;">S2动作注释20</div><div style="position:absolute;left:371px;top:613px;width:16px;height:16px;box-sizing:border-box;border-radius:50%;border:1.5px solid #c4c4c4;background:linear-gradient(180deg,#3e5c6e 0%,#4f6d7e 30%,#1b3a52 55%,#0e2b44 85%,#1e3f58 100%);box-shadow:inset 0 0 0 1px #000"></div><div style="position:absolute;left:403px;top:614px;font-size:16px;line-height:16px;color:#a0a0a0;white-space:nowrap;">S2条件注释21</div><div style="position:absolute;left:611px;top:613px;width:48px;height:16px;box-sizing:border-box;border-top:1px solid #6a6a6a;border-left:1px solid #d8d8d8;border-right:1px solid #d8d8d8;border-bottom:1px solid #c8ccd0;background:linear-gradient(180deg,#5b6c5d 0%,#58695a 30%,#33473a 52%,#1a301c 72%,#142a16 86%,#4f614f 100%);box-shadow:inset 3px 0 3px -1px rgba(0,0,0,0.55),inset -3px 0 3px -1px rgba(0,0,0,0.55)"></div><div style="position:absolute;left:675px;top:613px;width:48px;height:16px;box-sizing:border-box;border-top:1px solid #6a6a6a;border-left:1px solid #d8d8d8;border-right:1px solid #d8d8d8;border-bottom:1px solid #c8ccd0;background:linear-gradient(180deg,#5b6c5d 0%,#58695a 30%,#33473a 52%,#1a301c 72%,#142a16 86%,#4f614f 100%);box-shadow:inset 3px 0 3px -1px rgba(0,0,0,0.55),inset -3px 0 3px -1px rgba(0,0,0,0.55)"></div><div style="position:absolute;left:755px;top:613px;width:48px;height:16px;box-sizing:border-box;border-top:1px solid #6a6a6a;border-left:1px solid #d8d8d8;border-right:1px solid #d8d8d8;border-bottom:1px solid #c8ccd0;background:linear-gradient(180deg,#5b6c5d 0%,#58695a 30%,#33473a 52%,#1a301c 72%,#142a16 86%,#4f614f 100%);box-shadow:inset 3px 0 3px -1px rgba(0,0,0,0.55),inset -3px 0 3px -1px rgba(0,0,0,0.55)"></div><div style="position:absolute;left:819px;top:613px;width:16px;height:16px;box-sizing:border-box;border-radius:50%;border:1.5px solid #c4c4c4;background:linear-gradient(180deg,#4a5b4c 0%,#5b6c5d 30%,#2a3e2c 55%,#142a16 85%,#2a3e2c 100%);box-shadow:inset 0 0 0 1px #000"></div><div style="position:absolute;left:851px;top:614px;font-size:16px;line-height:16px;color:#a0a0a0;white-space:nowrap;">S2动作注释21</div><div style="position:absolute;left:371px;top:633px;width:16px;height:16px;box-sizing:border-box;border-radius:50%;border:1.5px solid #c4c4c4;background:linear-gradient(180deg,#3e5c6e 0%,#4f6d7e 30%,#1b3a52 55%,#0e2b44 85%,#1e3f58 100%);box-shadow:inset 0 0 0 1px #000"></div><div style="position:absolute;left:403px;top:634px;font-size:16px;line-height:16px;color:#a0a0a0;white-space:nowrap;">S2条件注释22</div><div style="position:absolute;left:611px;top:633px;width:48px;height:16px;box-sizing:border-box;border-top:1px solid #6a6a6a;border-left:1px solid #d8d8d8;border-right:1px solid #d8d8d8;border-bottom:1px solid #c8ccd0;background:linear-gradient(180deg,#5b6c5d 0%,#58695a 30%,#33473a 52%,#1a301c 72%,#142a16 86%,#4f614f 100%);box-shadow:inset 3px 0 3px -1px rgba(0,0,0,0.55),inset -3px 0 3px -1px rgba(0,0,0,0.55)"></div><div style="position:absolute;left:675px;top:633px;width:48px;height:16px;box-sizing:border-box;border-top:1px solid #6a6a6a;border-left:1px solid #d8d8d8;border-right:1px solid #d8d8d8;border-bottom:1px solid #c8ccd0;background:linear-gradient(180deg,#5b6c5d 0%,#58695a 30%,#33473a 52%,#1a301c 72%,#142a16 86%,#4f614f 100%);box-shadow:inset 3px 0 3px -1px rgba(0,0,0,0.55),inset -3px 0 3px -1px rgba(0,0,0,0.55)"></div><div style="position:absolute;left:755px;top:633px;width:48px;height:16px;box-sizing:border-box;border-top:1px solid #6a6a6a;border-left:1px solid #d8d8d8;border-right:1px solid #d8d8d8;border-bottom:1px solid #c8ccd0;background:linear-gradient(180deg,#5b6c5d 0%,#58695a 30%,#33473a 52%,#1a301c 72%,#142a16 86%,#4f614f 100%);box-shadow:inset 3px 0 3px -1px rgba(0,0,0,0.55),inset -3px 0 3px -1px rgba(0,0,0,0.55)"></div><div style="position:absolute;left:819px;top:633px;width:16px;height:16px;box-sizing:border-box;border-radius:50%;border:1.5px solid #c4c4c4;background:linear-gradient(180deg,#4a5b4c 0%,#5b6c5d 30%,#2a3e2c 55%,#142a16 85%,#2a3e2c 100%);box-shadow:inset 0 0 0 1px #000"></div><div style="position:absolute;left:851px;top:634px;font-size:16px;line-height:16px;color:#a0a0a0;white-space:nowrap;">S2动作注释22</div><div style="position:absolute;left:371px;top:653px;width:16px;height:16px;box-sizing:border-box;border-radius:50%;border:1.5px solid #c4c4c4;background:linear-gradient(180deg,#3e5c6e 0%,#4f6d7e 30%,#1b3a52 55%,#0e2b44 85%,#1e3f58 100%);box-shadow:inset 0 0 0 1px #000"></div><div style="position:absolute;left:403px;top:654px;font-size:16px;line-height:16px;color:#a0a0a0;white-space:nowrap;">S2条件注释23</div><div style="position:absolute;left:611px;top:653px;width:48px;height:16px;box-sizing:border-box;border-top:1px solid #6a6a6a;border-left:1px solid #d8d8d8;border-right:1px solid #d8d8d8;border-bottom:1px solid #c8ccd0;background:linear-gradient(180deg,#5b6c5d 0%,#58695a 30%,#33473a 52%,#1a301c 72%,#142a16 86%,#4f614f 100%);box-shadow:inset 3px 0 3px -1px rgba(0,0,0,0.55),inset -3px 0 3px -1px rgba(0,0,0,0.55)"></div><div style="position:absolute;left:675px;top:653px;width:48px;height:16px;box-sizing:border-box;border-top:1px solid #6a6a6a;border-left:1px solid #d8d8d8;border-right:1px solid #d8d8d8;border-bottom:1px solid #c8ccd0;background:linear-gradient(180deg,#5b6c5d 0%,#58695a 30%,#33473a 52%,#1a301c 72%,#142a16 86%,#4f614f 100%);box-shadow:inset 3px 0 3px -1px rgba(0,0,0,0.55),inset -3px 0 3px -1px rgba(0,0,0,0.55)"></div><div style="position:absolute;left:755px;top:653px;width:48px;height:16px;box-sizing:border-box;border-top:1px solid #6a6a6a;border-left:1px solid #d8d8d8;border-right:1px solid #d8d8d8;border-bottom:1px solid #c8ccd0;background:linear-gradient(180deg,#5b6c5d 0%,#58695a 30%,#33473a 52%,#1a301c 72%,#142a16 86%,#4f614f 100%);box-shadow:inset 3px 0 3px -1px rgba(0,0,0,0.55),inset -3px 0 3px -1px rgba(0,0,0,0.55)"></div><div style="position:absolute;left:819px;top:653px;width:16px;height:16px;box-sizing:border-box;border-radius:50%;border:1.5px solid #c4c4c4;background:linear-gradient(180deg,#4a5b4c 0%,#5b6c5d 30%,#2a3e2c 55%,#142a16 85%,#2a3e2c 100%);box-shadow:inset 0 0 0 1px #000"></div><div style="position:absolute;left:851px;top:654px;font-size:16px;line-height:16px;color:#a0a0a0;white-space:nowrap;">S2动作注释23</div><div style="position:absolute;left:371px;top:673px;width:16px;height:16px;box-sizing:border-box;border-radius:50%;border:1.5px solid #c4c4c4;background:linear-gradient(180deg,#3e5c6e 0%,#4f6d7e 30%,#1b3a52 55%,#0e2b44 85%,#1e3f58 100%);box-shadow:inset 0 0 0 1px #000"></div><div style="position:absolute;left:403px;top:674px;font-size:16px;line-height:16px;color:#a0a0a0;white-space:nowrap;">S2条件注释24</div><div style="position:absolute;left:611px;top:673px;width:48px;height:16px;box-sizing:border-box;border-top:1px solid #6a6a6a;border-left:1px solid #d8d8d8;border-right:1px solid #d8d8d8;border-bottom:1px solid #c8ccd0;background:linear-gradient(180deg,#5b6c5d 0%,#58695a 30%,#33473a 52%,#1a301c 72%,#142a16 86%,#4f614f 100%);box-shadow:inset 3px 0 3px -1px rgba(0,0,0,0.55),inset -3px 0 3px -1px rgba(0,0,0,0.55)"></div><div style="position:absolute;left:675px;top:673px;width:48px;height:16px;box-sizing:border-box;border-top:1px solid #6a6a6a;border-left:1px solid #d8d8d8;border-right:1px solid #d8d8d8;border-bottom:1px solid #c8ccd0;background:linear-gradient(180deg,#5b6c5d 0%,#58695a 30%,#33473a 52%,#1a301c 72%,#142a16 86%,#4f614f 100%);box-shadow:inset 3px 0 3px -1px rgba(0,0,0,0.55),inset -3px 0 3px -1px rgba(0,0,0,0.55)"></div><div style="position:absolute;left:755px;top:673px;width:48px;height:16px;box-sizing:border-box;border-top:1px solid #6a6a6a;border-left:1px solid #d8d8d8;border-right:1px solid #d8d8d8;border-bottom:1px solid #c8ccd0;background:linear-gradient(180deg,#5b6c5d 0%,#58695a 30%,#33473a 52%,#1a301c 72%,#142a16 86%,#4f614f 100%);box-shadow:inset 3px 0 3px -1px rgba(0,0,0,0.55),inset -3px 0 3px -1px rgba(0,0,0,0.55)"></div><div style="position:absolute;left:819px;top:673px;width:16px;height:16px;box-sizing:border-box;border-radius:50%;border:1.5px solid #c4c4c4;background:linear-gradient(180deg,#4a5b4c 0%,#5b6c5d 30%,#2a3e2c 55%,#142a16 85%,#2a3e2c 100%);box-shadow:inset 0 0 0 1px #000"></div><div style="position:absolute;left:851px;top:674px;font-size:16px;line-height:16px;color:#a0a0a0;white-space:nowrap;">S2动作注释24</div><div style="position:absolute;left:371px;top:693px;width:16px;height:16px;box-sizing:border-box;border-radius:50%;border:1.5px solid #c4c4c4;background:linear-gradient(180deg,#3e5c6e 0%,#4f6d7e 30%,#1b3a52 55%,#0e2b44 85%,#1e3f58 100%);box-shadow:inset 0 0 0 1px #000"></div><div style="position:absolute;left:403px;top:694px;font-size:16px;line-height:16px;color:#a0a0a0;white-space:nowrap;">S2条件注释25</div><div style="position:absolute;left:611px;top:693px;width:48px;height:16px;box-sizing:border-box;border-top:1px solid #6a6a6a;border-left:1px solid #d8d8d8;border-right:1px solid #d8d8d8;border-bottom:1px solid #c8ccd0;background:linear-gradient(180deg,#5b6c5d 0%,#58695a 30%,#33473a 52%,#1a301c 72%,#142a16 86%,#4f614f 100%);box-shadow:inset 3px 0 3px -1px rgba(0,0,0,0.55),inset -3px 0 3px -1px rgba(0,0,0,0.55)"></div><div style="position:absolute;left:675px;top:693px;width:48px;height:16px;box-sizing:border-box;border-top:1px solid #6a6a6a;border-left:1px solid #d8d8d8;border-right:1px solid #d8d8d8;border-bottom:1px solid #c8ccd0;background:linear-gradient(180deg,#5b6c5d 0%,#58695a 30%,#33473a 52%,#1a301c 72%,#142a16 86%,#4f614f 100%);box-shadow:inset 3px 0 3px -1px rgba(0,0,0,0.55),inset -3px 0 3px -1px rgba(0,0,0,0.55)"></div><div style="position:absolute;left:755px;top:693px;width:48px;height:16px;box-sizing:border-box;border-top:1px solid #6a6a6a;border-left:1px solid #d8d8d8;border-right:1px solid #d8d8d8;border-bottom:1px solid #c8ccd0;background:linear-gradient(180deg,#5b6c5d 0%,#58695a 30%,#33473a 52%,#1a301c 72%,#142a16 86%,#4f614f 100%);box-shadow:inset 3px 0 3px -1px rgba(0,0,0,0.55),inset -3px 0 3px -1px rgba(0,0,0,0.55)"></div><div style="position:absolute;left:819px;top:693px;width:16px;height:16px;box-sizing:border-box;border-radius:50%;border:1.5px solid #c4c4c4;background:linear-gradient(180deg,#4a5b4c 0%,#5b6c5d 30%,#2a3e2c 55%,#142a16 85%,#2a3e2c 100%);box-shadow:inset 0 0 0 1px #000"></div><div style="position:absolute;left:851px;top:694px;font-size:16px;line-height:16px;color:#a0a0a0;white-space:nowrap;">S2动作注释25</div><div style="position:absolute;left:371px;top:713px;width:16px;height:16px;box-sizing:border-box;border-radius:50%;border:1.5px solid #c4c4c4;background:linear-gradient(180deg,#3e5c6e 0%,#4f6d7e 30%,#1b3a52 55%,#0e2b44 85%,#1e3f58 100%);box-shadow:inset 0 0 0 1px #000"></div><div style="position:absolute;left:403px;top:714px;font-size:16px;line-height:16px;color:#a0a0a0;white-space:nowrap;">S2条件注释26</div><div style="position:absolute;left:611px;top:713px;width:48px;height:16px;box-sizing:border-box;border-top:1px solid #6a6a6a;border-left:1px solid #d8d8d8;border-right:1px solid #d8d8d8;border-bottom:1px solid #c8ccd0;background:linear-gradient(180deg,#5b6c5d 0%,#58695a 30%,#33473a 52%,#1a301c 72%,#142a16 86%,#4f614f 100%);box-shadow:inset 3px 0 3px -1px rgba(0,0,0,0.55),inset -3px 0 3px -1px rgba(0,0,0,0.55)"></div><div style="position:absolute;left:675px;top:713px;width:48px;height:16px;box-sizing:border-box;border-top:1px solid #6a6a6a;border-left:1px solid #d8d8d8;border-right:1px solid #d8d8d8;border-bottom:1px solid #c8ccd0;background:linear-gradient(180deg,#5b6c5d 0%,#58695a 30%,#33473a 52%,#1a301c 72%,#142a16 86%,#4f614f 100%);box-shadow:inset 3px 0 3px -1px rgba(0,0,0,0.55),inset -3px 0 3px -1px rgba(0,0,0,0.55)"></div><div style="position:absolute;left:755px;top:713px;width:48px;height:16px;box-sizing:border-box;border-top:1px solid #6a6a6a;border-left:1px solid #d8d8d8;border-right:1px solid #d8d8d8;border-bottom:1px solid #c8ccd0;background:linear-gradient(180deg,#5b6c5d 0%,#58695a 30%,#33473a 52%,#1a301c 72%,#142a16 86%,#4f614f 100%);box-shadow:inset 3px 0 3px -1px rgba(0,0,0,0.55),inset -3px 0 3px -1px rgba(0,0,0,0.55)"></div><div style="position:absolute;left:819px;top:713px;width:16px;height:16px;box-sizing:border-box;border-radius:50%;border:1.5px solid #c4c4c4;background:linear-gradient(180deg,#4a5b4c 0%,#5b6c5d 30%,#2a3e2c 55%,#142a16 85%,#2a3e2c 100%);box-shadow:inset 0 0 0 1px #000"></div><div style="position:absolute;left:851px;top:714px;font-size:16px;line-height:16px;color:#a0a0a0;white-space:nowrap;">S2动作注释26</div><div style="position:absolute;left:371px;top:733px;width:16px;height:16px;box-sizing:border-box;border-radius:50%;border:1.5px solid #c4c4c4;background:linear-gradient(180deg,#3e5c6e 0%,#4f6d7e 30%,#1b3a52 55%,#0e2b44 85%,#1e3f58 100%);box-shadow:inset 0 0 0 1px #000"></div><div style="position:absolute;left:403px;top:734px;font-size:16px;line-height:16px;color:#a0a0a0;white-space:nowrap;">S2条件注释27</div><div style="position:absolute;left:611px;top:733px;width:48px;height:16px;box-sizing:border-box;border-top:1px solid #6a6a6a;border-left:1px solid #d8d8d8;border-right:1px solid #d8d8d8;border-bottom:1px solid #c8ccd0;background:linear-gradient(180deg,#5b6c5d 0%,#58695a 30%,#33473a 52%,#1a301c 72%,#142a16 86%,#4f614f 100%);box-shadow:inset 3px 0 3px -1px rgba(0,0,0,0.55),inset -3px 0 3px -1px rgba(0,0,0,0.55)"></div><div style="position:absolute;left:675px;top:733px;width:48px;height:16px;box-sizing:border-box;border-top:1px solid #6a6a6a;border-left:1px solid #d8d8d8;border-right:1px solid #d8d8d8;border-bottom:1px solid #c8ccd0;background:linear-gradient(180deg,#5b6c5d 0%,#58695a 30%,#33473a 52%,#1a301c 72%,#142a16 86%,#4f614f 100%);box-shadow:inset 3px 0 3px -1px rgba(0,0,0,0.55),inset -3px 0 3px -1px rgba(0,0,0,0.55)"></div><div style="position:absolute;left:755px;top:733px;width:48px;height:16px;box-sizing:border-box;border-top:1px solid #6a6a6a;border-left:1px solid #d8d8d8;border-right:1px solid #d8d8d8;border-bottom:1px solid #c8ccd0;background:linear-gradient(180deg,#5b6c5d 0%,#58695a 30%,#33473a 52%,#1a301c 72%,#142a16 86%,#4f614f 100%);box-shadow:inset 3px 0 3px -1px rgba(0,0,0,0.55),inset -3px 0 3px -1px rgba(0,0,0,0.55)"></div><div style="position:absolute;left:819px;top:733px;width:16px;height:16px;box-sizing:border-box;border-radius:50%;border:1.5px solid #c4c4c4;background:linear-gradient(180deg,#4a5b4c 0%,#5b6c5d 30%,#2a3e2c 55%,#142a16 85%,#2a3e2c 100%);box-shadow:inset 0 0 0 1px #000"></div><div style="position:absolute;left:851px;top:734px;font-size:16px;line-height:16px;color:#a0a0a0;white-space:nowrap;">S2动作注释27</div><div style="position:absolute;left:371px;top:753px;width:16px;height:16px;box-sizing:border-box;border-radius:50%;border:1.5px solid #c4c4c4;background:linear-gradient(180deg,#3e5c6e 0%,#4f6d7e 30%,#1b3a52 55%,#0e2b44 85%,#1e3f58 100%);box-shadow:inset 0 0 0 1px #000"></div><div style="position:absolute;left:403px;top:754px;font-size:16px;line-height:16px;color:#a0a0a0;white-space:nowrap;">S2条件注释28</div><div style="position:absolute;left:611px;top:753px;width:48px;height:16px;box-sizing:border-box;border-top:1px solid #6a6a6a;border-left:1px solid #d8d8d8;border-right:1px solid #d8d8d8;border-bottom:1px solid #c8ccd0;background:linear-gradient(180deg,#5b6c5d 0%,#58695a 30%,#33473a 52%,#1a301c 72%,#142a16 86%,#4f614f 100%);box-shadow:inset 3px 0 3px -1px rgba(0,0,0,0.55),inset -3px 0 3px -1px rgba(0,0,0,0.55)"></div><div style="position:absolute;left:675px;top:753px;width:48px;height:16px;box-sizing:border-box;border-top:1px solid #6a6a6a;border-left:1px solid #d8d8d8;border-right:1px solid #d8d8d8;border-bottom:1px solid #c8ccd0;background:linear-gradient(180deg,#5b6c5d 0%,#58695a 30%,#33473a 52%,#1a301c 72%,#142a16 86%,#4f614f 100%);box-shadow:inset 3px 0 3px -1px rgba(0,0,0,0.55),inset -3px 0 3px -1px rgba(0,0,0,0.55)"></div><div style="position:absolute;left:755px;top:753px;width:48px;height:16px;box-sizing:border-box;border-top:1px solid #6a6a6a;border-left:1px solid #d8d8d8;border-right:1px solid #d8d8d8;border-bottom:1px solid #c8ccd0;background:linear-gradient(180deg,#5b6c5d 0%,#58695a 30%,#33473a 52%,#1a301c 72%,#142a16 86%,#4f614f 100%);box-shadow:inset 3px 0 3px -1px rgba(0,0,0,0.55),inset -3px 0 3px -1px rgba(0,0,0,0.55)"></div><div style="position:absolute;left:819px;top:753px;width:16px;height:16px;box-sizing:border-box;border-radius:50%;border:1.5px solid #c4c4c4;background:linear-gradient(180deg,#4a5b4c 0%,#5b6c5d 30%,#2a3e2c 55%,#142a16 85%,#2a3e2c 100%);box-shadow:inset 0 0 0 1px #000"></div><div style="position:absolute;left:851px;top:754px;font-size:16px;line-height:16px;color:#a0a0a0;white-space:nowrap;">S2动作注释28</div><div style="position:absolute;left:371px;top:773px;width:16px;height:16px;box-sizing:border-box;border-radius:50%;border:1.5px solid #c4c4c4;background:linear-gradient(180deg,#3e5c6e 0%,#4f6d7e 30%,#1b3a52 55%,#0e2b44 85%,#1e3f58 100%);box-shadow:inset 0 0 0 1px #000"></div><div style="position:absolute;left:403px;top:774px;font-size:16px;line-height:16px;color:#a0a0a0;white-space:nowrap;">S2条件注释29</div><div style="position:absolute;left:611px;top:773px;width:48px;height:16px;box-sizing:border-box;border-top:1px solid #6a6a6a;border-left:1px solid #d8d8d8;border-right:1px solid #d8d8d8;border-bottom:1px solid #c8ccd0;background:linear-gradient(180deg,#5b6c5d 0%,#58695a 30%,#33473a 52%,#1a301c 72%,#142a16 86%,#4f614f 100%);box-shadow:inset 3px 0 3px -1px rgba(0,0,0,0.55),inset -3px 0 3px -1px rgba(0,0,0,0.55)"></div><div style="position:absolute;left:675px;top:773px;width:48px;height:16px;box-sizing:border-box;border-top:1px solid #6a6a6a;border-left:1px solid #d8d8d8;border-right:1px solid #d8d8d8;border-bottom:1px solid #c8ccd0;background:linear-gradient(180deg,#5b6c5d 0%,#58695a 30%,#33473a 52%,#1a301c 72%,#142a16 86%,#4f614f 100%);box-shadow:inset 3px 0 3px -1px rgba(0,0,0,0.55),inset -3px 0 3px -1px rgba(0,0,0,0.55)"></div><div style="position:absolute;left:755px;top:773px;width:48px;height:16px;box-sizing:border-box;border-top:1px solid #6a6a6a;border-left:1px solid #d8d8d8;border-right:1px solid #d8d8d8;border-bottom:1px solid #c8ccd0;background:linear-gradient(180deg,#5b6c5d 0%,#58695a 30%,#33473a 52%,#1a301c 72%,#142a16 86%,#4f614f 100%);box-shadow:inset 3px 0 3px -1px rgba(0,0,0,0.55),inset -3px 0 3px -1px rgba(0,0,0,0.55)"></div><div style="position:absolute;left:819px;top:773px;width:16px;height:16px;box-sizing:border-box;border-radius:50%;border:1.5px solid #c4c4c4;background:linear-gradient(180deg,#4a5b4c 0%,#5b6c5d 30%,#2a3e2c 55%,#142a16 85%,#2a3e2c 100%);box-shadow:inset 0 0 0 1px #000"></div><div style="position:absolute;left:851px;top:774px;font-size:16px;line-height:16px;color:#a0a0a0;white-space:nowrap;">S2动作注释29</div><div style="position:absolute;left:371px;top:793px;width:16px;height:16px;box-sizing:border-box;border-radius:50%;border:1.5px solid #c4c4c4;background:linear-gradient(180deg,#3e5c6e 0%,#4f6d7e 30%,#1b3a52 55%,#0e2b44 85%,#1e3f58 100%);box-shadow:inset 0 0 0 1px #000"></div><div style="position:absolute;left:403px;top:794px;font-size:16px;line-height:16px;color:#a0a0a0;white-space:nowrap;">S2条件注释30</div><div style="position:absolute;left:611px;top:793px;width:48px;height:16px;box-sizing:border-box;border-top:1px solid #6a6a6a;border-left:1px solid #d8d8d8;border-right:1px solid #d8d8d8;border-bottom:1px solid #c8ccd0;background:linear-gradient(180deg,#5b6c5d 0%,#58695a 30%,#33473a 52%,#1a301c 72%,#142a16 86%,#4f614f 100%);box-shadow:inset 3px 0 3px -1px rgba(0,0,0,0.55),inset -3px 0 3px -1px rgba(0,0,0,0.55)"></div><div style="position:absolute;left:675px;top:793px;width:48px;height:16px;box-sizing:border-box;border-top:1px solid #6a6a6a;border-left:1px solid #d8d8d8;border-right:1px solid #d8d8d8;border-bottom:1px solid #c8ccd0;background:linear-gradient(180deg,#5b6c5d 0%,#58695a 30%,#33473a 52%,#1a301c 72%,#142a16 86%,#4f614f 100%);box-shadow:inset 3px 0 3px -1px rgba(0,0,0,0.55),inset -3px 0 3px -1px rgba(0,0,0,0.55)"></div><div style="position:absolute;left:755px;top:793px;width:48px;height:16px;box-sizing:border-box;border-top:1px solid #6a6a6a;border-left:1px solid #d8d8d8;border-right:1px solid #d8d8d8;border-bottom:1px solid #c8ccd0;background:linear-gradient(180deg,#5b6c5d 0%,#58695a 30%,#33473a 52%,#1a301c 72%,#142a16 86%,#4f614f 100%);box-shadow:inset 3px 0 3px -1px rgba(0,0,0,0.55),inset -3px 0 3px -1px rgba(0,0,0,0.55)"></div><div style="position:absolute;left:819px;top:793px;width:16px;height:16px;box-sizing:border-box;border-radius:50%;border:1.5px solid #c4c4c4;background:linear-gradient(180deg,#4a5b4c 0%,#5b6c5d 30%,#2a3e2c 55%,#142a16 85%,#2a3e2c 100%);box-shadow:inset 0 0 0 1px #000"></div><div style="position:absolute;left:851px;top:794px;font-size:16px;line-height:16px;color:#a0a0a0;white-space:nowrap;">S2动作注释30</div><div style="position:absolute;left:371px;top:813px;width:16px;height:16px;box-sizing:border-box;border-radius:50%;border:1.5px solid #c4c4c4;background:linear-gradient(180deg,#3e5c6e 0%,#4f6d7e 30%,#1b3a52 55%,#0e2b44 85%,#1e3f58 100%);box-shadow:inset 0 0 0 1px #000"></div><div style="position:absolute;left:403px;top:814px;font-size:16px;line-height:16px;color:#a0a0a0;white-space:nowrap;">S2条件注释31</div><div style="position:absolute;left:611px;top:813px;width:48px;height:16px;box-sizing:border-box;border-top:1px solid #6a6a6a;border-left:1px solid #d8d8d8;border-right:1px solid #d8d8d8;border-bottom:1px solid #c8ccd0;background:linear-gradient(180deg,#5b6c5d 0%,#58695a 30%,#33473a 52%,#1a301c 72%,#142a16 86%,#4f614f 100%);box-shadow:inset 3px 0 3px -1px rgba(0,0,0,0.55),inset -3px 0 3px -1px rgba(0,0,0,0.55)"></div><div style="position:absolute;left:675px;top:813px;width:48px;height:16px;box-sizing:border-box;border-top:1px solid #6a6a6a;border-left:1px solid #d8d8d8;border-right:1px solid #d8d8d8;border-bottom:1px solid #c8ccd0;background:linear-gradient(180deg,#5b6c5d 0%,#58695a 30%,#33473a 52%,#1a301c 72%,#142a16 86%,#4f614f 100%);box-shadow:inset 3px 0 3px -1px rgba(0,0,0,0.55),inset -3px 0 3px -1px rgba(0,0,0,0.55)"></div><div style="position:absolute;left:755px;top:813px;width:48px;height:16px;box-sizing:border-box;border-top:1px solid #6a6a6a;border-left:1px solid #d8d8d8;border-right:1px solid #d8d8d8;border-bottom:1px solid #c8ccd0;background:linear-gradient(180deg,#5b6c5d 0%,#58695a 30%,#33473a 52%,#1a301c 72%,#142a16 86%,#4f614f 100%);box-shadow:inset 3px 0 3px -1px rgba(0,0,0,0.55),inset -3px 0 3px -1px rgba(0,0,0,0.55)"></div><div style="position:absolute;left:819px;top:813px;width:16px;height:16px;box-sizing:border-box;border-radius:50%;border:1.5px solid #c4c4c4;background:linear-gradient(180deg,#4a5b4c 0%,#5b6c5d 30%,#2a3e2c 55%,#142a16 85%,#2a3e2c 100%);box-shadow:inset 0 0 0 1px #000"></div><div style="position:absolute;left:851px;top:814px;font-size:16px;line-height:16px;color:#a0a0a0;white-space:nowrap;">S2动作注释31</div><div style="position:absolute;left:371px;top:833px;width:16px;height:16px;box-sizing:border-box;border-radius:50%;border:1.5px solid #c4c4c4;background:linear-gradient(180deg,#3e5c6e 0%,#4f6d7e 30%,#1b3a52 55%,#0e2b44 85%,#1e3f58 100%);box-shadow:inset 0 0 0 1px #000"></div><div style="position:absolute;left:403px;top:834px;font-size:16px;line-height:16px;color:#a0a0a0;white-space:nowrap;">S2条件注释32</div><div style="position:absolute;left:611px;top:833px;width:48px;height:16px;box-sizing:border-box;border-top:1px solid #6a6a6a;border-left:1px solid #d8d8d8;border-right:1px solid #d8d8d8;border-bottom:1px solid #c8ccd0;background:linear-gradient(180deg,#5b6c5d 0%,#58695a 30%,#33473a 52%,#1a301c 72%,#142a16 86%,#4f614f 100%);box-shadow:inset 3px 0 3px -1px rgba(0,0,0,0.55),inset -3px 0 3px -1px rgba(0,0,0,0.55)"></div><div style="position:absolute;left:675px;top:833px;width:48px;height:16px;box-sizing:border-box;border-top:1px solid #6a6a6a;border-left:1px solid #d8d8d8;border-right:1px solid #d8d8d8;border-bottom:1px solid #c8ccd0;background:linear-gradient(180deg,#5b6c5d 0%,#58695a 30%,#33473a 52%,#1a301c 72%,#142a16 86%,#4f614f 100%);box-shadow:inset 3px 0 3px -1px rgba(0,0,0,0.55),inset -3px 0 3px -1px rgba(0,0,0,0.55)"></div><div style="position:absolute;left:755px;top:833px;width:48px;height:16px;box-sizing:border-box;border-top:1px solid #6a6a6a;border-left:1px solid #d8d8d8;border-right:1px solid #d8d8d8;border-bottom:1px solid #c8ccd0;background:linear-gradient(180deg,#5b6c5d 0%,#58695a 30%,#33473a 52%,#1a301c 72%,#142a16 86%,#4f614f 100%);box-shadow:inset 3px 0 3px -1px rgba(0,0,0,0.55),inset -3px 0 3px -1px rgba(0,0,0,0.55)"></div><div style="position:absolute;left:819px;top:833px;width:16px;height:16px;box-sizing:border-box;border-radius:50%;border:1.5px solid #c4c4c4;background:linear-gradient(180deg,#4a5b4c 0%,#5b6c5d 30%,#2a3e2c 55%,#142a16 85%,#2a3e2c 100%);box-shadow:inset 0 0 0 1px #000"></div><div style="position:absolute;left:851px;top:834px;font-size:16px;line-height:16px;color:#a0a0a0;white-space:nowrap;">S2动作注释32</div><div style="position:absolute;left:36px;top:226px;width:128px;height:47px;"><div style="position:absolute;left:0px;top:0px;width:128px;height:47px;background:linear-gradient(180deg,#8d9096 0%,#e8eaee 6%,#f7f8fa 50%,#c4c7cc 92%,#8a8d92 100%)"></div><div style="position:absolute;left:0px;top:0px;width:6px;height:47px;background:linear-gradient(90deg,#6c6f74 0%,#f2f4f6 35%,#d6d9dd 70%,#a3a6ab 100%)"></div><div style="position:absolute;left:122px;top:0px;width:6px;height:47px;background:linear-gradient(90deg,#a3a6ab 0%,#d6d9dd 30%,#f2f4f6 65%,#6c6f74 100%)"></div><div style="position:absolute;left:6px;top:3px;width:116px;height:40px;background:#1e1e1e"></div><div style="position:absolute;left:7px;top:4px;width:114px;height:38px;background:linear-gradient(180deg,#555 0%,#3c3c3c 50%,#555 100%)"></div><div style="position:absolute;left:11px;top:5px;width:106px;height:37px;background:linear-gradient(180deg,#3b3b3b 0%,#373737 46%,#1b1b1b 46%,#1e1e1e 100%);box-shadow:inset 0 0 0 1px #5e5e5e,inset 0 0 0 2px #3c3c3c"></div><div style="position:absolute;left:0px;top:15px;width:128px;font-size:16px;line-height:16px;color:#a0a0a0;white-space:nowrap;text-align:center;">工位1</div></div><div style="position:absolute;left:36px;top:278px;width:128px;height:47px;"><div style="position:absolute;left:0px;top:0px;width:128px;height:47px;background:linear-gradient(180deg,#8d9096 0%,#e8eaee 6%,#f7f8fa 50%,#c4c7cc 92%,#8a8d92 100%)"></div><div style="position:absolute;left:0px;top:0px;width:6px;height:47px;background:linear-gradient(90deg,#6c6f74 0%,#f2f4f6 35%,#d6d9dd 70%,#a3a6ab 100%)"></div><div style="position:absolute;left:122px;top:0px;width:6px;height:47px;background:linear-gradient(90deg,#a3a6ab 0%,#d6d9dd 30%,#f2f4f6 65%,#6c6f74 100%)"></div><div style="position:absolute;left:6px;top:3px;width:116px;height:40px;background:#5a5a5a"></div><div style="position:absolute;left:7px;top:4px;width:114px;height:38px;background:linear-gradient(180deg,#c8c8c8 0%,#9c9c9c 100%)"></div><div style="position:absolute;left:11px;top:5px;width:106px;height:37px;background:radial-gradient(ellipse 70% 75% at 50% 50%,#ffffff 0%,#fdfdfd 55%,#d8d8d8 100%);box-shadow:inset 0 0 0 1px #9a9a9a"></div><div style="position:absolute;left:0px;top:15px;width:128px;font-size:16px;line-height:16px;color:#000;white-space:nowrap;text-align:center;">工位2</div></div><div style="position:absolute;left:36px;top:330px;width:128px;height:47px;"><div style="position:absolute;left:0px;top:0px;width:128px;height:47px;background:linear-gradient(180deg,#8d9096 0%,#e8eaee 6%,#f7f8fa 50%,#c4c7cc 92%,#8a8d92 100%)"></div><div style="position:absolute;left:0px;top:0px;width:6px;height:47px;background:linear-gradient(90deg,#6c6f74 0%,#f2f4f6 35%,#d6d9dd 70%,#a3a6ab 100%)"></div><div style="position:absolute;left:122px;top:0px;width:6px;height:47px;background:linear-gradient(90deg,#a3a6ab 0%,#d6d9dd 30%,#f2f4f6 65%,#6c6f74 100%)"></div><div style="position:absolute;left:6px;top:3px;width:116px;height:40px;background:#1e1e1e"></div><div style="position:absolute;left:7px;top:4px;width:114px;height:38px;background:linear-gradient(180deg,#555 0%,#3c3c3c 50%,#555 100%)"></div><div style="position:absolute;left:11px;top:5px;width:106px;height:37px;background:linear-gradient(180deg,#3b3b3b 0%,#373737 46%,#1b1b1b 46%,#1e1e1e 100%);box-shadow:inset 0 0 0 1px #5e5e5e,inset 0 0 0 2px #3c3c3c"></div><div style="position:absolute;left:0px;top:15px;width:128px;font-size:16px;line-height:16px;color:#a0a0a0;white-space:nowrap;text-align:center;">工位3</div></div><div style="position:absolute;left:36px;top:382px;width:128px;height:47px;"><div style="position:absolute;left:0px;top:0px;width:128px;height:47px;background:linear-gradient(180deg,#8d9096 0%,#e8eaee 6%,#f7f8fa 50%,#c4c7cc 92%,#8a8d92 100%)"></div><div style="position:absolute;left:0px;top:0px;width:6px;height:47px;background:linear-gradient(90deg,#6c6f74 0%,#f2f4f6 35%,#d6d9dd 70%,#a3a6ab 100%)"></div><div style="position:absolute;left:122px;top:0px;width:6px;height:47px;background:linear-gradient(90deg,#a3a6ab 0%,#d6d9dd 30%,#f2f4f6 65%,#6c6f74 100%)"></div><div style="position:absolute;left:6px;top:3px;width:116px;height:40px;background:#1e1e1e"></div><div style="position:absolute;left:7px;top:4px;width:114px;height:38px;background:linear-gradient(180deg,#555 0%,#3c3c3c 50%,#555 100%)"></div><div style="position:absolute;left:11px;top:5px;width:106px;height:37px;background:linear-gradient(180deg,#3b3b3b 0%,#373737 46%,#1b1b1b 46%,#1e1e1e 100%);box-shadow:inset 0 0 0 1px #5e5e5e,inset 0 0 0 2px #3c3c3c"></div><div style="position:absolute;left:0px;top:15px;width:128px;font-size:16px;line-height:16px;color:#a0a0a0;white-space:nowrap;text-align:center;">工位4</div></div><div style="position:absolute;left:36px;top:434px;width:128px;height:47px;"><div style="position:absolute;left:0px;top:0px;width:128px;height:47px;background:linear-gradient(180deg,#8d9096 0%,#e8eaee 6%,#f7f8fa 50%,#c4c7cc 92%,#8a8d92 100%)"></div><div style="position:absolute;left:0px;top:0px;width:6px;height:47px;background:linear-gradient(90deg,#6c6f74 0%,#f2f4f6 35%,#d6d9dd 70%,#a3a6ab 100%)"></div><div style="position:absolute;left:122px;top:0px;width:6px;height:47px;background:linear-gradient(90deg,#a3a6ab 0%,#d6d9dd 30%,#f2f4f6 65%,#6c6f74 100%)"></div><div style="position:absolute;left:6px;top:3px;width:116px;height:40px;background:#1e1e1e"></div><div style="position:absolute;left:7px;top:4px;width:114px;height:38px;background:linear-gradient(180deg,#555 0%,#3c3c3c 50%,#555 100%)"></div><div style="position:absolute;left:11px;top:5px;width:106px;height:37px;background:linear-gradient(180deg,#3b3b3b 0%,#373737 46%,#1b1b1b 46%,#1e1e1e 100%);box-shadow:inset 0 0 0 1px #5e5e5e,inset 0 0 0 2px #3c3c3c"></div><div style="position:absolute;left:0px;top:15px;width:128px;font-size:16px;line-height:16px;color:#a0a0a0;white-space:nowrap;text-align:center;">工位5</div></div><div style="position:absolute;left:259px;top:225px;width:97px;height:16px;"><div style="position:absolute;left:0px;top:0px;width:97px;height:16px;box-sizing:border-box;border-top:1px solid #8d8d8d;border-bottom:1px solid #8d8d8d;border-left:3px solid #d8d8d8;border-right:3px solid #d8d8d8;background:radial-gradient(ellipse 60% 65% at 50% 55%,#e2ffe2 0%,#d0ffd0 40%,#8ef78e 80%,#3ee83e 100%)"></div><div style="position:absolute;left:0px;top:-1px;width:97px;font-size:16px;line-height:16px;color:#a0a0a0;white-space:nowrap;text-align:center;">自动模式</div></div><div style="position:absolute;left:259px;top:245px;width:97px;height:16px;"><div style="position:absolute;left:0px;top:0px;width:97px;height:16px;box-sizing:border-box;border-top:1px solid #8d8d8d;border-bottom:1px solid #8d8d8d;border-left:3px solid #d8d8d8;border-right:3px solid #d8d8d8;background:linear-gradient(180deg,#5b6c5d 0%,#58695a 30%,#33473a 52%,#1a301c 72%,#142a16 86%,#4f614f 100%)"></div><div style="position:absolute;left:0px;top:-1px;width:97px;font-size:16px;line-height:16px;color:#a0a0a0;white-space:nowrap;text-align:center;">单步模式</div></div><div style="position:absolute;left:259px;top:265px;width:97px;height:16px;"><div style="position:absolute;left:0px;top:0px;width:97px;height:16px;box-sizing:border-box;border-top:1px solid #8d8d8d;border-bottom:1px solid #8d8d8d;border-left:3px solid #d8d8d8;border-right:3px solid #d8d8d8;background:linear-gradient(180deg,#5b6c5d 0%,#58695a 30%,#33473a 52%,#1a301c 72%,#142a16 86%,#4f614f 100%)"></div><div style="position:absolute;left:0px;top:-1px;width:97px;font-size:16px;line-height:16px;color:#a0a0a0;white-space:nowrap;text-align:center;">单步转移</div></div><div style="position:absolute;left:259px;top:285px;width:97px;height:16px;"><div style="position:absolute;left:0px;top:0px;width:97px;height:16px;box-sizing:border-box;border-top:1px solid #8d8d8d;border-bottom:1px solid #8d8d8d;border-left:3px solid #d8d8d8;border-right:3px solid #d8d8d8;background:linear-gradient(180deg,#5b6c5d 0%,#58695a 30%,#33473a 52%,#1a301c 72%,#142a16 86%,#4f614f 100%)"></div><div style="position:absolute;left:0px;top:-1px;width:97px;font-size:16px;line-height:16px;color:#a0a0a0;white-space:nowrap;text-align:center;">编辑模式</div></div><div style="position:absolute;left:259px;top:305px;width:97px;height:16px;"><div style="position:absolute;left:0px;top:0px;width:97px;height:16px;box-sizing:border-box;border-top:1px solid #8d8d8d;border-bottom:1px solid #8d8d8d;border-left:3px solid #d8d8d8;border-right:3px solid #d8d8d8;background:radial-gradient(ellipse 60% 65% at 50% 55%,#e2ffe2 0%,#d0ffd0 40%,#8ef78e 80%,#3ee83e 100%)"></div><div style="position:absolute;left:0px;top:-1px;width:97px;font-size:16px;line-height:16px;color:#a0a0a0;white-space:nowrap;text-align:center;">监控超时选择</div></div><div style="position:absolute;left:259px;top:325px;width:97px;height:16px;"><div style="position:absolute;left:0px;top:0px;width:97px;height:16px;box-sizing:border-box;border-top:1px solid #8d8d8d;border-bottom:1px solid #8d8d8d;border-left:3px solid #d8d8d8;border-right:3px solid #d8d8d8;background:linear-gradient(180deg,#5b6c5d 0%,#58695a 30%,#33473a 52%,#1a301c 72%,#142a16 86%,#4f614f 100%)"></div><div style="position:absolute;left:0px;top:-1px;width:97px;font-size:16px;line-height:16px;color:#a0a0a0;white-space:nowrap;text-align:center;">转移条件OK</div></div><div style="position:absolute;left:259px;top:345px;width:97px;height:16px;"><div style="position:absolute;left:0px;top:0px;width:97px;height:16px;box-sizing:border-box;border-top:1px solid #8d8d8d;border-bottom:1px solid #8d8d8d;border-left:3px solid #d8d8d8;border-right:3px solid #d8d8d8;background:radial-gradient(ellipse 60% 65% at 50% 55%,#e2ffe2 0%,#d0ffd0 40%,#8ef78e 80%,#3ee83e 100%)"></div><div style="position:absolute;left:0px;top:-1px;width:97px;font-size:16px;line-height:16px;color:#a0a0a0;white-space:nowrap;text-align:center;">异常</div></div><div style="position:absolute;left:259px;top:365px;width:97px;height:16px;"><div style="position:absolute;left:0px;top:0px;width:97px;height:16px;box-sizing:border-box;border-top:1px solid #8d8d8d;border-bottom:1px solid #8d8d8d;border-left:3px solid #d8d8d8;border-right:3px solid #d8d8d8;background:linear-gradient(180deg,#5b6c5d 0%,#58695a 30%,#33473a 52%,#1a301c 72%,#142a16 86%,#4f614f 100%)"></div><div style="position:absolute;left:0px;top:-1px;width:97px;font-size:16px;line-height:16px;color:#a0a0a0;white-space:nowrap;text-align:center;">异常复位</div></div><div style="position:absolute;left:259px;top:385px;width:97px;height:16px;"><div style="position:absolute;left:0px;top:0px;width:97px;height:16px;box-sizing:border-box;border-top:1px solid #8d8d8d;border-bottom:1px solid #8d8d8d;border-left:3px solid #d8d8d8;border-right:3px solid #d8d8d8;background:linear-gradient(180deg,#5b6c5d 0%,#58695a 30%,#33473a 52%,#1a301c 72%,#142a16 86%,#4f614f 100%)"></div><div style="position:absolute;left:0px;top:-1px;width:97px;font-size:16px;line-height:16px;color:#a0a0a0;white-space:nowrap;text-align:center;">初始化</div></div><div style="position:absolute;left:115px;top:705px;width:177px;height:17px;background:#ff0000"><div style="position:absolute;left:0px;top:0px;width:177px;font-size:16px;line-height:16px;color:#a0a0a0;white-space:nowrap;text-align:center;">异常发生</div></div><div style="position:absolute;left:115px;top:725px;font-size:16px;line-height:16px;color:#a0a0a0;white-space:nowrap;">S2步2注释</div><div style="position:absolute;left:203px;top:745px;font-size:16px;line-height:16px;color:#a0a0a0;white-space:nowrap;">10</div></div></div><div style="position:absolute;left:17px;top:866px;width:1028px;height:20px;background:#f0f0f0;border-top:1px solid #e4e4e4;box-sizing:border-box"></div><div style="position:absolute;left:19px;top:871px;font-size:12px;line-height:12px;color:#000;white-space:nowrap;">就绪</div><div style="position:absolute;right:1161px;top:871px;font-size:12px;line-height:12px;color:#000;white-space:nowrap;text-align:right;">GX Simulator2</div><div style="position:absolute;left:766px;top:868px;width:1px;height:17px;background:#d0d0d0"></div><div style="position:absolute;left:896px;top:868px;width:1px;height:17px;background:#d0d0d0"></div><div style="position:absolute;left:952px;top:868px;width:1px;height:17px;background:#d0d0d0"></div><div style="position:absolute;left:1025px;top:868px;width:1px;height:17px;background:#d0d0d0"></div><div style="position:absolute;left:771px;top:871px;font-size:12px;line-height:12px;color:#000;white-space:nowrap;">MELSEC</div><div style="position:absolute;left:1040px;top:875px;width:2px;height:2px;background:#b8b8b8"></div><div style="position:absolute;left:1040px;top:879px;width:2px;height:2px;background:#b8b8b8"></div><div style="position:absolute;left:1036px;top:879px;width:2px;height:2px;background:#b8b8b8"></div><div style="position:absolute;left:1040px;top:883px;width:2px;height:2px;background:#b8b8b8"></div><div style="position:absolute;left:1036px;top:883px;width:2px;height:2px;background:#b8b8b8"></div><div style="position:absolute;left:1032px;top:883px;width:2px;height:2px;background:#b8b8b8"></div><div style="position:absolute;left:1049px;top:16px;width:251px;height:204px;background:#f0f0f0;border:1px solid #9a9a9a;box-sizing:border-box;box-shadow:1px 2px 8px rgba(0,0,0,0.28)"></div><div style="position:absolute;left:1050px;top:17px;width:249px;height:42px;background:#fff"></div><svg width="16" height="16" viewBox="0 0 16 16" style="position:absolute;left:1052px;top:20px"><rect x="0" y="0" width="16" height="16" fill="#7a7a7a"/><rect x="0" y="0" width="14.5" height="14.5" fill="#d6d6c2"/><rect x="0" y="1" width="14" height="12.5" fill="#0000ff"/><rect x="3.2" y="4" width="7.5" height="6" fill="#d8d8c8"/><rect x="4" y="4.8" width="1.3" height="4.4" fill="#ff0000"/><rect x="6" y="4.8" width="1.2" height="4.4" fill="#808080"/><rect x="8.2" y="4.8" width="1.2" height="4.4" fill="#808080"/></svg><div style="position:absolute;left:1074px;top:21px;font-size:13px;line-height:13px;color:#9a9a9a;white-space:nowrap;">GX Simulator2</div><div style="position:absolute;left:1181px;top:28px;width:10px;height:1px;background:#777"></div><div style="position:absolute;left:1226px;top:23px;width:10px;height:10px;border:1px solid #cfcfcf;box-sizing:border-box"></div><svg width="12" height="12" viewBox="0 0 12 12" style="position:absolute;left:1271px;top:22px"><path d="M1 1L11 11M11 1L1 11" stroke="#cfcfcf" stroke-width="1"/></svg><div style="position:absolute;left:1056px;top:44px;font-size:12px;line-height:12px;color:#222;white-space:nowrap;">工具(T)</div><div style="position:absolute;left:1109px;top:44px;font-size:12px;line-height:12px;color:#222;white-space:nowrap;">选项(O)</div><div style="position:absolute;left:1064px;top:78px;width:209px;height:32px;box-sizing:border-box;border:1px solid #c4c4c4;box-shadow:inset 1px 1px 0 #fff"></div><div style="position:absolute;left:1070px;top:72px;width:28px;height:14px;background:#f0f0f0"><div style="position:absolute;left:2px;top:1px;font-size:12px;line-height:12px;color:#000;white-space:nowrap;">开关</div></div><div style="position:absolute;left:1080px;top:91px;width:11px;height:11px;box-sizing:border-box;border-radius:50%;border:1px solid #777;border-right-color:#e8e8e8;border-bottom-color:#e8e8e8;background:#fff;box-shadow:inset 1px 1px 0 #bbb"></div><div style="position:absolute;left:1097px;top:92px;font-size:10.5px;line-height:10.5px;color:#a0a0a0;white-space:nowrap;letter-spacing:-0.2px">RESET</div><div style="position:absolute;left:1146px;top:91px;width:11px;height:11px;box-sizing:border-box;border-radius:50%;border:1px solid #777;border-right-color:#e8e8e8;border-bottom-color:#e8e8e8;background:#fff;box-shadow:inset 1px 1px 0 #bbb"></div><div style="position:absolute;left:1162px;top:92px;font-size:10.5px;line-height:10.5px;color:#000;white-space:nowrap;letter-spacing:-0.2px">STOP</div><div style="position:absolute;left:1212px;top:90px;width:11px;height:11px;box-sizing:border-box;border-radius:50%;border:1px solid #777;border-right-color:#e8e8e8;border-bottom-color:#e8e8e8;background:#fff;box-shadow:inset 1px 1px 0 #bbb"><div style="position:absolute;left:3px;top:3px;width:4px;height:4px;background:#000;border-radius:50%"></div></div><div style="position:absolute;left:1228px;top:92px;font-size:10.5px;line-height:10.5px;color:#000;white-space:nowrap;letter-spacing:-0.2px">RUN</div><div style="position:absolute;left:1064px;top:121px;width:209px;height:91px;box-sizing:border-box;border:1px solid #c4c4c4;box-shadow:inset 1px 1px 0 #fff"></div><div style="position:absolute;left:1070px;top:115px;width:26px;height:14px;background:#f0f0f0"><div style="position:absolute;left:2px;top:1px;font-size:12px;line-height:12px;color:#000;white-space:nowrap;">LED</div></div><div style="position:absolute;left:1112px;top:129px;width:114px;height:77px;background:#808080"></div><div style="position:absolute;right:757px;top:133px;font-size:13px;line-height:13px;color:#f0f0f0;white-space:nowrap;text-align:right;">MODE</div><div style="position:absolute;left:1181px;top:134px;width:25px;height:10px;background:#00ff00"></div><div style="position:absolute;right:757px;top:151px;font-size:13px;line-height:13px;color:#f0f0f0;white-space:nowrap;text-align:right;">RUN</div><div style="position:absolute;left:1181px;top:152px;width:25px;height:10px;background:#00ff00"></div><div style="position:absolute;right:755px;top:169px;font-size:13px;line-height:13px;color:#f0f0f0;white-space:nowrap;text-align:right;">ERR.</div><div style="position:absolute;left:1181px;top:170px;width:25px;height:10px;background:#c0c0c0"></div><div style="position:absolute;right:757px;top:188px;font-size:13px;line-height:13px;color:#f0f0f0;white-space:nowrap;text-align:right;">USER</div><div style="position:absolute;left:1181px;top:189px;width:25px;height:10px;background:#c0c0c0"></div></div></div><div style="position:absolute;left:1399px;top:588px;font-size:11px;line-height:11px;color:#777;white-space:nowrap;"><span style="color:#777">&#8629;</span></div><div style="position:absolute;left:0px;top:1018px;width:1920px;height:22px;background:#f1f1f1;border-top:1px solid #d4d4d4;box-sizing:border-box"></div><div style="position:absolute;left:8px;top:1022px;font-size:12px;line-height:12px;color:#444;white-space:nowrap;">第 4 页，共 4 页</div><div style="position:absolute;left:117px;top:1022px;font-size:12px;line-height:12px;color:#444;white-space:nowrap;">59 个字</div><svg width="14" height="12" viewBox="0 0 14 12" style="position:absolute;left:178px;top:1022px"><path d="M1 1h6v10h-6z" fill="none" stroke="#555"/><path d="M9 3l4 5M13 3l-4 5" stroke="#555"/></svg><div style="position:absolute;left:210px;top:1022px;font-size:12px;line-height:12px;color:#444;white-space:nowrap;">中文(中国)</div><div style="position:absolute;left:1667px;top:1019px;width:38px;height:21px;background:#d5d5d5"></div><svg width="14" height="14" viewBox="0 0 14 14" style="position:absolute;left:1641px;top:1022px"><path d="M0.5 0.5h5.5l1 1 1-1h5.5v11h-5.5l-1 1-1-1h-5.5z" fill="none" stroke="#555"/><path d="M7 1.5v11.5" stroke="#555"/><path d="M2 3.5h3.5M2 5.5h3.5M2 7.5h3.5M2 9.5h3.5M8.5 3.5h3.5M8.5 5.5h3.5M8.5 7.5h3.5M8.5 9.5h3.5" stroke="#777"/></svg><svg width="14" height="13" viewBox="0 0 14 13" style="position:absolute;left:1679px;top:1022px"><rect x="0.5" y="0.5" width="13" height="12" fill="none" stroke="#555"/><path d="M2.5 2.5h9M2.5 4.5h9M2.5 6.5h9M2.5 8.5h9M2.5 10.5h9" stroke="#666"/></svg><svg width="16" height="14" viewBox="0 0 16 14" style="position:absolute;left:1716px;top:1022px"><rect x="0.5" y="0.5" width="12" height="10" fill="none" stroke="#555"/><path d="M2 2.5h9M2 4.5h6M2 6.5h5" stroke="#666"/><circle cx="11.5" cy="9.5" r="3.5" fill="#777"/><path d="M9 9.5h5M11.5 7v5" stroke="#f1f1f1" stroke-width="0.8"/></svg><div style="position:absolute;left:1748px;top:1028px;width:7px;height:1px;background:#444"></div><div style="position:absolute;left:1758px;top:1028px;width:100px;height:1px;background:#999"></div><div style="position:absolute;left:1806px;top:1023px;width:4px;height:11px;background:#555"></div><div style="position:absolute;left:1861px;top:1028px;width:8px;height:1px;background:#444"></div><div style="position:absolute;left:1864px;top:1025px;width:1px;height:7px;background:#444"></div><div style="position:absolute;left:1880px;top:1022px;font-size:12px;line-height:12px;color:#444;white-space:nowrap;">100%</div><div style="position:absolute;left:0px;top:1040px;width:1920px;height:40px;background:#111b25"></div><svg width="18" height="18" viewBox="0 0 18 18" style="position:absolute;left:15px;top:1051px"><path d="M0 2.5l7.2-1v7h-7.2zM8.2 1.3l9.8-1.3v8.5h-9.8zM0 9.5h7.2v7l-7.2-1zM8.2 9.5h9.8v8.5l-9.8-1.3z" fill="#fff"/></svg><div style="position:absolute;left:48px;top:1040px;width:344px;height:40px;background:#f3f3f3"></div><div style="position:absolute;left:58px;top:1050px;width:21px;height:21px;box-sizing:border-box;border:3px solid #111;border-radius:50%"></div><div style="position:absolute;left:88px;top:1053px;font-size:14px;line-height:14px;color:#333;white-space:nowrap;">在这里输入你要搜索的内容</div><svg width="12" height="18" viewBox="0 0 12 18" style="position:absolute;left:365px;top:1051px"><rect x="3.5" y="1" width="5" height="10" rx="2.5" fill="none" stroke="#333" stroke-width="1.3"/><path d="M1.5 8c0 3 2 5 4.5 5s4.5-2 4.5-5M6 13v4M3 17h6" fill="none" stroke="#333" stroke-width="1.3"/></svg><svg width="22" height="18" viewBox="0 0 22 18" style="position:absolute;left:405px;top:1051px"><rect x="4" y="2" width="14" height="14" fill="none" stroke="#fff" stroke-width="1.3"/><path d="M1 4v10M21 4v10" stroke="#fff" stroke-width="1.3"/></svg><svg width="22" height="22" viewBox="0 0 22 22" style="position:absolute;left:456px;top:1049px"><path d="M20 12H6c0 4 3 6 7 6 3 0 5-1 6-2v4c-2 1-4 1.5-6 1.5C6 21.5 1.5 17 1.5 11S6 .5 12 .5c6 0 9 4 9 9zM6.5 9h9c0-2.5-2-4-4.5-4S7 6.5 6.5 9z" fill="#1b78d8"/></svg><svg width="22" height="22" viewBox="0 0 22 22" style="position:absolute;left:504px;top:1049px"><path d="M1 6h20v15h-20z" fill="#fff"/><path d="M7 6V3a4 3 0 0 1 8 0v3" fill="none" stroke="#fff" stroke-width="1.5"/><rect x="6" y="9" width="4" height="4" fill="#f25022"/><rect x="11" y="9" width="4" height="4" fill="#7fba00"/><rect x="6" y="14" width="4" height="4" fill="#00a4ef"/><rect x="11" y="14" width="4" height="4" fill="#ffb900"/></svg><svg width="22" height="22" viewBox="0 0 22 22" style="position:absolute;left:554px;top:1049px"><circle cx="11" cy="11" r="10.2" fill="#1a86d8" stroke="#fff" stroke-width="1.4"/><path d="M6 15.5l6.5-6" stroke="#fff" stroke-width="2.2"/><path d="M11.5 7.5a3 3 0 0 1 4.5-2l-2 2 1 1.5 2-1.5a3 3 0 0 1-3.5 3.5z" fill="#fff"/><circle cx="5.8" cy="15.8" r="1.6" fill="none" stroke="#fff" stroke-width="1.1"/></svg><svg width="24" height="24" viewBox="0 0 24 24" style="position:absolute;left:602px;top:1048px"><circle cx="12" cy="12.5" r="11.5" fill="#f5c518"/><path d="M10 3.5h2.5v13" fill="none" stroke="#2ec27e" stroke-width="2.4"/><ellipse cx="9.8" cy="17" rx="4" ry="3.8" fill="#2ec27e"/><path d="M11.5 3.5c2 1 4 1 5.5-0.5-0.5 3-3 4-5.5 3.5z" fill="#2ec27e"/></svg><svg width="24" height="20" viewBox="0 0 24 20" style="position:absolute;left:651px;top:1050px"><path d="M0 7L12 0 24 7v12.5h-24z" fill="#fff"/><path d="M0.5 7.5l23 0-11 6z" fill="#111b25"/><path d="M10 10l5 6" stroke="#111b25" stroke-width="1.2"/></svg><svg width="22" height="19" viewBox="0 0 22 19" style="position:absolute;left:701px;top:1051px"><path d="M0 1h8l1.5 1.5h12.5v16h-22z" fill="#f9dc85"/><path d="M0 4h22v14.5h-22z" fill="#fde7a0"/><path d="M4 18.5v-7.5h13.5v7.5h-3.5v-3.5h-6.5v3.5z" fill="#3ba7e6"/><rect x="1.5" y="1.8" width="4" height="1" fill="#5ab0e0"/></svg><svg width="22" height="22" viewBox="0 0 22 22" style="position:absolute;left:749px;top:1049px"><circle cx="11" cy="11" r="10" fill="#db4437"/><path d="M11 11L2.3 6A10 10 0 0 0 7 20z" fill="#0f9d58"/><path d="M11 11L7 20A10 10 0 0 0 21 11z" fill="#ffcd40"/><circle cx="11" cy="11" r="4.5" fill="#fff"/><circle cx="11" cy="11" r="3.5" fill="#4285f4"/></svg><div style="position:absolute;left:790px;top:1078px;width:152px;height:2px;background:#9cc3e6"></div><svg width="22" height="22" viewBox="0 0 22 22" style="position:absolute;left:796px;top:1049px"><rect x="0" y="0" width="22" height="22" fill="#2e8b3e"/><rect x="0" y="0" width="22" height="11" fill="#3a9a4a"/><path d="M3 3h11v7h-11z" fill="none" stroke="#fff" stroke-width="1.8"/><path d="M5 13h7v3h-8" fill="none" stroke="#fff" stroke-width="1.8"/><path d="M15 8h4v4h-3M19 12v6h-4" fill="none" stroke="#fff" stroke-width="1.6"/></svg><div style="position:absolute;left:824px;top:1053px;font-size:13px;line-height:13px;color:#fff;white-space:nowrap;">MELSOFT GT Des...</div><div style="position:absolute;left:951px;top:1078px;width:152px;height:2px;background:#9cc3e6"></div><svg width="22" height="22" viewBox="0 0 22 22" style="position:absolute;left:957px;top:1049px"><rect x="0" y="0" width="22" height="22" fill="#8a8a8a"/><rect x="0" y="0" width="20" height="20" fill="#1818e0"/><rect x="4" y="7" width="12" height="7" fill="#c8c8c8"/><rect x="5" y="8" width="1.5" height="5" fill="#e00"/><path d="M9 8v5M12 8v5M14.5 8v5" stroke="#666"/></svg><div style="position:absolute;left:985px;top:1053px;font-size:13px;line-height:13px;color:#fff;white-space:nowrap;">GX Simulator2</div><div style="position:absolute;left:1112px;top:1078px;width:152px;height:2px;background:#9cc3e6"></div><svg width="22" height="22" viewBox="0 0 22 22" style="position:absolute;left:1118px;top:1049px"><rect x="0" y="0" width="22" height="22" rx="2" fill="#e23a32"/><path d="M2 7h7M9 3v16M13 3v16M13 7h7M4 7v8M18 7v8M2 15h7M13 15h7" stroke="#fff" stroke-width="1.6" fill="none"/></svg><div style="position:absolute;left:1146px;top:1053px;font-size:13px;line-height:13px;color:#fff;white-space:nowrap;">MELSOFT系列 GX...</div><div style="position:absolute;left:1269px;top:1040px;width:160px;height:40px;background:#39424d"></div><div style="position:absolute;left:1269px;top:1078px;width:160px;height:2px;background:#9cc3e6"></div><svg width="22" height="22" viewBox="0 0 22 22" style="position:absolute;left:1279px;top:1049px"><rect x="0" y="0" width="22" height="22" fill="#2e8b3e"/><rect x="0" y="0" width="22" height="11" fill="#3a9a4a"/><path d="M3 3h11v7h-11z" fill="none" stroke="#fff" stroke-width="1.8"/><path d="M5 13h7v3h-8" fill="none" stroke="#fff" stroke-width="1.8"/><path d="M15 8h4v4h-3M19 12v6h-4" fill="none" stroke="#fff" stroke-width="1.6"/></svg><div style="position:absolute;left:1307px;top:1053px;font-size:13px;line-height:13px;color:#fff;white-space:nowrap;">GT Simulator3 (G...</div><div style="position:absolute;left:1434px;top:1078px;width:152px;height:2px;background:#9cc3e6"></div><svg width="22" height="22" viewBox="0 0 22 22" style="position:absolute;left:1441px;top:1049px"><rect x="8" y="2" width="14" height="18" fill="#fff" stroke="#2b579a"/><path d="M11 6h8M11 9h8M11 12h8M11 15h8" stroke="#2b579a"/><rect x="0" y="4" width="13" height="14" fill="#2b579a"/><text x="1.5" y="15" font-size="10" font-weight="bold" font-family="Liberation Sans" fill="#fff">W</text></svg><div style="position:absolute;left:1467px;top:1053px;font-size:13px;line-height:13px;color:#fff;white-space:nowrap;">说明文档.docx - ...</div><svg width="12" height="8" viewBox="0 0 12 8" style="position:absolute;left:1646px;top:1056px"><path d="M1 7l5-5 5 5" fill="none" stroke="#fff" stroke-width="1.3"/></svg><svg width="16" height="10" viewBox="0 0 16 10" style="position:absolute;left:1668px;top:1055px"><rect x="0.5" y="1.5" width="13" height="8" fill="none" stroke="#fff"/><rect x="2" y="3" width="8" height="5" fill="#fff"/><rect x="14" y="4" width="2" height="3" fill="#fff"/></svg><svg width="18" height="18" viewBox="0 0 18 18" style="position:absolute;left:1691px;top:1049px"><text x="0" y="8" font-size="9" fill="#fff" font-family="Liberation Sans">*</text><path d="M4 17a13 13 0 0 1 13-13M7 17a10 10 0 0 1 10-10M10 17a7 7 0 0 1 7-7M13 17a4 4 0 0 1 4-4" fill="none" stroke="#8a8f96" stroke-width="1"/></svg><svg width="18" height="14" viewBox="0 0 18 14" style="position:absolute;left:1714px;top:1053px"><path d="M1 5h3l4-4v12l-4-4h-3z" fill="none" stroke="#fff"/><path d="M11 4l5 6M16 4l-5 6" stroke="#fff"/></svg><div style="position:absolute;left:1741px;top:1052px;font-size:14px;line-height:14px;color:#fff;white-space:nowrap;">中</div><div style="position:absolute;left:1769px;top:1053px;width:15px;height:15px;background:#fff"></div><svg width="15" height="15" viewBox="0 0 15 15" style="position:absolute;left:1769px;top:1053px"><path d="M3 3.5h9M2 11.5h11M6.5 3.5l-1.5 8M4 7.5h6.5v4" fill="none" stroke="#111" stroke-width="1.1"/></svg><div style="position:absolute;left:1796px;top:1044px;width:70px;font-size:12px;line-height:12px;color:#fff;white-space:nowrap;text-align:center;">21:52</div><div style="position:absolute;left:1796px;top:1063px;width:70px;font-size:12px;line-height:12px;color:#fff;white-space:nowrap;text-align:center;">2018-1-31</div><svg width="20" height="18" viewBox="0 0 20 18" style="position:absolute;left:1878px;top:1051px"><path d="M1 1h18v12h-9l-4 4v-4h-5z" fill="none" stroke="#fff" stroke-width="1.3"/></svg><div style="position:absolute;left:16px;top:11px;width:1030px;height:876px;background:#f0f0f0;border:1px solid #2f8be0;box-sizing:border-box;box-shadow:0 4px 18px rgba(0,0,0,0.35)"></div><div style="position:absolute;left:17px;top:12px;width:1028px;height:30px;background:#fff"></div><svg width="16" height="16" viewBox="0 0 16 16" style="position:absolute;left:25px;top:18px"><rect x="0" y="0" width="16" height="16" rx="1" fill="#238636"/><path d="M0 0h16v3h-16z" fill="#3d9a55" opacity="0.6"/><path d="M8 11h4l-2 5h-4z" fill="#7cc08a"/><path d="M2 2h9v7h-9z" fill="#fff"/><path d="M3 3h7v5h-7z" fill="#238636"/><path d="M4 4h5v3h-5z" fill="#fff"/><path d="M3 10h8v1.5h-8z" fill="#fff"/><path d="M10.5 10h3.5v4.7h-3.5M11.5 12.3h2.5" fill="none" stroke="#fff" stroke-width="1.3"/><path d="M12 5h3v2h-3z" fill="#fff"/><path d="M12.3 4l1.2-3 1.2 3" fill="none" stroke="#fff" stroke-width="0.9"/></svg><div style="position:absolute;left:46px;top:20px;font-size:12.6px;line-height:12.6px;color:#000;white-space:nowrap;letter-spacing:-0.1px">GT Simulator3 (GT27)&nbsp;&nbsp;[工程标题未设置 ]</div><div style="position:absolute;left:926px;top:26px;width:10px;height:1px;background:#000"></div><div style="position:absolute;left:971px;top:21px;width:10px;height:10px;border:1px solid #000;box-sizing:border-box"></div><svg width="12" height="12" viewBox="0 0 12 12" style="position:absolute;left:1016px;top:20px"><path d="M1 1L11 11M11 1L1 11" stroke="#000" stroke-width="1.1"/></svg><div style="position:absolute;left:17px;top:42px;width:1028px;height:54px;background:linear-gradient(90deg,#a9c4f1 0%,#b6cff4 40%,#bed5f6 75%,#c6daf7 100%)"></div><div style="position:absolute;left:23px;top:47px;width:2px;height:2px;background:#2a3f66"></div><div style="position:absolute;left:23px;top:51px;width:2px;height:2px;background:#2a3f66"></div><div style="position:absolute;left:23px;top:55px;width:2px;height:2px;background:#2a3f66"></div><div style="position:absolute;left:23px;top:59px;width:2px;height:2px;background:#2a3f66"></div><div style="position:absolute;left:35px;top:49px;font-size:12px;line-height:12px;color:#000;white-space:nowrap;">工程(<u>P</u>)</div><div style="position:absolute;left:90px;top:49px;font-size:12px;line-height:12px;color:#000;white-space:nowrap;">显示(<u>V</u>)</div><div style="position:absolute;left:146px;top:49px;font-size:12px;line-height:12px;color:#000;white-space:nowrap;">模拟(<u>S</u>)</div><div style="position:absolute;left:201px;top:49px;font-size:12px;line-height:12px;color:#000;white-space:nowrap;">工具(<u>T</u>)</div><div style="position:absolute;left:256px;top:49px;font-size:12px;line-height:12px;color:#000;white-space:nowrap;">帮助(<u>H</u>)</div><div style="position:absolute;left:20px;top:70px;width:198px;height:25px;background:linear-gradient(180deg,#e3eefc 0%,#c4daf8 45%,#a9c6f2 100%);border-radius:3px 0 0 3px;border-bottom:1px solid #7d9fd6;box-sizing:border-box"></div><div style="position:absolute;left:207px;top:70px;width:11px;height:25px;background:linear-gradient(180deg,#3f73cf,#1f4fa8);border-radius:0 3px 3px 0"></div><svg width="8" height="9" viewBox="0 0 8 9" style="position:absolute;left:209px;top:84px"><path d="M0.5 1.5h7" stroke="#fff" stroke-width="1"/><path d="M0.5 3.5h7l-3.5 4z" fill="#fff" stroke="#111" stroke-width="0.6"/></svg><div style="position:absolute;left:24px;top:74px;width:2px;height:2px;background:#1e3e78"></div><div style="position:absolute;left:24px;top:78px;width:2px;height:2px;background:#1e3e78"></div><div style="position:absolute;left:24px;top:82px;width:2px;height:2px;background:#1e3e78"></div><div style="position:absolute;left:24px;top:86px;width:2px;height:2px;background:#1e3e78"></div><div style="position:absolute;left:24px;top:90px;width:2px;height:2px;background:#1e3e78"></div><div style="position:absolute;left:74px;top:75px;width:1px;height:16px;background:#8aa8d8"></div><div style="position:absolute;left:124px;top:75px;width:1px;height:16px;background:#8aa8d8"></div><div style="position:absolute;left:152px;top:75px;width:1px;height:16px;background:#8aa8d8"></div><div style="position:absolute;left:179px;top:75px;width:1px;height:16px;background:#8aa8d8"></div><svg width="17" height="16" viewBox="0 0 17 16" style="position:absolute;left:30px;top:75px"><path d="M0 5h9v10h-9z" fill="#c3cad4" stroke="#a3acba" stroke-width="0.8"/><path d="M1 9l1.5 5 1.5-4 1.5 4 1.5-5" fill="none" stroke="#8e98a8" stroke-width="1.4"/><path d="M8 7l6 1-2 7h-4z" fill="#d3d9e2"/><path d="M5 4.5C7 1 12 1 13.5 5.5l2-0.5-3 5-3.5-4 2 0C10 4 8 3.5 5 4.5z" fill="#8e9db6"/></svg><svg width="17" height="16" viewBox="0 0 17 16" style="position:absolute;left:52px;top:75px"><path d="M0 5h5l1.5 1.5h6.5v8.5h-13z" fill="#c3cad4" stroke="#a3acba" stroke-width="0.8"/><path d="M2 9h14l-3 6h-13z" fill="#d6dce5" stroke="#a3acba" stroke-width="0.8"/><path d="M5 4.5C7 1 12 1 13.5 5.5l2-0.5-3 5-3.5-4 2 0C10 4 8 3.5 5 4.5z" fill="#8e9db6"/></svg><svg width="17" height="16" viewBox="0 0 17 16" style="position:absolute;left:80px;top:75px"><rect x="1" y="0.5" width="11" height="8" fill="#c9d0da" stroke="#a7b0bd"/><path d="M1 8l7 3.5-7 3.5z" fill="#aab3c0"/><path d="M12 11h4v4h-4z" fill="#aab3c0"/><path d="M13.5 10v2" stroke="#aab3c0"/></svg><svg width="17" height="16" viewBox="0 0 17 16" style="position:absolute;left:102px;top:75px"><rect x="1.5" y="0.5" width="11" height="8" fill="#5aa0e8" stroke="#222"/><circle cx="4.8" cy="11" r="4" fill="#fff" stroke="#e01010" stroke-width="1.6"/><text x="3" y="13.5" font-size="6.5" font-weight="bold" font-family="Liberation Sans" fill="#e01010">0</text><path d="M12 11.5h4.5v3.5h-4.5z" fill="#222"/><path d="M14 10v2" stroke="#222"/></svg><svg width="17" height="16" viewBox="0 0 17 16" style="position:absolute;left:130px;top:75px"><rect x="0" y="0" width="16" height="7" fill="#1f6fd8"/><text x="1" y="6.3" font-size="6.5" font-weight="bold" font-family="Liberation Sans" fill="#fff">DEV</text><path d="M0 8l7 3.5-7 3.5z" fill="#22aa22"/><circle cx="9.5" cy="11" r="3" fill="#fff" stroke="#222" stroke-width="1.3"/><path d="M11.5 13l3.5 2.5" stroke="#5a3a1a" stroke-width="1.6"/></svg><svg width="17" height="16" viewBox="0 0 17 16" style="position:absolute;left:158px;top:75px"><path d="M0 5h5l1.5 1.5h8.5v8.5h-15z" fill="#e8a81a"/><path d="M3 9h13l-2 6h-14z" fill="#ffd23a"/><text x="0" y="15.5" font-size="9" font-weight="bold" font-family="Liberation Sans" fill="#000">R</text><path d="M8 3C10 0 13 0 14 3.5l2-0.5-2.5 4.5-3.5-3.5 2 0C11 3 9.5 2.5 8 3z" fill="#12329a"/></svg><svg width="17" height="16" viewBox="0 0 17 16" style="position:absolute;left:186px;top:75px"><rect x="2.5" y="0.5" width="11" height="8" fill="#6ab0f0" stroke="#222"/><path d="M1 15l6-6" stroke="#222" stroke-width="1.8"/><path d="M6 7.5a2.5 2.5 0 1 0 3.5 -1" fill="none" stroke="#222" stroke-width="1.5"/><path d="M12 11.5h4.5v3.5h-4.5z" fill="#333"/><path d="M14 10v2" stroke="#333"/></svg><div style="position:absolute;left:18px;top:95px;width:1026px;height:771px;background:#f0f0f0;border-top:1px solid #a0a0a0;border-left:1px solid #a0a0a0;box-sizing:border-box"></div><div style="position:absolute;left:19px;top:96px;width:1024px;height:769px;background:#000"><div style="position:absolute;left:-19px;top:-96px;width:1920px;height:1080px"><div style="position:absolute;right:1530px;top:113px;font-size:12px;line-height:12px;color:#fff;white-space:nowrap;text-align:right;">当前程序名</div><div style="position:absolute;right:1530px;top:133px;font-size:12px;line-height:12px;color:#fff;white-space:nowrap;text-align:right;">当前运行步</div><div style="position:absolute;right:1530px;top:153px;font-size:12px;line-height:12px;color:#fff;white-space:nowrap;text-align:right;">当前步运行时间</div><div style="position:absolute;left:403px;top:114px;font-size:16px;line-height:16px;color:#fff;white-space:nowrap;">S2自动程序</div><div style="position:absolute;left:403px;top:134px;font-size:16px;line-height:16px;color:#fff;white-space:nowrap;">S2步1注释</div><div style="position:absolute;left:427px;top:153px;font-size:16px;line-height:16px;color:#fff;white-space:nowrap;">7010</div><div style="position:absolute;left:851px;top:161px;font-size:16px;line-height:16px;color:#fff;white-space:nowrap;">单步最小时间</div><div style="position:absolute;left:851px;top:181px;font-size:16px;line-height:16px;color:#fff;white-space:nowrap;">单步最大时间</div><div style="position:absolute;right:917px;top:161px;font-size:16px;line-height:16px;color:#fff;white-space:nowrap;text-align:right;">0</div><div style="position:absolute;right:917px;top:181px;font-size:16px;line-height:16px;color:#fff;white-space:nowrap;text-align:right;">60</div><div style="position:absolute;left:605px;top:193px;width:60px;font-size:12px;line-height:12px;color:#fff;white-space:nowrap;text-align:center;">条件设置</div><div style="position:absolute;left:669px;top:193px;width:60px;font-size:12px;line-height:12px;color:#fff;white-space:nowrap;text-align:center;">条件生效</div><div style="position:absolute;left:749px;top:193px;width:60px;font-size:12px;line-height:12px;color:#fff;white-space:nowrap;text-align:center;">动作设置</div><div style="position:absolute;left:371px;top:213px;width:16px;height:16px;box-sizing:border-box;border-radius:50%;border:1.5px solid #c4c4c4;background:linear-gradient(180deg,#3e5c6e 0%,#4f6d7e 30%,#1b3a52 55%,#0e2b44 85%,#1e3f58 100%);box-shadow:inset 0 0 0 1px #000"></div><div style="position:absolute;left:403px;top:214px;font-size:16px;line-height:16px;color:#fff;white-space:nowrap;">S2条件注释1</div><div style="position:absolute;left:611px;top:213px;width:48px;height:16px;box-sizing:border-box;border-top:1px solid #6a6a6a;border-left:1px solid #d8d8d8;border-right:1px solid #d8d8d8;border-bottom:1px solid #c8ccd0;background:linear-gradient(180deg,#5b6c5d 0%,#58695a 30%,#33473a 52%,#1a301c 72%,#142a16 86%,#4f614f 100%);box-shadow:inset 3px 0 3px -1px rgba(0,0,0,0.55),inset -3px 0 3px -1px rgba(0,0,0,0.55)"></div><div style="position:absolute;left:675px;top:213px;width:48px;height:16px;box-sizing:border-box;border-top:1px solid #6a6a6a;border-left:1px solid #d8d8d8;border-right:1px solid #d8d8d8;border-bottom:1px solid #c8ccd0;background:linear-gradient(180deg,#5b6c5d 0%,#58695a 30%,#33473a 52%,#1a301c 72%,#142a16 86%,#4f614f 100%);box-shadow:inset 3px 0 3px -1px rgba(0,0,0,0.55),inset -3px 0 3px -1px rgba(0,0,0,0.55)"></div><div style="position:absolute;left:755px;top:213px;width:48px;height:16px;box-sizing:border-box;border-top:1px solid #6a6a6a;border-left:1px solid #d8d8d8;border-right:1px solid #d8d8d8;border-bottom:1px solid #c8ccd0;background:linear-gradient(180deg,#5b6c5d 0%,#58695a 30%,#33473a 52%,#1a301c 72%,#142a16 86%,#4f614f 100%);box-shadow:inset 3px 0 3px -1px rgba(0,0,0,0.55),inset -3px 0 3px -1px rgba(0,0,0,0.55)"></div><div style="position:absolute;left:819px;top:213px;width:16px;height:16px;box-sizing:border-box;border-radius:50%;border:1.5px solid #c4c4c4;background:linear-gradient(180deg,#4a5b4c 0%,#5b6c5d 30%,#2a3e2c 55%,#142a16 85%,#2a3e2c 100%);box-shadow:inset 0 0 0 1px #000"></div><div style="position:absolute;left:851px;top:214px;font-size:16px;line-height:16px;color:#fff;white-space:nowrap;">S2动作注释1</div><div style="position:absolute;left:371px;top:233px;width:16px;height:16px;box-sizing:border-box;border-radius:50%;border:1.5px solid #c4c4c4;background:linear-gradient(180deg,#3e5c6e 0%,#4f6d7e 30%,#1b3a52 55%,#0e2b44 85%,#1e3f58 100%);box-shadow:inset 0 0 0 1px #000"></div><div style="position:absolute;left:403px;top:234px;font-size:16px;line-height:16px;color:#fff;white-space:nowrap;">S2条件注释2</div><div style="position:absolute;left:611px;top:233px;width:48px;height:16px;box-sizing:border-box;border-top:1px solid #5a5a5a;border-left:1px solid #d8d8d8;border-right:1px solid #d8d8d8;border-bottom:1px solid #c8ccd0;background:radial-gradient(ellipse 60% 65% at 50% 55%,#e2ffe2 0%,#d0ffd0 40%,#8ef78e 80%,#3ee83e 100%);box-shadow:inset 0 1px 0 #2f8a2f"></div><div style="position:absolute;left:675px;top:233px;width:48px;height:16px;box-sizing:border-box;border-top:1px solid #5a5a5a;border-left:1px solid #d8d8d8;border-right:1px solid #d8d8d8;border-bottom:1px solid #c8ccd0;background:radial-gradient(ellipse 60% 65% at 50% 55%,#e2ffe2 0%,#d0ffd0 40%,#8ef78e 80%,#3ee83e 100%);box-shadow:inset 0 1px 0 #2f8a2f"></div><div style="position:absolute;left:755px;top:233px;width:48px;height:16px;box-sizing:border-box;border-top:1px solid #5a5a5a;border-left:1px solid #d8d8d8;border-right:1px solid #d8d8d8;border-bottom:1px solid #c8ccd0;background:radial-gradient(ellipse 60% 65% at 50% 55%,#e2ffe2 0%,#d0ffd0 40%,#8ef78e 80%,#3ee83e 100%);box-shadow:inset 0 1px 0 #2f8a2f"></div><div style="position:absolute;left:819px;top:233px;width:16px;height:16px;box-sizing:border-box;border-radius:50%;border:1.5px solid #c4c4c4;background:radial-gradient(circle at 50% 50%,#e8ffe8 0%,#c8ffc8 45%,#60f060 85%,#30e030 100%);"></div><div style="position:absolute;left:851px;top:234px;font-size:16px;line-height:16px;color:#fff;white-space:nowrap;">S2动作注释2</div><div style="position:absolute;left:371px;top:253px;width:16px;height:16px;box-sizing:border-box;border-radius:50%;border:1.5px solid #c4c4c4;background:linear-gradient(180deg,#3e5c6e 0%,#4f6d7e 30%,#1b3a52 55%,#0e2b44 85%,#1e3f58 100%);box-shadow:inset 0 0 0 1px #000"></div><div style="position:absolute;left:403px;top:254px;font-size:16px;line-height:16px;color:#fff;white-space:nowrap;">S2条件注释3</div><div style="position:absolute;left:611px;top:253px;width:48px;height:16px;box-sizing:border-box;border-top:1px solid #6a6a6a;border-left:1px solid #d8d8d8;border-right:1px solid #d8d8d8;border-bottom:1px solid #c8ccd0;background:linear-gradient(180deg,#5b6c5d 0%,#58695a 30%,#33473a 52%,#1a301c 72%,#142a16 86%,#4f614f 100%);box-shadow:inset 3px 0 3px -1px rgba(0,0,0,0.55),inset -3px 0 3px -1px rgba(0,0,0,0.55)"></div><div style="position:absolute;left:675px;top:253px;width:48px;height:16px;box-sizing:border-box;border-top:1px solid #5a5a5a;border-left:1px solid #d8d8d8;border-right:1px solid #d8d8d8;border-bottom:1px solid #c8ccd0;background:radial-gradient(ellipse 60% 65% at 50% 55%,#e2ffe2 0%,#d0ffd0 40%,#8ef78e 80%,#3ee83e 100%);box-shadow:inset 0 1px 0 #2f8a2f"></div><div style="position:absolute;left:755px;top:253px;width:48px;height:16px;box-sizing:border-box;border-top:1px solid #6a6a6a;border-left:1px solid #d8d8d8;border-right:1px solid #d8d8d8;border-bottom:1px solid #c8ccd0;background:linear-gradient(180deg,#5b6c5d 0%,#58695a 30%,#33473a 52%,#1a301c 72%,#142a16 86%,#4f614f 100%);box-shadow:inset 3px 0 3px -1px rgba(0,0,0,0.55),inset -3px 0 3px -1px rgba(0,0,0,0.55)"></div><div style="position:absolute;left:819px;top:253px;width:16px;height:16px;box-sizing:border-box;border-radius:50%;border:1.5px solid #c4c4c4;background:linear-gradient(180deg,#4a5b4c 0%,#5b6c5d 30%,#2a3e2c 55%,#142a16 85%,#2a3e2c 100%);box-shadow:inset 0 0 0 1px #000"></div><div style="position:absolute;left:851px;top:254px;font-size:16px;line-height:16px;color:#fff;white-space:nowrap;">S2动作注释3</div><div style="position:absolute;left:371px;top:273px;width:16px;height:16px;box-sizing:border-box;border-radius:50%;border:1.5px solid #c4c4c4;background:linear-gradient(180deg,#3e5c6e 0%,#4f6d7e 30%,#1b3a52 55%,#0e2b44 85%,#1e3f58 100%);box-shadow:inset 0 0 0 1px #000"></div><div style="position:absolute;left:403px;top:274px;font-size:16px;line-height:16px;color:#fff;white-space:nowrap;">S2条件注释4</div><div style="position:absolute;left:611px;top:273px;width:48px;height:16px;box-sizing:border-box;border-top:1px solid #5a5a5a;border-left:1px solid #d8d8d8;border-right:1px solid #d8d8d8;border-bottom:1px solid #c8ccd0;background:radial-gradient(ellipse 60% 65% at 50% 55%,#e2ffe2 0%,#d0ffd0 40%,#8ef78e 80%,#3ee83e 100%);box-shadow:inset 0 1px 0 #2f8a2f"></div><div style="position:absolute;left:675px;top:273px;width:48px;height:16px;box-sizing:border-box;border-top:1px solid #5a5a5a;border-left:1px solid #d8d8d8;border-right:1px solid #d8d8d8;border-bottom:1px solid #c8ccd0;background:radial-gradient(ellipse 60% 65% at 50% 55%,#e2ffe2 0%,#d0ffd0 40%,#8ef78e 80%,#3ee83e 100%);box-shadow:inset 0 1px 0 #2f8a2f"></div><div style="position:absolute;left:755px;top:273px;width:48px;height:16px;box-sizing:border-box;border-top:1px solid #6a6a6a;border-left:1px solid #d8d8d8;border-right:1px solid #d8d8d8;border-bottom:1px solid #c8ccd0;background:linear-gradient(180deg,#5b6c5d 0%,#58695a 30%,#33473a 52%,#1a301c 72%,#142a16 86%,#4f614f 100%);box-shadow:inset 3px 0 3px -1px rgba(0,0,0,0.55),inset -3px 0 3px -1px rgba(0,0,0,0.55)"></div><div style="position:absolute;left:819px;top:273px;width:16px;height:16px;box-sizing:border-box;border-radius:50%;border:1.5px solid #c4c4c4;background:linear-gradient(180deg,#4a5b4c 0%,#5b6c5d 30%,#2a3e2c 55%,#142a16 85%,#2a3e2c 100%);box-shadow:inset 0 0 0 1px #000"></div><div style="position:absolute;left:851px;top:274px;font-size:16px;line-height:16px;color:#fff;white-space:nowrap;">S2动作注释4</div><div style="position:absolute;left:371px;top:293px;width:16px;height:16px;box-sizing:border-box;border-radius:50%;border:1.5px solid #c4c4c4;background:linear-gradient(180deg,#3e5c6e 0%,#4f6d7e 30%,#1b3a52 55%,#0e2b44 85%,#1e3f58 100%);box-shadow:inset 0 0 0 1px #000"></div><div style="position:absolute;left:403px;top:294px;font-size:16px;line-height:16px;color:#fff;white-space:nowrap;">S2条件注释5</div><div style="position:absolute;left:611px;top:293px;width:48px;height:16px;box-sizing:border-box;border-top:1px solid #6a6a6a;border-left:1px solid #d8d8d8;border-right:1px solid #d8d8d8;border-bottom:1px solid #c8ccd0;background:linear-gradient(180deg,#5b6c5d 0%,#58695a 30%,#33473a 52%,#1a301c 72%,#142a16 86%,#4f614f 100%);box-shadow:inset 3px 0 3px -1px rgba(0,0,0,0.55),inset -3px 0 3px -1px rgba(0,0,0,0.55)"></div><div style="position:absolute;left:675px;top:293px;width:48px;height:16px;box-sizing:border-box;border-top:1px solid #6a6a6a;border-left:1px solid #d8d8d8;border-right:1px solid #d8d8d8;border-bottom:1px solid #c8ccd0;background:linear-gradient(180deg,#5b6c5d 0%,#58695a 30%,#33473a 52%,#1a301c 72%,#142a16 86%,#4f614f 100%);box-shadow:inset 3px 0 3px -1px rgba(0,0,0,0.55),inset -3px 0 3px -1px rgba(0,0,0,0.55)"></div><div style="position:absolute;left:755px;top:293px;width:48px;height:16px;box-sizing:border-box;border-top:1px solid #6a6a6a;border-left:1px solid #d8d8d8;border-right:1px solid #d8d8d8;border-bottom:1px solid #c8ccd0;background:linear-gradient(180deg,#5b6c5d 0%,#58695a 30%,#33473a 52%,#1a301c 72%,#142a16 86%,#4f614f 100%);box-shadow:inset 3px 0 3px -1px rgba(0,0,0,0.55),inset -3px 0 3px -1px rgba(0,0,0,0.55)"></div><div style="position:absolute;left:819px;top:293px;width:16px;height:16px;box-sizing:border-box;border-radius:50%;border:1.5px solid #c4c4c4;background:linear-gradient(180deg,#4a5b4c 0%,#5b6c5d 30%,#2a3e2c 55%,#142a16 85%,#2a3e2c 100%);box-shadow:inset 0 0 0 1px #000"></div><div style="position:absolute;left:851px;top:294px;font-size:16px;line-height:16px;color:#fff;white-space:nowrap;">S2动作注释5</div><div style="position:absolute;left:371px;top:313px;width:16px;height:16px;box-sizing:border-box;border-radius:50%;border:1.5px solid #c4c4c4;background:linear-gradient(180deg,#3e5c6e 0%,#4f6d7e 30%,#1b3a52 55%,#0e2b44 85%,#1e3f58 100%);box-shadow:inset 0 0 0 1px #000"></div><div style="position:absolute;left:403px;top:314px;font-size:16px;line-height:16px;color:#fff;white-space:nowrap;">S2条件注释6</div><div style="position:absolute;left:611px;top:313px;width:48px;height:16px;box-sizing:border-box;border-top:1px solid #6a6a6a;border-left:1px solid #d8d8d8;border-right:1px solid #d8d8d8;border-bottom:1px solid #c8ccd0;background:linear-gradient(180deg,#5b6c5d 0%,#58695a 30%,#33473a 52%,#1a301c 72%,#142a16 86%,#4f614f 100%);box-shadow:inset 3px 0 3px -1px rgba(0,0,0,0.55),inset -3px 0 3px -1px rgba(0,0,0,0.55)"></div><div style="position:absolute;left:675px;top:313px;width:48px;height:16px;box-sizing:border-box;border-top:1px solid #6a6a6a;border-left:1px solid #d8d8d8;border-right:1px solid #d8d8d8;border-bottom:1px solid #c8ccd0;background:linear-gradient(180deg,#5b6c5d 0%,#58695a 30%,#33473a 52%,#1a301c 72%,#142a16 86%,#4f614f 100%);box-shadow:inset 3px 0 3px -1px rgba(0,0,0,0.55),inset -3px 0 3px -1px rgba(0,0,0,0.55)"></div><div style="position:absolute;left:755px;top:313px;width:48px;height:16px;box-sizing:border-box;border-top:1px solid #6a6a6a;border-left:1px solid #d8d8d8;border-right:1px solid #d8d8d8;border-bottom:1px solid #c8ccd0;background:linear-gradient(180deg,#5b6c5d 0%,#58695a 30%,#33473a 52%,#1a301c 72%,#142a16 86%,#4f614f 100%);box-shadow:inset 3px 0 3px -1px rgba(0,0,0,0.55),inset -3px 0 3px -1px rgba(0,0,0,0.55)"></div><div style="position:absolute;left:819px;top:313px;width:16px;height:16px;box-sizing:border-box;border-radius:50%;border:1.5px solid #c4c4c4;background:linear-gradient(180deg,#4a5b4c 0%,#5b6c5d 30%,#2a3e2c 55%,#142a16 85%,#2a3e2c 100%);box-shadow:inset 0 0 0 1px #000"></div><div style="position:absolute;left:851px;top:314px;font-size:16px;line-height:16px;color:#fff;white-space:nowrap;">S2动作注释6</div><div style="position:absolute;left:371px;top:333px;width:16px;height:16px;box-sizing:border-box;border-radius:50%;border:1.5px solid #c4c4c4;background:linear-gradient(180deg,#3e5c6e 0%,#4f6d7e 30%,#1b3a52 55%,#0e2b44 85%,#1e3f58 100%);box-shadow:inset 0 0 0 1px #000"></div><div style="position:absolute;left:403px;top:334px;font-size:16px;line-height:16px;color:#fff;white-space:nowrap;">S2条件注释7</div><div style="position:absolute;left:611px;top:333px;width:48px;height:16px;box-sizing:border-box;border-top:1px solid #6a6a6a;border-left:1px solid #d8d8d8;border-right:1px solid #d8d8d8;border-bottom:1px solid #c8ccd0;background:linear-gradient(180deg,#5b6c5d 0%,#58695a 30%,#33473a 52%,#1a301c 72%,#142a16 86%,#4f614f 100%);box-shadow:inset 3px 0 3px -1px rgba(0,0,0,0.55),inset -3px 0 3px -1px rgba(0,0,0,0.55)"></div><div style="position:absolute;left:675px;top:333px;width:48px;height:16px;box-sizing:border-box;border-top:1px solid #6a6a6a;border-left:1px solid #d8d8d8;border-right:1px solid #d8d8d8;border-bottom:1px solid #c8ccd0;background:linear-gradient(180deg,#5b6c5d 0%,#58695a 30%,#33473a 52%,#1a301c 72%,#142a16 86%,#4f614f 100%);box-shadow:inset 3px 0 3px -1px rgba(0,0,0,0.55),inset -3px 0 3px -1px rgba(0,0,0,0.55)"></div><div style="position:absolute;left:755px;top:333px;width:48px;height:16px;box-sizing:border-box;border-top:1px solid #6a6a6a;border-left:1px solid #d8d8d8;border-right:1px solid #d8d8d8;border-bottom:1px solid #c8ccd0;background:linear-gradient(180deg,#5b6c5d 0%,#58695a 30%,#33473a 52%,#1a301c 72%,#142a16 86%,#4f614f 100%);box-shadow:inset 3px 0 3px -1px rgba(0,0,0,0.55),inset -3px 0 3px -1px rgba(0,0,0,0.55)"></div><div style="position:absolute;left:819px;top:333px;width:16px;height:16px;box-sizing:border-box;border-radius:50%;border:1.5px solid #c4c4c4;background:linear-gradient(180deg,#4a5b4c 0%,#5b6c5d 30%,#2a3e2c 55%,#142a16 85%,#2a3e2c 100%);box-shadow:inset 0 0 0 1px #000"></div><div style="position:absolute;left:851px;top:334px;font-size:16px;line-height:16px;color:#fff;white-space:nowrap;">S2动作注释7</div><div style="position:absolute;left:371px;top:353px;width:16px;height:16px;box-sizing:border-box;border-radius:50%;border:1.5px solid #c4c4c4;background:linear-gradient(180deg,#3e5c6e 0%,#4f6d7e 30%,#1b3a52 55%,#0e2b44 85%,#1e3f58 100%);box-shadow:inset 0 0 0 1px #000"></div><div style="position:absolute;left:403px;top:354px;font-size:16px;line-height:16px;color:#fff;white-space:nowrap;">S2条件注释8</div><div style="position:absolute;left:611px;top:353px;width:48px;height:16px;box-sizing:border-box;border-top:1px solid #6a6a6a;border-left:1px solid #d8d8d8;border-right:1px solid #d8d8d8;border-bottom:1px solid #c8ccd0;background:linear-gradient(180deg,#5b6c5d 0%,#58695a 30%,#33473a 52%,#1a301c 72%,#142a16 86%,#4f614f 100%);box-shadow:inset 3px 0 3px -1px rgba(0,0,0,0.55),inset -3px 0 3px -1px rgba(0,0,0,0.55)"></div><div style="position:absolute;left:675px;top:353px;width:48px;height:16px;box-sizing:border-box;border-top:1px solid #6a6a6a;border-left:1px solid #d8d8d8;border-right:1px solid #d8d8d8;border-bottom:1px solid #c8ccd0;background:linear-gradient(180deg,#5b6c5d 0%,#58695a 30%,#33473a 52%,#1a301c 72%,#142a16 86%,#4f614f 100%);box-shadow:inset 3px 0 3px -1px rgba(0,0,0,0.55),inset -3px 0 3px -1px rgba(0,0,0,0.55)"></div><div style="position:absolute;left:755px;top:353px;width:48px;height:16px;box-sizing:border-box;border-top:1px solid #6a6a6a;border-left:1px solid #d8d8d8;border-right:1px solid #d8d8d8;border-bottom:1px solid #c8ccd0;background:linear-gradient(180deg,#5b6c5d 0%,#58695a 30%,#33473a 52%,#1a301c 72%,#142a16 86%,#4f614f 100%);box-shadow:inset 3px 0 3px -1px rgba(0,0,0,0.55),inset -3px 0 3px -1px rgba(0,0,0,0.55)"></div><div style="position:absolute;left:819px;top:353px;width:16px;height:16px;box-sizing:border-box;border-radius:50%;border:1.5px solid #c4c4c4;background:linear-gradient(180deg,#4a5b4c 0%,#5b6c5d 30%,#2a3e2c 55%,#142a16 85%,#2a3e2c 100%);box-shadow:inset 0 0 0 1px #000"></div><div style="position:absolute;left:851px;top:354px;font-size:16px;line-height:16px;color:#fff;white-space:nowrap;">S2动作注释8</div><div style="position:absolute;left:371px;top:373px;width:16px;height:16px;box-sizing:border-box;border-radius:50%;border:1.5px solid #c4c4c4;background:linear-gradient(180deg,#3e5c6e 0%,#4f6d7e 30%,#1b3a52 55%,#0e2b44 85%,#1e3f58 100%);box-shadow:inset 0 0 0 1px #000"></div><div style="position:absolute;left:403px;top:374px;font-size:16px;line-height:16px;color:#fff;white-space:nowrap;">S2条件注释9</div><div style="position:absolute;left:611px;top:373px;width:48px;height:16px;box-sizing:border-box;border-top:1px solid #6a6a6a;border-left:1px solid #d8d8d8;border-right:1px solid #d8d8d8;border-bottom:1px solid #c8ccd0;background:linear-gradient(180deg,#5b6c5d 0%,#58695a 30%,#33473a 52%,#1a301c 72%,#142a16 86%,#4f614f 100%);box-shadow:inset 3px 0 3px -1px rgba(0,0,0,0.55),inset -3px 0 3px -1px rgba(0,0,0,0.55)"></div><div style="position:absolute;left:675px;top:373px;width:48px;height:16px;box-sizing:border-box;border-top:1px solid #6a6a6a;border-left:1px solid #d8d8d8;border-right:1px solid #d8d8d8;border-bottom:1px solid #c8ccd0;background:linear-gradient(180deg,#5b6c5d 0%,#58695a 30%,#33473a 52%,#1a301c 72%,#142a16 86%,#4f614f 100%);box-shadow:inset 3px 0 3px -1px rgba(0,0,0,0.55),inset -3px 0 3px -1px rgba(0,0,0,0.55)"></div><div style="position:absolute;left:755px;top:373px;width:48px;height:16px;box-sizing:border-box;border-top:1px solid #6a6a6a;border-left:1px solid #d8d8d8;border-right:1px solid #d8d8d8;border-bottom:1px solid #c8ccd0;background:linear-gradient(180deg,#5b6c5d 0%,#58695a 30%,#33473a 52%,#1a301c 72%,#142a16 86%,#4f614f 100%);box-shadow:inset 3px 0 3px -1px rgba(0,0,0,0.55),inset -3px 0 3px -1px rgba(0,0,0,0.55)"></div><div style="position:absolute;left:819px;top:373px;width:16px;height:16px;box-sizing:border-box;border-radius:50%;border:1.5px solid #c4c4c4;background:linear-gradient(180deg,#4a5b4c 0%,#5b6c5d 30%,#2a3e2c 55%,#142a16 85%,#2a3e2c 100%);box-shadow:inset 0 0 0 1px #000"></div><div style="position:absolute;left:851px;top:374px;font-size:16px;line-height:16px;color:#fff;white-space:nowrap;">S2动作注释9</div><div style="position:absolute;left:371px;top:393px;width:16px;height:16px;box-sizing:border-box;border-radius:50%;border:1.5px solid #c4c4c4;background:linear-gradient(180deg,#3e5c6e 0%,#4f6d7e 30%,#1b3a52 55%,#0e2b44 85%,#1e3f58 100%);box-shadow:inset 0 0 0 1px #000"></div><div style="position:absolute;left:403px;top:394px;font-size:16px;line-height:16px;color:#fff;white-space:nowrap;">S2条件注释10</div><div style="position:absolute;left:611px;top:393px;width:48px;height:16px;box-sizing:border-box;border-top:1px solid #6a6a6a;border-left:1px solid #d8d8d8;border-right:1px solid #d8d8d8;border-bottom:1px solid #c8ccd0;background:linear-gradient(180deg,#5b6c5d 0%,#58695a 30%,#33473a 52%,#1a301c 72%,#142a16 86%,#4f614f 100%);box-shadow:inset 3px 0 3px -1px rgba(0,0,0,0.55),inset -3px 0 3px -1px rgba(0,0,0,0.55)"></div><div style="position:absolute;left:675px;top:393px;width:48px;height:16px;box-sizing:border-box;border-top:1px solid #6a6a6a;border-left:1px solid #d8d8d8;border-right:1px solid #d8d8d8;border-bottom:1px solid #c8ccd0;background:linear-gradient(180deg,#5b6c5d 0%,#58695a 30%,#33473a 52%,#1a301c 72%,#142a16 86%,#4f614f 100%);box-shadow:inset 3px 0 3px -1px rgba(0,0,0,0.55),inset -3px 0 3px -1px rgba(0,0,0,0.55)"></div><div style="position:absolute;left:755px;top:393px;width:48px;height:16px;box-sizing:border-box;border-top:1px solid #6a6a6a;border-left:1px solid #d8d8d8;border-right:1px solid #d8d8d8;border-bottom:1px solid #c8ccd0;background:linear-gradient(180deg,#5b6c5d 0%,#58695a 30%,#33473a 52%,#1a301c 72%,#142a16 86%,#4f614f 100%);box-shadow:inset 3px 0 3px -1px rgba(0,0,0,0.55),inset -3px 0 3px -1px rgba(0,0,0,0.55)"></div><div style="position:absolute;left:819px;top:393px;width:16px;height:16px;box-sizing:border-box;border-radius:50%;border:1.5px solid #c4c4c4;background:linear-gradient(180deg,#4a5b4c 0%,#5b6c5d 30%,#2a3e2c 55%,#142a16 85%,#2a3e2c 100%);box-shadow:inset 0 0 0 1px #000"></div><div style="position:absolute;left:851px;top:394px;font-size:16px;line-height:16px;color:#fff;white-space:nowrap;">S2动作注释10</div><div style="position:absolute;left:371px;top:413px;width:16px;height:16px;box-sizing:border-box;border-radius:50%;border:1.5px solid #c4c4c4;background:linear-gradient(180deg,#3e5c6e 0%,#4f6d7e 30%,#1b3a52 55%,#0e2b44 85%,#1e3f58 100%);box-shadow:inset 0 0 0 1px #000"></div><div style="position:absolute;left:403px;top:414px;font-size:16px;line-height:16px;color:#fff;white-space:nowrap;">S2条件注释11</div><div style="position:absolute;left:611px;top:413px;width:48px;height:16px;box-sizing:border-box;border-top:1px solid #6a6a6a;border-left:1px solid #d8d8d8;border-right:1px solid #d8d8d8;border-bottom:1px solid #c8ccd0;background:linear-gradient(180deg,#5b6c5d 0%,#58695a 30%,#33473a 52%,#1a301c 72%,#142a16 86%,#4f614f 100%);box-shadow:inset 3px 0 3px -1px rgba(0,0,0,0.55),inset -3px 0 3px -1px rgba(0,0,0,0.55)"></div><div style="position:absolute;left:675px;top:413px;width:48px;height:16px;box-sizing:border-box;border-top:1px solid #6a6a6a;border-left:1px solid #d8d8d8;border-right:1px solid #d8d8d8;border-bottom:1px solid #c8ccd0;background:linear-gradient(180deg,#5b6c5d 0%,#58695a 30%,#33473a 52%,#1a301c 72%,#142a16 86%,#4f614f 100%);box-shadow:inset 3px 0 3px -1px rgba(0,0,0,0.55),inset -3px 0 3px -1px rgba(0,0,0,0.55)"></div><div style="position:absolute;left:755px;top:413px;width:48px;height:16px;box-sizing:border-box;border-top:1px solid #6a6a6a;border-left:1px solid #d8d8d8;border-right:1px solid #d8d8d8;border-bottom:1px solid #c8ccd0;background:linear-gradient(180deg,#5b6c5d 0%,#58695a 30%,#33473a 52%,#1a301c 72%,#142a16 86%,#4f614f 100%);box-shadow:inset 3px 0 3px -1px rgba(0,0,0,0.55),inset -3px 0 3px -1px rgba(0,0,0,0.55)"></div><div style="position:absolute;left:819px;top:413px;width:16px;height:16px;box-sizing:border-box;border-radius:50%;border:1.5px solid #c4c4c4;background:linear-gradient(180deg,#4a5b4c 0%,#5b6c5d 30%,#2a3e2c 55%,#142a16 85%,#2a3e2c 100%);box-shadow:inset 0 0 0 1px #000"></div><div style="position:absolute;left:851px;top:414px;font-size:16px;line-height:16px;color:#fff;white-space:nowrap;">S2动作注释11</div><div style="position:absolute;left:371px;top:433px;width:16px;height:16px;box-sizing:border-box;border-radius:50%;border:1.5px solid #c4c4c4;background:linear-gradient(180deg,#3e5c6e 0%,#4f6d7e 30%,#1b3a52 55%,#0e2b44 85%,#1e3f58 100%);box-shadow:inset 0 0 0 1px #000"></div><div style="position:absolute;left:403px;top:434px;font-size:16px;line-height:16px;color:#fff;white-space:nowrap;">S2条件注释12</div><div style="position:absolute;left:611px;top:433px;width:48px;height:16px;box-sizing:border-box;border-top:1px solid #6a6a6a;border-left:1px solid #d8d8d8;border-right:1px solid #d8d8d8;border-bottom:1px solid #c8ccd0;background:linear-gradient(180deg,#5b6c5d 0%,#58695a 30%,#33473a 52%,#1a301c 72%,#142a16 86%,#4f614f 100%);box-shadow:inset 3px 0 3px -1px rgba(0,0,0,0.55),inset -3px 0 3px -1px rgba(0,0,0,0.55)"></div><div style="position:absolute;left:675px;top:433px;width:48px;height:16px;box-sizing:border-box;border-top:1px solid #6a6a6a;border-left:1px solid #d8d8d8;border-right:1px solid #d8d8d8;border-bottom:1px solid #c8ccd0;background:linear-gradient(180deg,#5b6c5d 0%,#58695a 30%,#33473a 52%,#1a301c 72%,#142a16 86%,#4f614f 100%);box-shadow:inset 3px 0 3px -1px rgba(0,0,0,0.55),inset -3px 0 3px -1px rgba(0,0,0,0.55)"></div><div style="position:absolute;left:755px;top:433px;width:48px;height:16px;box-sizing:border-box;border-top:1px solid #6a6a6a;border-left:1px solid #d8d8d8;border-right:1px solid #d8d8d8;border-bottom:1px solid #c8ccd0;background:linear-gradient(180deg,#5b6c5d 0%,#58695a 30%,#33473a 52%,#1a301c 72%,#142a16 86%,#4f614f 100%);box-shadow:inset 3px 0 3px -1px rgba(0,0,0,0.55),inset -3px 0 3px -1px rgba(0,0,0,0.55)"></div><div style="position:absolute;left:819px;top:433px;width:16px;height:16px;box-sizing:border-box;border-radius:50%;border:1.5px solid #c4c4c4;background:linear-gradient(180deg,#4a5b4c 0%,#5b6c5d 30%,#2a3e2c 55%,#142a16 85%,#2a3e2c 100%);box-shadow:inset 0 0 0 1px #000"></div><div style="position:absolute;left:851px;top:434px;font-size:16px;line-height:16px;color:#fff;white-space:nowrap;">S2动作注释12</div><div style="position:absolute;left:371px;top:453px;width:16px;height:16px;box-sizing:border-box;border-radius:50%;border:1.5px solid #c4c4c4;background:linear-gradient(180deg,#3e5c6e 0%,#4f6d7e 30%,#1b3a52 55%,#0e2b44 85%,#1e3f58 100%);box-shadow:inset 0 0 0 1px #000"></div><div style="position:absolute;left:403px;top:454px;font-size:16px;line-height:16px;color:#fff;white-space:nowrap;">S2条件注释13</div><div style="position:absolute;left:611px;top:453px;width:48px;height:16px;box-sizing:border-box;border-top:1px solid #6a6a6a;border-left:1px solid #d8d8d8;border-right:1px solid #d8d8d8;border-bottom:1px solid #c8ccd0;background:linear-gradient(180deg,#5b6c5d 0%,#58695a 30%,#33473a 52%,#1a301c 72%,#142a16 86%,#4f614f 100%);box-shadow:inset 3px 0 3px -1px rgba(0,0,0,0.55),inset -3px 0 3px -1px rgba(0,0,0,0.55)"></div><div style="position:absolute;left:675px;top:453px;width:48px;height:16px;box-sizing:border-box;border-top:1px solid #6a6a6a;border-left:1px solid #d8d8d8;border-right:1px solid #d8d8d8;border-bottom:1px solid #c8ccd0;background:linear-gradient(180deg,#5b6c5d 0%,#58695a 30%,#33473a 52%,#1a301c 72%,#142a16 86%,#4f614f 100%);box-shadow:inset 3px 0 3px -1px rgba(0,0,0,0.55),inset -3px 0 3px -1px rgba(0,0,0,0.55)"></div><div style="position:absolute;left:755px;top:453px;width:48px;height:16px;box-sizing:border-box;border-top:1px solid #6a6a6a;border-left:1px solid #d8d8d8;border-right:1px solid #d8d8d8;border-bottom:1px solid #c8ccd0;background:linear-gradient(180deg,#5b6c5d 0%,#58695a 30%,#33473a 52%,#1a301c 72%,#142a16 86%,#4f614f 100%);box-shadow:inset 3px 0 3px -1px rgba(0,0,0,0.55),inset -3px 0 3px -1px rgba(0,0,0,0.55)"></div><div style="position:absolute;left:819px;top:453px;width:16px;height:16px;box-sizing:border-box;border-radius:50%;border:1.5px solid #c4c4c4;background:linear-gradient(180deg,#4a5b4c 0%,#5b6c5d 30%,#2a3e2c 55%,#142a16 85%,#2a3e2c 100%);box-shadow:inset 0 0 0 1px #000"></div><div style="position:absolute;left:851px;top:454px;font-size:16px;line-height:16px;color:#fff;white-space:nowrap;">S2动作注释13</div><div style="position:absolute;left:371px;top:473px;width:16px;height:16px;box-sizing:border-box;border-radius:50%;border:1.5px solid #c4c4c4;background:linear-gradient(180deg,#3e5c6e 0%,#4f6d7e 30%,#1b3a52 55%,#0e2b44 85%,#1e3f58 100%);box-shadow:inset 0 0 0 1px #000"></div><div style="position:absolute;left:403px;top:474px;font-size:16px;line-height:16px;color:#fff;white-space:nowrap;">S2条件注释14</div><div style="position:absolute;left:611px;top:473px;width:48px;height:16px;box-sizing:border-box;border-top:1px solid #6a6a6a;border-left:1px solid #d8d8d8;border-right:1px solid #d8d8d8;border-bottom:1px solid #c8ccd0;background:linear-gradient(180deg,#5b6c5d 0%,#58695a 30%,#33473a 52%,#1a301c 72%,#142a16 86%,#4f614f 100%);box-shadow:inset 3px 0 3px -1px rgba(0,0,0,0.55),inset -3px 0 3px -1px rgba(0,0,0,0.55)"></div><div style="position:absolute;left:675px;top:473px;width:48px;height:16px;box-sizing:border-box;border-top:1px solid #6a6a6a;border-left:1px solid #d8d8d8;border-right:1px solid #d8d8d8;border-bottom:1px solid #c8ccd0;background:linear-gradient(180deg,#5b6c5d 0%,#58695a 30%,#33473a 52%,#1a301c 72%,#142a16 86%,#4f614f 100%);box-shadow:inset 3px 0 3px -1px rgba(0,0,0,0.55),inset -3px 0 3px -1px rgba(0,0,0,0.55)"></div><div style="position:absolute;left:755px;top:473px;width:48px;height:16px;box-sizing:border-box;border-top:1px solid #6a6a6a;border-left:1px solid #d8d8d8;border-right:1px solid #d8d8d8;border-bottom:1px solid #c8ccd0;background:linear-gradient(180deg,#5b6c5d 0%,#58695a 30%,#33473a 52%,#1a301c 72%,#142a16 86%,#4f614f 100%);box-shadow:inset 3px 0 3px -1px rgba(0,0,0,0.55),inset -3px 0 3px -1px rgba(0,0,0,0.55)"></div><div style="position:absolute;left:819px;top:473px;width:16px;height:16px;box-sizing:border-box;border-radius:50%;border:1.5px solid #c4c4c4;background:linear-gradient(180deg,#4a5b4c 0%,#5b6c5d 30%,#2a3e2c 55%,#142a16 85%,#2a3e2c 100%);box-shadow:inset 0 0 0 1px #000"></div><div style="position:absolute;left:851px;top:474px;font-size:16px;line-height:16px;color:#fff;white-space:nowrap;">S2动作注释14</div><div style="position:absolute;left:371px;top:493px;width:16px;height:16px;box-sizing:border-box;border-radius:50%;border:1.5px solid #c4c4c4;background:linear-gradient(180deg,#3e5c6e 0%,#4f6d7e 30%,#1b3a52 55%,#0e2b44 85%,#1e3f58 100%);box-shadow:inset 0 0 0 1px #000"></div><div style="position:absolute;left:403px;top:494px;font-size:16px;line-height:16px;color:#fff;white-space:nowrap;">S2条件注释15</div><div style="position:absolute;left:611px;top:493px;width:48px;height:16px;box-sizing:border-box;border-top:1px solid #6a6a6a;border-left:1px solid #d8d8d8;border-right:1px solid #d8d8d8;border-bottom:1px solid #c8ccd0;background:linear-gradient(180deg,#5b6c5d 0%,#58695a 30%,#33473a 52%,#1a301c 72%,#142a16 86%,#4f614f 100%);box-shadow:inset 3px 0 3px -1px rgba(0,0,0,0.55),inset -3px 0 3px -1px rgba(0,0,0,0.55)"></div><div style="position:absolute;left:675px;top:493px;width:48px;height:16px;box-sizing:border-box;border-top:1px solid #6a6a6a;border-left:1px solid #d8d8d8;border-right:1px solid #d8d8d8;border-bottom:1px solid #c8ccd0;background:linear-gradient(180deg,#5b6c5d 0%,#58695a 30%,#33473a 52%,#1a301c 72%,#142a16 86%,#4f614f 100%);box-shadow:inset 3px 0 3px -1px rgba(0,0,0,0.55),inset -3px 0 3px -1px rgba(0,0,0,0.55)"></div><div style="position:absolute;left:755px;top:493px;width:48px;height:16px;box-sizing:border-box;border-top:1px solid #6a6a6a;border-left:1px solid #d8d8d8;border-right:1px solid #d8d8d8;border-bottom:1px solid #c8ccd0;background:linear-gradient(180deg,#5b6c5d 0%,#58695a 30%,#33473a 52%,#1a301c 72%,#142a16 86%,#4f614f 100%);box-shadow:inset 3px 0 3px -1px rgba(0,0,0,0.55),inset -3px 0 3px -1px rgba(0,0,0,0.55)"></div><div style="position:absolute;left:819px;top:493px;width:16px;height:16px;box-sizing:border-box;border-radius:50%;border:1.5px solid #c4c4c4;background:linear-gradient(180deg,#4a5b4c 0%,#5b6c5d 30%,#2a3e2c 55%,#142a16 85%,#2a3e2c 100%);box-shadow:inset 0 0 0 1px #000"></div><div style="position:absolute;left:851px;top:494px;font-size:16px;line-height:16px;color:#fff;white-space:nowrap;">S2动作注释15</div><div style="position:absolute;left:371px;top:513px;width:16px;height:16px;box-sizing:border-box;border-radius:50%;border:1.5px solid #c4c4c4;background:linear-gradient(180deg,#3e5c6e 0%,#4f6d7e 30%,#1b3a52 55%,#0e2b44 85%,#1e3f58 100%);box-shadow:inset 0 0 0 1px #000"></div><div style="position:absolute;left:403px;top:514px;font-size:16px;line-height:16px;color:#fff;white-space:nowrap;">S2条件注释16</div><div style="position:absolute;left:611px;top:513px;width:48px;height:16px;box-sizing:border-box;border-top:1px solid #6a6a6a;border-left:1px solid #d8d8d8;border-right:1px solid #d8d8d8;border-bottom:1px solid #c8ccd0;background:linear-gradient(180deg,#5b6c5d 0%,#58695a 30%,#33473a 52%,#1a301c 72%,#142a16 86%,#4f614f 100%);box-shadow:inset 3px 0 3px -1px rgba(0,0,0,0.55),inset -3px 0 3px -1px rgba(0,0,0,0.55)"></div><div style="position:absolute;left:675px;top:513px;width:48px;height:16px;box-sizing:border-box;border-top:1px solid #6a6a6a;border-left:1px solid #d8d8d8;border-right:1px solid #d8d8d8;border-bottom:1px solid #c8ccd0;background:linear-gradient(180deg,#5b6c5d 0%,#58695a 30%,#33473a 52%,#1a301c 72%,#142a16 86%,#4f614f 100%);box-shadow:inset 3px 0 3px -1px rgba(0,0,0,0.55),inset -3px 0 3px -1px rgba(0,0,0,0.55)"></div><div style="position:absolute;left:755px;top:513px;width:48px;height:16px;box-sizing:border-box;border-top:1px solid #6a6a6a;border-left:1px solid #d8d8d8;border-right:1px solid #d8d8d8;border-bottom:1px solid #c8ccd0;background:linear-gradient(180deg,#5b6c5d 0%,#58695a 30%,#33473a 52%,#1a301c 72%,#142a16 86%,#4f614f 100%);box-shadow:inset 3px 0 3px -1px rgba(0,0,0,0.55),inset -3px 0 3px -1px rgba(0,0,0,0.55)"></div><div style="position:absolute;left:819px;top:513px;width:16px;height:16px;box-sizing:border-box;border-radius:50%;border:1.5px solid #c4c4c4;background:linear-gradient(180deg,#4a5b4c 0%,#5b6c5d 30%,#2a3e2c 55%,#142a16 85%,#2a3e2c 100%);box-shadow:inset 0 0 0 1px #000"></div><div style="position:absolute;left:851px;top:514px;font-size:16px;line-height:16px;color:#fff;white-space:nowrap;">S2动作注释16</div><div style="position:absolute;left:371px;top:533px;width:16px;height:16px;box-sizing:border-box;border-radius:50%;border:1.5px solid #c4c4c4;background:linear-gradient(180deg,#3e5c6e 0%,#4f6d7e 30%,#1b3a52 55%,#0e2b44 85%,#1e3f58 100%);box-shadow:inset 0 0 0 1px #000"></div><div style="position:absolute;left:403px;top:534px;font-size:16px;line-height:16px;color:#fff;white-space:nowrap;">S2条件注释17</div><div style="position:absolute;left:611px;top:533px;width:48px;height:16px;box-sizing:border-box;border-top:1px solid #6a6a6a;border-left:1px solid #d8d8d8;border-right:1px solid #d8d8d8;border-bottom:1px solid #c8ccd0;background:linear-gradient(180deg,#5b6c5d 0%,#58695a 30%,#33473a 52%,#1a301c 72%,#142a16 86%,#4f614f 100%);box-shadow:inset 3px 0 3px -1px rgba(0,0,0,0.55),inset -3px 0 3px -1px rgba(0,0,0,0.55)"></div><div style="position:absolute;left:675px;top:533px;width:48px;height:16px;box-sizing:border-box;border-top:1px solid #6a6a6a;border-left:1px solid #d8d8d8;border-right:1px solid #d8d8d8;border-bottom:1px solid #c8ccd0;background:linear-gradient(180deg,#5b6c5d 0%,#58695a 30%,#33473a 52%,#1a301c 72%,#142a16 86%,#4f614f 100%);box-shadow:inset 3px 0 3px -1px rgba(0,0,0,0.55),inset -3px 0 3px -1px rgba(0,0,0,0.55)"></div><div style="position:absolute;left:755px;top:533px;width:48px;height:16px;box-sizing:border-box;border-top:1px solid #6a6a6a;border-left:1px solid #d8d8d8;border-right:1px solid #d8d8d8;border-bottom:1px solid #c8ccd0;background:linear-gradient(180deg,#5b6c5d 0%,#58695a 30%,#33473a 52%,#1a301c 72%,#142a16 86%,#4f614f 100%);box-shadow:inset 3px 0 3px -1px rgba(0,0,0,0.55),inset -3px 0 3px -1px rgba(0,0,0,0.55)"></div><div style="position:absolute;left:819px;top:533px;width:16px;height:16px;box-sizing:border-box;border-radius:50%;border:1.5px solid #c4c4c4;background:linear-gradient(180deg,#4a5b4c 0%,#5b6c5d 30%,#2a3e2c 55%,#142a16 85%,#2a3e2c 100%);box-shadow:inset 0 0 0 1px #000"></div><div style="position:absolute;left:851px;top:534px;font-size:16px;line-height:16px;color:#fff;white-space:nowrap;">S2动作注释17</div><div style="position:absolute;left:371px;top:553px;width:16px;height:16px;box-sizing:border-box;border-radius:50%;border:1.5px solid #c4c4c4;background:linear-gradient(180deg,#3e5c6e 0%,#4f6d7e 30%,#1b3a52 55%,#0e2b44 85%,#1e3f58 100%);box-shadow:inset 0 0 0 1px #000"></div><div style="position:absolute;left:403px;top:554px;font-size:16px;line-height:16px;color:#fff;white-space:nowrap;">S2条件注释18</div><div style="position:absolute;left:611px;top:553px;width:48px;height:16px;box-sizing:border-box;border-top:1px solid #6a6a6a;border-left:1px solid #d8d8d8;border-right:1px solid #d8d8d8;border-bottom:1px solid #c8ccd0;background:linear-gradient(180deg,#5b6c5d 0%,#58695a 30%,#33473a 52%,#1a301c 72%,#142a16 86%,#4f614f 100%);box-shadow:inset 3px 0 3px -1px rgba(0,0,0,0.55),inset -3px 0 3px -1px rgba(0,0,0,0.55)"></div><div style="position:absolute;left:675px;top:553px;width:48px;height:16px;box-sizing:border-box;border-top:1px solid #6a6a6a;border-left:1px solid #d8d8d8;border-right:1px solid #d8d8d8;border-bottom:1px solid #c8ccd0;background:linear-gradient(180deg,#5b6c5d 0%,#58695a 30%,#33473a 52%,#1a301c 72%,#142a16 86%,#4f614f 100%);box-shadow:inset 3px 0 3px -1px rgba(0,0,0,0.55),inset -3px 0 3px -1px rgba(0,0,0,0.55)"></div><div style="position:absolute;left:755px;top:553px;width:48px;height:16px;box-sizing:border-box;border-top:1px solid #6a6a6a;border-left:1px solid #d8d8d8;border-right:1px solid #d8d8d8;border-bottom:1px solid #c8ccd0;background:linear-gradient(180deg,#5b6c5d 0%,#58695a 30%,#33473a 52%,#1a301c 72%,#142a16 86%,#4f614f 100%);box-shadow:inset 3px 0 3px -1px rgba(0,0,0,0.55),inset -3px 0 3px -1px rgba(0,0,0,0.55)"></div><div style="position:absolute;left:819px;top:553px;width:16px;height:16px;box-sizing:border-box;border-radius:50%;border:1.5px solid #c4c4c4;background:linear-gradient(180deg,#4a5b4c 0%,#5b6c5d 30%,#2a3e2c 55%,#142a16 85%,#2a3e2c 100%);box-shadow:inset 0 0 0 1px #000"></div><div style="position:absolute;left:851px;top:554px;font-size:16px;line-height:16px;color:#fff;white-space:nowrap;">S2动作注释18</div><div style="position:absolute;left:371px;top:573px;width:16px;height:16px;box-sizing:border-box;border-radius:50%;border:1.5px solid #c4c4c4;background:linear-gradient(180deg,#3e5c6e 0%,#4f6d7e 30%,#1b3a52 55%,#0e2b44 85%,#1e3f58 100%);box-shadow:inset 0 0 0 1px #000"></div><div style="position:absolute;left:403px;top:574px;font-size:16px;line-height:16px;color:#fff;white-space:nowrap;">S2条件注释19</div><div style="position:absolute;left:611px;top:573px;width:48px;height:16px;box-sizing:border-box;border-top:1px solid #6a6a6a;border-left:1px solid #d8d8d8;border-right:1px solid #d8d8d8;border-bottom:1px solid #c8ccd0;background:linear-gradient(180deg,#5b6c5d 0%,#58695a 30%,#33473a 52%,#1a301c 72%,#142a16 86%,#4f614f 100%);box-shadow:inset 3px 0 3px -1px rgba(0,0,0,0.55),inset -3px 0 3px -1px rgba(0,0,0,0.55)"></div><div style="position:absolute;left:675px;top:573px;width:48px;height:16px;box-sizing:border-box;border-top:1px solid #6a6a6a;border-left:1px solid #d8d8d8;border-right:1px solid #d8d8d8;border-bottom:1px solid #c8ccd0;background:linear-gradient(180deg,#5b6c5d 0%,#58695a 30%,#33473a 52%,#1a301c 72%,#142a16 86%,#4f614f 100%);box-shadow:inset 3px 0 3px -1px rgba(0,0,0,0.55),inset -3px 0 3px -1px rgba(0,0,0,0.55)"></div><div style="position:absolute;left:755px;top:573px;width:48px;height:16px;box-sizing:border-box;border-top:1px solid #6a6a6a;border-left:1px solid #d8d8d8;border-right:1px solid #d8d8d8;border-bottom:1px solid #c8ccd0;background:linear-gradient(180deg,#5b6c5d 0%,#58695a 30%,#33473a 52%,#1a301c 72%,#142a16 86%,#4f614f 100%);box-shadow:inset 3px 0 3px -1px rgba(0,0,0,0.55),inset -3px 0 3px -1px rgba(0,0,0,0.55)"></div><div style="position:absolute;left:819px;top:573px;width:16px;height:16px;box-sizing:border-box;border-radius:50%;border:1.5px solid #c4c4c4;background:linear-gradient(180deg,#4a5b4c 0%,#5b6c5d 30%,#2a3e2c 55%,#142a16 85%,#2a3e2c 100%);box-shadow:inset 0 0 0 1px #000"></div><div style="position:absolute;left:851px;top:574px;font-size:16px;line-height:16px;color:#fff;white-space:nowrap;">S2动作注释19</div><div style="position:absolute;left:371px;top:593px;width:16px;height:16px;box-sizing:border-box;border-radius:50%;border:1.5px solid #c4c4c4;background:linear-gradient(180deg,#3e5c6e 0%,#4f6d7e 30%,#1b3a52 55%,#0e2b44 85%,#1e3f58 100%);box-shadow:inset 0 0 0 1px #000"></div><div style="position:absolute;left:403px;top:594px;font-size:16px;line-height:16px;color:#fff;white-space:nowrap;">S2条件注释20</div><div style="position:absolute;left:611px;top:593px;width:48px;height:16px;box-sizing:border-box;border-top:1px solid #6a6a6a;border-left:1px solid #d8d8d8;border-right:1px solid #d8d8d8;border-bottom:1px solid #c8ccd0;background:linear-gradient(180deg,#5b6c5d 0%,#58695a 30%,#33473a 52%,#1a301c 72%,#142a16 86%,#4f614f 100%);box-shadow:inset 3px 0 3px -1px rgba(0,0,0,0.55),inset -3px 0 3px -1px rgba(0,0,0,0.55)"></div><div style="position:absolute;left:675px;top:593px;width:48px;height:16px;box-sizing:border-box;border-top:1px solid #6a6a6a;border-left:1px solid #d8d8d8;border-right:1px solid #d8d8d8;border-bottom:1px solid #c8ccd0;background:linear-gradient(180deg,#5b6c5d 0%,#58695a 30%,#33473a 52%,#1a301c 72%,#142a16 86%,#4f614f 100%);box-shadow:inset 3px 0 3px -1px rgba(0,0,0,0.55),inset -3px 0 3px -1px rgba(0,0,0,0.55)"></div><div style="position:absolute;left:755px;top:593px;width:48px;height:16px;box-sizing:border-box;border-top:1px solid #6a6a6a;border-left:1px solid #d8d8d8;border-right:1px solid #d8d8d8;border-bottom:1px solid #c8ccd0;background:linear-gradient(180deg,#5b6c5d 0%,#58695a 30%,#33473a 52%,#1a301c 72%,#142a16 86%,#4f614f 100%);box-shadow:inset 3px 0 3px -1px rgba(0,0,0,0.55),inset -3px 0 3px -1px rgba(0,0,0,0.55)"></div><div style="position:absolute;left:819px;top:593px;width:16px;height:16px;box-sizing:border-box;border-radius:50%;border:1.5px solid #c4c4c4;background:linear-gradient(180deg,#4a5b4c 0%,#5b6c5d 30%,#2a3e2c 55%,#142a16 85%,#2a3e2c 100%);box-shadow:inset 0 0 0 1px #000"></div><div style="position:absolute;left:851px;top:594px;font-size:16px;line-height:16px;color:#fff;white-space:nowrap;">S2动作注释20</div><div style="position:absolute;left:371px;top:613px;width:16px;height:16px;box-sizing:border-box;border-radius:50%;border:1.5px solid #c4c4c4;background:linear-gradient(180deg,#3e5c6e 0%,#4f6d7e 30%,#1b3a52 55%,#0e2b44 85%,#1e3f58 100%);box-shadow:inset 0 0 0 1px #000"></div><div style="position:absolute;left:403px;top:614px;font-size:16px;line-height:16px;color:#fff;white-space:nowrap;">S2条件注释21</div><div style="position:absolute;left:611px;top:613px;width:48px;height:16px;box-sizing:border-box;border-top:1px solid #6a6a6a;border-left:1px solid #d8d8d8;border-right:1px solid #d8d8d8;border-bottom:1px solid #c8ccd0;background:linear-gradient(180deg,#5b6c5d 0%,#58695a 30%,#33473a 52%,#1a301c 72%,#142a16 86%,#4f614f 100%);box-shadow:inset 3px 0 3px -1px rgba(0,0,0,0.55),inset -3px 0 3px -1px rgba(0,0,0,0.55)"></div><div style="position:absolute;left:675px;top:613px;width:48px;height:16px;box-sizing:border-box;border-top:1px solid #6a6a6a;border-left:1px solid #d8d8d8;border-right:1px solid #d8d8d8;border-bottom:1px solid #c8ccd0;background:linear-gradient(180deg,#5b6c5d 0%,#58695a 30%,#33473a 52%,#1a301c 72%,#142a16 86%,#4f614f 100%);box-shadow:inset 3px 0 3px -1px rgba(0,0,0,0.55),inset -3px 0 3px -1px rgba(0,0,0,0.55)"></div><div style="position:absolute;left:755px;top:613px;width:48px;height:16px;box-sizing:border-box;border-top:1px solid #6a6a6a;border-left:1px solid #d8d8d8;border-right:1px solid #d8d8d8;border-bottom:1px solid #c8ccd0;background:linear-gradient(180deg,#5b6c5d 0%,#58695a 30%,#33473a 52%,#1a301c 72%,#142a16 86%,#4f614f 100%);box-shadow:inset 3px 0 3px -1px rgba(0,0,0,0.55),inset -3px 0 3px -1px rgba(0,0,0,0.55)"></div><div style="position:absolute;left:819px;top:613px;width:16px;height:16px;box-sizing:border-box;border-radius:50%;border:1.5px solid #c4c4c4;background:linear-gradient(180deg,#4a5b4c 0%,#5b6c5d 30%,#2a3e2c 55%,#142a16 85%,#2a3e2c 100%);box-shadow:inset 0 0 0 1px #000"></div><div style="position:absolute;left:851px;top:614px;font-size:16px;line-height:16px;color:#fff;white-space:nowrap;">S2动作注释21</div><div style="position:absolute;left:371px;top:633px;width:16px;height:16px;box-sizing:border-box;border-radius:50%;border:1.5px solid #c4c4c4;background:linear-gradient(180deg,#3e5c6e 0%,#4f6d7e 30%,#1b3a52 55%,#0e2b44 85%,#1e3f58 100%);box-shadow:inset 0 0 0 1px #000"></div><div style="position:absolute;left:403px;top:634px;font-size:16px;line-height:16px;color:#fff;white-space:nowrap;">S2条件注释22</div><div style="position:absolute;left:611px;top:633px;width:48px;height:16px;box-sizing:border-box;border-top:1px solid #6a6a6a;border-left:1px solid #d8d8d8;border-right:1px solid #d8d8d8;border-bottom:1px solid #c8ccd0;background:linear-gradient(180deg,#5b6c5d 0%,#58695a 30%,#33473a 52%,#1a301c 72%,#142a16 86%,#4f614f 100%);box-shadow:inset 3px 0 3px -1px rgba(0,0,0,0.55),inset -3px 0 3px -1px rgba(0,0,0,0.55)"></div><div style="position:absolute;left:675px;top:633px;width:48px;height:16px;box-sizing:border-box;border-top:1px solid #6a6a6a;border-left:1px solid #d8d8d8;border-right:1px solid #d8d8d8;border-bottom:1px solid #c8ccd0;background:linear-gradient(180deg,#5b6c5d 0%,#58695a 30%,#33473a 52%,#1a301c 72%,#142a16 86%,#4f614f 100%);box-shadow:inset 3px 0 3px -1px rgba(0,0,0,0.55),inset -3px 0 3px -1px rgba(0,0,0,0.55)"></div><div style="position:absolute;left:755px;top:633px;width:48px;height:16px;box-sizing:border-box;border-top:1px solid #6a6a6a;border-left:1px solid #d8d8d8;border-right:1px solid #d8d8d8;border-bottom:1px solid #c8ccd0;background:linear-gradient(180deg,#5b6c5d 0%,#58695a 30%,#33473a 52%,#1a301c 72%,#142a16 86%,#4f614f 100%);box-shadow:inset 3px 0 3px -1px rgba(0,0,0,0.55),inset -3px 0 3px -1px rgba(0,0,0,0.55)"></div><div style="position:absolute;left:819px;top:633px;width:16px;height:16px;box-sizing:border-box;border-radius:50%;border:1.5px solid #c4c4c4;background:linear-gradient(180deg,#4a5b4c 0%,#5b6c5d 30%,#2a3e2c 55%,#142a16 85%,#2a3e2c 100%);box-shadow:inset 0 0 0 1px #000"></div><div style="position:absolute;left:851px;top:634px;font-size:16px;line-height:16px;color:#fff;white-space:nowrap;">S2动作注释22</div><div style="position:absolute;left:371px;top:653px;width:16px;height:16px;box-sizing:border-box;border-radius:50%;border:1.5px solid #c4c4c4;background:linear-gradient(180deg,#3e5c6e 0%,#4f6d7e 30%,#1b3a52 55%,#0e2b44 85%,#1e3f58 100%);box-shadow:inset 0 0 0 1px #000"></div><div style="position:absolute;left:403px;top:654px;font-size:16px;line-height:16px;color:#fff;white-space:nowrap;">S2条件注释23</div><div style="position:absolute;left:611px;top:653px;width:48px;height:16px;box-sizing:border-box;border-top:1px solid #6a6a6a;border-left:1px solid #d8d8d8;border-right:1px solid #d8d8d8;border-bottom:1px solid #c8ccd0;background:linear-gradient(180deg,#5b6c5d 0%,#58695a 30%,#33473a 52%,#1a301c 72%,#142a16 86%,#4f614f 100%);box-shadow:inset 3px 0 3px -1px rgba(0,0,0,0.55),inset -3px 0 3px -1px rgba(0,0,0,0.55)"></div><div style="position:absolute;left:675px;top:653px;width:48px;height:16px;box-sizing:border-box;border-top:1px solid #6a6a6a;border-left:1px solid #d8d8d8;border-right:1px solid #d8d8d8;border-bottom:1px solid #c8ccd0;background:linear-gradient(180deg,#5b6c5d 0%,#58695a 30%,#33473a 52%,#1a301c 72%,#142a16 86%,#4f614f 100%);box-shadow:inset 3px 0 3px -1px rgba(0,0,0,0.55),inset -3px 0 3px -1px rgba(0,0,0,0.55)"></div><div style="position:absolute;left:755px;top:653px;width:48px;height:16px;box-sizing:border-box;border-top:1px solid #6a6a6a;border-left:1px solid #d8d8d8;border-right:1px solid #d8d8d8;border-bottom:1px solid #c8ccd0;background:linear-gradient(180deg,#5b6c5d 0%,#58695a 30%,#33473a 52%,#1a301c 72%,#142a16 86%,#4f614f 100%);box-shadow:inset 3px 0 3px -1px rgba(0,0,0,0.55),inset -3px 0 3px -1px rgba(0,0,0,0.55)"></div><div style="position:absolute;left:819px;top:653px;width:16px;height:16px;box-sizing:border-box;border-radius:50%;border:1.5px solid #c4c4c4;background:linear-gradient(180deg,#4a5b4c 0%,#5b6c5d 30%,#2a3e2c 55%,#142a16 85%,#2a3e2c 100%);box-shadow:inset 0 0 0 1px #000"></div><div style="position:absolute;left:851px;top:654px;font-size:16px;line-height:16px;color:#fff;white-space:nowrap;">S2动作注释23</div><div style="position:absolute;left:371px;top:673px;width:16px;height:16px;box-sizing:border-box;border-radius:50%;border:1.5px solid #c4c4c4;background:linear-gradient(180deg,#3e5c6e 0%,#4f6d7e 30%,#1b3a52 55%,#0e2b44 85%,#1e3f58 100%);box-shadow:inset 0 0 0 1px #000"></div><div style="position:absolute;left:403px;top:674px;font-size:16px;line-height:16px;color:#fff;white-space:nowrap;">S2条件注释24</div><div style="position:absolute;left:611px;top:673px;width:48px;height:16px;box-sizing:border-box;border-top:1px solid #6a6a6a;border-left:1px solid #d8d8d8;border-right:1px solid #d8d8d8;border-bottom:1px solid #c8ccd0;background:linear-gradient(180deg,#5b6c5d 0%,#58695a 30%,#33473a 52%,#1a301c 72%,#142a16 86%,#4f614f 100%);box-shadow:inset 3px 0 3px -1px rgba(0,0,0,0.55),inset -3px 0 3px -1px rgba(0,0,0,0.55)"></div><div style="position:absolute;left:675px;top:673px;width:48px;height:16px;box-sizing:border-box;border-top:1px solid #6a6a6a;border-left:1px solid #d8d8d8;border-right:1px solid #d8d8d8;border-bottom:1px solid #c8ccd0;background:linear-gradient(180deg,#5b6c5d 0%,#58695a 30%,#33473a 52%,#1a301c 72%,#142a16 86%,#4f614f 100%);box-shadow:inset 3px 0 3px -1px rgba(0,0,0,0.55),inset -3px 0 3px -1px rgba(0,0,0,0.55)"></div><div style="position:absolute;left:755px;top:673px;width:48px;height:16px;box-sizing:border-box;border-top:1px solid #6a6a6a;border-left:1px solid #d8d8d8;border-right:1px solid #d8d8d8;border-bottom:1px solid #c8ccd0;background:linear-gradient(180deg,#5b6c5d 0%,#58695a 30%,#33473a 52%,#1a301c 72%,#142a16 86%,#4f614f 100%);box-shadow:inset 3px 0 3px -1px rgba(0,0,0,0.55),inset -3px 0 3px -1px rgba(0,0,0,0.55)"></div><div style="position:absolute;left:819px;top:673px;width:16px;height:16px;box-sizing:border-box;border-radius:50%;border:1.5px solid #c4c4c4;background:linear-gradient(180deg,#4a5b4c 0%,#5b6c5d 30%,#2a3e2c 55%,#142a16 85%,#2a3e2c 100%);box-shadow:inset 0 0 0 1px #000"></div><div style="position:absolute;left:851px;top:674px;font-size:16px;line-height:16px;color:#fff;white-space:nowrap;">S2动作注释24</div><div style="position:absolute;left:371px;top:693px;width:16px;height:16px;box-sizing:border-box;border-radius:50%;border:1.5px solid #c4c4c4;background:linear-gradient(180deg,#3e5c6e 0%,#4f6d7e 30%,#1b3a52 55%,#0e2b44 85%,#1e3f58 100%);box-shadow:inset 0 0 0 1px #000"></div><div style="position:absolute;left:403px;top:694px;font-size:16px;line-height:16px;color:#fff;white-space:nowrap;">S2条件注释25</div><div style="position:absolute;left:611px;top:693px;width:48px;height:16px;box-sizing:border-box;border-top:1px solid #6a6a6a;border-left:1px solid #d8d8d8;border-right:1px solid #d8d8d8;border-bottom:1px solid #c8ccd0;background:linear-gradient(180deg,#5b6c5d 0%,#58695a 30%,#33473a 52%,#1a301c 72%,#142a16 86%,#4f614f 100%);box-shadow:inset 3px 0 3px -1px rgba(0,0,0,0.55),inset -3px 0 3px -1px rgba(0,0,0,0.55)"></div><div style="position:absolute;left:675px;top:693px;width:48px;height:16px;box-sizing:border-box;border-top:1px solid #6a6a6a;border-left:1px solid #d8d8d8;border-right:1px solid #d8d8d8;border-bottom:1px solid #c8ccd0;background:linear-gradient(180deg,#5b6c5d 0%,#58695a 30%,#33473a 52%,#1a301c 72%,#142a16 86%,#4f614f 100%);box-shadow:inset 3px 0 3px -1px rgba(0,0,0,0.55),inset -3px 0 3px -1px rgba(0,0,0,0.55)"></div><div style="position:absolute;left:755px;top:693px;width:48px;height:16px;box-sizing:border-box;border-top:1px solid #6a6a6a;border-left:1px solid #d8d8d8;border-right:1px solid #d8d8d8;border-bottom:1px solid #c8ccd0;background:linear-gradient(180deg,#5b6c5d 0%,#58695a 30%,#33473a 52%,#1a301c 72%,#142a16 86%,#4f614f 100%);box-shadow:inset 3px 0 3px -1px rgba(0,0,0,0.55),inset -3px 0 3px -1px rgba(0,0,0,0.55)"></div><div style="position:absolute;left:819px;top:693px;width:16px;height:16px;box-sizing:border-box;border-radius:50%;border:1.5px solid #c4c4c4;background:linear-gradient(180deg,#4a5b4c 0%,#5b6c5d 30%,#2a3e2c 55%,#142a16 85%,#2a3e2c 100%);box-shadow:inset 0 0 0 1px #000"></div><div style="position:absolute;left:851px;top:694px;font-size:16px;line-height:16px;color:#fff;white-space:nowrap;">S2动作注释25</div><div style="position:absolute;left:371px;top:713px;width:16px;height:16px;box-sizing:border-box;border-radius:50%;border:1.5px solid #c4c4c4;background:linear-gradient(180deg,#3e5c6e 0%,#4f6d7e 30%,#1b3a52 55%,#0e2b44 85%,#1e3f58 100%);box-shadow:inset 0 0 0 1px #000"></div><div style="position:absolute;left:403px;top:714px;font-size:16px;line-height:16px;color:#fff;white-space:nowrap;">S2条件注释26</div><div style="position:absolute;left:611px;top:713px;width:48px;height:16px;box-sizing:border-box;border-top:1px solid #6a6a6a;border-left:1px solid #d8d8d8;border-right:1px solid #d8d8d8;border-bottom:1px solid #c8ccd0;background:linear-gradient(180deg,#5b6c5d 0%,#58695a 30%,#33473a 52%,#1a301c 72%,#142a16 86%,#4f614f 100%);box-shadow:inset 3px 0 3px -1px rgba(0,0,0,0.55),inset -3px 0 3px -1px rgba(0,0,0,0.55)"></div><div style="position:absolute;left:675px;top:713px;width:48px;height:16px;box-sizing:border-box;border-top:1px solid #6a6a6a;border-left:1px solid #d8d8d8;border-right:1px solid #d8d8d8;border-bottom:1px solid #c8ccd0;background:linear-gradient(180deg,#5b6c5d 0%,#58695a 30%,#33473a 52%,#1a301c 72%,#142a16 86%,#4f614f 100%);box-shadow:inset 3px 0 3px -1px rgba(0,0,0,0.55),inset -3px 0 3px -1px rgba(0,0,0,0.55)"></div><div style="position:absolute;left:755px;top:713px;width:48px;height:16px;box-sizing:border-box;border-top:1px solid #6a6a6a;border-left:1px solid #d8d8d8;border-right:1px solid #d8d8d8;border-bottom:1px solid #c8ccd0;background:linear-gradient(180deg,#5b6c5d 0%,#58695a 30%,#33473a 52%,#1a301c 72%,#142a16 86%,#4f614f 100%);box-shadow:inset 3px 0 3px -1px rgba(0,0,0,0.55),inset -3px 0 3px -1px rgba(0,0,0,0.55)"></div><div style="position:absolute;left:819px;top:713px;width:16px;height:16px;box-sizing:border-box;border-radius:50%;border:1.5px solid #c4c4c4;background:linear-gradient(180deg,#4a5b4c 0%,#5b6c5d 30%,#2a3e2c 55%,#142a16 85%,#2a3e2c 100%);box-shadow:inset 0 0 0 1px #000"></div><div style="position:absolute;left:851px;top:714px;font-size:16px;line-height:16px;color:#fff;white-space:nowrap;">S2动作注释26</div><div style="position:absolute;left:371px;top:733px;width:16px;height:16px;box-sizing:border-box;border-radius:50%;border:1.5px solid #c4c4c4;background:linear-gradient(180deg,#3e5c6e 0%,#4f6d7e 30%,#1b3a52 55%,#0e2b44 85%,#1e3f58 100%);box-shadow:inset 0 0 0 1px #000"></div><div style="position:absolute;left:403px;top:734px;font-size:16px;line-height:16px;color:#fff;white-space:nowrap;">S2条件注释27</div><div style="position:absolute;left:611px;top:733px;width:48px;height:16px;box-sizing:border-box;border-top:1px solid #6a6a6a;border-left:1px solid #d8d8d8;border-right:1px solid #d8d8d8;border-bottom:1px solid #c8ccd0;background:linear-gradient(180deg,#5b6c5d 0%,#58695a 30%,#33473a 52%,#1a301c 72%,#142a16 86%,#4f614f 100%);box-shadow:inset 3px 0 3px -1px rgba(0,0,0,0.55),inset -3px 0 3px -1px rgba(0,0,0,0.55)"></div><div style="position:absolute;left:675px;top:733px;width:48px;height:16px;box-sizing:border-box;border-top:1px solid #6a6a6a;border-left:1px solid #d8d8d8;border-right:1px solid #d8d8d8;border-bottom:1px solid #c8ccd0;background:linear-gradient(180deg,#5b6c5d 0%,#58695a 30%,#33473a 52%,#1a301c 72%,#142a16 86%,#4f614f 100%);box-shadow:inset 3px 0 3px -1px rgba(0,0,0,0.55),inset -3px 0 3px -1px rgba(0,0,0,0.55)"></div><div style="position:absolute;left:755px;top:733px;width:48px;height:16px;box-sizing:border-box;border-top:1px solid #6a6a6a;border-left:1px solid #d8d8d8;border-right:1px solid #d8d8d8;border-bottom:1px solid #c8ccd0;background:linear-gradient(180deg,#5b6c5d 0%,#58695a 30%,#33473a 52%,#1a301c 72%,#142a16 86%,#4f614f 100%);box-shadow:inset 3px 0 3px -1px rgba(0,0,0,0.55),inset -3px 0 3px -1px rgba(0,0,0,0.55)"></div><div style="position:absolute;left:819px;top:733px;width:16px;height:16px;box-sizing:border-box;border-radius:50%;border:1.5px solid #c4c4c4;background:linear-gradient(180deg,#4a5b4c 0%,#5b6c5d 30%,#2a3e2c 55%,#142a16 85%,#2a3e2c 100%);box-shadow:inset 0 0 0 1px #000"></div><div style="position:absolute;left:851px;top:734px;font-size:16px;line-height:16px;color:#fff;white-space:nowrap;">S2动作注释27</div><div style="position:absolute;left:371px;top:753px;width:16px;height:16px;box-sizing:border-box;border-radius:50%;border:1.5px solid #c4c4c4;background:linear-gradient(180deg,#3e5c6e 0%,#4f6d7e 30%,#1b3a52 55%,#0e2b44 85%,#1e3f58 100%);box-shadow:inset 0 0 0 1px #000"></div><div style="position:absolute;left:403px;top:754px;font-size:16px;line-height:16px;color:#fff;white-space:nowrap;">S2条件注释28</div><div style="position:absolute;left:611px;top:753px;width:48px;height:16px;box-sizing:border-box;border-top:1px solid #6a6a6a;border-left:1px solid #d8d8d8;border-right:1px solid #d8d8d8;border-bottom:1px solid #c8ccd0;background:linear-gradient(180deg,#5b6c5d 0%,#58695a 30%,#33473a 52%,#1a301c 72%,#142a16 86%,#4f614f 100%);box-shadow:inset 3px 0 3px -1px rgba(0,0,0,0.55),inset -3px 0 3px -1px rgba(0,0,0,0.55)"></div><div style="position:absolute;left:675px;top:753px;width:48px;height:16px;box-sizing:border-box;border-top:1px solid #6a6a6a;border-left:1px solid #d8d8d8;border-right:1px solid #d8d8d8;border-bottom:1px solid #c8ccd0;background:linear-gradient(180deg,#5b6c5d 0%,#58695a 30%,#33473a 52%,#1a301c 72%,#142a16 86%,#4f614f 100%);box-shadow:inset 3px 0 3px -1px rgba(0,0,0,0.55),inset -3px 0 3px -1px rgba(0,0,0,0.55)"></div><div style="position:absolute;left:755px;top:753px;width:48px;height:16px;box-sizing:border-box;border-top:1px solid #6a6a6a;border-left:1px solid #d8d8d8;border-right:1px solid #d8d8d8;border-bottom:1px solid #c8ccd0;background:linear-gradient(180deg,#5b6c5d 0%,#58695a 30%,#33473a 52%,#1a301c 72%,#142a16 86%,#4f614f 100%);box-shadow:inset 3px 0 3px -1px rgba(0,0,0,0.55),inset -3px 0 3px -1px rgba(0,0,0,0.55)"></div><div style="position:absolute;left:819px;top:753px;width:16px;height:16px;box-sizing:border-box;border-radius:50%;border:1.5px solid #c4c4c4;background:linear-gradient(180deg,#4a5b4c 0%,#5b6c5d 30%,#2a3e2c 55%,#142a16 85%,#2a3e2c 100%);box-shadow:inset 0 0 0 1px #000"></div><div style="position:absolute;left:851px;top:754px;font-size:16px;line-height:16px;color:#fff;white-space:nowrap;">S2动作注释28</div><div style="position:absolute;left:371px;top:773px;width:16px;height:16px;box-sizing:border-box;border-radius:50%;border:1.5px solid #c4c4c4;background:linear-gradient(180deg,#3e5c6e 0%,#4f6d7e 30%,#1b3a52 55%,#0e2b44 85%,#1e3f58 100%);box-shadow:inset 0 0 0 1px #000"></div><div style="position:absolute;left:403px;top:774px;font-size:16px;line-height:16px;color:#fff;white-space:nowrap;">S2条件注释29</div><div style="position:absolute;left:611px;top:773px;width:48px;height:16px;box-sizing:border-box;border-top:1px solid #6a6a6a;border-left:1px solid #d8d8d8;border-right:1px solid #d8d8d8;border-bottom:1px solid #c8ccd0;background:linear-gradient(180deg,#5b6c5d 0%,#58695a 30%,#33473a 52%,#1a301c 72%,#142a16 86%,#4f614f 100%);box-shadow:inset 3px 0 3px -1px rgba(0,0,0,0.55),inset -3px 0 3px -1px rgba(0,0,0,0.55)"></div><div style="position:absolute;left:675px;top:773px;width:48px;height:16px;box-sizing:border-box;border-top:1px solid #6a6a6a;border-left:1px solid #d8d8d8;border-right:1px solid #d8d8d8;border-bottom:1px solid #c8ccd0;background:linear-gradient(180deg,#5b6c5d 0%,#58695a 30%,#33473a 52%,#1a301c 72%,#142a16 86%,#4f614f 100%);box-shadow:inset 3px 0 3px -1px rgba(0,0,0,0.55),inset -3px 0 3px -1px rgba(0,0,0,0.55)"></div><div style="position:absolute;left:755px;top:773px;width:48px;height:16px;box-sizing:border-box;border-top:1px solid #6a6a6a;border-left:1px solid #d8d8d8;border-right:1px solid #d8d8d8;border-bottom:1px solid #c8ccd0;background:linear-gradient(180deg,#5b6c5d 0%,#58695a 30%,#33473a 52%,#1a301c 72%,#142a16 86%,#4f614f 100%);box-shadow:inset 3px 0 3px -1px rgba(0,0,0,0.55),inset -3px 0 3px -1px rgba(0,0,0,0.55)"></div><div style="position:absolute;left:819px;top:773px;width:16px;height:16px;box-sizing:border-box;border-radius:50%;border:1.5px solid #c4c4c4;background:linear-gradient(180deg,#4a5b4c 0%,#5b6c5d 30%,#2a3e2c 55%,#142a16 85%,#2a3e2c 100%);box-shadow:inset 0 0 0 1px #000"></div><div style="position:absolute;left:851px;top:774px;font-size:16px;line-height:16px;color:#fff;white-space:nowrap;">S2动作注释29</div><div style="position:absolute;left:371px;top:793px;width:16px;height:16px;box-sizing:border-box;border-radius:50%;border:1.5px solid #c4c4c4;background:linear-gradient(180deg,#3e5c6e 0%,#4f6d7e 30%,#1b3a52 55%,#0e2b44 85%,#1e3f58 100%);box-shadow:inset 0 0 0 1px #000"></div><div style="position:absolute;left:403px;top:794px;font-size:16px;line-height:16px;color:#fff;white-space:nowrap;">S2条件注释30</div><div style="position:absolute;left:611px;top:793px;width:48px;height:16px;box-sizing:border-box;border-top:1px solid #6a6a6a;border-left:1px solid #d8d8d8;border-right:1px solid #d8d8d8;border-bottom:1px solid #c8ccd0;background:linear-gradient(180deg,#5b6c5d 0%,#58695a 30%,#33473a 52%,#1a301c 72%,#142a16 86%,#4f614f 100%);box-shadow:inset 3px 0 3px -1px rgba(0,0,0,0.55),inset -3px 0 3px -1px rgba(0,0,0,0.55)"></div><div style="position:absolute;left:675px;top:793px;width:48px;height:16px;box-sizing:border-box;border-top:1px solid #6a6a6a;border-left:1px solid #d8d8d8;border-right:1px solid #d8d8d8;border-bottom:1px solid #c8ccd0;background:linear-gradient(180deg,#5b6c5d 0%,#58695a 30%,#33473a 52%,#1a301c 72%,#142a16 86%,#4f614f 100%);box-shadow:inset 3px 0 3px -1px rgba(0,0,0,0.55),inset -3px 0 3px -1px rgba(0,0,0,0.55)"></div><div style="position:absolute;left:755px;top:793px;width:48px;height:16px;box-sizing:border-box;border-top:1px solid #6a6a6a;border-left:1px solid #d8d8d8;border-right:1px solid #d8d8d8;border-bottom:1px solid #c8ccd0;background:linear-gradient(180deg,#5b6c5d 0%,#58695a 30%,#33473a 52%,#1a301c 72%,#142a16 86%,#4f614f 100%);box-shadow:inset 3px 0 3px -1px rgba(0,0,0,0.55),inset -3px 0 3px -1px rgba(0,0,0,0.55)"></div><div style="position:absolute;left:819px;top:793px;width:16px;height:16px;box-sizing:border-box;border-radius:50%;border:1.5px solid #c4c4c4;background:linear-gradient(180deg,#4a5b4c 0%,#5b6c5d 30%,#2a3e2c 55%,#142a16 85%,#2a3e2c 100%);box-shadow:inset 0 0 0 1px #000"></div><div style="position:absolute;left:851px;top:794px;font-size:16px;line-height:16px;color:#fff;white-space:nowrap;">S2动作注释30</div><div style="position:absolute;left:371px;top:813px;width:16px;height:16px;box-sizing:border-box;border-radius:50%;border:1.5px solid #c4c4c4;background:linear-gradient(180deg,#3e5c6e 0%,#4f6d7e 30%,#1b3a52 55%,#0e2b44 85%,#1e3f58 100%);box-shadow:inset 0 0 0 1px #000"></div><div style="position:absolute;left:403px;top:814px;font-size:16px;line-height:16px;color:#fff;white-space:nowrap;">S2条件注释31</div><div style="position:absolute;left:611px;top:813px;width:48px;height:16px;box-sizing:border-box;border-top:1px solid #6a6a6a;border-left:1px solid #d8d8d8;border-right:1px solid #d8d8d8;border-bottom:1px solid #c8ccd0;background:linear-gradient(180deg,#5b6c5d 0%,#58695a 30%,#33473a 52%,#1a301c 72%,#142a16 86%,#4f614f 100%);box-shadow:inset 3px 0 3px -1px rgba(0,0,0,0.55),inset -3px 0 3px -1px rgba(0,0,0,0.55)"></div><div style="position:absolute;left:675px;top:813px;width:48px;height:16px;box-sizing:border-box;border-top:1px solid #6a6a6a;border-left:1px solid #d8d8d8;border-right:1px solid #d8d8d8;border-bottom:1px solid #c8ccd0;background:linear-gradient(180deg,#5b6c5d 0%,#58695a 30%,#33473a 52%,#1a301c 72%,#142a16 86%,#4f614f 100%);box-shadow:inset 3px 0 3px -1px rgba(0,0,0,0.55),inset -3px 0 3px -1px rgba(0,0,0,0.55)"></div><div style="position:absolute;left:755px;top:813px;width:48px;height:16px;box-sizing:border-box;border-top:1px solid #6a6a6a;border-left:1px solid #d8d8d8;border-right:1px solid #d8d8d8;border-bottom:1px solid #c8ccd0;background:linear-gradient(180deg,#5b6c5d 0%,#58695a 30%,#33473a 52%,#1a301c 72%,#142a16 86%,#4f614f 100%);box-shadow:inset 3px 0 3px -1px rgba(0,0,0,0.55),inset -3px 0 3px -1px rgba(0,0,0,0.55)"></div><div style="position:absolute;left:819px;top:813px;width:16px;height:16px;box-sizing:border-box;border-radius:50%;border:1.5px solid #c4c4c4;background:linear-gradient(180deg,#4a5b4c 0%,#5b6c5d 30%,#2a3e2c 55%,#142a16 85%,#2a3e2c 100%);box-shadow:inset 0 0 0 1px #000"></div><div style="position:absolute;left:851px;top:814px;font-size:16px;line-height:16px;color:#fff;white-space:nowrap;">S2动作注释31</div><div style="position:absolute;left:371px;top:833px;width:16px;height:16px;box-sizing:border-box;border-radius:50%;border:1.5px solid #c4c4c4;background:linear-gradient(180deg,#3e5c6e 0%,#4f6d7e 30%,#1b3a52 55%,#0e2b44 85%,#1e3f58 100%);box-shadow:inset 0 0 0 1px #000"></div><div style="position:absolute;left:403px;top:834px;font-size:16px;line-height:16px;color:#fff;white-space:nowrap;">S2条件注释32</div><div style="position:absolute;left:611px;top:833px;width:48px;height:16px;box-sizing:border-box;border-top:1px solid #6a6a6a;border-left:1px solid #d8d8d8;border-right:1px solid #d8d8d8;border-bottom:1px solid #c8ccd0;background:linear-gradient(180deg,#5b6c5d 0%,#58695a 30%,#33473a 52%,#1a301c 72%,#142a16 86%,#4f614f 100%);box-shadow:inset 3px 0 3px -1px rgba(0,0,0,0.55),inset -3px 0 3px -1px rgba(0,0,0,0.55)"></div><div style="position:absolute;left:675px;top:833px;width:48px;height:16px;box-sizing:border-box;border-top:1px solid #6a6a6a;border-left:1px solid #d8d8d8;border-right:1px solid #d8d8d8;border-bottom:1px solid #c8ccd0;background:linear-gradient(180deg,#5b6c5d 0%,#58695a 30%,#33473a 52%,#1a301c 72%,#142a16 86%,#4f614f 100%);box-shadow:inset 3px 0 3px -1px rgba(0,0,0,0.55),inset -3px 0 3px -1px rgba(0,0,0,0.55)"></div><div style="position:absolute;left:755px;top:833px;width:48px;height:16px;box-sizing:border-box;border-top:1px solid #6a6a6a;border-left:1px solid #d8d8d8;border-right:1px solid #d8d8d8;border-bottom:1px solid #c8ccd0;background:linear-gradient(180deg,#5b6c5d 0%,#58695a 30%,#33473a 52%,#1a301c 72%,#142a16 86%,#4f614f 100%);box-shadow:inset 3px 0 3px -1px rgba(0,0,0,0.55),inset -3px 0 3px -1px rgba(0,0,0,0.55)"></div><div style="position:absolute;left:819px;top:833px;width:16px;height:16px;box-sizing:border-box;border-radius:50%;border:1.5px solid #c4c4c4;background:linear-gradient(180deg,#4a5b4c 0%,#5b6c5d 30%,#2a3e2c 55%,#142a16 85%,#2a3e2c 100%);box-shadow:inset 0 0 0 1px #000"></div><div style="position:absolute;left:851px;top:834px;font-size:16px;line-height:16px;color:#fff;white-space:nowrap;">S2动作注释32</div><div style="position:absolute;left:36px;top:226px;width:128px;height:47px;"><div style="position:absolute;left:0px;top:0px;width:128px;height:47px;background:linear-gradient(180deg,#8d9096 0%,#e8eaee 6%,#f7f8fa 50%,#c4c7cc 92%,#8a8d92 100%)"></div><div style="position:absolute;left:0px;top:0px;width:6px;height:47px;background:linear-gradient(90deg,#6c6f74 0%,#f2f4f6 35%,#d6d9dd 70%,#a3a6ab 100%)"></div><div style="position:absolute;left:122px;top:0px;width:6px;height:47px;background:linear-gradient(90deg,#a3a6ab 0%,#d6d9dd 30%,#f2f4f6 65%,#6c6f74 100%)"></div><div style="position:absolute;left:6px;top:3px;width:116px;height:40px;background:#1e1e1e"></div><div style="position:absolute;left:7px;top:4px;width:114px;height:38px;background:linear-gradient(180deg,#555 0%,#3c3c3c 50%,#555 100%)"></div><div style="position:absolute;left:11px;top:5px;width:106px;height:37px;background:linear-gradient(180deg,#3b3b3b 0%,#373737 46%,#1b1b1b 46%,#1e1e1e 100%);box-shadow:inset 0 0 0 1px #5e5e5e,inset 0 0 0 2px #3c3c3c"></div><div style="position:absolute;left:0px;top:15px;width:128px;font-size:16px;line-height:16px;color:#fff;white-space:nowrap;text-align:center;">工位1</div></div><div style="position:absolute;left:36px;top:278px;width:128px;height:47px;"><div style="position:absolute;left:0px;top:0px;width:128px;height:47px;background:linear-gradient(180deg,#8d9096 0%,#e8eaee 6%,#f7f8fa 50%,#c4c7cc 92%,#8a8d92 100%)"></div><div style="position:absolute;left:0px;top:0px;width:6px;height:47px;background:linear-gradient(90deg,#6c6f74 0%,#f2f4f6 35%,#d6d9dd 70%,#a3a6ab 100%)"></div><div style="position:absolute;left:122px;top:0px;width:6px;height:47px;background:linear-gradient(90deg,#a3a6ab 0%,#d6d9dd 30%,#f2f4f6 65%,#6c6f74 100%)"></div><div style="position:absolute;left:6px;top:3px;width:116px;height:40px;background:#5a5a5a"></div><div style="position:absolute;left:7px;top:4px;width:114px;height:38px;background:linear-gradient(180deg,#c8c8c8 0%,#9c9c9c 100%)"></div><div style="position:absolute;left:11px;top:5px;width:106px;height:37px;background:radial-gradient(ellipse 70% 75% at 50% 50%,#ffffff 0%,#fdfdfd 55%,#d8d8d8 100%);box-shadow:inset 0 0 0 1px #9a9a9a"></div><div style="position:absolute;left:0px;top:15px;width:128px;font-size:16px;line-height:16px;color:#000;white-space:nowrap;text-align:center;">工位2</div></div><div style="position:absolute;left:36px;top:330px;width:128px;height:47px;"><div style="position:absolute;left:0px;top:0px;width:128px;height:47px;background:linear-gradient(180deg,#8d9096 0%,#e8eaee 6%,#f7f8fa 50%,#c4c7cc 92%,#8a8d92 100%)"></div><div style="position:absolute;left:0px;top:0px;width:6px;height:47px;background:linear-gradient(90deg,#6c6f74 0%,#f2f4f6 35%,#d6d9dd 70%,#a3a6ab 100%)"></div><div style="position:absolute;left:122px;top:0px;width:6px;height:47px;background:linear-gradient(90deg,#a3a6ab 0%,#d6d9dd 30%,#f2f4f6 65%,#6c6f74 100%)"></div><div style="position:absolute;left:6px;top:3px;width:116px;height:40px;background:#1e1e1e"></div><div style="position:absolute;left:7px;top:4px;width:114px;height:38px;background:linear-gradient(180deg,#555 0%,#3c3c3c 50%,#555 100%)"></div><div style="position:absolute;left:11px;top:5px;width:106px;height:37px;background:linear-gradient(180deg,#3b3b3b 0%,#373737 46%,#1b1b1b 46%,#1e1e1e 100%);box-shadow:inset 0 0 0 1px #5e5e5e,inset 0 0 0 2px #3c3c3c"></div><div style="position:absolute;left:0px;top:15px;width:128px;font-size:16px;line-height:16px;color:#fff;white-space:nowrap;text-align:center;">工位3</div></div><div style="position:absolute;left:36px;top:382px;width:128px;height:47px;"><div style="position:absolute;left:0px;top:0px;width:128px;height:47px;background:linear-gradient(180deg,#8d9096 0%,#e8eaee 6%,#f7f8fa 50%,#c4c7cc 92%,#8a8d92 100%)"></div><div style="position:absolute;left:0px;top:0px;width:6px;height:47px;background:linear-gradient(90deg,#6c6f74 0%,#f2f4f6 35%,#d6d9dd 70%,#a3a6ab 100%)"></div><div style="position:absolute;left:122px;top:0px;width:6px;height:47px;background:linear-gradient(90deg,#a3a6ab 0%,#d6d9dd 30%,#f2f4f6 65%,#6c6f74 100%)"></div><div style="position:absolute;left:6px;top:3px;width:116px;height:40px;background:#1e1e1e"></div><div style="position:absolute;left:7px;top:4px;width:114px;height:38px;background:linear-gradient(180deg,#555 0%,#3c3c3c 50%,#555 100%)"></div><div style="position:absolute;left:11px;top:5px;width:106px;height:37px;background:linear-gradient(180deg,#3b3b3b 0%,#373737 46%,#1b1b1b 46%,#1e1e1e 100%);box-shadow:inset 0 0 0 1px #5e5e5e,inset 0 0 0 2px #3c3c3c"></div><div style="position:absolute;left:0px;top:15px;width:128px;font-size:16px;line-height:16px;color:#fff;white-space:nowrap;text-align:center;">工位4</div></div><div style="position:absolute;left:36px;top:434px;width:128px;height:47px;"><div style="position:absolute;left:0px;top:0px;width:128px;height:47px;background:linear-gradient(180deg,#8d9096 0%,#e8eaee 6%,#f7f8fa 50%,#c4c7cc 92%,#8a8d92 100%)"></div><div style="position:absolute;left:0px;top:0px;width:6px;height:47px;background:linear-gradient(90deg,#6c6f74 0%,#f2f4f6 35%,#d6d9dd 70%,#a3a6ab 100%)"></div><div style="position:absolute;left:122px;top:0px;width:6px;height:47px;background:linear-gradient(90deg,#a3a6ab 0%,#d6d9dd 30%,#f2f4f6 65%,#6c6f74 100%)"></div><div style="position:absolute;left:6px;top:3px;width:116px;height:40px;background:#1e1e1e"></div><div style="position:absolute;left:7px;top:4px;width:114px;height:38px;background:linear-gradient(180deg,#555 0%,#3c3c3c 50%,#555 100%)"></div><div style="position:absolute;left:11px;top:5px;width:106px;height:37px;background:linear-gradient(180deg,#3b3b3b 0%,#373737 46%,#1b1b1b 46%,#1e1e1e 100%);box-shadow:inset 0 0 0 1px #5e5e5e,inset 0 0 0 2px #3c3c3c"></div><div style="position:absolute;left:0px;top:15px;width:128px;font-size:16px;line-height:16px;color:#fff;white-space:nowrap;text-align:center;">工位5</div></div><div style="position:absolute;left:259px;top:225px;width:97px;height:16px;"><div style="position:absolute;left:0px;top:0px;width:97px;height:16px;box-sizing:border-box;border-top:1px solid #8d8d8d;border-bottom:1px solid #8d8d8d;border-left:3px solid #d8d8d8;border-right:3px solid #d8d8d8;background:radial-gradient(ellipse 60% 65% at 50% 55%,#e2ffe2 0%,#d0ffd0 40%,#8ef78e 80%,#3ee83e 100%)"></div><div style="position:absolute;left:0px;top:-1px;width:97px;font-size:16px;line-height:16px;color:#fff;white-space:nowrap;text-align:center;">自动模式</div></div><div style="position:absolute;left:259px;top:245px;width:97px;height:16px;"><div style="position:absolute;left:0px;top:0px;width:97px;height:16px;box-sizing:border-box;border-top:1px solid #8d8d8d;border-bottom:1px solid #8d8d8d;border-left:3px solid #d8d8d8;border-right:3px solid #d8d8d8;background:linear-gradient(180deg,#5b6c5d 0%,#58695a 30%,#33473a 52%,#1a301c 72%,#142a16 86%,#4f614f 100%)"></div><div style="position:absolute;left:0px;top:-1px;width:97px;font-size:16px;line-height:16px;color:#fff;white-space:nowrap;text-align:center;">单步模式</div></div><div style="position:absolute;left:259px;top:265px;width:97px;height:16px;"><div style="position:absolute;left:0px;top:0px;width:97px;height:16px;box-sizing:border-box;border-top:1px solid #8d8d8d;border-bottom:1px solid #8d8d8d;border-left:3px solid #d8d8d8;border-right:3px solid #d8d8d8;background:linear-gradient(180deg,#5b6c5d 0%,#58695a 30%,#33473a 52%,#1a301c 72%,#142a16 86%,#4f614f 100%)"></div><div style="position:absolute;left:0px;top:-1px;width:97px;font-size:16px;line-height:16px;color:#fff;white-space:nowrap;text-align:center;">单步转移</div></div><div style="position:absolute;left:259px;top:285px;width:97px;height:16px;"><div style="position:absolute;left:0px;top:0px;width:97px;height:16px;box-sizing:border-box;border-top:1px solid #8d8d8d;border-bottom:1px solid #8d8d8d;border-left:3px solid #d8d8d8;border-right:3px solid #d8d8d8;background:linear-gradient(180deg,#5b6c5d 0%,#58695a 30%,#33473a 52%,#1a301c 72%,#142a16 86%,#4f614f 100%)"></div><div style="position:absolute;left:0px;top:-1px;width:97px;font-size:16px;line-height:16px;color:#fff;white-space:nowrap;text-align:center;">编辑模式</div></div><div style="position:absolute;left:259px;top:305px;width:97px;height:16px;"><div style="position:absolute;left:0px;top:0px;width:97px;height:16px;box-sizing:border-box;border-top:1px solid #8d8d8d;border-bottom:1px solid #8d8d8d;border-left:3px solid #d8d8d8;border-right:3px solid #d8d8d8;background:radial-gradient(ellipse 60% 65% at 50% 55%,#e2ffe2 0%,#d0ffd0 40%,#8ef78e 80%,#3ee83e 100%)"></div><div style="position:absolute;left:0px;top:-1px;width:97px;font-size:16px;line-height:16px;color:#fff;white-space:nowrap;text-align:center;">监控超时选择</div></div><div style="position:absolute;left:259px;top:325px;width:97px;height:16px;"><div style="position:absolute;left:0px;top:0px;width:97px;height:16px;box-sizing:border-box;border-top:1px solid #8d8d8d;border-bottom:1px solid #8d8d8d;border-left:3px solid #d8d8d8;border-right:3px solid #d8d8d8;background:linear-gradient(180deg,#5b6c5d 0%,#58695a 30%,#33473a 52%,#1a301c 72%,#142a16 86%,#4f614f 100%)"></div><div style="position:absolute;left:0px;top:-1px;width:97px;font-size:16px;line-height:16px;color:#fff;white-space:nowrap;text-align:center;">转移条件OK</div></div><div style="position:absolute;left:259px;top:345px;width:97px;height:16px;"><div style="position:absolute;left:0px;top:0px;width:97px;height:16px;box-sizing:border-box;border-top:1px solid #8d8d8d;border-bottom:1px solid #8d8d8d;border-left:3px solid #d8d8d8;border-right:3px solid #d8d8d8;background:radial-gradient(ellipse 60% 65% at 50% 55%,#e2ffe2 0%,#d0ffd0 40%,#8ef78e 80%,#3ee83e 100%)"></div><div style="position:absolute;left:0px;top:-1px;width:97px;font-size:16px;line-height:16px;color:#fff;white-space:nowrap;text-align:center;">异常</div></div><div style="position:absolute;left:259px;top:365px;width:97px;height:16px;"><div style="position:absolute;left:0px;top:0px;width:97px;height:16px;box-sizing:border-box;border-top:1px solid #8d8d8d;border-bottom:1px solid #8d8d8d;border-left:3px solid #d8d8d8;border-right:3px solid #d8d8d8;background:linear-gradient(180deg,#5b6c5d 0%,#58695a 30%,#33473a 52%,#1a301c 72%,#142a16 86%,#4f614f 100%)"></div><div style="position:absolute;left:0px;top:-1px;width:97px;font-size:16px;line-height:16px;color:#fff;white-space:nowrap;text-align:center;">异常复位</div></div><div style="position:absolute;left:259px;top:385px;width:97px;height:16px;"><div style="position:absolute;left:0px;top:0px;width:97px;height:16px;box-sizing:border-box;border-top:1px solid #8d8d8d;border-bottom:1px solid #8d8d8d;border-left:3px solid #d8d8d8;border-right:3px solid #d8d8d8;background:linear-gradient(180deg,#5b6c5d 0%,#58695a 30%,#33473a 52%,#1a301c 72%,#142a16 86%,#4f614f 100%)"></div><div style="position:absolute;left:0px;top:-1px;width:97px;font-size:16px;line-height:16px;color:#fff;white-space:nowrap;text-align:center;">初始化</div></div><div style="position:absolute;left:115px;top:705px;width:177px;height:17px;background:#ff0000"><div style="position:absolute;left:0px;top:0px;width:177px;font-size:16px;line-height:16px;color:#fff;white-space:nowrap;text-align:center;">异常发生</div></div><div style="position:absolute;left:115px;top:725px;font-size:16px;line-height:16px;color:#fff;white-space:nowrap;">S2步2注释</div><div style="position:absolute;left:203px;top:745px;font-size:16px;line-height:16px;color:#fff;white-space:nowrap;">10</div></div></div><div style="position:absolute;left:17px;top:866px;width:1028px;height:20px;background:#f0f0f0;border-top:1px solid #e4e4e4;box-sizing:border-box"></div><div style="position:absolute;left:19px;top:871px;font-size:12px;line-height:12px;color:#000;white-space:nowrap;">就绪</div><div style="position:absolute;right:1161px;top:871px;font-size:12px;line-height:12px;color:#000;white-space:nowrap;text-align:right;">GX Simulator2</div><div style="position:absolute;left:766px;top:868px;width:1px;height:17px;background:#d0d0d0"></div><div style="position:absolute;left:896px;top:868px;width:1px;height:17px;background:#d0d0d0"></div><div style="position:absolute;left:952px;top:868px;width:1px;height:17px;background:#d0d0d0"></div><div style="position:absolute;left:1025px;top:868px;width:1px;height:17px;background:#d0d0d0"></div><div style="position:absolute;left:771px;top:871px;font-size:12px;line-height:12px;color:#000;white-space:nowrap;">MELSEC</div><div style="position:absolute;left:1040px;top:875px;width:2px;height:2px;background:#b8b8b8"></div><div style="position:absolute;left:1040px;top:879px;width:2px;height:2px;background:#b8b8b8"></div><div style="position:absolute;left:1036px;top:879px;width:2px;height:2px;background:#b8b8b8"></div><div style="position:absolute;left:1040px;top:883px;width:2px;height:2px;background:#b8b8b8"></div><div style="position:absolute;left:1036px;top:883px;width:2px;height:2px;background:#b8b8b8"></div><div style="position:absolute;left:1032px;top:883px;width:2px;height:2px;background:#b8b8b8"></div><div style="position:absolute;left:1049px;top:16px;width:251px;height:204px;background:#f0f0f0;border:1px solid #9a9a9a;box-sizing:border-box;box-shadow:1px 2px 8px rgba(0,0,0,0.28)"></div><div style="position:absolute;left:1050px;top:17px;width:249px;height:42px;background:#fff"></div><svg width="16" height="16" viewBox="0 0 16 16" style="position:absolute;left:1052px;top:20px"><rect x="0" y="0" width="16" height="16" fill="#7a7a7a"/><rect x="0" y="0" width="14.5" height="14.5" fill="#d6d6c2"/><rect x="0" y="1" width="14" height="12.5" fill="#0000ff"/><rect x="3.2" y="4" width="7.5" height="6" fill="#d8d8c8"/><rect x="4" y="4.8" width="1.3" height="4.4" fill="#ff0000"/><rect x="6" y="4.8" width="1.2" height="4.4" fill="#808080"/><rect x="8.2" y="4.8" width="1.2" height="4.4" fill="#808080"/></svg><div style="position:absolute;left:1074px;top:21px;font-size:13px;line-height:13px;color:#9a9a9a;white-space:nowrap;">GX Simulator2</div><div style="position:absolute;left:1181px;top:28px;width:10px;height:1px;background:#777"></div><div style="position:absolute;left:1226px;top:23px;width:10px;height:10px;border:1px solid #cfcfcf;box-sizing:border-box"></div><svg width="12" height="12" viewBox="0 0 12 12" style="position:absolute;left:1271px;top:22px"><path d="M1 1L11 11M11 1L1 11" stroke="#cfcfcf" stroke-width="1"/></svg><div style="position:absolute;left:1056px;top:44px;font-size:12px;line-height:12px;color:#222;white-space:nowrap;">工具(T)</div><div style="position:absolute;left:1109px;top:44px;font-size:12px;line-height:12px;color:#222;white-space:nowrap;">选项(O)</div><div style="position:absolute;left:1064px;top:78px;width:209px;height:32px;box-sizing:border-box;border:1px solid #c4c4c4;box-shadow:inset 1px 1px 0 #fff"></div><div style="position:absolute;left:1070px;top:72px;width:28px;height:14px;background:#f0f0f0"><div style="position:absolute;left:2px;top:1px;font-size:12px;line-height:12px;color:#000;white-space:nowrap;">开关</div></div><div style="position:absolute;left:1080px;top:91px;width:11px;height:11px;box-sizing:border-box;border-radius:50%;border:1px solid #777;border-right-color:#e8e8e8;border-bottom-color:#e8e8e8;background:#fff;box-shadow:inset 1px 1px 0 #bbb"></div><div style="position:absolute;left:1097px;top:92px;font-size:10.5px;line-height:10.5px;color:#a0a0a0;white-space:nowrap;letter-spacing:-0.2px">RESET</div><div style="position:absolute;left:1146px;top:91px;width:11px;height:11px;box-sizing:border-box;border-radius:50%;border:1px solid #777;border-right-color:#e8e8e8;border-bottom-color:#e8e8e8;background:#fff;box-shadow:inset 1px 1px 0 #bbb"></div><div style="position:absolute;left:1162px;top:92px;font-size:10.5px;line-height:10.5px;color:#000;white-space:nowrap;letter-spacing:-0.2px">STOP</div><div style="position:absolute;left:1212px;top:90px;width:11px;height:11px;box-sizing:border-box;border-radius:50%;border:1px solid #777;border-right-color:#e8e8e8;border-bottom-color:#e8e8e8;background:#fff;box-shadow:inset 1px 1px 0 #bbb"><div style="position:absolute;left:3px;top:3px;width:4px;height:4px;background:#000;border-radius:50%"></div></div><div style="position:absolute;left:1228px;top:92px;font-size:10.5px;line-height:10.5px;color:#000;white-space:nowrap;letter-spacing:-0.2px">RUN</div><div style="position:absolute;left:1064px;top:121px;width:209px;height:91px;box-sizing:border-box;border:1px solid #c4c4c4;box-shadow:inset 1px 1px 0 #fff"></div><div style="position:absolute;left:1070px;top:115px;width:26px;height:14px;background:#f0f0f0"><div style="position:absolute;left:2px;top:1px;font-size:12px;line-height:12px;color:#000;white-space:nowrap;">LED</div></div><div style="position:absolute;left:1112px;top:129px;width:114px;height:77px;background:#808080"></div><div style="position:absolute;right:757px;top:133px;font-size:13px;line-height:13px;color:#f0f0f0;white-space:nowrap;text-align:right;">MODE</div><div style="position:absolute;left:1181px;top:134px;width:25px;height:10px;background:#00ff00"></div><div style="position:absolute;right:757px;top:151px;font-size:13px;line-height:13px;color:#f0f0f0;white-space:nowrap;text-align:right;">RUN</div><div style="position:absolute;left:1181px;top:152px;width:25px;height:10px;background:#00ff00"></div><div style="position:absolute;right:755px;top:169px;font-size:13px;line-height:13px;color:#f0f0f0;white-space:nowrap;text-align:right;">ERR.</div><div style="position:absolute;left:1181px;top:170px;width:25px;height:10px;background:#c0c0c0"></div><div style="position:absolute;right:757px;top:188px;font-size:13px;line-height:13px;color:#f0f0f0;white-space:nowrap;text-align:right;">USER</div><div style="position:absolute;left:1181px;top:189px;width:25px;height:10px;background:#c0c0c0"></div></div></body></html>
